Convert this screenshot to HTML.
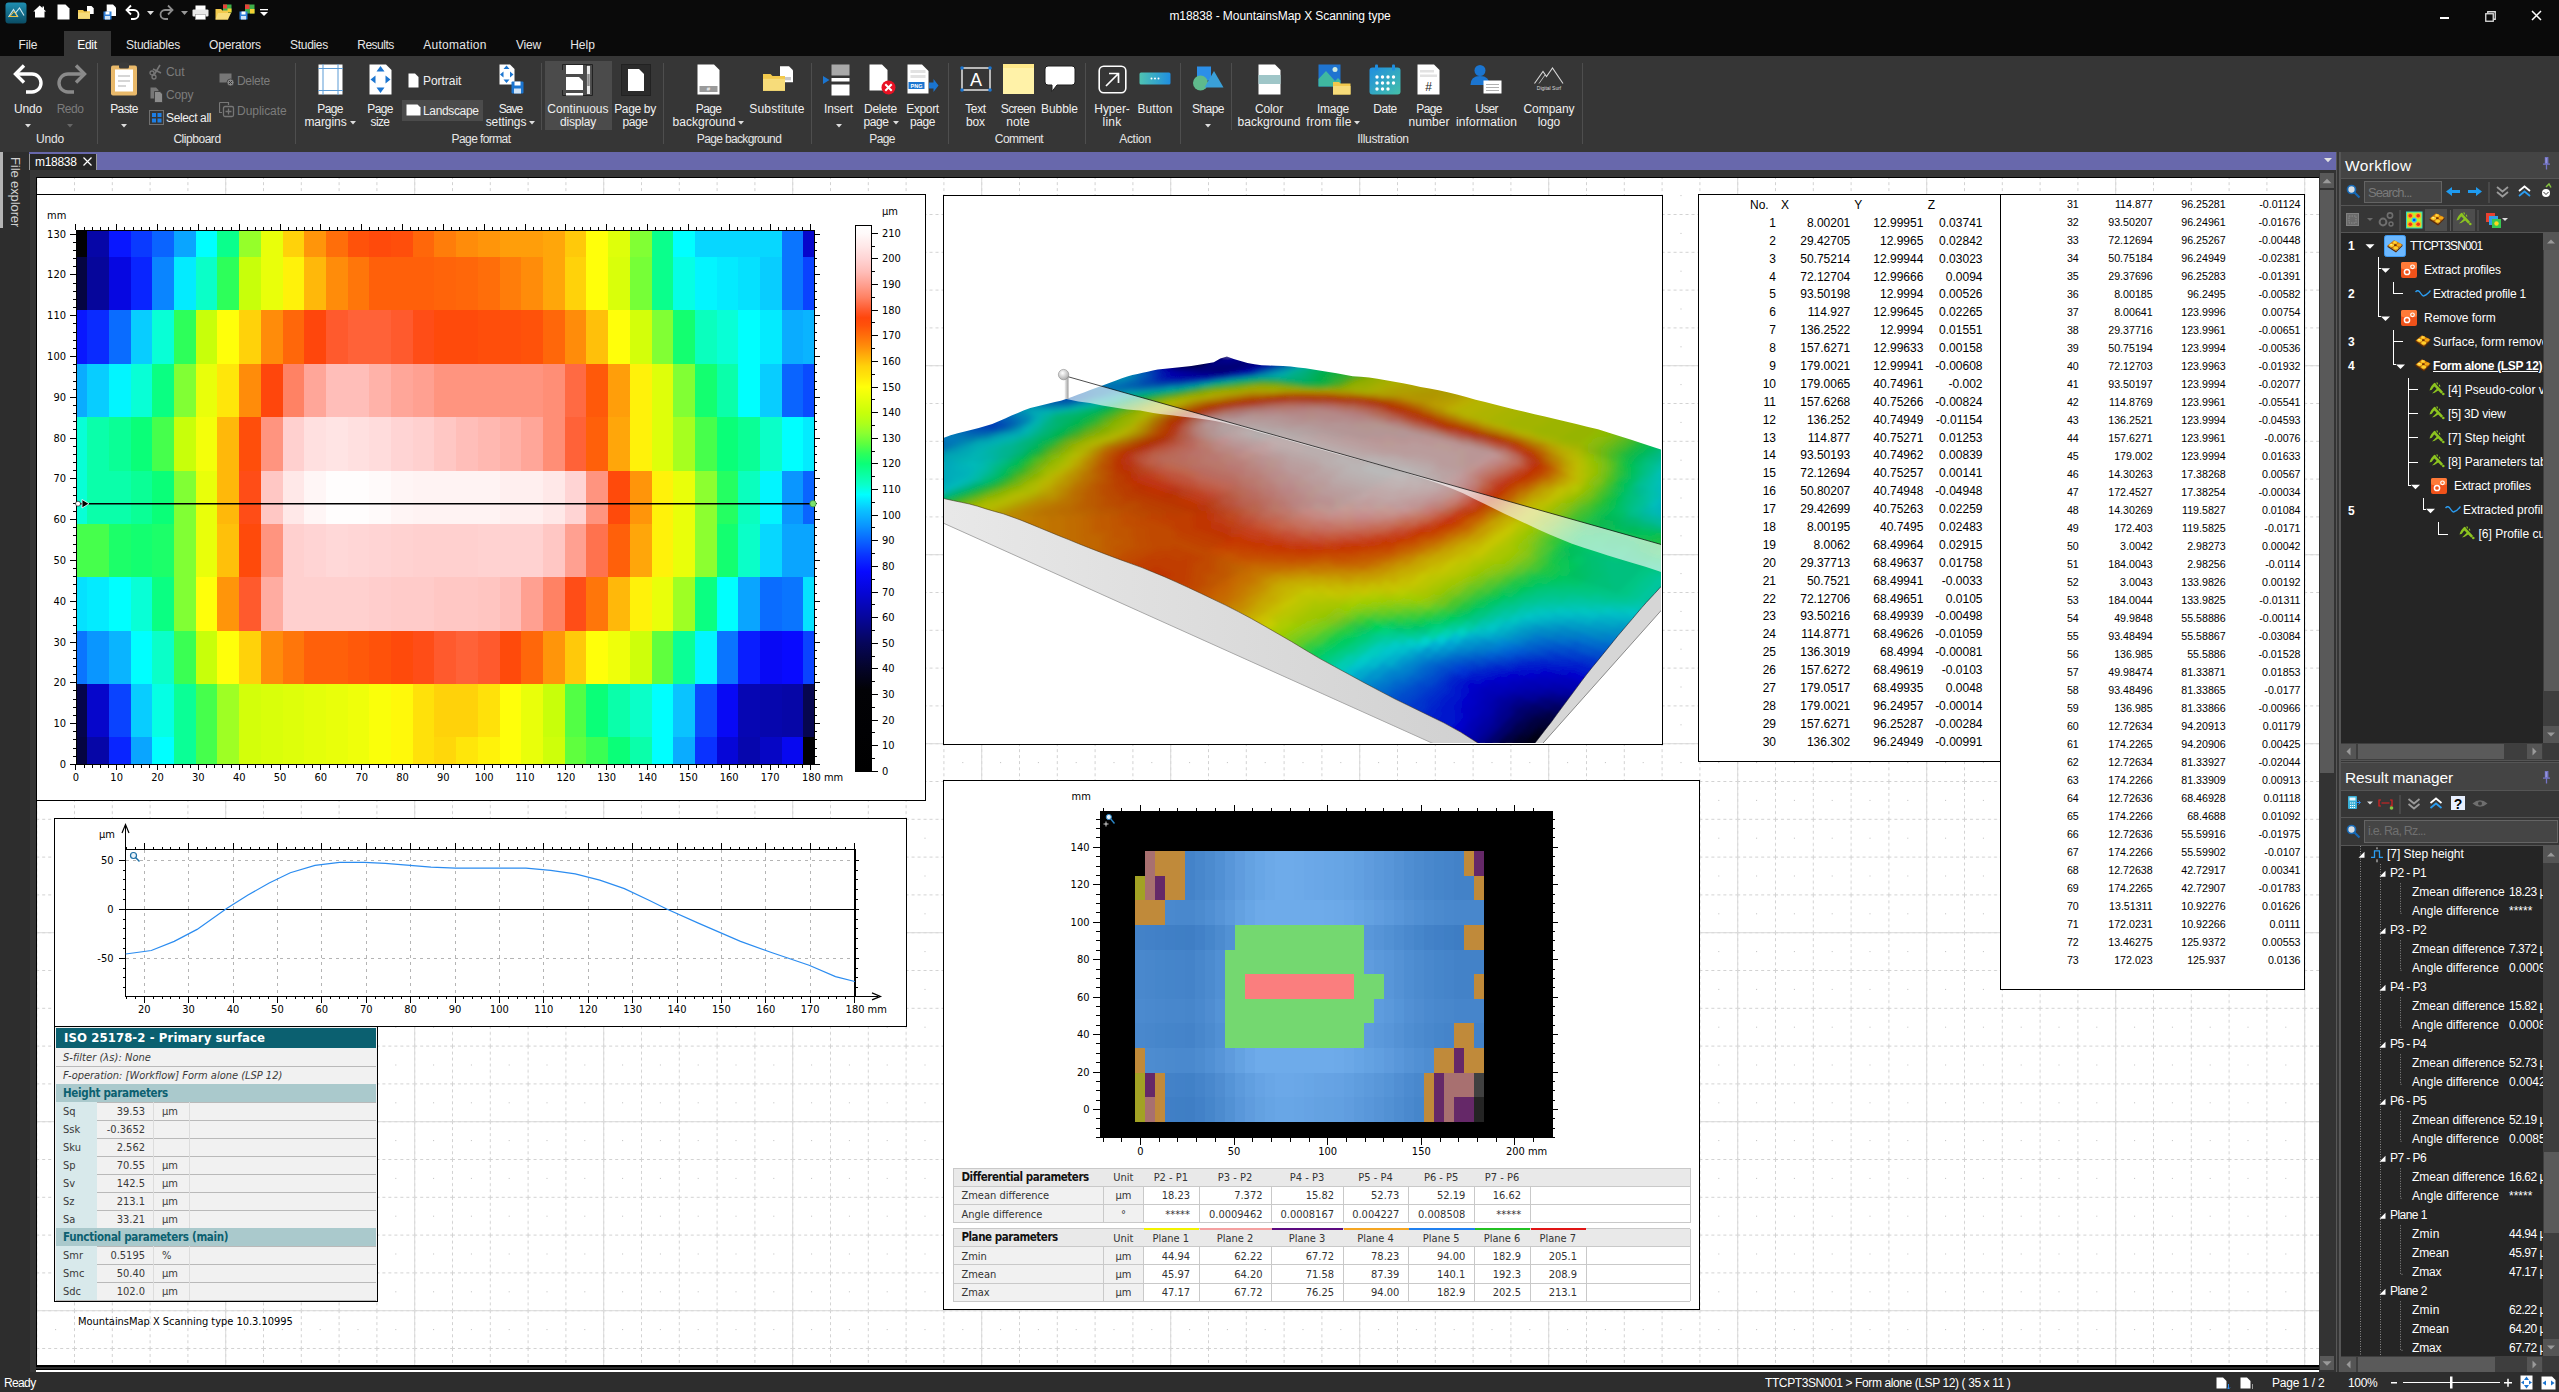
<!DOCTYPE html>
<html lang="en"><head><meta charset="utf-8"><title>m18838 - MountainsMap X Scanning type</title>
<style>
html,body{margin:0;padding:0;}
body{width:2559px;height:1392px;overflow:hidden;background:#363636;position:relative;font-family:"Liberation Sans",sans-serif;}
body div{position:absolute;}
.t{white-space:nowrap;}
.t div{position:static;}
</style></head>
<body>
<div style="left:0px;top:0px;width:2559px;height:56px;background:#0a0a0a;"></div><svg style="position:absolute;left:5px;top:2px" width="22" height="22" viewBox="0 0 22 22"><defs><linearGradient id="ag" x1="0" y1="0" x2="0" y2="1"><stop offset="0" stop-color="#1f8fb2"/><stop offset="1" stop-color="#0a4c64"/></linearGradient></defs><rect x="0.5" y="0.5" width="21" height="21" rx="3" fill="url(#ag)"/><path d="M3.5 15 L8.5 7.5 L13 15 M10.5 11 L14.5 6 L19 13.5" fill="none" stroke="#cfe8f0" stroke-width="1.1"/><path d="M5 14.5 L9 9.5 L12.5 14.5 H4" fill="none" stroke="#f0c040" stroke-width="1"/></svg><svg style="position:absolute;left:33px;top:5px" width="14" height="13" viewBox="0 0 14 13"><path d="M0.3 6.5 L6.7 0.5 L9.5 3 V1.5 H11 V4.5 L13.2 6.5 H11.5 V12.5 H2 V6.5 Z" fill="#fff"/></svg><svg style="position:absolute;left:57px;top:4px" width="13" height="16" viewBox="0 0 13 16"><path d="M0.5 0.5 H8.5 L12.5 4.5 V15.5 H0.5 Z" fill="#fff"/></svg><svg style="position:absolute;left:77px;top:5px" width="18" height="15" viewBox="0 0 18 15"><path d="M10 1 H14.5 L16.7 3.2 V9 H10 Z" fill="#fff"/><path d="M1 5 H6 L7.2 6.3 H13 V13.8 H1 Z" fill="#f2c94c"/><rect x="1" y="7.6" width="12" height="6.2" fill="#f7dc7a"/></svg><svg style="position:absolute;left:103px;top:4px" width="15" height="16" viewBox="0 0 15 16"><path d="M3.7 0.5 H10 L13 3.5 V12 H3.7 Z" fill="#fff"/><rect x="0.5" y="7.5" width="8" height="8" fill="#2f7fd8"/><rect x="2.5" y="7.5" width="4" height="3" fill="#fff"/><rect x="2" y="12" width="5" height="3.5" fill="#cfe3f7"/></svg><svg style="position:absolute;left:125px;top:4px" width="16" height="16" viewBox="0 0 16 16"><path d="M2 6 H9 A4.5 4.5 0 0 1 9 15 H6" fill="none" stroke="#fff" stroke-width="1.8"/><path d="M6 1.5 L1.5 6 L6 10.5" fill="none" stroke="#fff" stroke-width="1.8"/></svg><svg style="position:absolute;left:147px;top:11px" width="7" height="4" viewBox="0 0 7 4"><path d="M0 0 H7 L3.5 4 Z" fill="#ddd"/></svg><svg style="position:absolute;left:158px;top:4px" width="16" height="16" viewBox="0 0 16 16"><path d="M14 6 H7 A4.5 4.5 0 0 0 7 15 H10" fill="none" stroke="#8c8c8c" stroke-width="1.8"/><path d="M10 1.5 L14.5 6 L10 10.5" fill="none" stroke="#8c8c8c" stroke-width="1.8"/></svg><svg style="position:absolute;left:181px;top:11px" width="7" height="4" viewBox="0 0 7 4"><path d="M0 0 H7 L3.5 4 Z" fill="#999"/></svg><svg style="position:absolute;left:192px;top:5px" width="17" height="15" viewBox="0 0 17 15"><rect x="3.5" y="0.5" width="10" height="5" fill="#fff"/><rect x="0.5" y="4.5" width="16" height="7" rx="1" fill="#e8e8e8"/><rect x="3.5" y="9.5" width="10" height="5" fill="#fff" stroke="#999" stroke-width="0.6"/></svg><svg style="position:absolute;left:215px;top:4px" width="17" height="16" viewBox="0 0 17 16"><rect x="8" y="0.5" width="8.5" height="8" fill="#3fae49"/><rect x="8" y="0.5" width="4" height="4" fill="#e8433a"/><rect x="12.5" y="4.5" width="4" height="4" fill="#f5d033"/><path d="M0.5 5 H6 L7.5 6.5 H13 V15.5 H0.5 Z" fill="#f2c94c"/><path d="M0.5 15.5 L3 9 H16 L13 15.5 Z" fill="#f7dc7a"/></svg><svg style="position:absolute;left:239px;top:4px" width="16" height="16" viewBox="0 0 16 16"><rect x="6" y="0.5" width="9.5" height="9" fill="#3fae49"/><rect x="6" y="0.5" width="4.5" height="4.5" fill="#e8433a"/><rect x="11" y="5" width="4.5" height="4.5" fill="#f5d033"/><rect x="0.5" y="7.5" width="8" height="8" fill="#2f7fd8"/><rect x="2.5" y="7.5" width="4" height="3" fill="#fff"/><rect x="2" y="12" width="5" height="3.5" fill="#cfe3f7"/></svg><svg style="position:absolute;left:260px;top:9px" width="8" height="7" viewBox="0 0 8 7"><rect x="0" y="0" width="8" height="1.3" fill="#fff"/><path d="M0 3 H8 L4 7 Z" fill="#fff"/></svg><div class="t" style="top:8.0px;font-size:12px;line-height:16px;color:#fff;left:980px;width:600px;text-align:center;"><span style="letter-spacing:-0.06px">m18838 - MountainsMap X Scanning type</span></div><div style="left:2440px;top:17px;width:9px;height:1.5px;background:#fff;"></div><svg style="position:absolute;left:2485px;top:11px" width="11" height="11" viewBox="0 0 11 11"><rect x="0.75" y="2.75" width="7.5" height="7.5" fill="none" stroke="#ddd" stroke-width="1.3"/><path d="M2.75 2.5 V0.75 H10.25 V8.25 H8.5" fill="none" stroke="#ddd" stroke-width="1.3"/></svg><svg style="position:absolute;left:2531px;top:10px" width="11" height="11" viewBox="0 0 11 11"><path d="M1 1 L10 10 M10 1 L1 10" stroke="#fff" stroke-width="1.5"/></svg><div style="left:64px;top:31px;width:47px;height:25px;background:#363636;"></div><div class="t" style="top:37.0px;font-size:12px;line-height:16px;color:#e6e6e6;left:-272px;width:600px;text-align:center;"><span style="letter-spacing:-0.14px">File</span></div><div class="t" style="top:37.0px;font-size:12px;line-height:16px;color:#fff;left:-213px;width:600px;text-align:center;"><span style="letter-spacing:-0.25px">Edit</span></div><div class="t" style="top:37.0px;font-size:12px;line-height:16px;color:#e6e6e6;left:-147px;width:600px;text-align:center;"><span style="letter-spacing:-0.19px">Studiables</span></div><div class="t" style="top:37.0px;font-size:12px;line-height:16px;color:#e6e6e6;left:-65px;width:600px;text-align:center;"><span style="letter-spacing:-0.16px">Operators</span></div><div class="t" style="top:37.0px;font-size:12px;line-height:16px;color:#e6e6e6;left:9px;width:600px;text-align:center;"><span style="letter-spacing:-0.32px">Studies</span></div><div class="t" style="top:37.0px;font-size:12px;line-height:16px;color:#e6e6e6;left:75.5px;width:600px;text-align:center;"><span style="letter-spacing:-0.49px">Results</span></div><div class="t" style="top:37.0px;font-size:12px;line-height:16px;color:#e6e6e6;left:155px;width:600px;text-align:center;"><span style="letter-spacing:0.28px">Automation</span></div><div class="t" style="top:37.0px;font-size:12px;line-height:16px;color:#e6e6e6;left:228.5px;width:600px;text-align:center;"><span style="letter-spacing:-0.20px">View</span></div><div class="t" style="top:37.0px;font-size:12px;line-height:16px;color:#e6e6e6;left:282.5px;width:600px;text-align:center;"><span style="letter-spacing:0.00px">Help</span></div>
<div style="left:0px;top:56px;width:2559px;height:96px;background:#363636;"></div><div style="left:97px;top:63px;width:1px;height:81px;background:#4e4e4e;"></div><div style="left:295px;top:63px;width:1px;height:81px;background:#4e4e4e;"></div><div style="left:541px;top:63px;width:1px;height:67px;background:#4e4e4e;"></div><div style="left:663px;top:63px;width:1px;height:81px;background:#4e4e4e;"></div><div style="left:811px;top:63px;width:1px;height:81px;background:#4e4e4e;"></div><div style="left:948px;top:63px;width:1px;height:81px;background:#4e4e4e;"></div><div style="left:1085px;top:63px;width:1px;height:81px;background:#4e4e4e;"></div><div style="left:1180px;top:63px;width:1px;height:81px;background:#4e4e4e;"></div><div style="left:1231px;top:63px;width:1px;height:67px;background:#4e4e4e;"></div><div style="left:1582px;top:63px;width:1px;height:81px;background:#4e4e4e;"></div><div class="t" style="top:131.0px;font-size:12px;line-height:16px;color:#e6e6e6;left:-250px;width:600px;text-align:center;"><span style="letter-spacing:-0.17px">Undo</span></div><div class="t" style="top:131.0px;font-size:12px;line-height:16px;color:#e6e6e6;left:-103px;width:600px;text-align:center;"><span style="letter-spacing:-0.46px">Clipboard</span></div><div class="t" style="top:131.0px;font-size:12px;line-height:16px;color:#e6e6e6;left:181px;width:600px;text-align:center;"><span style="letter-spacing:-0.60px">Page format</span></div><div class="t" style="top:131.0px;font-size:12px;line-height:16px;color:#e6e6e6;left:439px;width:600px;text-align:center;"><span style="letter-spacing:-0.65px">Page background</span></div><div class="t" style="top:131.0px;font-size:12px;line-height:16px;color:#e6e6e6;left:582px;width:600px;text-align:center;"><span style="letter-spacing:-0.68px">Page</span></div><div class="t" style="top:131.0px;font-size:12px;line-height:16px;color:#e6e6e6;left:719px;width:600px;text-align:center;"><span style="letter-spacing:-0.52px">Comment</span></div><div class="t" style="top:131.0px;font-size:12px;line-height:16px;color:#e6e6e6;left:835px;width:600px;text-align:center;"><span style="letter-spacing:-0.29px">Action</span></div><div class="t" style="top:131.0px;font-size:12px;line-height:16px;color:#e6e6e6;left:1083px;width:600px;text-align:center;"><span style="letter-spacing:-0.26px">Illustration</span></div><div style="left:402px;top:100px;width:81px;height:21px;background:#4b4b4b;"></div><div style="left:545px;top:61px;width:67px;height:69px;background:#4b4b4b;"></div><div class="t" style="top:100.5px;font-size:12px;line-height:16px;color:#f0f0f0;left:-272px;width:600px;text-align:center;"><span style="letter-spacing:-0.17px">Undo</span></div><svg style="position:absolute;left:25.0px;top:124px" width="6" height="4" viewBox="0 0 6 4"><path d="M0 0 H6 L3 3.5 Z" fill="#ddd"/></svg><div class="t" style="top:100.5px;font-size:12px;line-height:16px;color:#7c7c7c;left:-230px;width:600px;text-align:center;"><span style="letter-spacing:-0.52px">Redo</span></div><svg style="position:absolute;left:67.0px;top:124px" width="6" height="4" viewBox="0 0 6 4"><path d="M0 0 H6 L3 3.5 Z" fill="#666"/></svg><div class="t" style="top:100.5px;font-size:12px;line-height:16px;color:#f0f0f0;left:-176px;width:600px;text-align:center;"><span style="letter-spacing:-0.64px">Paste</span></div><svg style="position:absolute;left:120.5px;top:124px" width="6" height="4" viewBox="0 0 6 4"><path d="M0 0 H6 L3 3.5 Z" fill="#ddd"/></svg><div class="t" style="top:64.0px;font-size:12px;line-height:16px;color:#7c7c7c;left:166px;"><span style="letter-spacing:-0.10px">Cut</span></div><div class="t" style="top:87.0px;font-size:12px;line-height:16px;color:#7c7c7c;left:166px;"><span style="letter-spacing:-0.20px">Copy</span></div><div class="t" style="top:109.5px;font-size:12px;line-height:16px;color:#f0f0f0;left:166px;"><span style="letter-spacing:-0.37px">Select all</span></div><div class="t" style="top:72.5px;font-size:12px;line-height:16px;color:#7c7c7c;left:237px;"><span style="letter-spacing:-0.31px">Delete</span></div><div class="t" style="top:102.5px;font-size:12px;line-height:16px;color:#7c7c7c;left:237px;"><span style="letter-spacing:-0.04px">Duplicate</span></div><div class="t" style="top:100.5px;font-size:12px;line-height:16px;color:#f0f0f0;left:30px;width:600px;text-align:center;"><span style="letter-spacing:-0.68px">Page</span></div><div class="t" style="top:113.5px;font-size:12px;line-height:16px;color:#f0f0f0;left:25.5px;width:600px;text-align:center;"><span style="letter-spacing:-0.07px">margins</span></div><svg style="position:absolute;left:349.5px;top:121px" width="6" height="4" viewBox="0 0 6 4"><path d="M0 0 H6 L3 3.5 Z" fill="#ddd"/></svg><div class="t" style="top:100.5px;font-size:12px;line-height:16px;color:#f0f0f0;left:80px;width:600px;text-align:center;"><span style="letter-spacing:-0.68px">Page</span></div><div class="t" style="top:113.5px;font-size:12px;line-height:16px;color:#f0f0f0;left:80px;width:600px;text-align:center;"><span style="letter-spacing:-0.64px">size</span></div><div class="t" style="top:72.5px;font-size:12px;line-height:16px;color:#f0f0f0;left:423px;"><span style="letter-spacing:-0.04px">Portrait</span></div><div class="t" style="top:102.5px;font-size:12px;line-height:16px;color:#f0f0f0;left:423px;"><span style="letter-spacing:-0.35px">Landscape</span></div><div class="t" style="top:100.5px;font-size:12px;line-height:16px;color:#f0f0f0;left:210.5px;width:600px;text-align:center;"><span style="letter-spacing:-0.99px">Save</span></div><div class="t" style="top:113.5px;font-size:12px;line-height:16px;color:#f0f0f0;left:206px;width:600px;text-align:center;"><span style="letter-spacing:-0.09px">settings</span></div><svg style="position:absolute;left:529.0px;top:121px" width="6" height="4" viewBox="0 0 6 4"><path d="M0 0 H6 L3 3.5 Z" fill="#ddd"/></svg><div class="t" style="top:100.5px;font-size:12px;line-height:16px;color:#f0f0f0;left:278px;width:600px;text-align:center;"><span style="letter-spacing:0.06px">Continuous</span></div><div class="t" style="top:113.5px;font-size:12px;line-height:16px;color:#f0f0f0;left:278px;width:600px;text-align:center;"><span style="letter-spacing:-0.19px">display</span></div><div class="t" style="top:100.5px;font-size:12px;line-height:16px;color:#f0f0f0;left:335px;width:600px;text-align:center;"><span style="letter-spacing:-0.35px">Page by</span></div><div class="t" style="top:113.5px;font-size:12px;line-height:16px;color:#f0f0f0;left:335px;width:600px;text-align:center;"><span style="letter-spacing:-0.48px">page</span></div><div class="t" style="top:100.5px;font-size:12px;line-height:16px;color:#f0f0f0;left:408.5px;width:600px;text-align:center;"><span style="letter-spacing:-0.68px">Page</span></div><div class="t" style="top:113.5px;font-size:12px;line-height:16px;color:#f0f0f0;left:404px;width:600px;text-align:center;"><span style="letter-spacing:0.01px">background</span></div><svg style="position:absolute;left:738.0px;top:121px" width="6" height="4" viewBox="0 0 6 4"><path d="M0 0 H6 L3 3.5 Z" fill="#ddd"/></svg><div class="t" style="top:100.5px;font-size:12px;line-height:16px;color:#f0f0f0;left:477px;width:600px;text-align:center;"><span style="letter-spacing:0.21px">Substitute</span></div><div class="t" style="top:100.5px;font-size:12px;line-height:16px;color:#f0f0f0;left:538.5px;width:600px;text-align:center;"><span style="letter-spacing:-0.17px">Insert</span></div><svg style="position:absolute;left:835.5px;top:124px" width="6" height="4" viewBox="0 0 6 4"><path d="M0 0 H6 L3 3.5 Z" fill="#ddd"/></svg><div class="t" style="top:100.5px;font-size:12px;line-height:16px;color:#f0f0f0;left:580.5px;width:600px;text-align:center;"><span style="letter-spacing:-0.31px">Delete</span></div><div class="t" style="top:113.5px;font-size:12px;line-height:16px;color:#f0f0f0;left:576px;width:600px;text-align:center;"><span style="letter-spacing:-0.48px">page</span></div><svg style="position:absolute;left:892.5px;top:121px" width="6" height="4" viewBox="0 0 6 4"><path d="M0 0 H6 L3 3.5 Z" fill="#ddd"/></svg><div class="t" style="top:100.5px;font-size:12px;line-height:16px;color:#f0f0f0;left:622.5px;width:600px;text-align:center;"><span style="letter-spacing:-0.36px">Export</span></div><div class="t" style="top:113.5px;font-size:12px;line-height:16px;color:#f0f0f0;left:622.5px;width:600px;text-align:center;"><span style="letter-spacing:-0.48px">page</span></div><div class="t" style="top:100.5px;font-size:12px;line-height:16px;color:#f0f0f0;left:675.5px;width:600px;text-align:center;"><span style="letter-spacing:-0.35px">Text</span></div><div class="t" style="top:113.5px;font-size:12px;line-height:16px;color:#f0f0f0;left:675.5px;width:600px;text-align:center;"><span style="letter-spacing:-0.19px">box</span></div><div class="t" style="top:100.5px;font-size:12px;line-height:16px;color:#f0f0f0;left:718px;width:600px;text-align:center;"><span style="letter-spacing:-0.61px">Screen</span></div><div class="t" style="top:113.5px;font-size:12px;line-height:16px;color:#f0f0f0;left:718px;width:600px;text-align:center;"><span style="letter-spacing:0.01px">note</span></div><div class="t" style="top:100.5px;font-size:12px;line-height:16px;color:#f0f0f0;left:759.5px;width:600px;text-align:center;"><span style="letter-spacing:-0.08px">Bubble</span></div><div class="t" style="top:100.5px;font-size:12px;line-height:16px;color:#f0f0f0;left:812px;width:600px;text-align:center;"><span style="letter-spacing:-0.12px">Hyper-</span></div><div class="t" style="top:113.5px;font-size:12px;line-height:16px;color:#f0f0f0;left:812px;width:600px;text-align:center;"><span style="letter-spacing:0.20px">link</span></div><div class="t" style="top:100.5px;font-size:12px;line-height:16px;color:#f0f0f0;left:855px;width:600px;text-align:center;"><span style="letter-spacing:0.05px">Button</span></div><div class="t" style="top:100.5px;font-size:12px;line-height:16px;color:#f0f0f0;left:908px;width:600px;text-align:center;"><span style="letter-spacing:-0.56px">Shape</span></div><svg style="position:absolute;left:1204.5px;top:124px" width="6" height="4" viewBox="0 0 6 4"><path d="M0 0 H6 L3 3.5 Z" fill="#ddd"/></svg><div class="t" style="top:100.5px;font-size:12px;line-height:16px;color:#f0f0f0;left:969px;width:600px;text-align:center;"><span style="letter-spacing:-0.12px">Color</span></div><div class="t" style="top:113.5px;font-size:12px;line-height:16px;color:#f0f0f0;left:969px;width:600px;text-align:center;"><span style="letter-spacing:0.01px">background</span></div><div class="t" style="top:100.5px;font-size:12px;line-height:16px;color:#f0f0f0;left:1033px;width:600px;text-align:center;"><span style="letter-spacing:-0.29px">Image</span></div><div class="t" style="top:113.5px;font-size:12px;line-height:16px;color:#f0f0f0;left:1029px;width:600px;text-align:center;"><span style="letter-spacing:0.29px">from file</span></div><svg style="position:absolute;left:1354.0px;top:121px" width="6" height="4" viewBox="0 0 6 4"><path d="M0 0 H6 L3 3.5 Z" fill="#ddd"/></svg><div class="t" style="top:100.5px;font-size:12px;line-height:16px;color:#f0f0f0;left:1085px;width:600px;text-align:center;"><span style="letter-spacing:-0.49px">Date</span></div><div class="t" style="top:100.5px;font-size:12px;line-height:16px;color:#f0f0f0;left:1129px;width:600px;text-align:center;"><span style="letter-spacing:-0.68px">Page</span></div><div class="t" style="top:113.5px;font-size:12px;line-height:16px;color:#f0f0f0;left:1129px;width:600px;text-align:center;"><span style="letter-spacing:0.05px">number</span></div><div class="t" style="top:100.5px;font-size:12px;line-height:16px;color:#f0f0f0;left:1186.5px;width:600px;text-align:center;"><span style="letter-spacing:-0.71px">User</span></div><div class="t" style="top:113.5px;font-size:12px;line-height:16px;color:#f0f0f0;left:1186.5px;width:600px;text-align:center;"><span style="letter-spacing:0.17px">information</span></div><div class="t" style="top:100.5px;font-size:12px;line-height:16px;color:#f0f0f0;left:1249px;width:600px;text-align:center;"><span style="letter-spacing:-0.05px">Company</span></div><div class="t" style="top:113.5px;font-size:12px;line-height:16px;color:#f0f0f0;left:1249px;width:600px;text-align:center;"><span style="letter-spacing:-0.05px">logo</span></div><svg style="position:absolute;left:13px;top:63px" width="32" height="32" viewBox="0 0 32 32"><path d="M4 11 H19 A9 9 0 0 1 19 29 H13" fill="none" stroke="#fff" stroke-width="3.4"/><path d="M11 2.5 L2.5 11 L11 19.5" fill="none" stroke="#fff" stroke-width="3.4"/></svg><svg style="position:absolute;left:55px;top:63px" width="32" height="32" viewBox="0 0 32 32"><path d="M28 11 H13 A9 9 0 0 0 13 29 H19" fill="none" stroke="#8a8a8a" stroke-width="3.4"/><path d="M21 2.5 L29.5 11 L21 19.5" fill="none" stroke="#8a8a8a" stroke-width="3.4"/></svg><svg style="position:absolute;left:110px;top:62px" width="28" height="34" viewBox="0 0 28 34"><rect x="1" y="3.5" width="26" height="30" rx="2" fill="#e9b96a"/><rect x="9" y="0.5" width="10" height="6" rx="1.5" fill="#3a3a3a"/><rect x="5" y="7.5" width="18" height="22" fill="#fff"/><rect x="8" y="13" width="12" height="2" fill="#d6d6d6"/><rect x="8" y="18" width="12" height="2" fill="#d6d6d6"/><rect x="8" y="23" width="8" height="2" fill="#d6d6d6"/></svg><svg style="position:absolute;left:149px;top:64px" width="14" height="16" viewBox="0 0 14 16"><path d="M11 1 L5 11 M4 5 L12 9" stroke="#777" stroke-width="1.6" fill="none"/><circle cx="3" cy="9" r="2" fill="none" stroke="#777" stroke-width="1.3"/><circle cx="5" cy="13" r="2" fill="none" stroke="#777" stroke-width="1.3"/></svg><svg style="position:absolute;left:150px;top:87px" width="13" height="16" viewBox="0 0 13 16"><path d="M0.5 0.5 H6 L8.5 3 V11.5 H0.5 Z" fill="#777"/><path d="M4.5 4.5 H10 L12.5 7 V15.5 H4.5 Z" fill="#8c8c8c" stroke="#363636" stroke-width="0.8"/></svg><svg style="position:absolute;left:149px;top:110px" width="15" height="15" viewBox="0 0 15 15"><rect x="0.5" y="0.5" width="14" height="14" fill="none" stroke="#aaa" stroke-width="1" stroke-dasharray="1 1"/><rect x="3" y="3" width="4" height="4" fill="#1d7fe6"/><rect x="8.5" y="3" width="4" height="4" fill="#1d7fe6"/><rect x="3" y="8.5" width="4" height="4" fill="#1d7fe6"/><rect x="8.5" y="8.5" width="4" height="4" fill="#1d7fe6"/></svg><svg style="position:absolute;left:219px;top:73px" width="16" height="14" viewBox="0 0 16 14"><rect x="0.5" y="0.5" width="12" height="9" fill="#777"/><circle cx="11.5" cy="9.5" r="3.5" fill="#8a8a8a" stroke="#363636" stroke-width="0.8"/><path d="M10 8 L13 11 M13 8 L10 11" stroke="#363636" stroke-width="1"/></svg><svg style="position:absolute;left:219px;top:102px" width="16" height="16" viewBox="0 0 16 16"><path d="M0.5 0.5 H9.5 V3 M0.5 0.5 V10.5 H3" fill="none" stroke="#777" stroke-width="1.2"/><rect x="4.5" y="4.5" width="10" height="10" rx="1.5" fill="none" stroke="#777" stroke-width="1.3"/><path d="M9.5 6.5 V12.5 M6.5 9.5 H12.5" stroke="#777" stroke-width="1.3"/></svg><svg style="position:absolute;left:318px;top:64px" width="25" height="31" viewBox="0 0 25 31"><rect x="0.5" y="0.5" width="24" height="30" fill="#fff"/><path d="M5 0 V31 M20 0 V31 M0 4.5 H25 M0 26.5 H25" stroke="#5b9bd5" stroke-width="1"/></svg><svg style="position:absolute;left:369px;top:64px" width="23" height="31" viewBox="0 0 23 31"><path d="M0.5 0.5 H17 L22.5 6 V30.5 H0.5 Z" fill="#fff"/><path d="M11.5 2 L15.5 7.5 H7.5 Z M11.5 29 L15.5 23.5 H7.5 Z M1.5 15.5 L6.5 11.5 V19.5 Z M21.5 15.5 L16.5 11.5 V19.5 Z" fill="#1b75d0"/></svg><svg style="position:absolute;left:408px;top:73px" width="11" height="15" viewBox="0 0 11 15"><path d="M0.5 0.5 H7 L10.5 4 V14.5 H0.5 Z" fill="#fff"/></svg><svg style="position:absolute;left:406px;top:104px" width="15" height="12" viewBox="0 0 15 12"><path d="M0.5 0.5 H11.5 L14.5 3.5 V11.5 H0.5 Z" fill="#fff"/></svg><svg style="position:absolute;left:497px;top:64px" width="28" height="31" viewBox="0 0 28 31"><path d="M2.5 0.5 H13 L17.5 5 V20.5 H2.5 Z" fill="#fff"/><path d="M9.5 1.5 L12.5 5 H6.5 Z M9.5 19 L12.5 15.5 H6.5 Z M3 10.5 L6.5 7.5 V13.5 Z M16.5 10.5 L13 7.5 V13.5 Z" fill="#1b75d0"/><rect x="14.5" y="17.5" width="12" height="12" rx="1" fill="#1b75d0"/><rect x="17.5" y="17.5" width="6" height="4" fill="#fff"/><rect x="17" y="24.5" width="7" height="5" fill="#cfe3f7"/></svg><svg style="position:absolute;left:562px;top:64px" width="31" height="32" viewBox="0 0 31 32"><path d="M0.5 6 V0.5 H30.5 V31.5 H0.5 V26" fill="none" stroke="#222" stroke-width="1"/><rect x="4" y="1" width="17" height="9" fill="#fff"/><path d="M4 13 H17 L21 17 V26 H4 Z" fill="#fff"/><rect x="4" y="29" width="17" height="2.5" fill="#fff"/><rect x="24.5" y="1.5" width="4" height="29" fill="#e8e8e8" stroke="#222" stroke-width="0.6"/><rect x="25.3" y="10" width="2.4" height="12" fill="#8c8c8c"/></svg><svg style="position:absolute;left:621px;top:64px" width="30" height="32" viewBox="0 0 30 32"><rect x="0.5" y="0.5" width="29" height="31" fill="#2b2b2b" stroke="#222"/><path d="M7 5 H18 L23 10 V27 H7 Z" fill="#fff"/></svg><svg style="position:absolute;left:697px;top:64px" width="23" height="31" viewBox="0 0 23 31"><path d="M0.5 0.5 H17 L22.5 6 V30.5 H0.5 Z" fill="#fff"/><rect x="2.5" y="22" width="18" height="6" fill="#9a9a9a"/><text x="11.5" y="27.3" font-size="6" font-family="Liberation Sans, sans-serif" fill="#fff" text-anchor="middle">#</text></svg><svg style="position:absolute;left:761px;top:64px" width="33" height="30" viewBox="0 0 33 30"><path d="M19 2.3 H28 L32 6.3 V18.3 H19 Z" fill="#fff"/><rect x="21" y="13" width="9" height="3.3" fill="#c8c8c8"/><path d="M2 10 H9.5 L11.5 12 H24 V26.8 H2 Z" fill="#f2c94c"/><path d="M2 26.8 V14.8 H24 V26.8 Z" fill="#f7dc7a"/></svg><svg style="position:absolute;left:822px;top:64px" width="30" height="32" viewBox="0 0 30 32"><rect x="9.5" y="0.5" width="18" height="11" fill="#a9a9a9"/><rect x="9.5" y="20.5" width="18" height="11" fill="#fff"/><path d="M9.5 14 H27.5 V17.5 H9.5 Z" fill="#fff"/><path d="M1 12 L7.5 16 L1 20 Z" fill="#1b75d0"/></svg><svg style="position:absolute;left:869px;top:64px" width="28" height="32" viewBox="0 0 28 32"><path d="M0.5 0.5 H13 L18.5 6 V26.5 H0.5 Z" fill="#fff"/><circle cx="19.5" cy="23.5" r="7" fill="#e81123"/><path d="M16.3 20.3 L22.7 26.7 M22.7 20.3 L16.3 26.7" stroke="#fff" stroke-width="2"/></svg><svg style="position:absolute;left:907px;top:64px" width="32" height="31" viewBox="0 0 32 31"><path d="M0.5 0.5 H15 L21.5 7 V29.5 H0.5 Z" fill="#fff"/><rect x="3.5" y="6" width="15" height="3" fill="#e2e2e2"/><rect x="3.5" y="11" width="15" height="3" fill="#e2e2e2"/><rect x="1.5" y="18" width="16" height="7" fill="#1b75d0"/><text x="9.5" y="23.6" font-size="5.5" font-weight="bold" font-family="Liberation Sans, sans-serif" fill="#fff" text-anchor="middle">PNG</text><path d="M22 18.5 H26.5 V15 L31.5 21.5 L26.5 28 V24.5 H22 Z" fill="#1b75d0"/></svg><svg style="position:absolute;left:960px;top:66px" width="32" height="26" viewBox="0 0 32 26"><rect x="2" y="2" width="28" height="22" fill="none" stroke="#fff" stroke-width="1.3"/><text x="16" y="19.5" font-size="18" font-family="Liberation Sans, sans-serif" fill="#fff" text-anchor="middle">A</text><circle cx="2" cy="2" r="1.8" fill="#1b75d0"/><circle cx="30" cy="2" r="1.8" fill="#1b75d0"/><circle cx="2" cy="24" r="1.8" fill="#1b75d0"/><circle cx="30" cy="24" r="1.8" fill="#1b75d0"/></svg><div style="left:1002.5px;top:64px;width:31px;height:30px;background:#fff2a8;border-top:4px solid #ffe98a;box-sizing:border-box;"></div><svg style="position:absolute;left:1044px;top:65px" width="32" height="28" viewBox="0 0 32 28"><path d="M4 1 H28 Q31 1 31 4 V17 Q31 20 28 20 H13 L8 26.5 V20 H4 Q1 20 1 17 V4 Q1 1 4 1 Z" fill="#fff" stroke="#1e1e1e" stroke-width="1"/></svg><svg style="position:absolute;left:1098px;top:65px" width="29" height="29" viewBox="0 0 29 29"><rect x="1.2" y="1.2" width="26.6" height="26.6" rx="4.5" fill="none" stroke="#fff" stroke-width="1.6"/><path d="M8 21 L20 9 M11 8.5 H20.5 V18" fill="none" stroke="#fff" stroke-width="1.7"/></svg><svg style="position:absolute;left:1139px;top:72px" width="32" height="14" viewBox="0 0 32 14"><defs><linearGradient id="bg1" x1="0" y1="0" x2="1" y2="0"><stop offset="0" stop-color="#4fc3b2"/><stop offset="1" stop-color="#1f8ee0"/></linearGradient></defs><rect x="0.5" y="0.5" width="31" height="12" rx="1.5" fill="url(#bg1)"/><circle cx="12.5" cy="6.5" r="1" fill="#fff"/><circle cx="16" cy="6.5" r="1" fill="#fff"/><circle cx="19.5" cy="6.5" r="1" fill="#fff"/></svg><svg style="position:absolute;left:1192px;top:66px" width="32" height="26" viewBox="0 0 32 26"><rect x="5" y="0.5" width="14" height="14" fill="#2c8fe8"/><circle cx="8.5" cy="17" r="7.5" fill="#5fba8c"/><path d="M22 5 L31.5 21.5 H12.5 Z" fill="#3aa0d8"/></svg><svg style="position:absolute;left:1258px;top:64px" width="23" height="31" viewBox="0 0 23 31"><path d="M0.5 0.5 H17 L22.5 6 V30.5 H0.5 Z" fill="#fff"/><rect x="0.5" y="11" width="22" height="9" fill="#9fc6c8"/></svg><svg style="position:absolute;left:1318px;top:64px" width="33" height="31" viewBox="0 0 33 31"><rect x="0.5" y="0.5" width="22" height="22" fill="#1f74d0"/><circle cx="17" cy="5.5" r="2.5" fill="#cfeadf"/><path d="M0.5 22.5 V15 L8 7 L17 17 L20 14 L22.5 16.5 V22.5 Z" fill="#3fb8a0"/><path d="M15 18 H21 L22.5 19.5 H32.5 V30.5 H15 Z" fill="#f2c94c"/><path d="M15 30.5 V22 H32.5 V30.5 Z" fill="#f7dc7a"/></svg><svg style="position:absolute;left:1369px;top:64px" width="32" height="31" viewBox="0 0 32 31"><defs><linearGradient id="dg" x1="0" y1="0" x2="1" y2="1"><stop offset="0" stop-color="#1f8ee0"/><stop offset="1" stop-color="#45c0a8"/></linearGradient></defs><rect x="0.5" y="3.5" width="31" height="27" rx="3" fill="url(#dg)"/><rect x="6" y="0.5" width="3" height="6" rx="1" fill="#1f8ee0"/><rect x="23" y="0.5" width="3" height="6" rx="1" fill="#1f8ee0"/><g fill="#fff"><circle cx="8" cy="13" r="1.7"/><circle cx="13.5" cy="13" r="1.7"/><circle cx="19" cy="13" r="1.7"/><circle cx="24.5" cy="13" r="1.7"/><circle cx="8" cy="19" r="1.7"/><circle cx="13.5" cy="19" r="1.7"/><circle cx="19" cy="19" r="1.7"/><circle cx="24.5" cy="19" r="1.7"/><circle cx="8" cy="25" r="1.7"/><circle cx="13.5" cy="25" r="1.7"/><circle cx="19" cy="25" r="1.7"/></g></svg><svg style="position:absolute;left:1417px;top:64px" width="23" height="31" viewBox="0 0 23 31"><path d="M0.5 0.5 H17 L22.5 6 V30.5 H0.5 Z" fill="#fff"/><rect x="3" y="6" width="14" height="2.5" fill="#e2e2e2"/><rect x="3" y="10.5" width="17" height="2.5" fill="#e2e2e2"/><text x="11.5" y="26.5" font-size="12" font-family="Liberation Sans, sans-serif" fill="#222" text-anchor="middle">#</text></svg><svg style="position:absolute;left:1470px;top:64px" width="33" height="31" viewBox="0 0 33 31"><circle cx="10" cy="6.5" r="5.5" fill="#1b75d0"/><path d="M0.5 21 Q0.5 12 10 12 Q19.5 12 19.5 21 Z" fill="#1b75d0"/><rect x="13.5" y="16.5" width="18" height="13" fill="#fff"/><path d="M16 20.5 H29 M16 23.5 H29 M16 26.5 H29" stroke="#b0b0b0" stroke-width="1"/></svg><svg style="position:absolute;left:1532px;top:66px" width="34" height="26" viewBox="0 0 34 26"><path d="M2.5 17.5 L11 5.5 L14.5 10.5 L20.5 2 L31 17.5" fill="none" stroke="#d8d8d8" stroke-width="1.1"/><path d="M7 17.5 L13 9" fill="none" stroke="#d8d8d8" stroke-width="0.8"/><text x="17" y="24" font-size="5" font-family="Liberation Sans, sans-serif" fill="#d8d8d8" text-anchor="middle">Digital Surf</text></svg>
<div style="left:0px;top:152px;width:30px;height:1220px;background:#2d2d2d;"></div><div style="left:0px;top:152px;width:3px;height:76px;background:#b4b4b4;"></div><div class="t" style="left:7px;top:157px;font-size:13px;color:#d0d0d0;writing-mode:vertical-rl;line-height:16px;letter-spacing:-0.1px">File explorer</div><div style="left:29px;top:152px;width:2307px;height:18px;background:#6868ac;"></div><div style="left:29px;top:154px;width:68px;height:16px;background:#262626;border-left:1px solid #9a9a9a;border-right:1px solid #9a9a9a;box-sizing:border-box;"></div><div class="t" style="top:153.5px;font-size:12px;line-height:16px;color:#fff;left:35px;"><span style="letter-spacing:-0.31px">m18838</span></div><svg style="position:absolute;left:83px;top:156.5px" width="9" height="9"><path d="M0.5 0.5 L8.5 8.5 M8.5 0.5 L0.5 8.5" stroke="#fff" stroke-width="1.2"/></svg><svg style="position:absolute;left:2324px;top:157.8px" width="8" height="5"><path d="M0 0 H8 L4 4.3 Z" fill="#e2e2e2"/></svg>
<svg style="position:absolute;left:36px;top:177px" width="2283" height="1188"><defs><pattern id="gd" x="0.2" y="-0.8" width="37.8" height="37.8" patternUnits="userSpaceOnUse"><path d="M0.5 0 V37.8" stroke="#d2d2d2" stroke-width="1" stroke-dasharray="3 3" fill="none"/><path d="M0 0.5 H37.8" stroke="#d2d2d2" stroke-width="1" stroke-dasharray="3 3" fill="none"/><rect x="18.9" y="18.9" width="1" height="1" fill="#bdbdbd"/></pattern><pattern id="gs" x="0.2" y="-0.8" width="189" height="189" patternUnits="userSpaceOnUse"><rect x="0" y="0" width="1" height="189" fill="#dadada"/><rect x="0" y="0" width="189" height="1" fill="#dadada"/></pattern></defs><rect width="2283" height="1188" fill="#fff"/><rect width="2283" height="1188" fill="url(#gd)"/><rect width="2283" height="1188" fill="url(#gs)"/><rect x="0" y="0" width="1" height="1188" fill="#000"/><rect x="0" y="0" width="2283" height="1" fill="#000"/></svg><div style="left:36px;top:1365px;width:2283px;height:5px;background:#000;"></div><div style="left:36px;top:1366.6px;width:2283px;height:2.2px;background:#2a2a2a;"></div><div style="left:36px;top:1369.8px;width:2283px;height:2.2px;background:#fff;"></div>
<div style="left:36px;top:194px;width:890px;height:607px;background:#fff;border:1px solid #000;box-sizing:border-box;"></div><svg style="position:absolute;left:36px;top:194px" width="890" height="607" viewBox="36 194 890 607" shape-rendering="crispEdges"><rect x="77.0" y="231.0" width="10.6" height="26.4" fill="#010104"/><rect x="87.2" y="231.0" width="22.1" height="26.4" fill="#0606a7"/><rect x="108.9" y="231.0" width="22.1" height="26.4" fill="#0917ff"/><rect x="130.6" y="231.0" width="22.1" height="26.4" fill="#0a3aff"/><rect x="152.3" y="231.0" width="22.1" height="26.4" fill="#0a64ff"/><rect x="174.0" y="231.0" width="22.1" height="26.4" fill="#0aa5ff"/><rect x="195.7" y="231.0" width="22.1" height="26.4" fill="#00ffff"/><rect x="217.4" y="231.0" width="22.1" height="26.4" fill="#0aff8c"/><rect x="239.1" y="231.0" width="22.1" height="26.4" fill="#95ff2a"/><rect x="260.8" y="231.0" width="22.1" height="26.4" fill="#e9ff0a"/><rect x="282.5" y="231.0" width="22.1" height="26.4" fill="#ffd20a"/><rect x="304.2" y="231.0" width="22.1" height="26.4" fill="#ff950a"/><rect x="325.9" y="231.0" width="22.1" height="26.4" fill="#ff6e0a"/><rect x="347.6" y="231.0" width="22.1" height="26.4" fill="#ff520a"/><rect x="369.3" y="231.0" width="22.1" height="26.4" fill="#ff4a0b"/><rect x="391.0" y="231.0" width="22.1" height="26.4" fill="#ff4e0b"/><rect x="412.7" y="231.0" width="22.1" height="26.4" fill="#ff670a"/><rect x="434.4" y="231.0" width="22.1" height="26.4" fill="#ff7d0a"/><rect x="456.2" y="231.0" width="22.1" height="26.4" fill="#ff8c0a"/><rect x="477.9" y="231.0" width="22.1" height="26.4" fill="#ff950a"/><rect x="499.6" y="231.0" width="22.1" height="26.4" fill="#ff9e0a"/><rect x="521.3" y="231.0" width="22.1" height="26.4" fill="#ff9e0a"/><rect x="543.0" y="231.0" width="22.1" height="26.4" fill="#ffa60a"/><rect x="564.7" y="231.0" width="22.1" height="26.4" fill="#ffc90a"/><rect x="586.4" y="231.0" width="22.1" height="26.4" fill="#ffff0a"/><rect x="608.1" y="231.0" width="22.1" height="26.4" fill="#deff0a"/><rect x="629.8" y="231.0" width="22.1" height="26.4" fill="#81ff34"/><rect x="651.5" y="231.0" width="22.1" height="26.4" fill="#0aff8c"/><rect x="673.2" y="231.0" width="22.1" height="26.4" fill="#00ffff"/><rect x="694.9" y="231.0" width="22.1" height="26.4" fill="#07d7ff"/><rect x="716.6" y="231.0" width="22.1" height="26.4" fill="#07d7ff"/><rect x="738.3" y="231.0" width="22.1" height="26.4" fill="#07d7ff"/><rect x="760.0" y="231.0" width="22.1" height="26.4" fill="#07d7ff"/><rect x="781.7" y="231.0" width="22.1" height="26.4" fill="#0a75ff"/><rect x="803.4" y="231.0" width="11.3" height="26.4" fill="#0606cb"/><rect x="77.0" y="257.0" width="10.6" height="53.8" fill="#050541"/><rect x="87.2" y="257.0" width="22.1" height="53.8" fill="#06069b"/><rect x="108.9" y="257.0" width="22.1" height="53.8" fill="#0607e1"/><rect x="130.6" y="257.0" width="22.1" height="53.8" fill="#0925ff"/><rect x="152.3" y="257.0" width="22.1" height="53.8" fill="#0a85ff"/><rect x="174.0" y="257.0" width="22.1" height="53.8" fill="#03ebff"/><rect x="195.7" y="257.0" width="22.1" height="53.8" fill="#0affc8"/><rect x="217.4" y="257.0" width="22.1" height="53.8" fill="#2dff5a"/><rect x="239.1" y="257.0" width="22.1" height="53.8" fill="#c8ff0a"/><rect x="260.8" y="257.0" width="22.1" height="53.8" fill="#e9ff0a"/><rect x="282.5" y="257.0" width="22.1" height="53.8" fill="#fff20a"/><rect x="304.2" y="257.0" width="22.1" height="53.8" fill="#ffb80a"/><rect x="325.9" y="257.0" width="22.1" height="53.8" fill="#ff8c0a"/><rect x="347.6" y="257.0" width="22.1" height="53.8" fill="#ff760a"/><rect x="369.3" y="257.0" width="22.1" height="53.8" fill="#ff600a"/><rect x="391.0" y="257.0" width="22.1" height="53.8" fill="#ff600a"/><rect x="412.7" y="257.0" width="22.1" height="53.8" fill="#ff600a"/><rect x="434.4" y="257.0" width="22.1" height="53.8" fill="#ff640a"/><rect x="456.2" y="257.0" width="22.1" height="53.8" fill="#ff670a"/><rect x="477.9" y="257.0" width="22.1" height="53.8" fill="#ff6e0a"/><rect x="499.6" y="257.0" width="22.1" height="53.8" fill="#ff7d0a"/><rect x="521.3" y="257.0" width="22.1" height="53.8" fill="#ff8c0a"/><rect x="543.0" y="257.0" width="22.1" height="53.8" fill="#ffa60a"/><rect x="564.7" y="257.0" width="22.1" height="53.8" fill="#ffd20a"/><rect x="586.4" y="257.0" width="22.1" height="53.8" fill="#ffff0a"/><rect x="608.1" y="257.0" width="22.1" height="53.8" fill="#d9ff0a"/><rect x="629.8" y="257.0" width="22.1" height="53.8" fill="#76ff37"/><rect x="651.5" y="257.0" width="22.1" height="53.8" fill="#0aff8c"/><rect x="673.2" y="257.0" width="22.1" height="53.8" fill="#05ffe4"/><rect x="694.9" y="257.0" width="22.1" height="53.8" fill="#02f5ff"/><rect x="716.6" y="257.0" width="22.1" height="53.8" fill="#03ebff"/><rect x="738.3" y="257.0" width="22.1" height="53.8" fill="#05e1ff"/><rect x="760.0" y="257.0" width="22.1" height="53.8" fill="#08cdff"/><rect x="781.7" y="257.0" width="22.1" height="53.8" fill="#0a75ff"/><rect x="803.4" y="257.0" width="11.3" height="53.8" fill="#0a43ff"/><rect x="77.0" y="310.4" width="10.6" height="53.8" fill="#0917ff"/><rect x="87.2" y="310.4" width="22.1" height="53.8" fill="#0a2bff"/><rect x="108.9" y="310.4" width="22.1" height="53.8" fill="#0a6cff"/><rect x="130.6" y="310.4" width="22.1" height="53.8" fill="#08cdff"/><rect x="152.3" y="310.4" width="22.1" height="53.8" fill="#08ffd6"/><rect x="174.0" y="310.4" width="22.1" height="53.8" fill="#2dff5a"/><rect x="195.7" y="310.4" width="22.1" height="53.8" fill="#c8ff0a"/><rect x="217.4" y="310.4" width="22.1" height="53.8" fill="#ffff0a"/><rect x="239.1" y="310.4" width="22.1" height="53.8" fill="#ffd20a"/><rect x="260.8" y="310.4" width="22.1" height="53.8" fill="#ff8c0a"/><rect x="282.5" y="310.4" width="22.1" height="53.8" fill="#ff670a"/><rect x="304.2" y="310.4" width="22.1" height="53.8" fill="#ff460c"/><rect x="325.9" y="310.4" width="22.1" height="53.8" fill="#ff5a2d"/><rect x="347.6" y="310.4" width="22.1" height="53.8" fill="#ff6238"/><rect x="369.3" y="310.4" width="22.1" height="53.8" fill="#ff6238"/><rect x="391.0" y="310.4" width="22.1" height="53.8" fill="#ff5a2d"/><rect x="412.7" y="310.4" width="22.1" height="53.8" fill="#ff4d17"/><rect x="434.4" y="310.4" width="22.1" height="53.8" fill="#ff4a0b"/><rect x="456.2" y="310.4" width="22.1" height="53.8" fill="#ff4a0b"/><rect x="477.9" y="310.4" width="22.1" height="53.8" fill="#ff4e0b"/><rect x="499.6" y="310.4" width="22.1" height="53.8" fill="#ff4e0b"/><rect x="521.3" y="310.4" width="22.1" height="53.8" fill="#ff520a"/><rect x="543.0" y="310.4" width="22.1" height="53.8" fill="#ff670a"/><rect x="564.7" y="310.4" width="22.1" height="53.8" fill="#ff8c0a"/><rect x="586.4" y="310.4" width="22.1" height="53.8" fill="#ffc00a"/><rect x="608.1" y="310.4" width="22.1" height="53.8" fill="#ffff0a"/><rect x="629.8" y="310.4" width="22.1" height="53.8" fill="#d3ff0a"/><rect x="651.5" y="310.4" width="22.1" height="53.8" fill="#81ff34"/><rect x="673.2" y="310.4" width="22.1" height="53.8" fill="#13ff70"/><rect x="694.9" y="310.4" width="22.1" height="53.8" fill="#0affbe"/><rect x="716.6" y="310.4" width="22.1" height="53.8" fill="#08ffd6"/><rect x="738.3" y="310.4" width="22.1" height="53.8" fill="#00ffff"/><rect x="760.0" y="310.4" width="22.1" height="53.8" fill="#03ebff"/><rect x="781.7" y="310.4" width="22.1" height="53.8" fill="#0aacff"/><rect x="803.4" y="310.4" width="11.3" height="53.8" fill="#0ab4ff"/><rect x="77.0" y="363.8" width="10.6" height="53.8" fill="#0aacff"/><rect x="87.2" y="363.8" width="22.1" height="53.8" fill="#08cdff"/><rect x="108.9" y="363.8" width="22.1" height="53.8" fill="#02f5ff"/><rect x="130.6" y="363.8" width="22.1" height="53.8" fill="#08ffd6"/><rect x="152.3" y="363.8" width="22.1" height="53.8" fill="#0aff82"/><rect x="174.0" y="363.8" width="22.1" height="53.8" fill="#81ff34"/><rect x="195.7" y="363.8" width="22.1" height="53.8" fill="#e9ff0a"/><rect x="217.4" y="363.8" width="22.1" height="53.8" fill="#ffe60a"/><rect x="239.1" y="363.8" width="22.1" height="53.8" fill="#ff8c0a"/><rect x="260.8" y="363.8" width="22.1" height="53.8" fill="#ff460c"/><rect x="282.5" y="363.8" width="22.1" height="53.8" fill="#ff8264"/><rect x="304.2" y="363.8" width="22.1" height="53.8" fill="#ffa699"/><rect x="325.9" y="363.8" width="22.1" height="53.8" fill="#ffbeb9"/><rect x="347.6" y="363.8" width="22.1" height="53.8" fill="#ffbeb9"/><rect x="369.3" y="363.8" width="22.1" height="53.8" fill="#ffb2a9"/><rect x="391.0" y="363.8" width="22.1" height="53.8" fill="#ffa699"/><rect x="412.7" y="363.8" width="22.1" height="53.8" fill="#ffa091"/><rect x="434.4" y="363.8" width="22.1" height="53.8" fill="#ff947f"/><rect x="456.2" y="363.8" width="22.1" height="53.8" fill="#ff947f"/><rect x="477.9" y="363.8" width="22.1" height="53.8" fill="#ff947f"/><rect x="499.6" y="363.8" width="22.1" height="53.8" fill="#ff947f"/><rect x="521.3" y="363.8" width="22.1" height="53.8" fill="#ff947f"/><rect x="543.0" y="363.8" width="22.1" height="53.8" fill="#ff8e76"/><rect x="564.7" y="363.8" width="22.1" height="53.8" fill="#ff6a43"/><rect x="586.4" y="363.8" width="22.1" height="53.8" fill="#ff590a"/><rect x="608.1" y="363.8" width="22.1" height="53.8" fill="#ff9e0a"/><rect x="629.8" y="363.8" width="22.1" height="53.8" fill="#fff20a"/><rect x="651.5" y="363.8" width="22.1" height="53.8" fill="#deff0a"/><rect x="673.2" y="363.8" width="22.1" height="53.8" fill="#81ff34"/><rect x="694.9" y="363.8" width="22.1" height="53.8" fill="#13ff70"/><rect x="716.6" y="363.8" width="22.1" height="53.8" fill="#0affaa"/><rect x="738.3" y="363.8" width="22.1" height="53.8" fill="#00ffff"/><rect x="760.0" y="363.8" width="22.1" height="53.8" fill="#08cdff"/><rect x="781.7" y="363.8" width="22.1" height="53.8" fill="#0a64ff"/><rect x="803.4" y="363.8" width="11.3" height="53.8" fill="#0a4bff"/><rect x="77.0" y="417.1" width="10.6" height="53.8" fill="#08ffd6"/><rect x="87.2" y="417.1" width="22.1" height="53.8" fill="#0affaa"/><rect x="108.9" y="417.1" width="22.1" height="53.8" fill="#0aff96"/><rect x="130.6" y="417.1" width="22.1" height="53.8" fill="#0aff78"/><rect x="152.3" y="417.1" width="22.1" height="53.8" fill="#46ff4c"/><rect x="174.0" y="417.1" width="22.1" height="53.8" fill="#c8ff0a"/><rect x="195.7" y="417.1" width="22.1" height="53.8" fill="#f4ff0a"/><rect x="217.4" y="417.1" width="22.1" height="53.8" fill="#ffb80a"/><rect x="239.1" y="417.1" width="22.1" height="53.8" fill="#ff4e0b"/><rect x="260.8" y="417.1" width="22.1" height="53.8" fill="#ff947f"/><rect x="282.5" y="417.1" width="22.1" height="53.8" fill="#ffd0cf"/><rect x="304.2" y="417.1" width="22.1" height="53.8" fill="#ffe0e0"/><rect x="325.9" y="417.1" width="22.1" height="53.8" fill="#ffe4e4"/><rect x="347.6" y="417.1" width="22.1" height="53.8" fill="#ffe0e0"/><rect x="369.3" y="417.1" width="22.1" height="53.8" fill="#ffdcdc"/><rect x="391.0" y="417.1" width="22.1" height="53.8" fill="#ffd4d4"/><rect x="412.7" y="417.1" width="22.1" height="53.8" fill="#ffd0cf"/><rect x="434.4" y="417.1" width="22.1" height="53.8" fill="#ffc7c4"/><rect x="456.2" y="417.1" width="22.1" height="53.8" fill="#ffbeb9"/><rect x="477.9" y="417.1" width="22.1" height="53.8" fill="#ffb8b1"/><rect x="499.6" y="417.1" width="22.1" height="53.8" fill="#ffb2a9"/><rect x="521.3" y="417.1" width="22.1" height="53.8" fill="#ffa699"/><rect x="543.0" y="417.1" width="22.1" height="53.8" fill="#ff8e76"/><rect x="564.7" y="417.1" width="22.1" height="53.8" fill="#ff6238"/><rect x="586.4" y="417.1" width="22.1" height="53.8" fill="#ff600a"/><rect x="608.1" y="417.1" width="22.1" height="53.8" fill="#ffa60a"/><rect x="629.8" y="417.1" width="22.1" height="53.8" fill="#fff20a"/><rect x="651.5" y="417.1" width="22.1" height="53.8" fill="#deff0a"/><rect x="673.2" y="417.1" width="22.1" height="53.8" fill="#a6ff1f"/><rect x="694.9" y="417.1" width="22.1" height="53.8" fill="#46ff4c"/><rect x="716.6" y="417.1" width="22.1" height="53.8" fill="#0aff78"/><rect x="738.3" y="417.1" width="22.1" height="53.8" fill="#0aff96"/><rect x="760.0" y="417.1" width="22.1" height="53.8" fill="#0affc8"/><rect x="781.7" y="417.1" width="22.1" height="53.8" fill="#00ffff"/><rect x="803.4" y="417.1" width="11.3" height="53.8" fill="#03ebff"/><rect x="77.0" y="470.5" width="10.6" height="53.8" fill="#08ffd6"/><rect x="87.2" y="470.5" width="22.1" height="53.8" fill="#0affaa"/><rect x="108.9" y="470.5" width="22.1" height="53.8" fill="#0affaa"/><rect x="130.6" y="470.5" width="22.1" height="53.8" fill="#0aff96"/><rect x="152.3" y="470.5" width="22.1" height="53.8" fill="#0aff78"/><rect x="174.0" y="470.5" width="22.1" height="53.8" fill="#81ff34"/><rect x="195.7" y="470.5" width="22.1" height="53.8" fill="#e9ff0a"/><rect x="217.4" y="470.5" width="22.1" height="53.8" fill="#ffb80a"/><rect x="239.1" y="470.5" width="22.1" height="53.8" fill="#ff4d17"/><rect x="260.8" y="470.5" width="22.1" height="53.8" fill="#ffc7c4"/><rect x="282.5" y="470.5" width="22.1" height="53.8" fill="#ffe8e8"/><rect x="304.2" y="470.5" width="22.1" height="53.8" fill="#fff6f6"/><rect x="325.9" y="470.5" width="22.1" height="53.8" fill="#fffdfd"/><rect x="347.6" y="470.5" width="22.1" height="53.8" fill="#fffdfd"/><rect x="369.3" y="470.5" width="22.1" height="53.8" fill="#fffafa"/><rect x="391.0" y="470.5" width="22.1" height="53.8" fill="#fff5f5"/><rect x="412.7" y="470.5" width="22.1" height="53.8" fill="#fff3f3"/><rect x="434.4" y="470.5" width="22.1" height="53.8" fill="#fff3f3"/><rect x="456.2" y="470.5" width="22.1" height="53.8" fill="#fff3f3"/><rect x="477.9" y="470.5" width="22.1" height="53.8" fill="#fff3f3"/><rect x="499.6" y="470.5" width="22.1" height="53.8" fill="#ffefef"/><rect x="521.3" y="470.5" width="22.1" height="53.8" fill="#ffefef"/><rect x="543.0" y="470.5" width="22.1" height="53.8" fill="#ffe8e8"/><rect x="564.7" y="470.5" width="22.1" height="53.8" fill="#ffd4d4"/><rect x="586.4" y="470.5" width="22.1" height="53.8" fill="#ff947f"/><rect x="608.1" y="470.5" width="22.1" height="53.8" fill="#ff4a0b"/><rect x="629.8" y="470.5" width="22.1" height="53.8" fill="#ff950a"/><rect x="651.5" y="470.5" width="22.1" height="53.8" fill="#fff20a"/><rect x="673.2" y="470.5" width="22.1" height="53.8" fill="#e9ff0a"/><rect x="694.9" y="470.5" width="22.1" height="53.8" fill="#8cff30"/><rect x="716.6" y="470.5" width="22.1" height="53.8" fill="#24ff62"/><rect x="738.3" y="470.5" width="22.1" height="53.8" fill="#0affbe"/><rect x="760.0" y="470.5" width="22.1" height="53.8" fill="#02f5ff"/><rect x="781.7" y="470.5" width="22.1" height="53.8" fill="#0a96ff"/><rect x="803.4" y="470.5" width="11.3" height="53.8" fill="#0a64ff"/><rect x="77.0" y="523.9" width="10.6" height="53.8" fill="#46ff4c"/><rect x="87.2" y="523.9" width="22.1" height="53.8" fill="#46ff4c"/><rect x="108.9" y="523.9" width="22.1" height="53.8" fill="#1cff69"/><rect x="130.6" y="523.9" width="22.1" height="53.8" fill="#13ff70"/><rect x="152.3" y="523.9" width="22.1" height="53.8" fill="#1cff69"/><rect x="174.0" y="523.9" width="22.1" height="53.8" fill="#81ff34"/><rect x="195.7" y="523.9" width="22.1" height="53.8" fill="#e9ff0a"/><rect x="217.4" y="523.9" width="22.1" height="53.8" fill="#ffc00a"/><rect x="239.1" y="523.9" width="22.1" height="53.8" fill="#ff4a0b"/><rect x="260.8" y="523.9" width="22.1" height="53.8" fill="#ff947f"/><rect x="282.5" y="523.9" width="22.1" height="53.8" fill="#ffd0cf"/><rect x="304.2" y="523.9" width="22.1" height="53.8" fill="#ffd4d4"/><rect x="325.9" y="523.9" width="22.1" height="53.8" fill="#ffd8d8"/><rect x="347.6" y="523.9" width="22.1" height="53.8" fill="#ffd6d6"/><rect x="369.3" y="523.9" width="22.1" height="53.8" fill="#ffd4d4"/><rect x="391.0" y="523.9" width="22.1" height="53.8" fill="#ffd2d1"/><rect x="412.7" y="523.9" width="22.1" height="53.8" fill="#ffd0cf"/><rect x="434.4" y="523.9" width="22.1" height="53.8" fill="#ffd0cf"/><rect x="456.2" y="523.9" width="22.1" height="53.8" fill="#ffd0cf"/><rect x="477.9" y="523.9" width="22.1" height="53.8" fill="#ffd2d1"/><rect x="499.6" y="523.9" width="22.1" height="53.8" fill="#ffd2d1"/><rect x="521.3" y="523.9" width="22.1" height="53.8" fill="#ffd2d1"/><rect x="543.0" y="523.9" width="22.1" height="53.8" fill="#ffc7c4"/><rect x="564.7" y="523.9" width="22.1" height="53.8" fill="#ffa091"/><rect x="586.4" y="523.9" width="22.1" height="53.8" fill="#ff724e"/><rect x="608.1" y="523.9" width="22.1" height="53.8" fill="#ff600a"/><rect x="629.8" y="523.9" width="22.1" height="53.8" fill="#ffa60a"/><rect x="651.5" y="523.9" width="22.1" height="53.8" fill="#fff20a"/><rect x="673.2" y="523.9" width="22.1" height="53.8" fill="#e9ff0a"/><rect x="694.9" y="523.9" width="22.1" height="53.8" fill="#8cff30"/><rect x="716.6" y="523.9" width="22.1" height="53.8" fill="#13ff70"/><rect x="738.3" y="523.9" width="22.1" height="53.8" fill="#0affc8"/><rect x="760.0" y="523.9" width="22.1" height="53.8" fill="#07d7ff"/><rect x="781.7" y="523.9" width="22.1" height="53.8" fill="#0aa5ff"/><rect x="803.4" y="523.9" width="11.3" height="53.8" fill="#0aa5ff"/><rect x="77.0" y="577.3" width="10.6" height="53.8" fill="#05e1ff"/><rect x="87.2" y="577.3" width="22.1" height="53.8" fill="#03ebff"/><rect x="108.9" y="577.3" width="22.1" height="53.8" fill="#00ffff"/><rect x="130.6" y="577.3" width="22.1" height="53.8" fill="#08ffd6"/><rect x="152.3" y="577.3" width="22.1" height="53.8" fill="#0aff82"/><rect x="174.0" y="577.3" width="22.1" height="53.8" fill="#81ff34"/><rect x="195.7" y="577.3" width="22.1" height="53.8" fill="#ffff0a"/><rect x="217.4" y="577.3" width="22.1" height="53.8" fill="#ff950a"/><rect x="239.1" y="577.3" width="22.1" height="53.8" fill="#ff5a2d"/><rect x="260.8" y="577.3" width="22.1" height="53.8" fill="#ffaca1"/><rect x="282.5" y="577.3" width="22.1" height="53.8" fill="#ffd0cf"/><rect x="304.2" y="577.3" width="22.1" height="53.8" fill="#ffd0cf"/><rect x="325.9" y="577.3" width="22.1" height="53.8" fill="#ffd0cf"/><rect x="347.6" y="577.3" width="22.1" height="53.8" fill="#ffd0cf"/><rect x="369.3" y="577.3" width="22.1" height="53.8" fill="#ffcdcc"/><rect x="391.0" y="577.3" width="22.1" height="53.8" fill="#ffcbc9"/><rect x="412.7" y="577.3" width="22.1" height="53.8" fill="#ffcbc9"/><rect x="434.4" y="577.3" width="22.1" height="53.8" fill="#ffc7c4"/><rect x="456.2" y="577.3" width="22.1" height="53.8" fill="#ffc7c4"/><rect x="477.9" y="577.3" width="22.1" height="53.8" fill="#ffc5c1"/><rect x="499.6" y="577.3" width="22.1" height="53.8" fill="#ffbeb9"/><rect x="521.3" y="577.3" width="22.1" height="53.8" fill="#ffa091"/><rect x="543.0" y="577.3" width="22.1" height="53.8" fill="#ff8264"/><rect x="564.7" y="577.3" width="22.1" height="53.8" fill="#ff4d17"/><rect x="586.4" y="577.3" width="22.1" height="53.8" fill="#ff760a"/><rect x="608.1" y="577.3" width="22.1" height="53.8" fill="#ffb80a"/><rect x="629.8" y="577.3" width="22.1" height="53.8" fill="#fff20a"/><rect x="651.5" y="577.3" width="22.1" height="53.8" fill="#e9ff0a"/><rect x="673.2" y="577.3" width="22.1" height="53.8" fill="#9eff24"/><rect x="694.9" y="577.3" width="22.1" height="53.8" fill="#0aff82"/><rect x="716.6" y="577.3" width="22.1" height="53.8" fill="#00ffff"/><rect x="738.3" y="577.3" width="22.1" height="53.8" fill="#0aa5ff"/><rect x="760.0" y="577.3" width="22.1" height="53.8" fill="#0a6cff"/><rect x="781.7" y="577.3" width="22.1" height="53.8" fill="#0a75ff"/><rect x="803.4" y="577.3" width="11.3" height="53.8" fill="#05e1ff"/><rect x="77.0" y="630.6" width="10.6" height="53.8" fill="#0a75ff"/><rect x="87.2" y="630.6" width="22.1" height="53.8" fill="#0a96ff"/><rect x="108.9" y="630.6" width="22.1" height="53.8" fill="#0ab4ff"/><rect x="130.6" y="630.6" width="22.1" height="53.8" fill="#00ffff"/><rect x="152.3" y="630.6" width="22.1" height="53.8" fill="#0affc8"/><rect x="174.0" y="630.6" width="22.1" height="53.8" fill="#3aff53"/><rect x="195.7" y="630.6" width="22.1" height="53.8" fill="#c8ff0a"/><rect x="217.4" y="630.6" width="22.1" height="53.8" fill="#ffff0a"/><rect x="239.1" y="630.6" width="22.1" height="53.8" fill="#ffd20a"/><rect x="260.8" y="630.6" width="22.1" height="53.8" fill="#ff8c0a"/><rect x="282.5" y="630.6" width="22.1" height="53.8" fill="#ff760a"/><rect x="304.2" y="630.6" width="22.1" height="53.8" fill="#ff600a"/><rect x="325.9" y="630.6" width="22.1" height="53.8" fill="#ff600a"/><rect x="347.6" y="630.6" width="22.1" height="53.8" fill="#ff590a"/><rect x="369.3" y="630.6" width="22.1" height="53.8" fill="#ff520a"/><rect x="391.0" y="630.6" width="22.1" height="53.8" fill="#ff4a0b"/><rect x="412.7" y="630.6" width="22.1" height="53.8" fill="#ff4d17"/><rect x="434.4" y="630.6" width="22.1" height="53.8" fill="#ff5a2d"/><rect x="456.2" y="630.6" width="22.1" height="53.8" fill="#ff6238"/><rect x="477.9" y="630.6" width="22.1" height="53.8" fill="#ff5a2d"/><rect x="499.6" y="630.6" width="22.1" height="53.8" fill="#ff4a0b"/><rect x="521.3" y="630.6" width="22.1" height="53.8" fill="#ff670a"/><rect x="543.0" y="630.6" width="22.1" height="53.8" fill="#ff950a"/><rect x="564.7" y="630.6" width="22.1" height="53.8" fill="#ffc90a"/><rect x="586.4" y="630.6" width="22.1" height="53.8" fill="#ffff0a"/><rect x="608.1" y="630.6" width="22.1" height="53.8" fill="#efff0a"/><rect x="629.8" y="630.6" width="22.1" height="53.8" fill="#ceff0a"/><rect x="651.5" y="630.6" width="22.1" height="53.8" fill="#5fff3e"/><rect x="673.2" y="630.6" width="22.1" height="53.8" fill="#0aff96"/><rect x="694.9" y="630.6" width="22.1" height="53.8" fill="#02f5ff"/><rect x="716.6" y="630.6" width="22.1" height="53.8" fill="#0a75ff"/><rect x="738.3" y="630.6" width="22.1" height="53.8" fill="#091eff"/><rect x="760.0" y="630.6" width="22.1" height="53.8" fill="#0809f5"/><rect x="781.7" y="630.6" width="22.1" height="53.8" fill="#080aff"/><rect x="803.4" y="630.6" width="11.3" height="53.8" fill="#0a43ff"/><rect x="77.0" y="684.0" width="10.6" height="53.8" fill="#05054b"/><rect x="87.2" y="684.0" width="22.1" height="53.8" fill="#0606cb"/><rect x="108.9" y="684.0" width="22.1" height="53.8" fill="#0a43ff"/><rect x="130.6" y="684.0" width="22.1" height="53.8" fill="#08cdff"/><rect x="152.3" y="684.0" width="22.1" height="53.8" fill="#05ffe4"/><rect x="174.0" y="684.0" width="22.1" height="53.8" fill="#0aff96"/><rect x="195.7" y="684.0" width="22.1" height="53.8" fill="#46ff4c"/><rect x="217.4" y="684.0" width="22.1" height="53.8" fill="#9eff24"/><rect x="239.1" y="684.0" width="22.1" height="53.8" fill="#d3ff0a"/><rect x="260.8" y="684.0" width="22.1" height="53.8" fill="#d9ff0a"/><rect x="282.5" y="684.0" width="22.1" height="53.8" fill="#deff0a"/><rect x="304.2" y="684.0" width="22.1" height="53.8" fill="#e4ff0a"/><rect x="325.9" y="684.0" width="22.1" height="53.8" fill="#e9ff0a"/><rect x="347.6" y="684.0" width="22.1" height="53.8" fill="#efff0a"/><rect x="369.3" y="684.0" width="22.1" height="53.8" fill="#faff0a"/><rect x="391.0" y="684.0" width="22.1" height="53.8" fill="#fff90a"/><rect x="412.7" y="684.0" width="22.1" height="53.8" fill="#ffe10a"/><rect x="434.4" y="684.0" width="22.1" height="53.8" fill="#ffd20a"/><rect x="456.2" y="684.0" width="22.1" height="53.8" fill="#ffd20a"/><rect x="477.9" y="684.0" width="22.1" height="53.8" fill="#ffe10a"/><rect x="499.6" y="684.0" width="22.1" height="53.8" fill="#ffff0a"/><rect x="521.3" y="684.0" width="22.1" height="53.8" fill="#e9ff0a"/><rect x="543.0" y="684.0" width="22.1" height="53.8" fill="#c8ff0a"/><rect x="564.7" y="684.0" width="22.1" height="53.8" fill="#52ff45"/><rect x="586.4" y="684.0" width="22.1" height="53.8" fill="#0aff78"/><rect x="608.1" y="684.0" width="22.1" height="53.8" fill="#0affaa"/><rect x="629.8" y="684.0" width="22.1" height="53.8" fill="#0affc8"/><rect x="651.5" y="684.0" width="22.1" height="53.8" fill="#00ffff"/><rect x="673.2" y="684.0" width="22.1" height="53.8" fill="#0ac3ff"/><rect x="694.9" y="684.0" width="22.1" height="53.8" fill="#0a4bff"/><rect x="716.6" y="684.0" width="22.1" height="53.8" fill="#0809f5"/><rect x="738.3" y="684.0" width="22.1" height="53.8" fill="#0606b3"/><rect x="760.0" y="684.0" width="22.1" height="53.8" fill="#0606ad"/><rect x="781.7" y="684.0" width="22.1" height="53.8" fill="#0606a7"/><rect x="803.4" y="684.0" width="11.3" height="53.8" fill="#060650"/><rect x="77.0" y="737.4" width="10.6" height="27.1" fill="#050541"/><rect x="87.2" y="737.4" width="22.1" height="27.1" fill="#0606a7"/><rect x="108.9" y="737.4" width="22.1" height="27.1" fill="#0925ff"/><rect x="130.6" y="737.4" width="22.1" height="27.1" fill="#0aa5ff"/><rect x="152.3" y="737.4" width="22.1" height="27.1" fill="#00ffff"/><rect x="174.0" y="737.4" width="22.1" height="27.1" fill="#0aff96"/><rect x="195.7" y="737.4" width="22.1" height="27.1" fill="#46ff4c"/><rect x="217.4" y="737.4" width="22.1" height="27.1" fill="#9eff24"/><rect x="239.1" y="737.4" width="22.1" height="27.1" fill="#d3ff0a"/><rect x="260.8" y="737.4" width="22.1" height="27.1" fill="#d9ff0a"/><rect x="282.5" y="737.4" width="22.1" height="27.1" fill="#deff0a"/><rect x="304.2" y="737.4" width="22.1" height="27.1" fill="#e4ff0a"/><rect x="325.9" y="737.4" width="22.1" height="27.1" fill="#e9ff0a"/><rect x="347.6" y="737.4" width="22.1" height="27.1" fill="#efff0a"/><rect x="369.3" y="737.4" width="22.1" height="27.1" fill="#faff0a"/><rect x="391.0" y="737.4" width="22.1" height="27.1" fill="#fff90a"/><rect x="412.7" y="737.4" width="22.1" height="27.1" fill="#ffe10a"/><rect x="434.4" y="737.4" width="22.1" height="27.1" fill="#ffd70a"/><rect x="456.2" y="737.4" width="22.1" height="27.1" fill="#ffe60a"/><rect x="477.9" y="737.4" width="22.1" height="27.1" fill="#fff20a"/><rect x="499.6" y="737.4" width="22.1" height="27.1" fill="#ffff0a"/><rect x="521.3" y="737.4" width="22.1" height="27.1" fill="#e9ff0a"/><rect x="543.0" y="737.4" width="22.1" height="27.1" fill="#ceff0a"/><rect x="564.7" y="737.4" width="22.1" height="27.1" fill="#5fff3e"/><rect x="586.4" y="737.4" width="22.1" height="27.1" fill="#3aff53"/><rect x="608.1" y="737.4" width="22.1" height="27.1" fill="#0aff78"/><rect x="629.8" y="737.4" width="22.1" height="27.1" fill="#0affaa"/><rect x="651.5" y="737.4" width="22.1" height="27.1" fill="#00ffff"/><rect x="673.2" y="737.4" width="22.1" height="27.1" fill="#0aacff"/><rect x="694.9" y="737.4" width="22.1" height="27.1" fill="#0a32ff"/><rect x="716.6" y="737.4" width="22.1" height="27.1" fill="#0606d7"/><rect x="738.3" y="737.4" width="22.1" height="27.1" fill="#0606ad"/><rect x="760.0" y="737.4" width="22.1" height="27.1" fill="#0606c5"/><rect x="781.7" y="737.4" width="22.1" height="27.1" fill="#0708f0"/><rect x="803.4" y="737.4" width="11.3" height="27.1" fill="#010104"/><path d="M75.8 224.3 V230.3 M75.8 764.1 V770.1 M84.0 226.8 V230.3 M84.0 764.1 V767.6 M92.1 226.8 V230.3 M92.1 764.1 V767.6 M100.3 226.8 V230.3 M100.3 764.1 V767.6 M108.5 226.8 V230.3 M108.5 764.1 V767.6 M116.6 224.3 V230.3 M116.6 764.1 V770.1 M124.8 226.8 V230.3 M124.8 764.1 V767.6 M133.0 226.8 V230.3 M133.0 764.1 V767.6 M141.1 226.8 V230.3 M141.1 764.1 V767.6 M149.3 226.8 V230.3 M149.3 764.1 V767.6 M157.5 224.3 V230.3 M157.5 764.1 V770.1 M165.6 226.8 V230.3 M165.6 764.1 V767.6 M173.8 226.8 V230.3 M173.8 764.1 V767.6 M182.0 226.8 V230.3 M182.0 764.1 V767.6 M190.2 226.8 V230.3 M190.2 764.1 V767.6 M198.3 224.3 V230.3 M198.3 764.1 V770.1 M206.5 226.8 V230.3 M206.5 764.1 V767.6 M214.7 226.8 V230.3 M214.7 764.1 V767.6 M222.8 226.8 V230.3 M222.8 764.1 V767.6 M231.0 226.8 V230.3 M231.0 764.1 V767.6 M239.2 224.3 V230.3 M239.2 764.1 V770.1 M247.3 226.8 V230.3 M247.3 764.1 V767.6 M255.5 226.8 V230.3 M255.5 764.1 V767.6 M263.7 226.8 V230.3 M263.7 764.1 V767.6 M271.8 226.8 V230.3 M271.8 764.1 V767.6 M280.0 224.3 V230.3 M280.0 764.1 V770.1 M288.2 226.8 V230.3 M288.2 764.1 V767.6 M296.3 226.8 V230.3 M296.3 764.1 V767.6 M304.5 226.8 V230.3 M304.5 764.1 V767.6 M312.7 226.8 V230.3 M312.7 764.1 V767.6 M320.8 224.3 V230.3 M320.8 764.1 V770.1 M329.0 226.8 V230.3 M329.0 764.1 V767.6 M337.2 226.8 V230.3 M337.2 764.1 V767.6 M345.3 226.8 V230.3 M345.3 764.1 V767.6 M353.5 226.8 V230.3 M353.5 764.1 V767.6 M361.7 224.3 V230.3 M361.7 764.1 V770.1 M369.8 226.8 V230.3 M369.8 764.1 V767.6 M378.0 226.8 V230.3 M378.0 764.1 V767.6 M386.2 226.8 V230.3 M386.2 764.1 V767.6 M394.4 226.8 V230.3 M394.4 764.1 V767.6 M402.5 224.3 V230.3 M402.5 764.1 V770.1 M410.7 226.8 V230.3 M410.7 764.1 V767.6 M418.9 226.8 V230.3 M418.9 764.1 V767.6 M427.0 226.8 V230.3 M427.0 764.1 V767.6 M435.2 226.8 V230.3 M435.2 764.1 V767.6 M443.4 224.3 V230.3 M443.4 764.1 V770.1 M451.5 226.8 V230.3 M451.5 764.1 V767.6 M459.7 226.8 V230.3 M459.7 764.1 V767.6 M467.9 226.8 V230.3 M467.9 764.1 V767.6 M476.0 226.8 V230.3 M476.0 764.1 V767.6 M484.2 224.3 V230.3 M484.2 764.1 V770.1 M492.4 226.8 V230.3 M492.4 764.1 V767.6 M500.5 226.8 V230.3 M500.5 764.1 V767.6 M508.7 226.8 V230.3 M508.7 764.1 V767.6 M516.9 226.8 V230.3 M516.9 764.1 V767.6 M525.0 224.3 V230.3 M525.0 764.1 V770.1 M533.2 226.8 V230.3 M533.2 764.1 V767.6 M541.4 226.8 V230.3 M541.4 764.1 V767.6 M549.5 226.8 V230.3 M549.5 764.1 V767.6 M557.7 226.8 V230.3 M557.7 764.1 V767.6 M565.9 224.3 V230.3 M565.9 764.1 V770.1 M574.0 226.8 V230.3 M574.0 764.1 V767.6 M582.2 226.8 V230.3 M582.2 764.1 V767.6 M590.4 226.8 V230.3 M590.4 764.1 V767.6 M598.6 226.8 V230.3 M598.6 764.1 V767.6 M606.7 224.3 V230.3 M606.7 764.1 V770.1 M614.9 226.8 V230.3 M614.9 764.1 V767.6 M623.1 226.8 V230.3 M623.1 764.1 V767.6 M631.2 226.8 V230.3 M631.2 764.1 V767.6 M639.4 226.8 V230.3 M639.4 764.1 V767.6 M647.6 224.3 V230.3 M647.6 764.1 V770.1 M655.7 226.8 V230.3 M655.7 764.1 V767.6 M663.9 226.8 V230.3 M663.9 764.1 V767.6 M672.1 226.8 V230.3 M672.1 764.1 V767.6 M680.2 226.8 V230.3 M680.2 764.1 V767.6 M688.4 224.3 V230.3 M688.4 764.1 V770.1 M696.6 226.8 V230.3 M696.6 764.1 V767.6 M704.7 226.8 V230.3 M704.7 764.1 V767.6 M712.9 226.8 V230.3 M712.9 764.1 V767.6 M721.1 226.8 V230.3 M721.1 764.1 V767.6 M729.2 224.3 V230.3 M729.2 764.1 V770.1 M737.4 226.8 V230.3 M737.4 764.1 V767.6 M745.6 226.8 V230.3 M745.6 764.1 V767.6 M753.7 226.8 V230.3 M753.7 764.1 V767.6 M761.9 226.8 V230.3 M761.9 764.1 V767.6 M770.1 224.3 V230.3 M770.1 764.1 V770.1 M778.2 226.8 V230.3 M778.2 764.1 V767.6 M786.4 226.8 V230.3 M786.4 764.1 V767.6 M794.6 226.8 V230.3 M794.6 764.1 V767.6 M802.8 226.8 V230.3 M802.8 764.1 V767.6 M810.9 224.3 V230.3 M810.9 764.1 V770.1 M69.8 764.3 H76.3 M814.3 764.3 H820.3 M72.8 756.1 H76.3 M814.3 756.1 H817.3 M72.8 748.0 H76.3 M814.3 748.0 H817.3 M72.8 739.8 H76.3 M814.3 739.8 H817.3 M72.8 731.7 H76.3 M814.3 731.7 H817.3 M69.8 723.5 H76.3 M814.3 723.5 H820.3 M72.8 715.4 H76.3 M814.3 715.4 H817.3 M72.8 707.2 H76.3 M814.3 707.2 H817.3 M72.8 699.1 H76.3 M814.3 699.1 H817.3 M72.8 690.9 H76.3 M814.3 690.9 H817.3 M69.8 682.7 H76.3 M814.3 682.7 H820.3 M72.8 674.6 H76.3 M814.3 674.6 H817.3 M72.8 666.4 H76.3 M814.3 666.4 H817.3 M72.8 658.3 H76.3 M814.3 658.3 H817.3 M72.8 650.1 H76.3 M814.3 650.1 H817.3 M69.8 642.0 H76.3 M814.3 642.0 H820.3 M72.8 633.8 H76.3 M814.3 633.8 H817.3 M72.8 625.6 H76.3 M814.3 625.6 H817.3 M72.8 617.5 H76.3 M814.3 617.5 H817.3 M72.8 609.3 H76.3 M814.3 609.3 H817.3 M69.8 601.2 H76.3 M814.3 601.2 H820.3 M72.8 593.0 H76.3 M814.3 593.0 H817.3 M72.8 584.9 H76.3 M814.3 584.9 H817.3 M72.8 576.7 H76.3 M814.3 576.7 H817.3 M72.8 568.6 H76.3 M814.3 568.6 H817.3 M69.8 560.4 H76.3 M814.3 560.4 H820.3 M72.8 552.2 H76.3 M814.3 552.2 H817.3 M72.8 544.1 H76.3 M814.3 544.1 H817.3 M72.8 535.9 H76.3 M814.3 535.9 H817.3 M72.8 527.8 H76.3 M814.3 527.8 H817.3 M69.8 519.6 H76.3 M814.3 519.6 H820.3 M72.8 511.5 H76.3 M814.3 511.5 H817.3 M72.8 503.3 H76.3 M814.3 503.3 H817.3 M72.8 495.2 H76.3 M814.3 495.2 H817.3 M72.8 487.0 H76.3 M814.3 487.0 H817.3 M69.8 478.8 H76.3 M814.3 478.8 H820.3 M72.8 470.7 H76.3 M814.3 470.7 H817.3 M72.8 462.5 H76.3 M814.3 462.5 H817.3 M72.8 454.4 H76.3 M814.3 454.4 H817.3 M72.8 446.2 H76.3 M814.3 446.2 H817.3 M69.8 438.1 H76.3 M814.3 438.1 H820.3 M72.8 429.9 H76.3 M814.3 429.9 H817.3 M72.8 421.7 H76.3 M814.3 421.7 H817.3 M72.8 413.6 H76.3 M814.3 413.6 H817.3 M72.8 405.4 H76.3 M814.3 405.4 H817.3 M69.8 397.3 H76.3 M814.3 397.3 H820.3 M72.8 389.1 H76.3 M814.3 389.1 H817.3 M72.8 381.0 H76.3 M814.3 381.0 H817.3 M72.8 372.8 H76.3 M814.3 372.8 H817.3 M72.8 364.7 H76.3 M814.3 364.7 H817.3 M69.8 356.5 H76.3 M814.3 356.5 H820.3 M72.8 348.3 H76.3 M814.3 348.3 H817.3 M72.8 340.2 H76.3 M814.3 340.2 H817.3 M72.8 332.0 H76.3 M814.3 332.0 H817.3 M72.8 323.9 H76.3 M814.3 323.9 H817.3 M69.8 315.7 H76.3 M814.3 315.7 H820.3 M72.8 307.6 H76.3 M814.3 307.6 H817.3 M72.8 299.4 H76.3 M814.3 299.4 H817.3 M72.8 291.3 H76.3 M814.3 291.3 H817.3 M72.8 283.1 H76.3 M814.3 283.1 H817.3 M69.8 274.9 H76.3 M814.3 274.9 H820.3 M72.8 266.8 H76.3 M814.3 266.8 H817.3 M72.8 258.6 H76.3 M814.3 258.6 H817.3 M72.8 250.5 H76.3 M814.3 250.5 H817.3 M72.8 242.3 H76.3 M814.3 242.3 H817.3 M69.8 234.2 H76.3 M814.3 234.2 H820.3 " stroke="#000" stroke-width="1" fill="none"/><rect x="76.5" y="230.5" width="738.0" height="533.8" fill="none" stroke="#000" stroke-width="1"/><path d="M76.3 503.7 H814.3" stroke="#000" stroke-width="1.4" shape-rendering="auto"/><path d="M82 499.5 L89 503.7 L82 508 Z" fill="#000" stroke="#fff" stroke-width="0.8" shape-rendering="auto"/><circle cx="78" cy="503.7" r="2.5" fill="#fff" stroke="#000" stroke-width="0.6" shape-rendering="auto"/><circle cx="813" cy="503.7" r="3.2" fill="#7be36b" stroke="#3a8a3a" stroke-width="0.7" shape-rendering="auto"/><defs><linearGradient id="cb" x1="0" y1="1" x2="0" y2="0"><stop offset="0.0000" stop-color="#000000"/><stop offset="0.1502" stop-color="#020206"/><stop offset="0.1878" stop-color="#040428"/><stop offset="0.2347" stop-color="#06065a"/><stop offset="0.2817" stop-color="#06069b"/><stop offset="0.3286" stop-color="#0606d7"/><stop offset="0.3662" stop-color="#080aff"/><stop offset="0.3944" stop-color="#0a32ff"/><stop offset="0.4225" stop-color="#0a64ff"/><stop offset="0.4507" stop-color="#0a96ff"/><stop offset="0.4789" stop-color="#0ac3ff"/><stop offset="0.5070" stop-color="#00ffff"/><stop offset="0.5258" stop-color="#0affc8"/><stop offset="0.5446" stop-color="#0affa0"/><stop offset="0.5634" stop-color="#0aff78"/><stop offset="0.5822" stop-color="#2dff5a"/><stop offset="0.6009" stop-color="#5fff3e"/><stop offset="0.6197" stop-color="#8cff30"/><stop offset="0.6385" stop-color="#afff19"/><stop offset="0.6573" stop-color="#c8ff0a"/><stop offset="0.6808" stop-color="#e4ff0a"/><stop offset="0.7042" stop-color="#ffff0a"/><stop offset="0.7230" stop-color="#ffe60a"/><stop offset="0.7418" stop-color="#ffd20a"/><stop offset="0.7606" stop-color="#ffaf0a"/><stop offset="0.7793" stop-color="#ff8c0a"/><stop offset="0.7981" stop-color="#ff6e0a"/><stop offset="0.8169" stop-color="#ff520a"/><stop offset="0.8310" stop-color="#ff460c"/><stop offset="0.8451" stop-color="#ff5a2d"/><stop offset="0.8685" stop-color="#ff8264"/><stop offset="0.8920" stop-color="#ffa091"/><stop offset="0.9155" stop-color="#ffbeb9"/><stop offset="0.9390" stop-color="#ffd4d4"/><stop offset="0.9624" stop-color="#ffe8e8"/><stop offset="0.9859" stop-color="#fffafa"/><stop offset="1.0000" stop-color="#ffffff"/></linearGradient></defs><rect x="855.5" y="225.5" width="16.0" height="545.8" fill="url(#cb)" stroke="#000" stroke-width="1"/><path d="M871.5 771.3 H878.0 M871.5 758.5 H874.5 M871.5 745.7 H878.0 M871.5 732.9 H874.5 M871.5 720.1 H878.0 M871.5 707.2 H874.5 M871.5 694.4 H878.0 M871.5 681.6 H874.5 M871.5 668.8 H878.0 M871.5 656.0 H874.5 M871.5 643.2 H878.0 M871.5 630.4 H874.5 M871.5 617.6 H878.0 M871.5 604.8 H874.5 M871.5 592.0 H878.0 M871.5 579.1 H874.5 M871.5 566.3 H878.0 M871.5 553.5 H874.5 M871.5 540.7 H878.0 M871.5 527.9 H874.5 M871.5 515.1 H878.0 M871.5 502.3 H874.5 M871.5 489.5 H878.0 M871.5 476.7 H874.5 M871.5 463.9 H878.0 M871.5 451.0 H874.5 M871.5 438.2 H878.0 M871.5 425.4 H874.5 M871.5 412.6 H878.0 M871.5 399.8 H874.5 M871.5 387.0 H878.0 M871.5 374.2 H874.5 M871.5 361.4 H878.0 M871.5 348.6 H874.5 M871.5 335.8 H878.0 M871.5 322.9 H874.5 M871.5 310.1 H878.0 M871.5 297.3 H874.5 M871.5 284.5 H878.0 M871.5 271.7 H874.5 M871.5 258.9 H878.0 M871.5 246.1 H874.5 M871.5 233.3 H878.0 " stroke="#000" stroke-width="1" fill="none"/></svg><div class="t" style="top:770.0px;font-size:11px;line-height:15px;color:#000;left:-224.2px;width:600px;text-align:center;font-family:'DejaVu Sans Condensed','Liberation Sans',sans-serif;">0</div><div class="t" style="top:770.0px;font-size:11px;line-height:15px;color:#000;left:-183.36px;width:600px;text-align:center;font-family:'DejaVu Sans Condensed','Liberation Sans',sans-serif;">10</div><div class="t" style="top:770.0px;font-size:11px;line-height:15px;color:#000;left:-142.52px;width:600px;text-align:center;font-family:'DejaVu Sans Condensed','Liberation Sans',sans-serif;">20</div><div class="t" style="top:770.0px;font-size:11px;line-height:15px;color:#000;left:-101.68px;width:600px;text-align:center;font-family:'DejaVu Sans Condensed','Liberation Sans',sans-serif;">30</div><div class="t" style="top:770.0px;font-size:11px;line-height:15px;color:#000;left:-60.84000000000003px;width:600px;text-align:center;font-family:'DejaVu Sans Condensed','Liberation Sans',sans-serif;">40</div><div class="t" style="top:770.0px;font-size:11px;line-height:15px;color:#000;left:-20.0px;width:600px;text-align:center;font-family:'DejaVu Sans Condensed','Liberation Sans',sans-serif;">50</div><div class="t" style="top:770.0px;font-size:11px;line-height:15px;color:#000;left:20.839999999999975px;width:600px;text-align:center;font-family:'DejaVu Sans Condensed','Liberation Sans',sans-serif;">60</div><div class="t" style="top:770.0px;font-size:11px;line-height:15px;color:#000;left:61.68000000000001px;width:600px;text-align:center;font-family:'DejaVu Sans Condensed','Liberation Sans',sans-serif;">70</div><div class="t" style="top:770.0px;font-size:11px;line-height:15px;color:#000;left:102.51999999999998px;width:600px;text-align:center;font-family:'DejaVu Sans Condensed','Liberation Sans',sans-serif;">80</div><div class="t" style="top:770.0px;font-size:11px;line-height:15px;color:#000;left:143.35999999999996px;width:600px;text-align:center;font-family:'DejaVu Sans Condensed','Liberation Sans',sans-serif;">90</div><div class="t" style="top:770.0px;font-size:11px;line-height:15px;color:#000;left:184.2px;width:600px;text-align:center;font-family:'DejaVu Sans Condensed','Liberation Sans',sans-serif;">100</div><div class="t" style="top:770.0px;font-size:11px;line-height:15px;color:#000;left:225.03999999999996px;width:600px;text-align:center;font-family:'DejaVu Sans Condensed','Liberation Sans',sans-serif;">110</div><div class="t" style="top:770.0px;font-size:11px;line-height:15px;color:#000;left:265.8799999999999px;width:600px;text-align:center;font-family:'DejaVu Sans Condensed','Liberation Sans',sans-serif;">120</div><div class="t" style="top:770.0px;font-size:11px;line-height:15px;color:#000;left:306.7199999999999px;width:600px;text-align:center;font-family:'DejaVu Sans Condensed','Liberation Sans',sans-serif;">130</div><div class="t" style="top:770.0px;font-size:11px;line-height:15px;color:#000;left:347.55999999999995px;width:600px;text-align:center;font-family:'DejaVu Sans Condensed','Liberation Sans',sans-serif;">140</div><div class="t" style="top:770.0px;font-size:11px;line-height:15px;color:#000;left:388.39999999999986px;width:600px;text-align:center;font-family:'DejaVu Sans Condensed','Liberation Sans',sans-serif;">150</div><div class="t" style="top:770.0px;font-size:11px;line-height:15px;color:#000;left:429.2399999999999px;width:600px;text-align:center;font-family:'DejaVu Sans Condensed','Liberation Sans',sans-serif;">160</div><div class="t" style="top:770.0px;font-size:11px;line-height:15px;color:#000;left:470.0799999999999px;width:600px;text-align:center;font-family:'DejaVu Sans Condensed','Liberation Sans',sans-serif;">170</div><div class="t" style="top:770.0px;font-size:11px;line-height:15px;color:#000;left:801.9199999999998px;font-family:'DejaVu Sans Condensed','Liberation Sans',sans-serif;">180 mm</div><div class="t" style="top:756.8px;font-size:11px;line-height:15px;color:#000;left:-534px;width:600px;text-align:right;font-family:'DejaVu Sans Condensed','Liberation Sans',sans-serif;">0</div><div class="t" style="top:716.0px;font-size:11px;line-height:15px;color:#000;left:-534px;width:600px;text-align:right;font-family:'DejaVu Sans Condensed','Liberation Sans',sans-serif;">10</div><div class="t" style="top:675.2px;font-size:11px;line-height:15px;color:#000;left:-534px;width:600px;text-align:right;font-family:'DejaVu Sans Condensed','Liberation Sans',sans-serif;">20</div><div class="t" style="top:634.5px;font-size:11px;line-height:15px;color:#000;left:-534px;width:600px;text-align:right;font-family:'DejaVu Sans Condensed','Liberation Sans',sans-serif;">30</div><div class="t" style="top:593.7px;font-size:11px;line-height:15px;color:#000;left:-534px;width:600px;text-align:right;font-family:'DejaVu Sans Condensed','Liberation Sans',sans-serif;">40</div><div class="t" style="top:552.9px;font-size:11px;line-height:15px;color:#000;left:-534px;width:600px;text-align:right;font-family:'DejaVu Sans Condensed','Liberation Sans',sans-serif;">50</div><div class="t" style="top:512.1px;font-size:11px;line-height:15px;color:#000;left:-534px;width:600px;text-align:right;font-family:'DejaVu Sans Condensed','Liberation Sans',sans-serif;">60</div><div class="t" style="top:471.3px;font-size:11px;line-height:15px;color:#000;left:-534px;width:600px;text-align:right;font-family:'DejaVu Sans Condensed','Liberation Sans',sans-serif;">70</div><div class="t" style="top:430.6px;font-size:11px;line-height:15px;color:#000;left:-534px;width:600px;text-align:right;font-family:'DejaVu Sans Condensed','Liberation Sans',sans-serif;">80</div><div class="t" style="top:389.8px;font-size:11px;line-height:15px;color:#000;left:-534px;width:600px;text-align:right;font-family:'DejaVu Sans Condensed','Liberation Sans',sans-serif;">90</div><div class="t" style="top:349.0px;font-size:11px;line-height:15px;color:#000;left:-534px;width:600px;text-align:right;font-family:'DejaVu Sans Condensed','Liberation Sans',sans-serif;">100</div><div class="t" style="top:308.2px;font-size:11px;line-height:15px;color:#000;left:-534px;width:600px;text-align:right;font-family:'DejaVu Sans Condensed','Liberation Sans',sans-serif;">110</div><div class="t" style="top:267.4px;font-size:11px;line-height:15px;color:#000;left:-534px;width:600px;text-align:right;font-family:'DejaVu Sans Condensed','Liberation Sans',sans-serif;">120</div><div class="t" style="top:226.7px;font-size:11px;line-height:15px;color:#000;left:-534px;width:600px;text-align:right;font-family:'DejaVu Sans Condensed','Liberation Sans',sans-serif;">130</div><div class="t" style="top:763.8px;font-size:11px;line-height:15px;color:#000;left:882px;font-family:'DejaVu Sans Condensed','Liberation Sans',sans-serif;">0</div><div class="t" style="top:738.2px;font-size:11px;line-height:15px;color:#000;left:882px;font-family:'DejaVu Sans Condensed','Liberation Sans',sans-serif;">10</div><div class="t" style="top:712.6px;font-size:11px;line-height:15px;color:#000;left:882px;font-family:'DejaVu Sans Condensed','Liberation Sans',sans-serif;">20</div><div class="t" style="top:686.9px;font-size:11px;line-height:15px;color:#000;left:882px;font-family:'DejaVu Sans Condensed','Liberation Sans',sans-serif;">30</div><div class="t" style="top:661.3px;font-size:11px;line-height:15px;color:#000;left:882px;font-family:'DejaVu Sans Condensed','Liberation Sans',sans-serif;">40</div><div class="t" style="top:635.7px;font-size:11px;line-height:15px;color:#000;left:882px;font-family:'DejaVu Sans Condensed','Liberation Sans',sans-serif;">50</div><div class="t" style="top:610.1px;font-size:11px;line-height:15px;color:#000;left:882px;font-family:'DejaVu Sans Condensed','Liberation Sans',sans-serif;">60</div><div class="t" style="top:584.5px;font-size:11px;line-height:15px;color:#000;left:882px;font-family:'DejaVu Sans Condensed','Liberation Sans',sans-serif;">70</div><div class="t" style="top:558.8px;font-size:11px;line-height:15px;color:#000;left:882px;font-family:'DejaVu Sans Condensed','Liberation Sans',sans-serif;">80</div><div class="t" style="top:533.2px;font-size:11px;line-height:15px;color:#000;left:882px;font-family:'DejaVu Sans Condensed','Liberation Sans',sans-serif;">90</div><div class="t" style="top:507.6px;font-size:11px;line-height:15px;color:#000;left:882px;font-family:'DejaVu Sans Condensed','Liberation Sans',sans-serif;">100</div><div class="t" style="top:482.0px;font-size:11px;line-height:15px;color:#000;left:882px;font-family:'DejaVu Sans Condensed','Liberation Sans',sans-serif;">110</div><div class="t" style="top:456.4px;font-size:11px;line-height:15px;color:#000;left:882px;font-family:'DejaVu Sans Condensed','Liberation Sans',sans-serif;">120</div><div class="t" style="top:430.7px;font-size:11px;line-height:15px;color:#000;left:882px;font-family:'DejaVu Sans Condensed','Liberation Sans',sans-serif;">130</div><div class="t" style="top:405.1px;font-size:11px;line-height:15px;color:#000;left:882px;font-family:'DejaVu Sans Condensed','Liberation Sans',sans-serif;">140</div><div class="t" style="top:379.5px;font-size:11px;line-height:15px;color:#000;left:882px;font-family:'DejaVu Sans Condensed','Liberation Sans',sans-serif;">150</div><div class="t" style="top:353.9px;font-size:11px;line-height:15px;color:#000;left:882px;font-family:'DejaVu Sans Condensed','Liberation Sans',sans-serif;">160</div><div class="t" style="top:328.3px;font-size:11px;line-height:15px;color:#000;left:882px;font-family:'DejaVu Sans Condensed','Liberation Sans',sans-serif;">170</div><div class="t" style="top:302.6px;font-size:11px;line-height:15px;color:#000;left:882px;font-family:'DejaVu Sans Condensed','Liberation Sans',sans-serif;">180</div><div class="t" style="top:277.0px;font-size:11px;line-height:15px;color:#000;left:882px;font-family:'DejaVu Sans Condensed','Liberation Sans',sans-serif;">190</div><div class="t" style="top:251.4px;font-size:11px;line-height:15px;color:#000;left:882px;font-family:'DejaVu Sans Condensed','Liberation Sans',sans-serif;">200</div><div class="t" style="top:225.8px;font-size:11px;line-height:15px;color:#000;left:882px;font-family:'DejaVu Sans Condensed','Liberation Sans',sans-serif;">210</div><div class="t" style="top:207.5px;font-size:11px;line-height:15px;color:#000;left:47px;font-family:'DejaVu Sans Condensed','Liberation Sans',sans-serif;">mm</div><div class="t" style="top:203.5px;font-size:11px;line-height:15px;color:#000;left:882px;font-family:'DejaVu Sans Condensed','Liberation Sans',sans-serif;">µm</div>
<div style="left:54px;top:818px;width:853px;height:209px;background:#fff;border:1px solid #000;box-sizing:border-box;"></div><svg style="position:absolute;left:54px;top:818px" width="853" height="209" viewBox="54 818 853 209"><path d="M144.2 849.6 V996.4 M188.6 849.6 V996.4 M233.0 849.6 V996.4 M277.4 849.6 V996.4 M321.8 849.6 V996.4 M366.2 849.6 V996.4 M410.6 849.6 V996.4 M455.0 849.6 V996.4 M499.4 849.6 V996.4 M543.8 849.6 V996.4 M588.2 849.6 V996.4 M632.6 849.6 V996.4 M677.0 849.6 V996.4 M721.4 849.6 V996.4 M765.8 849.6 V996.4 M810.2 849.6 V996.4 M125.5 860.3 H855 M125.5 958.3 H855 " stroke="#b4b4b4" stroke-width="1" stroke-dasharray="3.5 3.5" fill="none" shape-rendering="crispEdges"/><path d="M126.4 846.6 V849.6 M126.4 996.4 V999.4 M135.3 846.6 V849.6 M135.3 996.4 V999.4 M144.2 843.1 V849.6 M144.2 996.4 V1002.9 M153.1 846.6 V849.6 M153.1 996.4 V999.4 M162.0 846.6 V849.6 M162.0 996.4 V999.4 M170.8 846.6 V849.6 M170.8 996.4 V999.4 M179.7 846.6 V849.6 M179.7 996.4 V999.4 M188.6 843.1 V849.6 M188.6 996.4 V1002.9 M197.5 846.6 V849.6 M197.5 996.4 V999.4 M206.4 846.6 V849.6 M206.4 996.4 V999.4 M215.2 846.6 V849.6 M215.2 996.4 V999.4 M224.1 846.6 V849.6 M224.1 996.4 V999.4 M233.0 843.1 V849.6 M233.0 996.4 V1002.9 M241.9 846.6 V849.6 M241.9 996.4 V999.4 M250.8 846.6 V849.6 M250.8 996.4 V999.4 M259.6 846.6 V849.6 M259.6 996.4 V999.4 M268.5 846.6 V849.6 M268.5 996.4 V999.4 M277.4 843.1 V849.6 M277.4 996.4 V1002.9 M286.3 846.6 V849.6 M286.3 996.4 V999.4 M295.2 846.6 V849.6 M295.2 996.4 V999.4 M304.0 846.6 V849.6 M304.0 996.4 V999.4 M312.9 846.6 V849.6 M312.9 996.4 V999.4 M321.8 843.1 V849.6 M321.8 996.4 V1002.9 M330.7 846.6 V849.6 M330.7 996.4 V999.4 M339.6 846.6 V849.6 M339.6 996.4 V999.4 M348.4 846.6 V849.6 M348.4 996.4 V999.4 M357.3 846.6 V849.6 M357.3 996.4 V999.4 M366.2 843.1 V849.6 M366.2 996.4 V1002.9 M375.1 846.6 V849.6 M375.1 996.4 V999.4 M384.0 846.6 V849.6 M384.0 996.4 V999.4 M392.8 846.6 V849.6 M392.8 996.4 V999.4 M401.7 846.6 V849.6 M401.7 996.4 V999.4 M410.6 843.1 V849.6 M410.6 996.4 V1002.9 M419.5 846.6 V849.6 M419.5 996.4 V999.4 M428.4 846.6 V849.6 M428.4 996.4 V999.4 M437.2 846.6 V849.6 M437.2 996.4 V999.4 M446.1 846.6 V849.6 M446.1 996.4 V999.4 M455.0 843.1 V849.6 M455.0 996.4 V1002.9 M463.9 846.6 V849.6 M463.9 996.4 V999.4 M472.8 846.6 V849.6 M472.8 996.4 V999.4 M481.6 846.6 V849.6 M481.6 996.4 V999.4 M490.5 846.6 V849.6 M490.5 996.4 V999.4 M499.4 843.1 V849.6 M499.4 996.4 V1002.9 M508.3 846.6 V849.6 M508.3 996.4 V999.4 M517.2 846.6 V849.6 M517.2 996.4 V999.4 M526.0 846.6 V849.6 M526.0 996.4 V999.4 M534.9 846.6 V849.6 M534.9 996.4 V999.4 M543.8 843.1 V849.6 M543.8 996.4 V1002.9 M552.7 846.6 V849.6 M552.7 996.4 V999.4 M561.6 846.6 V849.6 M561.6 996.4 V999.4 M570.4 846.6 V849.6 M570.4 996.4 V999.4 M579.3 846.6 V849.6 M579.3 996.4 V999.4 M588.2 843.1 V849.6 M588.2 996.4 V1002.9 M597.1 846.6 V849.6 M597.1 996.4 V999.4 M606.0 846.6 V849.6 M606.0 996.4 V999.4 M614.8 846.6 V849.6 M614.8 996.4 V999.4 M623.7 846.6 V849.6 M623.7 996.4 V999.4 M632.6 843.1 V849.6 M632.6 996.4 V1002.9 M641.5 846.6 V849.6 M641.5 996.4 V999.4 M650.4 846.6 V849.6 M650.4 996.4 V999.4 M659.2 846.6 V849.6 M659.2 996.4 V999.4 M668.1 846.6 V849.6 M668.1 996.4 V999.4 M677.0 843.1 V849.6 M677.0 996.4 V1002.9 M685.9 846.6 V849.6 M685.9 996.4 V999.4 M694.8 846.6 V849.6 M694.8 996.4 V999.4 M703.6 846.6 V849.6 M703.6 996.4 V999.4 M712.5 846.6 V849.6 M712.5 996.4 V999.4 M721.4 843.1 V849.6 M721.4 996.4 V1002.9 M730.3 846.6 V849.6 M730.3 996.4 V999.4 M739.2 846.6 V849.6 M739.2 996.4 V999.4 M748.0 846.6 V849.6 M748.0 996.4 V999.4 M756.9 846.6 V849.6 M756.9 996.4 V999.4 M765.8 843.1 V849.6 M765.8 996.4 V1002.9 M774.7 846.6 V849.6 M774.7 996.4 V999.4 M783.6 846.6 V849.6 M783.6 996.4 V999.4 M792.4 846.6 V849.6 M792.4 996.4 V999.4 M801.3 846.6 V849.6 M801.3 996.4 V999.4 M810.2 843.1 V849.6 M810.2 996.4 V1002.9 M819.1 846.6 V849.6 M819.1 996.4 V999.4 M828.0 846.6 V849.6 M828.0 996.4 V999.4 M836.8 846.6 V849.6 M836.8 996.4 V999.4 M845.7 846.6 V849.6 M845.7 996.4 V999.4 M854.6 843.1 V849.6 M854.6 996.4 V1002.9 M122.5 987.7 H125.5 M855 987.7 H857.5 M122.5 977.9 H125.5 M855 977.9 H857.5 M122.5 968.1 H125.5 M855 968.1 H857.5 M119.0 958.3 H125.5 M855 958.3 H859 M122.5 948.5 H125.5 M855 948.5 H857.5 M122.5 938.7 H125.5 M855 938.7 H857.5 M122.5 928.9 H125.5 M855 928.9 H857.5 M122.5 919.1 H125.5 M855 919.1 H857.5 M119.0 909.3 H125.5 M855 909.3 H859 M122.5 899.5 H125.5 M855 899.5 H857.5 M122.5 889.7 H125.5 M855 889.7 H857.5 M122.5 879.9 H125.5 M855 879.9 H857.5 M122.5 870.1 H125.5 M855 870.1 H857.5 M119.0 860.3 H125.5 M855 860.3 H859 " stroke="#000" stroke-width="1" fill="none" shape-rendering="crispEdges"/><path d="M125.5 849.6 H855 V996.4 M125.5 826 V996.4 H878" stroke="#000" stroke-width="1.4" fill="none" shape-rendering="crispEdges"/><path d="M119.5 909.3 H859" stroke="#000" stroke-width="1.2" shape-rendering="crispEdges"/><path d="M122.0 833 L125.5 824.5 L129.0 833" stroke="#000" stroke-width="1.2" fill="none"/><path d="M872 992.9 L880.5 996.4 L872 999.9" stroke="#000" stroke-width="1.2" fill="none"/><path d="M125.7 954.0 L151.3 950.5 L174.2 941.4 L197.1 929.4 L227.0 908.3 L248.0 895.0 L269.2 883.0 L290.3 872.8 L315.0 865.4 L339.5 862.3 L364.2 862.3 L385.3 863.3 L410.0 865.4 L431.0 867.2 L455.6 868.2 L497.8 868.2 L526.0 868.2 L550.6 870.3 L575.2 873.9 L599.8 880.2 L624.4 888.6 L649.0 900.2 L666.7 909.0 L698.3 923.1 L740.5 941.4 L772.2 952.7 L809.1 965.3 L835.5 976.6 L854.8 981.5" stroke="#2b8cf0" stroke-width="1.2" fill="none"/><circle cx="133.5" cy="855.5" r="3" fill="#e8f2fa" stroke="#1c6ea4" stroke-width="1.2"/><path d="M135.8 857.8 L139.5 861.5" stroke="#1c6ea4" stroke-width="1.5"/></svg><div class="t" style="top:1001.5px;font-size:11px;line-height:15px;color:#000;left:-155.8px;width:600px;text-align:center;font-family:'DejaVu Sans Condensed','Liberation Sans',sans-serif;">20</div><div class="t" style="top:1001.5px;font-size:11px;line-height:15px;color:#000;left:-111.4px;width:600px;text-align:center;font-family:'DejaVu Sans Condensed','Liberation Sans',sans-serif;">30</div><div class="t" style="top:1001.5px;font-size:11px;line-height:15px;color:#000;left:-67.0px;width:600px;text-align:center;font-family:'DejaVu Sans Condensed','Liberation Sans',sans-serif;">40</div><div class="t" style="top:1001.5px;font-size:11px;line-height:15px;color:#000;left:-22.600000000000023px;width:600px;text-align:center;font-family:'DejaVu Sans Condensed','Liberation Sans',sans-serif;">50</div><div class="t" style="top:1001.5px;font-size:11px;line-height:15px;color:#000;left:21.80000000000001px;width:600px;text-align:center;font-family:'DejaVu Sans Condensed','Liberation Sans',sans-serif;">60</div><div class="t" style="top:1001.5px;font-size:11px;line-height:15px;color:#000;left:66.20000000000005px;width:600px;text-align:center;font-family:'DejaVu Sans Condensed','Liberation Sans',sans-serif;">70</div><div class="t" style="top:1001.5px;font-size:11px;line-height:15px;color:#000;left:110.60000000000002px;width:600px;text-align:center;font-family:'DejaVu Sans Condensed','Liberation Sans',sans-serif;">80</div><div class="t" style="top:1001.5px;font-size:11px;line-height:15px;color:#000;left:155.0px;width:600px;text-align:center;font-family:'DejaVu Sans Condensed','Liberation Sans',sans-serif;">90</div><div class="t" style="top:1001.5px;font-size:11px;line-height:15px;color:#000;left:199.40000000000003px;width:600px;text-align:center;font-family:'DejaVu Sans Condensed','Liberation Sans',sans-serif;">100</div><div class="t" style="top:1001.5px;font-size:11px;line-height:15px;color:#000;left:243.79999999999995px;width:600px;text-align:center;font-family:'DejaVu Sans Condensed','Liberation Sans',sans-serif;">110</div><div class="t" style="top:1001.5px;font-size:11px;line-height:15px;color:#000;left:288.20000000000005px;width:600px;text-align:center;font-family:'DejaVu Sans Condensed','Liberation Sans',sans-serif;">120</div><div class="t" style="top:1001.5px;font-size:11px;line-height:15px;color:#000;left:332.6px;width:600px;text-align:center;font-family:'DejaVu Sans Condensed','Liberation Sans',sans-serif;">130</div><div class="t" style="top:1001.5px;font-size:11px;line-height:15px;color:#000;left:377.0px;width:600px;text-align:center;font-family:'DejaVu Sans Condensed','Liberation Sans',sans-serif;">140</div><div class="t" style="top:1001.5px;font-size:11px;line-height:15px;color:#000;left:421.4000000000001px;width:600px;text-align:center;font-family:'DejaVu Sans Condensed','Liberation Sans',sans-serif;">150</div><div class="t" style="top:1001.5px;font-size:11px;line-height:15px;color:#000;left:465.79999999999995px;width:600px;text-align:center;font-family:'DejaVu Sans Condensed','Liberation Sans',sans-serif;">160</div><div class="t" style="top:1001.5px;font-size:11px;line-height:15px;color:#000;left:510.20000000000005px;width:600px;text-align:center;font-family:'DejaVu Sans Condensed','Liberation Sans',sans-serif;">170</div><div class="t" style="top:1001.5px;font-size:11px;line-height:15px;color:#000;left:845.6000000000001px;font-family:'DejaVu Sans Condensed','Liberation Sans',sans-serif;">180 mm</div><div class="t" style="top:852.8px;font-size:11px;line-height:15px;color:#000;left:-486.5px;width:600px;text-align:right;font-family:'DejaVu Sans Condensed','Liberation Sans',sans-serif;">50</div><div class="t" style="top:901.8px;font-size:11px;line-height:15px;color:#000;left:-486.5px;width:600px;text-align:right;font-family:'DejaVu Sans Condensed','Liberation Sans',sans-serif;">0</div><div class="t" style="top:950.8px;font-size:11px;line-height:15px;color:#000;left:-486.5px;width:600px;text-align:right;font-family:'DejaVu Sans Condensed','Liberation Sans',sans-serif;">-50</div><div class="t" style="top:827.0px;font-size:11px;line-height:15px;color:#000;left:99px;font-family:'DejaVu Sans Condensed','Liberation Sans',sans-serif;">µm</div>
<div style="left:54px;top:1026px;width:324px;height:276px;background:#f1f1f1;border:1.5px solid #000;box-sizing:border-box;"></div><div style="left:56px;top:1027.5px;width:320px;height:20.5px;background:#0b6070;"></div><div class="t" style="top:1029.0px;font-size:13px;line-height:17px;color:#fff;left:64px;font-family:'DejaVu Sans Condensed','Liberation Sans',sans-serif;font-weight:bold;"><span style="letter-spacing:0.10px">ISO 25178-2 - Primary surface</span></div><div class="t" style="top:1049.8px;font-size:11px;line-height:15px;color:#3a3a3a;left:63px;font-family:'DejaVu Sans Condensed','Liberation Sans',sans-serif;font-style:italic;"><span style="letter-spacing:0.05px">S-filter (λs): None</span></div><div style="left:56px;top:1065.5px;width:320px;height:1px;background:#b9b9b9;"></div><div class="t" style="top:1067.8px;font-size:11px;line-height:15px;color:#3a3a3a;left:63px;font-family:'DejaVu Sans Condensed','Liberation Sans',sans-serif;font-style:italic;"><span style="letter-spacing:-0.01px">F-operation: [Workflow] Form alone (LSP 12)</span></div><div style="left:56px;top:1083.5px;width:320px;height:1px;background:#b9b9b9;"></div><div style="left:56px;top:1084.0px;width:320px;height:18px;background:#aac9cc;"></div><div class="t" style="top:1085.5px;font-size:11.5px;line-height:15.5px;color:#0b6070;left:63px;font-family:'DejaVu Sans Condensed','Liberation Sans',sans-serif;font-weight:bold;letter-spacing:-0.3px;">Height parameters</div><div style="left:56px;top:1101.5px;width:320px;height:1px;background:#b9b9b9;"></div><div style="left:56px;top:1102.0px;width:40.5px;height:18px;background:#d8e9eb;"></div><div style="left:153px;top:1102.0px;width:1px;height:18px;background:#dcdcdc;"></div><div style="left:189px;top:1102.0px;width:1px;height:18px;background:#dcdcdc;"></div><div class="t" style="top:1103.8px;font-size:11px;line-height:15px;color:#3a3a3a;left:63px;font-family:'DejaVu Sans Condensed','Liberation Sans',sans-serif;">Sq</div><div class="t" style="top:1103.8px;font-size:11px;line-height:15px;color:#3a3a3a;left:-455px;width:600px;text-align:right;font-family:'DejaVu Sans Condensed','Liberation Sans',sans-serif;">39.53</div><div class="t" style="top:1103.8px;font-size:11px;line-height:15px;color:#3a3a3a;left:162px;font-family:'DejaVu Sans Condensed','Liberation Sans',sans-serif;">µm</div><div style="left:56px;top:1119.5px;width:320px;height:1px;background:#b9b9b9;"></div><div style="left:56px;top:1120.0px;width:40.5px;height:18px;background:#d8e9eb;"></div><div style="left:153px;top:1120.0px;width:1px;height:18px;background:#dcdcdc;"></div><div style="left:189px;top:1120.0px;width:1px;height:18px;background:#dcdcdc;"></div><div class="t" style="top:1121.8px;font-size:11px;line-height:15px;color:#3a3a3a;left:63px;font-family:'DejaVu Sans Condensed','Liberation Sans',sans-serif;">Ssk</div><div class="t" style="top:1121.8px;font-size:11px;line-height:15px;color:#3a3a3a;left:-455px;width:600px;text-align:right;font-family:'DejaVu Sans Condensed','Liberation Sans',sans-serif;">-0.3652</div><div style="left:56px;top:1137.5px;width:320px;height:1px;background:#b9b9b9;"></div><div style="left:56px;top:1138.0px;width:40.5px;height:18px;background:#d8e9eb;"></div><div style="left:153px;top:1138.0px;width:1px;height:18px;background:#dcdcdc;"></div><div style="left:189px;top:1138.0px;width:1px;height:18px;background:#dcdcdc;"></div><div class="t" style="top:1139.8px;font-size:11px;line-height:15px;color:#3a3a3a;left:63px;font-family:'DejaVu Sans Condensed','Liberation Sans',sans-serif;">Sku</div><div class="t" style="top:1139.8px;font-size:11px;line-height:15px;color:#3a3a3a;left:-455px;width:600px;text-align:right;font-family:'DejaVu Sans Condensed','Liberation Sans',sans-serif;">2.562</div><div style="left:56px;top:1155.5px;width:320px;height:1px;background:#b9b9b9;"></div><div style="left:56px;top:1156.0px;width:40.5px;height:18px;background:#d8e9eb;"></div><div style="left:153px;top:1156.0px;width:1px;height:18px;background:#dcdcdc;"></div><div style="left:189px;top:1156.0px;width:1px;height:18px;background:#dcdcdc;"></div><div class="t" style="top:1157.8px;font-size:11px;line-height:15px;color:#3a3a3a;left:63px;font-family:'DejaVu Sans Condensed','Liberation Sans',sans-serif;">Sp</div><div class="t" style="top:1157.8px;font-size:11px;line-height:15px;color:#3a3a3a;left:-455px;width:600px;text-align:right;font-family:'DejaVu Sans Condensed','Liberation Sans',sans-serif;">70.55</div><div class="t" style="top:1157.8px;font-size:11px;line-height:15px;color:#3a3a3a;left:162px;font-family:'DejaVu Sans Condensed','Liberation Sans',sans-serif;">µm</div><div style="left:56px;top:1173.5px;width:320px;height:1px;background:#b9b9b9;"></div><div style="left:56px;top:1174.0px;width:40.5px;height:18px;background:#d8e9eb;"></div><div style="left:153px;top:1174.0px;width:1px;height:18px;background:#dcdcdc;"></div><div style="left:189px;top:1174.0px;width:1px;height:18px;background:#dcdcdc;"></div><div class="t" style="top:1175.8px;font-size:11px;line-height:15px;color:#3a3a3a;left:63px;font-family:'DejaVu Sans Condensed','Liberation Sans',sans-serif;">Sv</div><div class="t" style="top:1175.8px;font-size:11px;line-height:15px;color:#3a3a3a;left:-455px;width:600px;text-align:right;font-family:'DejaVu Sans Condensed','Liberation Sans',sans-serif;">142.5</div><div class="t" style="top:1175.8px;font-size:11px;line-height:15px;color:#3a3a3a;left:162px;font-family:'DejaVu Sans Condensed','Liberation Sans',sans-serif;">µm</div><div style="left:56px;top:1191.5px;width:320px;height:1px;background:#b9b9b9;"></div><div style="left:56px;top:1192.0px;width:40.5px;height:18px;background:#d8e9eb;"></div><div style="left:153px;top:1192.0px;width:1px;height:18px;background:#dcdcdc;"></div><div style="left:189px;top:1192.0px;width:1px;height:18px;background:#dcdcdc;"></div><div class="t" style="top:1193.8px;font-size:11px;line-height:15px;color:#3a3a3a;left:63px;font-family:'DejaVu Sans Condensed','Liberation Sans',sans-serif;">Sz</div><div class="t" style="top:1193.8px;font-size:11px;line-height:15px;color:#3a3a3a;left:-455px;width:600px;text-align:right;font-family:'DejaVu Sans Condensed','Liberation Sans',sans-serif;">213.1</div><div class="t" style="top:1193.8px;font-size:11px;line-height:15px;color:#3a3a3a;left:162px;font-family:'DejaVu Sans Condensed','Liberation Sans',sans-serif;">µm</div><div style="left:56px;top:1209.5px;width:320px;height:1px;background:#b9b9b9;"></div><div style="left:56px;top:1210.0px;width:40.5px;height:18px;background:#d8e9eb;"></div><div style="left:153px;top:1210.0px;width:1px;height:18px;background:#dcdcdc;"></div><div style="left:189px;top:1210.0px;width:1px;height:18px;background:#dcdcdc;"></div><div class="t" style="top:1211.8px;font-size:11px;line-height:15px;color:#3a3a3a;left:63px;font-family:'DejaVu Sans Condensed','Liberation Sans',sans-serif;">Sa</div><div class="t" style="top:1211.8px;font-size:11px;line-height:15px;color:#3a3a3a;left:-455px;width:600px;text-align:right;font-family:'DejaVu Sans Condensed','Liberation Sans',sans-serif;">33.21</div><div class="t" style="top:1211.8px;font-size:11px;line-height:15px;color:#3a3a3a;left:162px;font-family:'DejaVu Sans Condensed','Liberation Sans',sans-serif;">µm</div><div style="left:56px;top:1227.5px;width:320px;height:1px;background:#b9b9b9;"></div><div style="left:56px;top:1228.0px;width:320px;height:18px;background:#aac9cc;"></div><div class="t" style="top:1229.5px;font-size:11.5px;line-height:15.5px;color:#0b6070;left:63px;font-family:'DejaVu Sans Condensed','Liberation Sans',sans-serif;font-weight:bold;letter-spacing:-0.3px;">Functional parameters (main)</div><div style="left:56px;top:1245.5px;width:320px;height:1px;background:#b9b9b9;"></div><div style="left:56px;top:1246.0px;width:40.5px;height:18px;background:#d8e9eb;"></div><div style="left:153px;top:1246.0px;width:1px;height:18px;background:#dcdcdc;"></div><div style="left:189px;top:1246.0px;width:1px;height:18px;background:#dcdcdc;"></div><div class="t" style="top:1247.8px;font-size:11px;line-height:15px;color:#3a3a3a;left:63px;font-family:'DejaVu Sans Condensed','Liberation Sans',sans-serif;">Smr</div><div class="t" style="top:1247.8px;font-size:11px;line-height:15px;color:#3a3a3a;left:-455px;width:600px;text-align:right;font-family:'DejaVu Sans Condensed','Liberation Sans',sans-serif;">0.5195</div><div class="t" style="top:1247.8px;font-size:11px;line-height:15px;color:#3a3a3a;left:162px;font-family:'DejaVu Sans Condensed','Liberation Sans',sans-serif;">%</div><div style="left:56px;top:1263.5px;width:320px;height:1px;background:#b9b9b9;"></div><div style="left:56px;top:1264.0px;width:40.5px;height:18px;background:#d8e9eb;"></div><div style="left:153px;top:1264.0px;width:1px;height:18px;background:#dcdcdc;"></div><div style="left:189px;top:1264.0px;width:1px;height:18px;background:#dcdcdc;"></div><div class="t" style="top:1265.8px;font-size:11px;line-height:15px;color:#3a3a3a;left:63px;font-family:'DejaVu Sans Condensed','Liberation Sans',sans-serif;">Smc</div><div class="t" style="top:1265.8px;font-size:11px;line-height:15px;color:#3a3a3a;left:-455px;width:600px;text-align:right;font-family:'DejaVu Sans Condensed','Liberation Sans',sans-serif;">50.40</div><div class="t" style="top:1265.8px;font-size:11px;line-height:15px;color:#3a3a3a;left:162px;font-family:'DejaVu Sans Condensed','Liberation Sans',sans-serif;">µm</div><div style="left:56px;top:1281.5px;width:320px;height:1px;background:#b9b9b9;"></div><div style="left:56px;top:1282.0px;width:40.5px;height:18px;background:#d8e9eb;"></div><div style="left:153px;top:1282.0px;width:1px;height:18px;background:#dcdcdc;"></div><div style="left:189px;top:1282.0px;width:1px;height:18px;background:#dcdcdc;"></div><div class="t" style="top:1283.8px;font-size:11px;line-height:15px;color:#3a3a3a;left:63px;font-family:'DejaVu Sans Condensed','Liberation Sans',sans-serif;">Sdc</div><div class="t" style="top:1283.8px;font-size:11px;line-height:15px;color:#3a3a3a;left:-455px;width:600px;text-align:right;font-family:'DejaVu Sans Condensed','Liberation Sans',sans-serif;">102.0</div><div class="t" style="top:1283.8px;font-size:11px;line-height:15px;color:#3a3a3a;left:162px;font-family:'DejaVu Sans Condensed','Liberation Sans',sans-serif;">µm</div><div style="left:56px;top:1299.5px;width:320px;height:1px;background:#b9b9b9;"></div><div class="t" style="top:1313.5px;font-size:11px;line-height:15px;color:#000;left:78px;font-family:'DejaVu Sans Condensed','Liberation Sans',sans-serif;"><span style="letter-spacing:-0.03px">MountainsMap X Scanning type 10.3.10995</span></div>
<div style="left:943px;top:195px;width:720px;height:550px;background:#fff;border:1px solid #000;box-sizing:border-box;"></div><svg style="position:absolute;left:944px;top:196px" width="717" height="547" viewBox="944 196 717 547"><defs><filter id="bl" x="-5%" y="-5%" width="110%" height="110%"><feGaussianBlur stdDeviation="2.8"/></filter><clipPath id="sc"><path d="M1762.3,489.2L1749.7,484.0L1737.3,478.7L1725.2,473.2L1713.1,468.0L1701.1,463.1L1689.1,458.9L1677.2,454.8L1665.5,451.0L1653.9,447.2L1642.5,443.4L1631.2,439.7L1620.0,436.2L1608.9,432.7L1598.0,429.3L1587.1,426.7L1576.3,424.1L1565.7,421.6L1555.2,419.1L1544.8,416.6L1534.6,414.2L1524.5,411.8L1514.5,409.4L1504.6,407.0L1494.8,404.5L1485.2,402.1L1475.6,399.7L1466.2,397.1L1456.9,394.6L1447.7,392.3L1438.6,390.3L1429.5,388.6L1420.6,386.9L1411.8,385.1L1403.0,383.3L1394.4,381.7L1385.9,380.2L1377.4,378.8L1369.1,377.4L1360.8,376.8L1352.7,376.2L1344.6,374.7L1336.6,373.2L1328.7,371.9L1320.9,370.7L1313.2,369.4L1305.6,368.3L1298.1,367.4L1290.6,366.5L1283.2,366.0L1275.9,365.8L1268.7,365.5L1261.6,365.2L1254.5,364.3L1247.5,363.1L1240.6,361.1L1233.7,358.9L1226.9,356.5L1220.3,358.6L1213.8,362.3L1213.8,362.3L1209.4,363.0L1205.0,363.7L1200.5,364.4L1195.9,365.2L1191.3,365.9L1186.7,366.6L1182.0,367.1L1177.2,367.6L1172.4,368.0L1167.6,368.5L1162.7,369.0L1157.7,369.6L1152.8,370.6L1147.7,371.7L1142.7,372.8L1137.5,373.9L1132.4,375.0L1127.2,376.4L1121.9,378.3L1116.7,380.2L1111.3,382.2L1105.9,384.2L1100.5,386.2L1095.0,388.2L1089.5,390.3L1083.9,392.4L1078.2,394.5L1072.5,396.7L1066.7,398.8L1060.9,400.7L1054.9,402.1L1048.8,403.5L1042.7,405.0L1036.6,406.5L1030.3,408.0L1024.1,410.2L1017.8,412.9L1011.5,415.6L1005.1,418.4L998.7,421.2L992.2,424.0L985.5,426.1L978.7,427.9L971.8,429.7L964.8,431.5L957.7,433.3L950.6,435.2L943.5,437.9L936.3,440.7L929.1,443.6L921.7,446.6L914.3,449.5L906.8,452.5L899.3,455.7L891.6,458.9L883.9,462.2L876.0,465.5L868.1,468.8L860.1,472.2L860.1,472.2L866.3,472.1L872.6,472.5L879.3,473.9L886.2,476.2L893.4,479.3L900.6,482.4L908.0,485.6L915.4,488.8L922.9,491.8L930.5,494.6L938.1,496.9L945.8,499.0L953.6,500.7L961.4,502.3L969.4,504.0L977.6,506.2L986.0,508.9L994.5,511.4L1003.2,513.8L1012.0,516.9L1021.0,520.2L1030.2,523.9L1039.6,527.8L1049.1,531.7L1058.8,535.7L1068.6,539.6L1078.6,543.7L1088.7,547.7L1099.0,551.7L1109.5,555.7L1120.2,559.7L1131.0,563.6L1142.0,567.6L1153.3,572.2L1164.8,576.9L1176.4,582.1L1188.3,587.5L1200.5,593.2L1212.8,599.1L1225.4,605.1L1238.2,611.6L1251.2,618.5L1264.5,626.0L1278.0,633.8L1291.7,641.7L1305.7,650.2L1319.9,658.6L1334.4,666.5L1349.1,674.5L1364.1,682.7L1379.4,690.8L1395.0,699.0L1411.0,706.8L1427.2,714.7L1443.8,722.8L1460.6,732.1L1477.7,742.9L1494.8,757.0L1512.0,772.5L1512.0,772.5L1518.8,763.7L1525.5,755.1L1532.1,746.7L1538.6,738.4L1544.9,730.2L1551.2,722.2L1557.3,713.8L1563.4,705.6L1569.4,697.5L1575.3,689.6L1581.0,681.8L1586.7,674.3L1592.1,667.5L1597.5,660.9L1602.8,654.4L1608.0,648.0L1613.1,641.7L1618.1,635.5L1623.0,629.8L1627.8,624.1L1632.6,618.5L1637.2,613.0L1641.8,607.6L1646.3,602.5L1650.6,597.9L1654.9,593.3L1659.1,588.7L1663.3,584.3L1667.3,579.9L1671.4,575.2L1675.5,570.3L1679.5,565.5L1683.4,560.7L1687.3,556.0L1691.1,551.4L1694.7,547.8L1698.1,544.8L1701.5,541.9L1704.9,539.1L1708.2,536.2L1711.4,533.5L1714.6,530.5L1717.8,527.5L1721.0,524.5L1724.1,521.6L1727.1,518.7L1730.1,515.8L1732.9,514.0L1735.6,512.5L1738.3,511.1L1740.9,509.6L1743.4,508.2L1746.0,506.8L1748.7,503.9L1751.5,500.9L1754.3,497.9L1757.0,495.0L1759.6,492.1L1762.3,489.2Z"/></clipPath><linearGradient id="bs" x1="0" y1="0" x2="1" y2="0"><stop offset="0" stop-color="#ececec"/><stop offset="0.55" stop-color="#dcdcdc"/><stop offset="1" stop-color="#cfcfcf"/></linearGradient></defs><path d="M860.1,472.2L866.3,472.1L872.6,472.5L879.3,473.9L886.2,476.2L893.4,479.3L900.6,482.4L908.0,485.6L915.4,488.8L922.9,491.8L930.5,494.6L938.1,496.9L945.8,499.0L953.6,500.7L961.4,502.3L969.4,504.0L977.6,506.2L986.0,508.9L994.5,511.4L1003.2,513.8L1012.0,516.9L1021.0,520.2L1030.2,523.9L1039.6,527.8L1049.1,531.7L1058.8,535.7L1068.6,539.6L1078.6,543.7L1088.7,547.7L1099.0,551.7L1109.5,555.7L1120.2,559.7L1131.0,563.6L1142.0,567.6L1153.3,572.2L1164.8,576.9L1176.4,582.1L1188.3,587.5L1200.5,593.2L1212.8,599.1L1225.4,605.1L1238.2,611.6L1251.2,618.5L1264.5,626.0L1278.0,633.8L1291.7,641.7L1305.7,650.2L1319.9,658.6L1334.4,666.5L1349.1,674.5L1364.1,682.7L1379.4,690.8L1395.0,699.0L1411.0,706.8L1427.2,714.7L1443.8,722.8L1460.6,732.1L1477.7,742.9L1494.8,757.0L1512.0,772.5L1511.3,778.7L1493.5,770.7L1476.0,762.8L1458.9,755.1L1442.1,747.6L1425.7,740.2L1409.6,733.0L1393.9,725.9L1378.4,718.9L1363.3,712.1L1348.5,705.4L1333.9,698.9L1319.7,692.5L1305.7,686.2L1292.0,680.0L1278.5,674.0L1265.3,668.0L1252.3,662.2L1239.6,656.4L1227.1,650.8L1214.8,645.3L1202.7,639.9L1190.9,634.5L1179.2,629.3L1167.8,624.1L1156.5,619.1L1145.5,614.1L1134.6,609.2L1123.9,604.4L1113.4,599.7L1103.1,595.0L1092.9,590.4L1082.9,585.9L1073.0,581.5L1063.4,577.1L1053.8,572.8L1044.4,568.6L1035.2,564.5L1026.1,560.4L1017.1,556.3L1008.3,552.4L999.6,548.5L991.1,544.6L982.6,540.8L974.3,537.1L966.1,533.4L958.1,529.8L950.1,526.2L942.3,522.7L934.6,519.2L926.9,515.7L919.4,512.4L912.0,509.0L904.7,505.7L897.5,502.5L890.4,499.3L883.4,496.2L876.5,493.0L869.7,490.0L862.9,486.9Z" fill="url(#bs)"/><path d="M1512.0,772.5L1518.8,763.7L1525.5,755.1L1532.1,746.7L1538.6,738.4L1544.9,730.2L1551.2,722.2L1557.3,713.8L1563.4,705.6L1569.4,697.5L1575.3,689.6L1581.0,681.8L1586.7,674.3L1592.1,667.5L1597.5,660.9L1602.8,654.4L1608.0,648.0L1613.1,641.7L1618.1,635.5L1623.0,629.8L1627.8,624.1L1632.6,618.5L1637.2,613.0L1641.8,607.6L1646.3,602.5L1650.6,597.9L1654.9,593.3L1659.1,588.7L1663.3,584.3L1667.3,579.9L1671.4,575.2L1675.5,570.3L1679.5,565.5L1683.4,560.7L1687.3,556.0L1691.1,551.4L1694.7,547.8L1698.1,544.8L1701.5,541.9L1704.9,539.1L1708.2,536.2L1711.4,533.5L1714.6,530.5L1717.8,527.5L1721.0,524.5L1724.1,521.6L1727.1,518.7L1730.1,515.8L1732.9,514.0L1735.6,512.5L1738.3,511.1L1740.9,509.6L1743.4,508.2L1746.0,506.8L1748.7,503.9L1751.5,500.9L1754.3,497.9L1757.0,495.0L1759.6,492.1L1762.3,489.2L1760.3,499.2L1757.6,502.2L1754.9,505.2L1752.2,508.3L1749.5,511.4L1746.7,514.5L1743.8,517.7L1741.0,520.9L1738.1,524.2L1735.1,527.5L1732.1,530.8L1729.1,534.2L1726.0,537.7L1722.9,541.2L1719.8,544.7L1716.6,548.3L1713.3,551.9L1710.0,555.6L1706.7,559.4L1703.3,563.2L1699.9,567.0L1696.4,571.0L1692.9,574.9L1689.3,579.0L1685.6,583.0L1681.9,587.2L1678.2,591.4L1674.3,595.7L1670.5,600.0L1666.5,604.5L1662.5,609.0L1658.5,613.5L1654.4,618.1L1650.2,622.8L1645.9,627.6L1641.6,632.5L1637.2,637.4L1632.7,642.4L1628.2,647.5L1623.6,652.7L1618.9,658.0L1614.1,663.4L1609.2,668.8L1604.3,674.4L1599.2,680.1L1594.1,685.8L1588.9,691.7L1583.6,697.6L1578.1,703.7L1572.6,709.9L1567.0,716.2L1561.3,722.6L1555.5,729.2L1549.5,735.9L1543.5,742.7L1537.3,749.6L1531.0,756.7L1524.6,763.9L1518.0,771.2L1511.3,778.7Z" fill="#d6d6d6"/><path d="M1511.3,778.7 L862.9,486.9" stroke="#a8a8a8" stroke-width="1" fill="none"/><path d="M1760.3,499.2 L1511.3,778.7" stroke="#8a8a8a" stroke-width="1" fill="none"/><g clip-path="url(#sc)"><g filter="url(#bl)" shape-rendering="crispEdges"><path d="M1762.3,489.2L1749.7,484.0L1737.3,478.7L1725.2,473.2L1713.1,468.0L1701.1,463.1L1689.1,458.9L1677.2,454.8L1665.5,451.0L1653.9,447.2L1642.5,443.4L1631.2,439.7L1620.0,436.2L1608.9,432.7L1598.0,429.3L1587.1,426.7L1576.3,424.1L1565.7,421.6L1555.2,419.1L1544.8,416.6L1534.6,414.2L1524.5,411.8L1514.5,409.4L1504.6,407.0L1494.8,404.5L1485.2,402.1L1475.6,399.7L1466.2,397.1L1456.9,394.6L1447.7,392.3L1438.6,390.3L1429.5,388.6L1420.6,386.9L1411.8,385.1L1403.0,383.3L1394.4,381.7L1385.9,380.2L1377.4,378.8L1369.1,377.4L1360.8,376.8L1352.7,376.2L1344.6,374.7L1336.6,373.2L1328.7,371.9L1320.9,370.7L1313.2,369.4L1305.6,368.3L1298.1,367.4L1290.6,366.5L1283.2,366.0L1275.9,365.8L1268.7,365.5L1261.6,365.2L1254.5,364.3L1247.5,363.1L1240.6,361.1L1233.7,358.9L1226.9,356.5L1220.3,358.6L1213.8,362.3L1213.8,362.3L1209.4,363.0L1205.0,363.7L1200.5,364.4L1195.9,365.2L1191.3,365.9L1186.7,366.6L1182.0,367.1L1177.2,367.6L1172.4,368.0L1167.6,368.5L1162.7,369.0L1157.7,369.6L1152.8,370.6L1147.7,371.7L1142.7,372.8L1137.5,373.9L1132.4,375.0L1127.2,376.4L1121.9,378.3L1116.7,380.2L1111.3,382.2L1105.9,384.2L1100.5,386.2L1095.0,388.2L1089.5,390.3L1083.9,392.4L1078.2,394.5L1072.5,396.7L1066.7,398.8L1060.9,400.7L1054.9,402.1L1048.8,403.5L1042.7,405.0L1036.6,406.5L1030.3,408.0L1024.1,410.2L1017.8,412.9L1011.5,415.6L1005.1,418.4L998.7,421.2L992.2,424.0L985.5,426.1L978.7,427.9L971.8,429.7L964.8,431.5L957.7,433.3L950.6,435.2L943.5,437.9L936.3,440.7L929.1,443.6L921.7,446.6L914.3,449.5L906.8,452.5L899.3,455.7L891.6,458.9L883.9,462.2L876.0,465.5L868.1,468.8L860.1,472.2L860.1,472.2L866.3,472.1L872.6,472.5L879.3,473.9L886.2,476.2L893.4,479.3L900.6,482.4L908.0,485.6L915.4,488.8L922.9,491.8L930.5,494.6L938.1,496.9L945.8,499.0L953.6,500.7L961.4,502.3L969.4,504.0L977.6,506.2L986.0,508.9L994.5,511.4L1003.2,513.8L1012.0,516.9L1021.0,520.2L1030.2,523.9L1039.6,527.8L1049.1,531.7L1058.8,535.7L1068.6,539.6L1078.6,543.7L1088.7,547.7L1099.0,551.7L1109.5,555.7L1120.2,559.7L1131.0,563.6L1142.0,567.6L1153.3,572.2L1164.8,576.9L1176.4,582.1L1188.3,587.5L1200.5,593.2L1212.8,599.1L1225.4,605.1L1238.2,611.6L1251.2,618.5L1264.5,626.0L1278.0,633.8L1291.7,641.7L1305.7,650.2L1319.9,658.6L1334.4,666.5L1349.1,674.5L1364.1,682.7L1379.4,690.8L1395.0,699.0L1411.0,706.8L1427.2,714.7L1443.8,722.8L1460.6,732.1L1477.7,742.9L1494.8,757.0L1512.0,772.5L1512.0,772.5L1518.8,763.7L1525.5,755.1L1532.1,746.7L1538.6,738.4L1544.9,730.2L1551.2,722.2L1557.3,713.8L1563.4,705.6L1569.4,697.5L1575.3,689.6L1581.0,681.8L1586.7,674.3L1592.1,667.5L1597.5,660.9L1602.8,654.4L1608.0,648.0L1613.1,641.7L1618.1,635.5L1623.0,629.8L1627.8,624.1L1632.6,618.5L1637.2,613.0L1641.8,607.6L1646.3,602.5L1650.6,597.9L1654.9,593.3L1659.1,588.7L1663.3,584.3L1667.3,579.9L1671.4,575.2L1675.5,570.3L1679.5,565.5L1683.4,560.7L1687.3,556.0L1691.1,551.4L1694.7,547.8L1698.1,544.8L1701.5,541.9L1704.9,539.1L1708.2,536.2L1711.4,533.5L1714.6,530.5L1717.8,527.5L1721.0,524.5L1724.1,521.6L1727.1,518.7L1730.1,515.8L1732.9,514.0L1735.6,512.5L1738.3,511.1L1740.9,509.6L1743.4,508.2L1746.0,506.8L1748.7,503.9L1751.5,500.9L1754.3,497.9L1757.0,495.0L1759.6,492.1L1762.3,489.2Z" fill="#b4a020" stroke="#b4a020" stroke-width="8"/><path fill="#000000" d="M1215 358l-8-2 9-3 9 1zm8 2l-9-2 10-4 8 2zm-17 1l-8-2 10-4 8 2zm22-5l-6 4 10-4 6-3zm-14 7l-9-2 10-4 9 2zm-17-1l-8-2 10-2 8 2zm22-3l-6 4 10-4 6-3zm-14 5l-8-2 9-2 9 2zm-16-1l-9-2 10-1 9 2zm7 2l-8-2 10-1 8 2z"/><path fill="#000054" d="M1234 353l-7 3 10-3 6-3zm-9 3l-6 3 9-3 7-4zm-9 4l-6 2 10-3 6-4zm-33 9l-6-1 10-2 7 1zm382 350l-9-4 6-9 9 4zm-22 1l-8-5 7-9 8 5zm30 2l-9-4 6-9 10 4zm8 3l-9-3 7-10 9 4zm-56 2l-8-5 6-6 8 5zm64 2l-9-4 7-9 9 3zm9 3l-10-4 7-9 9 4z"/><path fill="#00009c" d="M1240 355l-7-2 10-3 6 2zm-9 3l-7-2 10-3 7 2zm28 11l-7-1 9-3 7 0zm-33 7l-7 0 10-3 7 1zm-16 2l-7-1 11-2 7 0zm359 321l-9-4 7-8 8 4zm-21 1l-8-4 6-9 9 4zm-34 3l-8-4 7-8 8 4zm-19 19l-8-5 7-7 8 5z"/><path fill="#000090" d="M1246 357l-7-2 10-3 6 2zm-9 3l-7-2 10-3 7 2zm7 11l-7-1 10-3 7 1zm-58 2l-7-1 11-3 6 2zm49 1l-7-1 10-3 7 1zm-43 1l-7-2 11-2 6 1zm6 1l-7-1 11-3 6 2zm298 357l-9-5 8-7 8 4zm-7 7l-8-6 7-7 9 5zm-7 6l-8-5 8-7 8 5zm-5 6l-9-5 7-7 8 6z"/><path fill="#000006" d="M1211 362l-7 2 10-2 6-3zm326 393l-9-4 6-8 10 4zm-13 4l-9-7 6-8 9 7z"/><path fill="#00007e" d="M1252 359l-7-2 10-3 6 2zm-9 3l-7-2 10-3 7 2zm-9 3l-7-2 10-3 7 2zm-15 2l-6-2 10-4 6 2zm-58 0l-9-3 11-1 8 3zm7 2l-8-3 10-1 9 3zm6 1l-7-2 11-1 7 1zm55 3l-7 0 10-4 7 1zm-16 2l-6-1 10-3 7 2zm350 332l-9-4 7-8 8 3zm-21 1l-8-5 6-8 9 4zm-27 5l-8-4 7-7 8 4z"/><path fill="#000078" d="M1258 361l-7-2 9-4 7 2zm6 0l-7 0 9-4 7 1zm-15 3l-7-2 10-4 7 2zm6 1l-7-1 10-4 7 1zm-15 2l-7-2 10-4 7 2zm6 0l-6 0 9-4 7 1zm-21 1l-6-1 9-4 7 2zm-21 1l-6-2 10-4 6 2zm6 1l-6-1 10-4 6 1zm28 0l-7 0 10-4 6 1zm-43 1l-6-2 10-2 7 1zm6 2l-6-2 10-3 7 2zm6 1l-6-2 10-2 7 1zm321 337l-8-4 7-9 8 5z"/><path fill="#000024" d="M1179 365l-8-2 10-2 9 2zm8 2l-8-2 10-2 8 2zm353 370l-8-5 6-7 8 5zm-24 16l-8-7 6-7 8 6z"/><path fill="#000018" d="M1202 364l-7 1 10-1 7-3zm333 380l-9-6 6-7 9 6z"/><path fill="#000096" d="M1222 362l-6-2 9-4 7 2zm54 0l-7 0 10-3 6 0zm-9 4l-7-1 10-3 7 0zm-63 11l-7-1 11-3 7 2zm373 326l-9-4 6-9 9 4zm-42 1l-9-5 7-8 8 4zm50 2l-9-4 6-9 9 4zm8 3l-9-4 6-9 9 4zm-85 0l-8-4 7-7 8 4zm93 3l-9-4 6-9 9 4zm8 3l-9-3 6-9 10 3zm-108 1l-8-5 7-7 8 5z"/><path fill="#000084" d="M1270 362l-7-1 10-3 6 1zm-9 3l-7 0 10-4 7 1z"/><path fill="#00005a" d="M1207 363l-6 1 10-2 6-3zm-8 4l-7 0 10-3 7-1zm332 354l-9-5 6-6 8 5z"/><path fill="#00008a" d="M1228 364l-7-3 10-3 7 2zm-15 1l-6-2 10-4 6 2zm39 3l-6-1 9-3 7 1zm-72 4l-7-2 11-2 6 1zm40 4l-7-1 10-2 7 0zm335 328l-8-5 7-8 8 4zm-34 3l-8-4 7-8 8 4zm-12 13l-9-5 8-7 8 5zm-7 6l-8-5 7-7 8 5z"/><path fill="#000048" d="M1170 366l-8-2 10-1 9 2zm8 2l-9-2 11-1 8 2zm336 372l-8-6 6-7 8 6z"/><path fill="#000030" d="M1193 367l-7 0 10-2 7-1z"/><path fill="#000ca2" d="M1282 363l-7-1 10-3 7 0zm-9 3l-7 0 10-4 7 0z"/><path fill="#0030a2" d="M1288 363l-7 0 10-4 7 0zm-8 3l-7 0 9-4 7 0zm-57 13l-7-1 10-2 7 0z"/><path fill="#000072" d="M1231 370l-6-2 9-3 7 1zm-15 2l-6-2 10-4 6 2zm7 1l-7-2 10-3 7 1zm348 338l-9-4 6-9 9 4zm-22 1l-8-5 7-9 8 5zm30 2l-9-4 6-9 9 4zm8 3l-9-4 6-9 9 4zm8 3l-9-3 6-10 10 4zm9 4l-10-4 7-9 9 3z"/><path fill="#005aa2" d="M1295 363l-7 0 9-4 7 0z"/><path fill="#00006c" d="M1189 369l-6-1 10-1 7 0zm334 348l-8-5 6-6 8 4zm-5 6l-8-6 6-6 8 5zm-6 6l-8-6 6-6 8 5zm-5 6l-8-7 6-6 8 6zm-6 6l-8-7 6-6 9 6zm-5 6l-9-7 7-7 8 7zm-6 6l-9-7 7-7 8 7z"/><path fill="#0078a2" d="M1301 364l-7-1 9-4 8 1zm-50 14l-7-1 10-2 7 0zm-16 2l-7-1 11-2 7 0z"/><path fill="#0006a2" d="M1151 368l-9-3 11-1 9 3z"/><path fill="#000ca8" d="M1265 369l-7-1 9-3 7 1zm-49 10l-7-1 11-3 7 1zm-15 1l-7 0 10-3 7 1z"/><path fill="#009ca8" d="M1308 364l-8 0 10-4 7 1zm-9 4l-7-1 9-4 8 1zm-8 3l-8-1 10-3 7 0zm-33 8l-8-1 10-3 8 1zm-16 1l-7 0 10-3 7 1zm-16 2l-7-1 10-2 8 1zm-107 15l-7-1 9-3 7 1z"/><path fill="#005aa8" d="M1286 366l-7 0 10-4 7 1zm-93 19l-7-1 8-2 7 1z"/><path fill="#0006a8" d="M1159 370l-9-3 11-1 8 2zm22 10l-6-1 8-2 6 1z"/><path fill="#0000a2" d="M1250 371l-7 0 10-3 7 0zm-74 5l-6-2 10-3 7 2zm6 2l-6-2 10-3 7 2zm6 1l-6-2 10-2 7 1zm339 321l-8-5 7-8 8 5zm-27 5l-8-4 7-7 8 5zm-12 23l-8-5 8-7 8 5zm-6 7l-9-5 8-7 8 5z"/><path fill="#0036a8" d="M1144 369l-9-2 8-2 9 2zm127 0l-7 0 10-3 7 0z"/><path fill="#00a89c" d="M1314 365l-7-1 9-3 8 1zm-130 24l-7-1 8-2 7 1zm-36 5l-7-1 9-2 7 1zm-23 4l-7-1 9-3 7 1z"/><path fill="#0078a8" d="M1293 367l-8-1 10-3 7 0z"/><path fill="#0000a8" d="M1164 372l-6-3 11-1 6 2zm6 2l-6-2 10-2 7 2zm71 0l-7 0 10-3 7 0zm-46 6l-7-2 10-2 7 1zm366 316l-8-4 7-8 8 3zm-20 0l-8-4 6-8 8 4zm-47 15l-8-4 7-7 8 5zm-19 31l-9-5 8-8 8 5zm-6 6l-8-6 6-6 9 5zm-6 6l-8-6 6-6 9 5z"/><path fill="#0012a8" d="M1256 372l-7-1 10-3 7 1zm-24 5l-7-1 10-3 7 1zm-45 5l-6-2 8-2 7 2z"/><path fill="#00a878" d="M1321 366l-8-1 10-3 7 1z"/><path fill="#0060a8" d="M1278 369l-8 0 10-3 7 0z"/><path fill="#0036ae" d="M1151 371l-8-2 8-2 9 2z"/><path fill="#004eae" d="M1136 371l-8-3 8-1 9 2zm8 2l-9-3 9-1 8 2zm-5 12l-7-1 9-3 7 2z"/><path fill="#00ae6c" d="M1327 367l-7-1 9-4 8 2zm-8 4l-8-2 10-3 7 1zm-8 3l-8-1 9-4 8 1z"/><path fill="#003ca8" d="M1263 372l-8 0 10-4 7 1zm-9 3l-7 0 10-3 7 0z"/><path fill="#00ae9c" d="M1306 369l-8-1 10-4 7 1zm-9 3l-7-1 9-4 8 1zm-8 3l-8-1 10-4 7 2z"/><path fill="#007ea8" d="M1284 370l-7-1 9-3 8 1z"/><path fill="#002aae" d="M1157 374l-6-3 8-2 6 3zm-3 7l-6-2 8-2 7 2zm6 2l-6-2 8-2 7 2z"/><path fill="#00ae54" d="M1334 368l-7-1 9-4 7 2zm-8 4l-8-2 10-3 7 1zm-10 8l-8-1 10-4 7 1z"/><path fill="#0018a8" d="M1247 375l-7-1 10-3 7 1zm-73 7l-7-1 8-2 7 1z"/><path fill="#00ae78" d="M1312 370l-7-1 9-4 8 1zm-10 8l-8-2 10-4 8 2z"/><path fill="#0066a8" d="M1269 372l-7 0 10-3 7 0zm-9 3l-7 0 10-3 7 0z"/><path fill="#006cae" d="M1129 372l-9-2 9-2 8 3zm7 2l-8-2 8-2 9 3z"/><path fill="#0012ae" d="M1163 376l-6-3 8-2 6 3zm5 5l-7-2 8-2 7 2z"/><path fill="#0042ae" d="M1150 375l-7-3 8-1 7 2zm-3 8l-7-2 8-2 7 2zm6 2l-7-2 8-2 7 2z"/><path fill="#06ae48" d="M1341 369l-8-1 10-4 7 2zm-9 4l-7-1 9-4 8 1zm-9 8l-8-1 9-4 8 1z"/><path fill="#0006ae" d="M1169 378l-7-2 9-2 6 2z"/><path fill="#007eae" d="M1275 373l-7-1 10-3 7 1zm-178 10l-8-3 9-3 8 2zm8 2l-8-3 8-3 9 2z"/><path fill="#0084ae" d="M1121 374l-9-2 9-2 9 2zm8 2l-9-2 9-2 8 2zm138 1l-8-2 10-3 7 1zm-162 3l-8-3 9-3 8 2zm8 2l-8-3 8-3 9 3z"/><path fill="#002ab4" d="M1156 378l-7-3 8-2 7 3z"/><path fill="#18ae3c" d="M1348 371l-8-2 9-3 8 1zm-9 3l-7-1 9-4 8 1zm-9 9l-8-2 9-4 8 1zm-272 58l-7-2 9-3 7 1z"/><path fill="#0000ae" d="M1175 379l-7-2 9-2 6 2zm379 313l-8-4 6-8 8 4zm28 3l-9-4 7-8 9 3zm-62 1l-8-4 7-8 8 4zm70 2l-9-4 7-8 9 3zm-83 1l-8-4 7-8 8 4zm91 2l-9-4 7-8 9 3zm9 3l-10-4 7-8 9 3zm8 3l-9-3 6-9 9 3zm-127 11l-9-5 8-7 8 5zm-7 6l-8-5 7-7 8 5z"/><path fill="#0030a8" d="M1238 377l-7 0 10-3 7 1zm-72 7l-6-1 8-2 7 1z"/><path fill="#00ae7e" d="M1304 373l-8-1 10-4 7 1zm-11 8l-7-1 9-4 8 1z"/><path fill="#009cae" d="M1282 374l-7-1 9-3 8 1zm-203 33l-7-1 10-3 7 1zm-24 4l-7-1 10-3 7 1z"/><path fill="#0060b4" d="M1142 377l-6-3 8-2 7 3z"/><path fill="#0018ae" d="M1162 379l-7-1 8-3 7 2z"/><path fill="#2aae36" d="M1355 372l-8-2 9-3 8 1zm-9 3l-7-1 9-4 8 1zm-18 12l-8-1 10-4 8 1z"/><path fill="#004ea2" d="M1245 377l-7 0 10-2 7 0zm-16 2l-7 0 10-3 7 1zm-16 2l-7 0 11-3 7 1z"/><path fill="#0090ae" d="M1113 377l-8-3 8-3 9 3zm8 2l-9-2 9-4 9 3zm-148 64l-7-1 10-3 6 1z"/><path fill="#0042b4" d="M1148 380l-6-3 8-2 7 3z"/><path fill="#3cae2a" d="M1362 373l-8-1 9-4 8 1zm-9 4l-8-2 10-4 8 2z"/><path fill="#0078b4" d="M1135 379l-7-3 8-2 7 3z"/><path fill="#00ae5a" d="M1317 375l-7-1 9-4 8 1z"/><path fill="#00ae84" d="M1295 377l-7-2 9-4 8 2z"/><path fill="#00a2ae" d="M1273 378l-7-2 10-3 7 1zm-162 22l-7-1 9-3 7 1z"/><path fill="#002aa8" d="M1207 381l-7-1 11-2 7 0zm-13 1l-7-1 8-2 7 1zm-14 1l-7-1 8-2 7 1z"/><path fill="#0054b4" d="M1141 382l-7-4 8-2 7 3z"/><path fill="#54a81e" d="M1369 373l-8 0 9-4 8 1zm-9 4l-8 0 10-4 8 0zm-8 4l-8-1 9-4 8 1z"/><path fill="#00ae48" d="M1324 377l-8-2 10-4 7 1z"/><path fill="#00aea2" d="M1280 379l-8-2 10-3 8 1z"/><path fill="#0084b4" d="M1127 381l-7-2 9-4 7 4zm-8 3l-7-2 9-4 7 3z"/><path fill="#78a806" d="M1376 374l-8-1 9-3 8 0zm-8 3l-8 0 9-4 8 0zm-9 4l-8-1 10-3 8 0zm-8 4l-8-1 9-4 8 1zm-85 1l-8-1 11-2 7 1zm77 2l-9 0 10-4 8 0zm-105 1l-7-1 8-2 7 0zm65 1l-8-2 10-1 8 1zm-123 7l-7 0 8-3 8 1z"/><path fill="#0042a8" d="M1200 383l-7-1 8-2 7 1zm-14 1l-7-1 9-2 7 1zm-13 1l-7-1 8-2 7 1zm-14 1l-7-1 9-2 6 1z"/><path fill="#12ae42" d="M1331 378l-8-2 10-4 7 2z"/><path fill="#00ae66" d="M1309 379l-8-1 10-4 7 1z"/><path fill="#00ae8a" d="M1287 380l-8-1 10-4 7 1z"/><path fill="#00a896" d="M1264 380l-7-1 10-3 7 1zm-102 13l-7-1 9-3 7 1z"/><path fill="#0072a2" d="M1220 381l-8 0 11-2 7 0z"/><path fill="#0066b4" d="M1133 384l-7-3 9-3 7 3zm-8 2l-7-2 9-3 7 3z"/><path fill="#90ae00" d="M1383 375l-8-1 9-4 8 1z"/><path fill="#0066a2" d="M1206 383l-7 0 8-2 7 0z"/><path fill="#24ae36" d="M1338 379l-8-1 10-5 7 2zm-219 31l-7-1 9-4 7 1zm-53 28l-7-2 9-3 7 1z"/><path fill="#00a87e" d="M1271 381l-8-1 10-3 8 2z"/><path fill="#00a884" d="M1248 381l-7-1 10-3 8 2z"/><path fill="#0078ae" d="M1089 386l-8-3 9-3 8 2z"/><path fill="#96ae00" d="M1390 376l-8-1 9-4 8 1z"/><path fill="#36ae2a" d="M1345 380l-8-1 9-4 8 1zm-263 52l-8-2 9-3 7 1z"/><path fill="#06ae72" d="M1300 383l-8-2 10-4 8 2zm-185 22l-7-1 9-3 7 1z"/><path fill="#0654a8" d="M1179 386l-7-1 8-2 7 1zm-14 1l-7-1 9-2 7 1zm-104 17l-7-2 10-2 7 1z"/><path fill="#0090a2" d="M1213 383l-8 0 8-2 8 0z"/><path fill="#06a86c" d="M1278 382l-8-1 10-3 8 2zm-110 11l-7 0 9-3 7 1z"/><path fill="#064eae" d="M1145 387l-7-2 9-2 7 2zm-89 11l-9-3 10-3 9 2zm8 2l-9-2 10-4 8 3zm-17 0l-8-3 9-2 9 3zm23 1l-7-1 10-4 6 2zm-15 1l-9-2 10-3 9 3z"/><path fill="#06a866" d="M1255 382l-7-1 10-3 7 1zm-30 3l-7-1 8-2 7 1z"/><path fill="#06a884" d="M1232 383l-7-1 11-3 7 1zm-56 8l-7 0 9-3 7 1zm-36 5l-7-1 9-2 7 1z"/><path fill="#0678b4" d="M1111 387l-7-3 9-3 7 3zm-162 49l-9-3 10-3 9 3zm6 2l-7-2 10-3 6 3zm6 2l-7-2 10-3 6 3zm-11 8l-7-1 10-4 7 2z"/><path fill="#067ea2" d="M1199 385l-7 0 8-3 7 1z"/><path fill="#065aae" d="M1131 388l-7-2 9-3 7 2zm-53 10l-6-1 9-4 7 2zm-2 5l-7-2 9-3 7 1zm-76 29l-7-1 9-3 7 1z"/><path fill="#0678ae" d="M1097 388l-8-3 9-3 8 2zm10 7l-7-1 9-3 7 1zm-78 9l-8-3 10-2 8 3zm8 3l-9-3 10-3 9 3zm-31 26l-7-1 9-3 7 1zm-31 6l-6-1 9-3 7 2z"/><path fill="#a2ae06" d="M1398 377l-9-1 10-4 8 1zm-9 4l-8-1 9-4 9 1zm-8 4l-8-2 9-4 8 2zm-8 3l-8-1 9-4 8 1zm-8 4l-9-1 10-5 8 2zm-187 9l-7-1 9-3 7 1z"/><path fill="#06ae60" d="M1307 384l-8-1 10-5 8 2z"/><path fill="#90ae06" d="M1375 379l-8-2 9-4 8 2zm-8 3l-8-1 9-4 8 1zm-9 4l-8-2 10-4 8 2zm-8 3l-8-1 9-4 8 1zm-186 14l-8-1 9-3 8 0zm-9 3l-7-1 9-3 8 0zm-8 3l-7-1 9-3 7 0zm-9 3l-7-1 10-3 7 0zm-29 20l-7-1 8-3 8 1zm-15 6l-7-1 8-3 8 1zm-8 3l-7-1 8-4 8 2zm-7 3l-8-1 9-4 7 1z"/><path fill="#066cae" d="M1081 389l-8-3 9-3 8 2zm8 2l-9-3 9-3 9 2zm20 0l-7-2 9-3 7 2zm-14 1l-7-1 9-4 7 2zm6 2l-7-2 9-3 7 2zm-117 43l-7-2 9-2 7 1z"/><path fill="#0672a8" d="M1185 387l-7-1 8-2 7 0zm-95 14l-7-1 10-4 7 1zm-8 2l-7 0 9-4 7 1z"/><path fill="#06a88a" d="M1219 384l-7-1 8-2 7 1zm-21 4l-7-1 8-2 7 0z"/><path fill="#06a85a" d="M1284 383l-7-1 10-2 7 1zm-80 5l-7 0 8-3 8 1zm-21 4l-8-1 9-2 7 1z"/><path fill="#065aa8" d="M1151 388l-7-1 9-2 7 1z"/><path fill="#06a848" d="M1262 383l-8-1 10-3 8 1zm36 3l-8-2 10-2 8 2zm-80 1l-7-1 8-2 7 1zm-43 7l-7-1 8-2 7 1z"/><path fill="#06a860" d="M1239 384l-7-1 10-3 8 1zm-93 13l-7-1 9-2 7 1z"/><path fill="#066cb4" d="M1117 389l-7-3 9-3 7 3zm-119 27l-9-3 9-3 8 2zm13 4l-6-2 8-3 7 2zm5 6l-7-1 9-4 6 2zm-66 5l-9-3 9-3 9 3zm8 3l-9-3 9-3 9 3zm5 2l-6-3 9-2 7 2zm6 2l-6-2 9-3 7 2zm-31 7l-7-3 10-3 7 2z"/><path fill="#00a8a2" d="M1205 386l-7-1 8-2 7 0z"/><path fill="#066ca8" d="M1171 388l-7-1 9-2 7 1zm-14 1l-7-1 9-2 7 1zm-14 1l-7-1 9-2 7 1z"/><path fill="#0660ae" d="M1137 389l-7-2 9-2 7 2zm-64 3l-9-3 10-3 8 2zm8 2l-9-3 9-3 9 2zm6 1l-7-1 9-4 7 2zm-3 5l-7-2 10-3 7 1zm-76 29l-7 0 9-4 7 1z"/><path fill="#a8ae06" d="M1405 379l-8-2 9-4 8 2zm-8 3l-8-1 9-4 8 1zm-8 4l-8-1 9-4 8 1zm-8 4l-9-2 9-4 9 2zm-108 1l-8-2 8-2 8 2zm99 2l-8-1 9-4 9 1zm-179 7l-7-2 9-2 7 1z"/><path fill="#0672b4" d="M1103 389l-7-2 9-3 7 2zm-86 33l-6-2 8-4 7 2zm-76 11l-8-3 9-3 9 4zm3 14l-7-3 10-3 7 2zm-3 4l-6-1 9-4 7 2z"/><path fill="#30ae30" d="M1337 384l-8-2 9-4 8 2z"/><path fill="#06ae4e" d="M1314 385l-8-1 10-4 8 1zm-201 24l-8-1 10-4 7 1zm-9 3l-7-1 9-4 8 1z"/><path fill="#96ae06" d="M1382 380l-8-2 9-4 8 2zm-8 3l-8-1 9-4 8 1zm-8 4l-9-1 10-4 8 1zm-179 11l-8-1 9-2 7 1z"/><path fill="#06a84e" d="M1291 384l-7-1 10-2 7 2z"/><path fill="#0090a8" d="M1191 387l-7-1 9-2 7 1zm-95 14l-7-1 10-3 7 1zm-8 3l-7-1 9-3 7 1z"/><path fill="#1ea836" d="M1268 383l-7 0 10-3 8 1zm-57 6l-8-1 9-2 7 0zm-44 7l-7 0 9-3 7 1z"/><path fill="#0666ae" d="M1123 390l-7-2 9-2 7 1zm-30 7l-7-2 9-3 7 2zm-55 5l-8-3 10-2 8 3zm8 2l-9-2 10-3 9 3zm-54 30l-7-1 9-3 7 2z"/><path fill="#0ca842" d="M1246 384l-8-1 11-2 7 1zm-94 14l-7-1 9-2 7 0z"/><path fill="#068aa8" d="M1177 389l-7-1 9-2 7 0zm-72 10l-7-1 9-4 7 2z"/><path fill="#06a872" d="M1212 386l-8 0 9-3 7 1zm-22 4l-7-1 9-2 7 0zm-67 12l-7-1 9-3 7 1z"/><path fill="#aeae06" d="M1413 380l-9-1 9-4 8 1zm-9 4l-8-2 9-4 9 2zm-8 3l-8-1 9-4 8 2zm95 11l-9-2 9-5 9 3zm-283 0l-8-1 9-3 8 1zm292 2l-10-2 9-5 9 3zm-315 2l-7-1 9-3 7 1z"/><path fill="#0cae42" d="M1321 386l-8-1 10-4 8 1z"/><path fill="#4ea81e" d="M1344 384l-8 0 9-4 8 0zm-9 4l-8-1 10-4 8 1zm-16 1l-8-1 10-2 8 1zm-102 0l-7-1 8-2 8 1z"/><path fill="#0ca848" d="M1232 385l-7 0 8-2 7 0z"/><path fill="#0684a8" d="M1164 390l-7-1 8-2 7 1z"/><path fill="#3ca82a" d="M1275 385l-7-2 10-2 7 2zm-116 14l-7-1 9-3 7 1z"/><path fill="#0672ae" d="M1129 391l-7-1 9-3 7 2zm-14 1l-7-1 9-3 7 2zm-16 6l-7-1 9-4 7 2zm-41 9l-7-1 10-3 7 2z"/><path fill="#36a224" d="M1252 385l-7-1 10-2 8 0zm-71 10l-7-1 9-2 7 0z"/><path fill="#067ea8" d="M1149 391l-6-1 8-2 7 1zm-14 1l-7-1 9-2 7 1zm-14 1l-7-1 9-3 7 2z"/><path fill="#aea806" d="M1420 382l-8-2 9-4 8 2zm-8 3l-8-1 9-4 8 1zm-24 6l-8-1 9-5 8 2zm-8 4l-9-2 10-4 8 2zm-158 2l-7-2 8-2 8 1zm-22 3l-8-1 9-2 8 1zm-59 23l-7-1 10-4 7 1z"/><path fill="#0654ae" d="M1065 395l-9-3 9-3 9 2zm7 2l-8-3 9-3 9 3z"/><path fill="#18a83c" d="M1305 387l-8-2 10-1 8 1zm-161 14l-7-1 9-3 7 1z"/><path fill="#36a82a" d="M1239 386l-8-1 8-2 8 1z"/><path fill="#00a2a8" d="M1170 391l-7-1 8-3 7 1z"/><path fill="#48a81e" d="M1282 386l-8-2 11-1 7 1z"/><path fill="#60a218" d="M1259 385l-7 0 10-3 8 1z"/><path fill="#2aa830" d="M1225 387l-8 0 9-3 7 1z"/><path fill="#0096a8" d="M1156 392l-7-1 8-2 7 1zm-14 1l-7-1 9-2 6 1zm-15 1l-7-1 9-2 7 1z"/><path fill="#aea206" d="M1428 383l-9-1 9-5 9 2zm-8 4l-9-2 9-4 9 2zm-16 2l-8-2 8-4 9 2zm8 1l-9-1 9-4 9 2zm8 2l-9-2 9-4 8 2zm-24 0l-9-1 9-4 9 2zm8 2l-9-2 9-4 9 2zm-16 2l-9-1 9-5 9 2z"/><path fill="#30a82a" d="M1312 388l-8-1 10-2 8 1z"/><path fill="#60a818" d="M1245 387l-7-1 8-2 7 0z"/><path fill="#5aa818" d="M1289 387l-8-1 10-2 8 1zm-58 1l-7-1 8-2 8 1z"/><path fill="#ae9c06" d="M1435 385l-8-2 9-4 8 2zm-8 4l-8-2 9-4 8 1zm32 1l-9-3 9-4 9 2zm-24 0l-9-2 9-4 9 2zm32 2l-9-3 9-4 9 2zm-16 2l-9-3 9-4 9 2zm-24 0l-8-2 8-4 9 2zm32 2l-9-3 9-4 9 2zm-48 0l-8-2 9-4 8 2zm32 1l-9-2 9-4 9 2zm-48 1l-8-2 9-4 9 2zm56 1l-9-2 9-4 9 2zm-236 0l-8-1 9-3 7 1zm-23 4l-8-1 9-3 8 1zm-8 3l-8-1 9-3 8 1zm-34 13l-7-1 9-4 8 1zm-20 17l-8-1 9-3 7 1zm-7 3l-8-1 8-3 8 1zm-8 3l-8-1 9-4 8 2zm-8 3l-8-1 9-4 8 2zm-8 3l-7-1 8-4 8 1z"/><path fill="#06a248" d="M1197 390l-8 0 9-3 7 1z"/><path fill="#66a812" d="M1296 389l-8-2 10-2 8 2zm-131 10l-7 0 9-3 7 1z"/><path fill="#84a806" d="M1252 387l-7 0 8-3 7 1zm21 0l-8-1 11-2 7 2zm-57 5l-7-1 8-2 8 1z"/><path fill="#068aae" d="M1113 396l-7-1 9-3 7 1zm-64 14l-7-2 10-3 7 2zm-68 31l-6-2 9-3 7 2zm-34 12l-7-2 10-3 7 1z"/><path fill="#ae9606" d="M1443 386l-9-1 9-5 9 2zm8 2l-9-2 9-4 9 1zm-8 4l-9-2 9-4 9 1zm-8 3l-9-2 9-4 9 2zm-16 2l-8-2 9-4 8 2zm-48 0l-8-2 9-2 9 1zm-142 1l-7-2 8-2 8 1zm198 1l-9-2 9-4 9 2zm-251 10l-8-1 9-3 8 1zm-9 3l-7-1 9-3 8 1zm-8 3l-8 0 10-4 7 1zm-22 18l-7-1 10-4 8 1z"/><path fill="#3ca224" d="M1203 390l-7 0 8-2 8 0z"/><path fill="#00a8a8" d="M1133 395l-7-1 10-2 6 1z"/><path fill="#6ca20c" d="M1327 390l-9-1 10-2 8 0zm-139 5l-8 0 9-3 7 0z"/><path fill="#96a806" d="M1259 388l-8-1 8-2 8 1zm28 2l-8-1 10-2 8 1zm-78 4l-8-1 9-2 7 0z"/><path fill="#06a878" d="M1154 395l-7-1 9-2 7 1zm-23 4l-7-1 10-3 7 1z"/><path fill="#1ea236" d="M1189 392l-7 0 8-2 8 0z"/><path fill="#72a80c" d="M1224 390l-7-1 8-2 7 1z"/><path fill="#90a806" d="M1280 389l-8-2 10-2 8 2zm-35 1l-8-1 8-3 8 1z"/><path fill="#6ca80c" d="M1210 391l-8-1 9-2 7 1z"/><path fill="#9cae06" d="M1357 391l-8-2 9-4 9 2z"/><path fill="#8aa206" d="M1334 390l-8-1 9-2 9 1z"/><path fill="#8aa806" d="M1310 390l-8-1 10-1 8 1zm-79 1l-8-1 8-2 8 1zm-37 5l-7-1 9-3 7 1z"/><path fill="#9ca806" d="M1266 390l-8-2 8-2 8 1zm75 2l-8-2 10-2 8 1zm-103 0l-8-1 8-3 8 1zm-15 1l-7-1 8-3 8 2zm-22 4l-7-1 8-3 8 1z"/><path fill="#06a854" d="M1160 396l-7-1 9-3 7 1zm-22 4l-7-1 9-3 7 1zm-8 3l-8-1 10-3 7 1z"/><path fill="#54a21e" d="M1196 393l-8-1 9-2 7 0zm-23 4l-7-1 9-2 7 0z"/><path fill="#a2a806" d="M1252 391l-8-2 8-2 8 1zm42 0l-8-1 10-2 8 1zm55 2l-9-2 10-2 8 1z"/><path fill="#96a206" d="M1318 391l-8-1 10-1 8 0z"/><path fill="#7ea806" d="M1202 394l-7-1 8-3 8 1z"/><path fill="#a8a806" d="M1259 392l-8-1 8-3 8 1zm-15 1l-7-1 8-3 8 1zm-14 1l-8-1 9-3 7 2zm126 0l-8-1 9-3 9 2zm-140 1l-8-1 9-3 7 2z"/><path fill="#00ae96" d="M1117 401l-7-1 9-3 7 1zm-8 3l-7-1 9-4 7 2z"/><path fill="#a8a206" d="M1280 392l-8-1 8-2 8 1zm45 0l-8-1 10-2 8 1zm-59 1l-8-1 8-3 8 2zm-29 2l-8-1 9-2 7 1zm127 1l-9-2 10-2 8 1z"/><path fill="#0660a8" d="M1067 405l-7-2 10-2 7 1z"/><path fill="#00a8ae" d="M1102 403l-7-2 10-3 7 2zm-32 7l-7-2 10-2 7 1z"/><path fill="#a2a206" d="M1301 392l-8-1 10-2 8 1z"/><path fill="#b4a206" d="M1475 394l-9-3 9-4 9 2zm-8 4l-9-3 9-4 9 2zm-7 4l-10-3 9-4 9 2zm1 17l-10-2 9-3 10 2zm77 25l-7-2 8-3 8 1zm7 2l-8-2 9-4 7 2zm-453 5l-8-1 9-4 7 1z"/><path fill="#0666a8" d="M1052 406l-7-2 10-2 7 1z"/><path fill="#a89c06" d="M1332 394l-8-2 10-2 8 1zm-81 0l-7-1 8-3 8 1z"/><path fill="#0678a8" d="M1073 406l-7-1 10-3 7 1z"/><path fill="#a89606" d="M1308 393l-8-1 11-2 8 1zm-23 1l-8-1 10-3 8 1zm-12 0l-8-1 8-2 8 1z"/><path fill="#b4a806" d="M1483 396l-9-2 9-5 9 3zm-13 25l-10-2 9-3 10 3zm9 3l-10-3 9-3 9 3zm72 24l-7-2 8-4 7 2z"/><path fill="#0096ae" d="M1020 406l-9-2 11-3 8 3zm8 3l-9-3 10-2 9 2z"/><path fill="#00aea8" d="M1094 406l-7-2 9-3 7 1zm-9 2l-7-1 10-3 7 1z"/><path fill="#a89006" d="M1340 395l-9-1 10-3 9 1z"/><path fill="#ae9006" d="M1258 395l-7-1 8-3 8 2zm-14 1l-8-1 8-3 8 2zm135 2l-9-1 10-3 9 2zm-172 3l-8-1 9-2 8 1zm-59 23l-7-1 9-4 8 1z"/><path fill="#ae8406" d="M1316 395l-8-2 10-2 8 1zm31 1l-8-1 10-3 8 2zm40 4l-9-2 10-2 8 1zm-188 4l-8-1 9-3 8 1zm-53 25l-7-1 10-5 7 2zm-9 8l-8-1 9-3 8 1zm-7 3l-8-1 8-3 8 1zm-8 3l-8-1 9-4 8 2zm-8 3l-8-1 9-4 8 2z"/><path fill="#48ae24" d="M1151 402l-8-1 10-3 7 0zm-9 3l-7-1 9-4 8 1zm-77 37l-7-1 8-4 8 2zm-17 11l-8-1 9-4 8 1z"/><path fill="#067eae" d="M1043 408l-7-2 10-2 7 2zm-29 22l-7-1 9-3 7 1zm-16 5l-7-1 9-3 7 1zm-31 7l-7-2 10-2 6 1z"/><path fill="#ae7e06" d="M1292 395l-8-1 10-3 8 1zm-26 1l-8-1 8-2 8 1zm-30 2l-7-1 8-2 8 1zm-45 9l-8-1 9-3 8 1zm-34 13l-8-1 10-4 8 1zm-12 14l-8-1 10-4 8 1z"/><path fill="#06ae90" d="M1100 407l-7-2 10-3 7 2z"/><path fill="#0684ae" d="M1064 409l-7-2 10-2 7 1zm-74 29l-7-1 9-3 7 1zm-52 18l-6-2 10-3 6 1z"/><path fill="#1eae3c" d="M1136 404l-7-1 9-3 7 0z"/><path fill="#84ae06" d="M1172 400l-8-1 9-2 8 0zm-51 19l-7-1 9-4 8 1z"/><path fill="#009cb4" d="M1013 410l-9-3 8-4 9 3zm7 2l-8-3 8-3 9 3zm6 2l-6-2 8-4 7 2zm3 10l-6-1 8-4 7 2zm-9 8l-7-2 9-3 7 1zm-16 5l-7-2 9-3 7 2zm-51 18l-7-3 10-3 7 2zm-17 6l-7-2 10-4 7 3z"/><path fill="#ae7206" d="M1323 396l-8-1 10-3 8 1zm-48 1l-8-2 11-2 8 1zm80 1l-9-2 10-2 9 1zm-200 27l-7-1 9-5 8 2z"/><path fill="#06ae54" d="M1121 406l-7-1 9-4 8 1z"/><path fill="#72ae0c" d="M1157 402l-7 0 9-4 7 1zm-8 3l-7 0 9-4 7 1zm-9 3l-7 0 10-4 7 1zm-8 3l-7 0 9-4 7 1zm-52 29l-8-1 9-4 7 2z"/><path fill="#b4ae06" d="M1475 400l-9-2 9-5 9 2zm-298 5l-7-1 9-4 7 2zm-8 3l-8-1 10-4 7 2zm-8 3l-8-1 9-3 8 1zm-9 4l-8-2 10-3 8 1zm335 11l-10-3 9-2 10 2zm9 2l-10-2 9-3 10 2zm9 2l-10-2 9-3 10 2zm-375 2l-7-1 10-5 8 2zm428 18l-8-2 9-4 7 2zm-474 5l-8-1 9-4 8 1zm-47 41l-9-2 9-4 8 3zm-8 3l-9-2 9-4 8 3zm-8 3l-9-2 9-3 9 2zm-8 4l-9-3 9-3 9 2zm-8 3l-9-2 9-4 9 2zm-9 3l-8-2 9-4 9 3zm-8 4l-9-3 10-3 8 2zm-9 3l-8-2 9-4 9 2zm-9 4l-8-2 10-4 8 2z"/><path fill="#ae6606" d="M1299 396l-8-1 10-3 9 1zm64 3l-9-1 10-3 8 2zm-120 0l-7-1 8-2 8 1zm-37 6l-8-1 9-3 8 1zm-8 3l-8-1 9-4 8 2zm-44 22l-8-1 10-5 8 2zm-10 9l-8-2 9-3 8 1zm-7 2l-8-1 8-3 8 1z"/><path fill="#06ae6c" d="M1106 408l-7-1 10-4 7 1zm-9 3l-7-2 10-3 7 1z"/><path fill="#b49606" d="M1403 399l-9-2 10-4 8 2zm32 2l-9-2 9-4 9 2zm-24 0l-9-2 10-4 8 2zm8 2l-9-2 9-4 9 2zm8 2l-9-2 9-5 9 3zm17 10l-9-3 9-3 9 3zm72 23l-10-3 8-3 11 3zm-425 18l-8-1 9-4 8 1z"/><path fill="#ae7806" d="M1251 397l-8-1 8-3 8 2zm144 5l-9-2 9-3 9 2zm-181 0l-8-1 9-2 8 1zm-31 8l-8-1 9-3 8 0zm-9 3l-7-1 9-3 8 0zm-8 3l-8-1 10-3 7 1z"/><path fill="#0096b4" d="M1034 411l-7-2 10-3 7 2zm-3 9l-7-1 8-4 7 2zm-19 14l-7-1 9-3 7 1z"/><path fill="#067eb4" d="M1005 413l-8-3 8-4 9 3zm18 10l-6-1 8-4 7 2zm-64 22l-7-2 9-3 7 2z"/><path fill="#aeb406" d="M1508 402l-9-2 8-5 9 3zm8 2l-9-2 8-5 10 3zm-16 2l-9-2 9-5 9 3zm9 2l-10-2 9-5 9 3zm-16 2l-9-2 8-5 9 3zm9 3l-10-3 8-4 10 2zm-17 2l-9-3 8-5 10 3zm9 2l-10-3 9-4 10 2zm-16 2l-10-3 9-4 9 2zm-335-1l-7-1 9-4 8 1zm343 3l-9-2 8-5 10 2zm-354 6l-7-1 10-5 7 2zm383 6l-11-3 9-3 10 3zm9 2l-11-3 9-3 10 3zm9 3l-10-3 8-3 10 2zm-448 12l-8-1 9-4 7 1zm-8 4l-8-2 9-4 7 2z"/><path fill="#ae6006" d="M1331 397l-9-1 11-3 8 2zm-73 1l-8-1 8-2 8 1zm113 3l-9-2 10-3 8 2zm-150 2l-8-1 9-2 8 1zm-31 8l-8-1 9-4 8 1zm-26 10l-8-1 10-4 8 1zm-35 23l-8-1 9-3 8 1z"/><path fill="#06b48a" d="M1091 410l-7-2 10-3 7 1zm-40 10l-7-2 8-3 7 2zm-11 12l-7-2 9-3 7 2zm-17 10l-7-2 9-3 7 2zm-10 9l-7-3 9-3 7 2zm-2 5l-7-2 9-4 8 2z"/><path fill="#b4b406" d="M1484 402l-10-2 9-5 9 3zm8 2l-9-2 8-5 10 3zm-16 2l-9-2 8-5 10 3zm9 2l-10-2 9-5 9 3zm-17 2l-9-2 9-5 9 3zm9 2l-10-2 9-5 9 3zm-17 2l-9-2 9-5 9 3zm9 3l-10-3 9-5 10 3zm-346 18l-8-1 9-4 7 2zm-7 3l-8-2 8-3 8 2zm-8 3l-8-2 9-3 8 2zm-8 3l-8-2 9-3 8 1zm-8 3l-7-2 8-3 8 1zm472 5l-7-2 8-5 7 3zm7 2l-8-2 9-5 7 3z"/><path fill="#1eae36" d="M1127 407l-7-1 10-4 7 1z"/><path fill="#ae5a06" d="M1307 397l-9-1 11-3 8 1zm-25 0l-8-1 11-3 8 2zm-46 5l-8-1 8-3 8 1zm-55 12l-8-1 10-4 8 1zm-8 3l-8-1 9-4 8 2zm317 19l-11-2 9-4 11 3zm9 2l-10-2 9-3 10 2z"/><path fill="#00b49c" d="M1076 411l-7-1 10-4 7 2zm-24 4l-7-1 10-3 7 1zm-9 8l-7-2 9-3 7 1zm-45 29l-7-3 9-3 8 2zm-2 5l-7-2 9-4 8 3zm-2 6l-7-3 9-3 8 2zm-54 35l-7-2 9-4 7 2z"/><path fill="#ae8a06" d="M1222 400l-8-1 9-3 7 1z"/><path fill="#00a2b4" d="M1040 412l-7-2 10-2 7 2zm-44 28l-7-2 9-3 7 2zm-8 3l-7-2 9-3 7 2zm-26 9l-7-3 10-3 7 2zm-17 6l-7-2 10-4 6 3zm-3 6l-7-3 10-4 7 3z"/><path fill="#ae5406" d="M1338 399l-8-2 10-2 8 1zm-73 0l-8-1 11-3 8 1zm113 3l-8-2 9-2 9 2zm-165 4l-8-1 9-3 8 1zm-51 20l-7-1 9-5 8 1z"/><path fill="#067eba" d="M1013 415l-9-3 9-3 8 3z"/><path fill="#00aeae" d="M1061 413l-7-2 10-3 7 1z"/><path fill="#4eae24" d="M1134 408l-7-1 9-4 7 1zm-9 3l-7-1 10-4 7 1zm-52 28l-7-1 8-4 8 2z"/><path fill="#ae4806" d="M1314 399l-8-2 10-3 8 2zm-24 0l-9-2 11-3 8 2zm56 1l-9-2 11-2 8 1zm-118 4l-8-1 9-2 8 1zm-23 5l-8-1 9-4 8 2zm-53 31l-8-2 8-3 8 2zm-8 3l-8-2 8-3 9 1zm-7 3l-9-2 9-3 8 1z"/><path fill="#baae06" d="M1468 404l-9-3 8-4 9 3zm-8 4l-9-3 9-4 9 3zm-8 4l-9-2 9-5 9 3zm-378 52l-8-2 10-4 8 2zm-9 9l-8-1 9-5 8 2z"/><path fill="#a8b406" d="M1170 404l-7-1 9-4 7 2zm355 2l-10-2 9-5 9 3zm9 2l-10-2 8-5 10 3zm-372-1l-7-1 9-4 7 2zm356 3l-10-2 8-5 10 3zm-364 0l-8-1 10-4 7 2zm372 3l-9-3 8-5 10 3zm-381 0l-7-1 9-4 8 2zm365 2l-9-3 8-4 9 2zm9 2l-10-3 8-4 10 2zm-16 2l-10-2 8-5 10 2zm9 2l-10-2 8-5 10 2zm-377 1l-8-1 10-5 7 2zm360 1l-10-2 9-5 10 2zm9 3l-10-3 9-5 10 3zm-381 5l-7-2 10-4 8 1zm416 8l-7-2 9-3 6 2zm7 2l-7-2 8-3 7 1zm6 2l-7-2 8-4 7 2z"/><path fill="#b49c06" d="M1444 403l-10-2 9-4 9 2zm9 14l-10-3 9-2 9 2zm-314 11l-7-1 10-5 7 2zm387 13l-11-3 9-3 10 2zm6 1l-7-2 8-3 7 2zm-488 56l-8-2 8-4 9 3zm-8 3l-8-2 9-4 8 3zm-8 3l-8-2 9-3 8 2zm-8 4l-8-3 9-3 8 2zm-8 3l-8-2 9-4 8 2zm-8 3l-9-2 10-4 8 3zm-9 4l-8-2 10-4 8 2zm-9 4l-8-3 10-4 8 3z"/><path fill="#06b47e" d="M1082 413l-7-2 10-3 7 1zm-34 16l-7-2 9-3 7 2zm-9 7l-7-1 9-4 7 2zm-18 11l-7-2 9-3 7 2zm-1 6l-8-3 10-3 7 2zm-11 8l-7-2 10-4 7 2z"/><path fill="#00aeb4" d="M1046 414l-7-2 10-3 7 2zm-8 3l-6-2 8-3 7 1zm-1 4l-7-1 9-4 6 2zm-9 8l-7-2 9-3 6 1zm-18 10l-7-2 9-3 7 2zm-8 3l-7-2 9-3 7 2zm-8 3l-7-2 9-4 7 3zm-8 3l-8-3 10-3 7 2zm-9 3l-7-3 9-3 8 2zm-11 8l-7-2 10-4 7 3zm-9 4l-7-3 10-4 7 3z"/><path fill="#ae6c06" d="M1229 401l-8-1 8-3 8 1z"/><path fill="#00a8b4" d="M1032 416l-6-2 8-4 7 2zm-14 20l-7-2 9-3 7 2zm-39 10l-7-3 10-3 7 2zm-8 3l-7-3 9-3 7 2zm-3 5l-7-2 10-4 7 2zm-8 3l-7-2 9-4 7 3zm-9 3l-7-2 10-4 7 3z"/><path fill="#06b490" d="M1067 414l-7-2 10-3 7 2zm-25 13l-7-1 8-4 7 2zm-27 18l-7-2 9-3 7 2zm-10 9l-8-3 10-3 7 2zm-2 5l-8-2 10-4 7 3zm-31 27l-7-2 8-4 8 2z"/><path fill="#065aba" d="M990 419l-9-3 9-3 9 3zm8 3l-9-3 9-4 8 3z"/><path fill="#ae3c06" d="M1322 400l-9-2 10-3 9 2zm-50 0l-8-1 11-3 8 1zm82 1l-9-1 10-3 9 2zm-96 1l-8-2 8-2 8 1zm-15 1l-8-1 9-3 8 1zm-55 12l-8-1 10-4 8 1zm-8 3l-8-1 9-4 8 1z"/><path fill="#ae4e06" d="M1251 400l-8-1 8-2 8 1zm135 4l-9-2 10-3 9 2z"/><path fill="#0684b4" d="M1019 417l-7-2 9-4 6 2z"/><path fill="#066cba" d="M1006 419l-9-3 8-4 9 3z"/><path fill="#baa206" d="M1452 406l-9-3 8-4 9 2zm-8 4l-10-3 10-4 9 2zm113 46l-8-3 9-4 7 2zm-474 4l-8-1 9-5 8 2zm-20 19l-8-2 10-4 8 1zm-10 10l-8-2 10-5 8 2zm-76 36l-8-2 10-4 8 2zm-9 4l-8-3 10-4 8 3z"/><path fill="#ae3606" d="M1297 400l-8-1 10-3 9 1zm-77 7l-8-1 9-3 8 1zm-61 34l-8-1 8-4 8 2zm-7 3l-9-1 9-4 8 2z"/><path fill="#06b466" d="M1089 414l-7-2 10-3 7 1zm-9 3l-7-2 10-3 7 1zm-10 3l-7-2 11-3 7 2zm-8 8l-7-2 8-4 7 2zm-26 18l-7-2 9-4 7 2zm-10 8l-7-1 9-4 7 1z"/><path fill="#b47806" d="M1403 404l-9-3 9-2 9 2zm8 2l-9-3 9-2 9 2zm42 16l-10-3 9-3 10 3zm84 27l-7-2 8-4 8 2z"/><path fill="#06b478" d="M1073 415l-7-1 10-3 7 1zm-26 18l-7-1 8-4 7 2zm-18 11l-7-2 9-3 7 2z"/><path fill="#1eb436" d="M1110 413l-7-1 10-4 7 1zm-100 66l-8-2 10-4 8 1z"/><path fill="#ae3006" d="M1329 401l-8-1 10-3 8 1zm-24 0l-9-1 11-3 8 1zm57 2l-9-2 10-2 9 1zm-25 0l-9-2 11-3 8 2zm-87 1l-8-1 9-3 8 1zm120 1l-9-2 10-3 8 2zm-135 0l-8-1 9-3 8 2zm-23 5l-8-1 9-4 8 1zm-8 3l-8-1 9-4 8 1zm-9 3l-8-1 10-4 8 1zm-17 7l-8-1 10-5 8 1zm304 16l-11-3 9-3 11 3zm9 2l-11-2 10-3 10 2z"/><path fill="#068ab4" d="M1025 419l-7-2 8-4 7 2zm-3 8l-7-1 9-3 6 1z"/><path fill="#063cba" d="M982 423l-8-3 8-4 9 3zm8 2l-9-3 9-3 9 2z"/><path fill="#ba9c06" d="M1435 407l-9-2 9-4 9 2zm127 58l-7-3 8-5 8 3zm-480 1l-9-2 10-4 8 1zm-10 9l-8-2 9-4 9 2zm-10 10l-8-2 10-5 8 2zm-10 10l-9-2 10-5 9 2z"/><path fill="#ae2a06" d="M1280 401l-8-1 11-3 8 1zm-15 2l-8-2 8-2 9 1zm113 4l-9-2 9-3 9 2z"/><path fill="#06b454" d="M1095 415l-7-1 10-4 7 2zm-9 4l-7-2 10-4 7 2zm-17 10l-8-2 9-3 7 2zm-17 11l-7-2 8-4 8 2zm-28 19l-7-2 9-3 8 1z"/><path fill="#a2b406" d="M1542 410l-9-2 8-5 9 3zm9 2l-10-2 8-5 10 3zm9 2l-10-2 8-5 10 3zm-25 1l-10-3 9-5 9 3zm9 2l-10-3 8-4 10 2zm-407 0l-8-2 10-4 7 2zm416 2l-10-2 8-5 10 2zm-25 0l-10-2 8-5 10 2zm9 2l-10-2 8-5 10 2zm9 2l-10-2 8-5 10 2zm-25 0l-10-2 8-5 10 2zm9 3l-11-3 9-5 10 3zm9 2l-11-3 9-5 10 3zm-26 0l-10-3 8-5 10 3zm9 2l-10-2 8-5 10 2zm9 2l-10-2 8-5 11 2zm-415 2l-8-2 9-3 7 2zm-7 3l-8-2 8-3 8 1zm-8 2l-8-1 9-3 8 1zm-8 3l-7-1 8-4 8 2zm465 2l-7-2 8-3 8 2zm-473 1l-7-1 9-4 7 2zm480 1l-7-2 8-4 7 2zm6 2l-7-2 8-4 7 2zm-493 1l-8-2 9-4 7 2zm500 1l-7-2 8-5 7 3z"/><path fill="#06b484" d="M1058 417l-7-2 10-3 7 2zm-9 7l-7-1 9-4 7 2zm-18 15l-7-1 9-4 7 2z"/><path fill="#00b4a2" d="M1044 418l-6-1 8-4 7 2zm-10 12l-7-1 9-4 7 2zm-9 8l-7-2 9-3 7 2zm-8 3l-7-2 9-3 7 1zm-27 14l-7-2 9-4 7 2z"/><path fill="#48b424" d="M1117 414l-8-1 10-4 7 1zm-21 12l-7-1 10-4 8 1z"/><path fill="#ae3612" d="M1312 403l-8-2 10-3 9 2zm-145 40l-9-2 9-3 8 1z"/><path fill="#ae3c18" d="M1287 403l-8-2 11-3 8 2zm58 1l-9-1 10-4 9 2z"/><path fill="#0636b4" d="M974 424l-8-3 9-2 8 3zm8 3l-9-3 9-2 9 3z"/><path fill="#065ab4" d="M1004 424l-7-2 9-4 6 2zm-46 5l-9-3 10-3 8 3zm8 2l-9-3 9-2 9 3zm6 3l-7-3 9-2 7 2z"/><path fill="#b47e06" d="M1419 408l-9-3 9-3 9 3zm43 16l-10-2 9-3 10 2zm9 2l-10-2 9-3 9 2zm-364 23l-8-1 8-4 8 2z"/><path fill="#18b43c" d="M1101 416l-7-1 10-4 7 2zm-18 12l-8-2 9-3 7 1zm-42 24l-7-1 9-4 7 1z"/><path fill="#06b472" d="M1064 418l-7-1 10-4 7 2zm-7 3l-7-1 8-4 7 2zm-1 5l-7-2 8-3 7 2zm-2 4l-7-1 9-4 7 2zm-16 11l-8-2 9-3 7 2zm-10 8l-7-2 9-3 7 2zm-10 9l-8-2 10-4 7 2zm-39 29l-8-2 9-3 8 2zm-8 3l-7-2 8-3 8 2zm-8 3l-7-2 9-3 7 2zm-8 3l-7-2 9-3 7 2zm-8 4l-8-2 10-4 7 2zm-9 3l-7-2 9-4 8 2z"/><path fill="#b44e06" d="M1394 406l-9-2 10-3 9 2zm9 2l-10-2 10-3 9 2zm50 19l-9-3 9-3 10 3zm9 2l-10-2 10-3 10 2z"/><path fill="#6cae12" d="M1123 415l-7-1 10-4 7 1z"/><path fill="#ae4224" d="M1273 404l-9-2 9-2 8 1z"/><path fill="#ae482a" d="M1320 404l-9-1 11-4 8 2zm33 2l-9-2 10-3 9 2zm-142 7l-8 0 9-4 8 1z"/><path fill="#ae4e30" d="M1295 404l-9-2 11-3 9 2zm-60 5l-9-2 9-2 8 1zm-32 8l-8-1 9-4 8 1zm-17 7l-8-1 9-5 8 1z"/><path fill="#b48406" d="M1427 410l-9-2 9-3 9 2zm52 19l-9-3 8-3 10 3z"/><path fill="#0660b4" d="M1010 425l-7-2 9-3 6 2zm-32 11l-7-3 9-2 7 2z"/><path fill="#3cb42a" d="M1108 418l-7-2 10-4 7 2zm-19 11l-7-2 8-3 7 2zm-32 16l-7-1 9-4 7 2zm-88 54l-8-1 9-4 8 2zm-26 10l-8-2 10-3 8 1zm-9 4l-7-2 9-4 8 2z"/><path fill="#0642b4" d="M996 427l-7-2 9-4 7 2zm-2 4l-7-2 9-3 7 2z"/><path fill="#0648b4" d="M966 427l-8-3 9-3 8 3zm8 2l-9-3 9-2 9 3z"/><path fill="#ae3c1e" d="M1258 405l-9-1 9-3 8 1z"/><path fill="#12b442" d="M1092 420l-7-2 10-3 7 1zm-17 11l-7-2 8-3 7 1zm-24 13l-8-1 9-4 7 1zm-50 39l-8-2 11-4 7 1z"/><path fill="#8aae06" d="M1130 416l-8-1 10-4 8 0zm-28 19l-8-1 9-3 7 1zm-31 12l-8-1 9-4 7 1z"/><path fill="#ae5442" d="M1280 405l-8-1 8-3 8 1z"/><path fill="#ae543c" d="M1328 406l-9-2 10-3 9 1zm-63 0l-8-1 8-3 8 2zm-71 14l-8-1 10-4 8 1z"/><path fill="#ae3618" d="M1242 406l-8-1 9-3 8 2z"/><path fill="#b49006" d="M1436 412l-10-2 9-3 10 2zm71 24l-10-3 8-3 11 2z"/><path fill="#ae5a48" d="M1302 406l-8-2 11-3 8 1zm-76 6l-8-2 9-3 8 2zm247 30l-10-3 9-3 11 3z"/><path fill="#9cb406" d="M1569 417l-10-3 8-5 10 3zm9 2l-10-3 8-5 10 3zm10 2l-11-3 8-4 10 2zm-26 0l-10-2 8-5 10 2zm9 2l-10-2 8-5 10 2zm10 3l-11-3 8-5 10 2zm-26 0l-10-3 8-5 10 3zm-429 0l-8-2 10-4 8 2zm438 2l-10-3 8-5 10 3zm10 2l-11-2 8-6 10 3zm-26 0l-10-2 8-5 10 2zm9 2l-10-2 8-5 10 2zm10 3l-11-3 8-5 11 2zm-26 0l-11-3 8-5 11 3zm9 2l-11-3 9-5 10 3zm9 2l-10-2 8-5 11 2zm-519 40l-8-1 10-5 8 2z"/><path fill="#06b45a" d="M1077 422l-7-2 10-4 7 2zm-16 10l-7-2 8-3 7 2zm-17 11l-7-2 9-4 7 2zm-10 8l-7-2 9-4 8 2z"/><path fill="#064eb4" d="M1002 429l-7-2 9-4 7 2zm-22 2l-7-2 9-2 7 2z"/><path fill="#b45406" d="M1411 410l-9-2 9-3 9 2zm60 22l-10-3 9-3 10 2zm9 2l-10-3 9-3 10 3z"/><path fill="#66ae18" d="M1114 419l-7-1 10-4 7 0zm-50 27l-8-1 9-4 8 1z"/><path fill="#063cb4" d="M988 429l-7-2 9-2 7 2z"/><path fill="#ae360c" d="M1227 408l-8-1 9-3 8 1z"/><path fill="#b42a06" d="M1386 409l-9-3 9-2 9 2zm77 25l-10-2 9-3 10 2zm9 3l-10-3 9-3 10 3z"/><path fill="#06b46c" d="M1063 423l-7-2 8-3 7 2zm-18 15l-7-2 9-3 7 2z"/><path fill="#b44e30" d="M1361 408l-9-2 10-4 9 3zm24 6l-9-2 10-4 9 3zm8 2l-9-2 10-4 9 3zm-219 28l-8-2 8-3 8 2z"/><path fill="#30b430" d="M1099 421l-7-1 10-4 7 1z"/><path fill="#b46654" d="M1288 407l-9-2 8-3 9 2zm55 2l-9-2 11-3 9 2zm58 15l-9-3 10-3 9 2zm9 2l-10-3 10-3 10 3z"/><path fill="#b46048" d="M1335 407l-8-2 10-3 9 2zm101 26l-10-3 10-3 10 2zm9 2l-10-3 10-3 10 3z"/><path fill="#ae4e36" d="M1250 408l-8-2 8-2 8 1z"/><path fill="#00b4ae" d="M1036 426l-7-2 8-3 7 1zm-53 27l-7-2 10-4 7 2zm-2 5l-7-2 10-4 7 3z"/><path fill="#ae6654" d="M1310 407l-8-2 10-3 9 2zm-38 1l-8-2 9-3 8 2z"/><path fill="#b45a06" d="M1419 413l-9-3 9-3 9 3zm-267 23l-8-2 10-4 8 1zm356 5l-10-3 9-3 10 3z"/><path fill="#0cb448" d="M1083 423l-7-1 10-4 8 1zm-16 11l-7-2 9-3 7 1zm-34 22l-8-2 10-4 7 2zm-39 30l-8-2 8-3 8 2zm-8 3l-8-2 9-3 7 1zm-8 3l-8-2 9-3 8 1zm-8 3l-8-2 9-3 8 1zm-8 3l-8-2 9-3 8 1zm-8 3l-8-2 9-3 8 1zm-9 3l-8-1 10-4 8 2zm-9 4l-7-2 9-4 8 2z"/><path fill="#b43006" d="M1394 411l-9-2 9-3 10 2zm8 2l-9-2 10-3 9 2zm43 17l-10-3 10-3 9 3zm-277 3l-8-2 10-5 8 2zm286-1l-10-2 9-4 10 3zm-288 6l-8-1 10-5 8 1zm331 5l-7-2 9-3 7 2zm6 2l-7-2 9-3 7 2zm-359 2l-8-1 8-4 9 2zm-8 3l-8-1 9-4 8 2zm-7 3l-9-1 9-4 8 2z"/><path fill="#ae4206" d="M1197 412l-8-1 9-4 8 1zm-26 10l-8-1 10-5 8 1z"/><path fill="#06b460" d="M1070 425l-8-2 9-3 7 2zm-17 10l-7-2 9-3 7 2z"/><path fill="#b44e36" d="M1369 410l-9-2 10-4 9 2z"/><path fill="#5aae1e" d="M1105 422l-7-1 10-4 8 1zm-17 11l-7-1 8-4 8 2zm-32 17l-8-1 9-4 8 1z"/><path fill="#b47266" d="M1295 408l-8-2 8-2 9 1zm-15 1l-8-2 8-2 8 1zm-88 21l-9-1 10-5 8 1zm-2 7l-8-2 10-5 8 2z"/><path fill="#ae6054" d="M1257 409l-8-2 9-2 8 1z"/><path fill="#ae7266" d="M1318 408l-9-1 11-3 9 1zm-53 2l-9-1 9-3 8 1zm-16 1l-8-1 9-3 8 2z"/><path fill="#ae421e" d="M1219 411l-8-1 9-4 8 1z"/><path fill="#b46606" d="M1427 415l-9-3 9-3 10 3zm91 29l-11-3 9-4 11 3z"/><path fill="#24b436" d="M1090 425l-7-2 10-4 7 2z"/><path fill="#96b406" d="M1128 421l-8-2 10-4 8 2zm469 2l-11-2 8-5 10 2zm9 2l-10-2 7-5 11 2zm-16 3l-11-3 8-5 11 3zm9 2l-10-3 8-5 10 3zm-482 0l-8-2 10-4 8 1zm466 2l-10-2 7-5 11 2zm10 3l-11-3 8-5 10 2zm-17 2l-10-3 7-5 11 3zm10 2l-11-2 8-6 11 3zm-17 3l-11-3 8-5 11 2zm10 2l-11-2 8-6 11 3zm6 8l-8-2 8-4 7 2zm-515 0l-8-1 9-4 8 1zm-39 31l-8-2 10-4 8 2z"/><path fill="#ae604e" d="M1242 410l-8-1 8-3 9 1zm-24 5l-8-2 9-3 8 1z"/><path fill="#06b44e" d="M1076 426l-7-1 8-4 7 2zm-16 11l-8-2 9-4 7 2z"/><path fill="#b45436" d="M1377 412l-9-2 10-4 9 2z"/><path fill="#0654b4" d="M986 433l-7-2 9-2 7 2z"/><path fill="#78ae06" d="M1112 423l-7-1 10-4 7 1z"/><path fill="#b46c5a" d="M1351 411l-9-2 11-4 9 3zm8 2l-9-2 11-4 9 2zm17 4l-9-2 10-4 9 3zm8 2l-9-2 10-4 9 3z"/><path fill="#b47272" d="M1303 410l-9-2 9-3 8 2zm23 0l-9-2 11-3 9 2z"/><path fill="#b46c06" d="M1436 417l-10-2 10-3 9 2zm88 29l-7-2 9-4 7 2z"/><path fill="#b43606" d="M1410 415l-9-2 10-3 9 2zm9 3l-10-3 10-3 9 3zm-249 9l-8-1 9-5 8 1zm340 20l-7-2 9-4 7 2z"/><path fill="#b47872" d="M1288 411l-9-2 9-3 8 2z"/><path fill="#90b406" d="M1119 425l-8-2 10-4 8 1zm-58 31l-7-2 9-4 8 2zm-9 9l-8-2 9-4 8 2zm-30 22l-8-2 10-4 8 2zm-39 15l-8-1 9-4 8 2zm-9 3l-7-1 9-4 8 2zm-8 4l-8-2 10-4 7 2zm-9 3l-8-1 10-4 8 1zm-9 4l-8-2 10-4 8 2zm-9 3l-8-2 10-3 8 1z"/><path fill="#b47e78" d="M1311 411l-9-1 8-4 9 2zm-16 2l-8-2 8-3 9 1zm47 1l-9-2 10-3 9 2zm-144 24l-8-1 9-6 9 2z"/><path fill="#b47878" d="M1334 412l-9-2 11-3 8 2zm-62 0l-8-2 8-3 9 2z"/><path fill="#b47206" d="M1444 420l-9-3 9-3 9 3zm87 27l-8-2 9-3 7 2z"/><path fill="#ae6c60" d="M1234 413l-8-1 9-4 8 2z"/><path fill="#6cb412" d="M1103 427l-7-1 10-4 7 1z"/><path fill="#00b4b4" d="M1026 433l-7-1 9-4 7 2zm-51 23l-7-2 9-4 7 2zm-3 6l-7-3 10-4 7 3zm7 2l-7-3 9-3 8 2zm-15 1l-8-3 10-3 7 2z"/><path fill="#ae7878" d="M1257 413l-9-2 9-3 9 2zm-16 1l-8-1 9-3 8 1z"/><path fill="#90ba06" d="M1612 427l-7-2 8-5 7 2zm-6 5l-7-2 7-6 7 3zm-7 5l-7-3 7-5 7 2zm-7 4l-7-2 8-5 7 2zm-550 33l-8-2 9-4 8 2z"/><path fill="#b46c60" d="M1368 415l-10-2 11-4 9 3z"/><path fill="#b48484" d="M1319 413l-9-2 8-3 9 2zm-16 2l-8-3 8-3 9 2zm-38 0l-9-2 9-3 8 2zm23 1l-9-3 9-3 8 2zm104 11l-10-3 11-3 9 2z"/><path fill="#b4847e" d="M1280 414l-9-2 9-3 9 2zm87 7l-10-3 11-3 9 2zm8 2l-9-3 10-3 9 2zm8 2l-9-3 10-3 10 2zm-183 1l-8-1 10-5 8 1zm201 3l-10-2 10-4 10 3zm9 2l-10-2 10-4 10 3zm-211 1l-8-2 10-5 8 2zm219 1l-9-2 10-3 10 2zm9 3l-10-3 10-3 10 2zm19 4l-10-2 9-4 11 3zm9 3l-10-3 9-3 11 2zm10 2l-11-3 10-3 10 3zm9 3l-11-3 10-4 11 3zm6 1l-7-2 10-3 7 2zm7 2l-7-2 9-3 7 1zm6 2l-7-2 9-4 8 2z"/><path fill="#b43c06" d="M1427 420l-9-3 9-3 10 3z"/><path fill="#84ba06" d="M1619 429l-7-2 7-5 7 2zm-7 5l-7-2 7-6 7 3z"/><path fill="#84b406" d="M1110 428l-8-1 10-4 8 1zm-77 50l-8-2 10-4 8 1z"/><path fill="#00b496" d="M1033 435l-7-2 8-3 7 2zm-85 60l-7-2 9-4 7 2z"/><path fill="#b4482a" d="M1402 418l-10-2 10-3 9 2z"/><path fill="#0678ba" d="M941 439l-9-3 9-4 9 4zm6 2l-7-2 9-4 7 3zm6 3l-7-3 9-3 7 2z"/><path fill="#ae300c" d="M1187 419l-8-1 9-4 8 1z"/><path fill="#60ae18" d="M1096 430l-8-1 9-4 7 2z"/><path fill="#ae786c" d="M1226 416l-9-2 10-3 8 2z"/><path fill="#b48a84" d="M1327 415l-9-2 8-3 9 2zm-16 2l-9-3 9-3 9 2zm-105 23l-9-2 10-5 9 2z"/><path fill="#7eba0c" d="M1625 431l-7-2 7-5 7 2zm-7 5l-7-2 8-6 7 3zm-6 5l-7-2 7-6 7 3zm-7 5l-7-3 7-5 8 2zm-7 5l-7-3 8-5 7 2z"/><path fill="#b47e7e" d="M1350 416l-9-2 10-4 10 3zm8 2l-9-2 11-4 9 3z"/><path fill="#ae8484" d="M1249 416l-9-2 9-3 9 1zm-40 5l-8-1 9-3 8 1z"/><path fill="#ae665a" d="M1210 417l-8-1 9-3 8 1z"/><path fill="#b44206" d="M1436 422l-10-2 10-3 9 2zm-277 15l-8-1 10-5 8 1z"/><path fill="#b44224" d="M1410 421l-9-3 9-3 10 2zm-236 19l-8-2 10-5 8 1z"/><path fill="#6cba18" d="M1631 433l-7-2 8-5 7 2zm-6 5l-7-2 7-6 7 3zm-7 5l-7-2 7-6 8 3zm-6 5l-8-3 8-5 7 2zm-7 5l-8-3 8-5 7 2z"/><path fill="#b48a8a" d="M1272 416l-8-2 8-3 9 2zm63 1l-9-2 8-3 9 2zm-39 1l-9-3 8-3 9 2zm23 1l-9-3 9-3 9 2zm24 1l-9-3 8-3 9 2zm-39 0l-9-3 8-3 9 2zm23 1l-9-3 9-3 9 2zm24 1l-9-3 8-3 9 2zm-15 1l-10-3 9-3 9 2zm24 1l-10-3 8-3 10 2z"/><path fill="#7eae06" d="M1102 431l-7-1 8-3 8 1z"/><path fill="#ae7e7e" d="M1233 417l-8-2 9-3 8 2z"/><path fill="#2aae30" d="M1074 435l-7-2 8-3 8 1z"/><path fill="#54ba24" d="M1638 435l-7-2 7-5 7 2zm-7 5l-7-2 7-6 8 3zm-6 5l-8-2 8-6 7 3zm-7 5l-7-2 7-6 8 2zm-7 5l-7-2 8-6 7 2z"/><path fill="#b4908a" d="M1257 418l-9-3 9-3 8 2zm55 4l-9-3 8-3 9 2zm-105 12l-9-2 10-5 9 2zm7 8l-9-2 10-5 9 2z"/><path fill="#b44806" d="M1445 425l-10-3 9-3 10 3zm-284 6l-8-1 10-5 8 2zm-32 18l-8-2 8-3 9 1zm-8 3l-8-2 9-3 8 1z"/><path fill="#ae7e78" d="M1217 418l-8-1 9-3 9 1z"/><path fill="#b43c18" d="M1419 423l-10-3 10-3 9 3zm-283 32l-8-2 8-3 9 1z"/><path fill="#b49090" d="M1280 419l-9-3 9-3 9 2zm-16 0l-8-2 9-3 8 2zm24 2l-9-3 9-3 9 2zm-55 1l-9-2 9-3 9 1zm63 1l-9-3 9-3 9 2zm-80 0l-8-2 10-3 8 2zm104 1l-9-2 8-4 9 2zm24 1l-9-2 8-4 9 2zm-40 0l-9-2 9-4 9 2zm64 1l-9-2 8-4 9 2zm-40 0l-9-2 8-4 9 2zm24 1l-9-2 8-4 9 2z"/><path fill="#b4665a" d="M1393 422l-10-3 10-3 10 2zm-204 21l-8-2 10-5 8 2z"/><path fill="#3cba2a" d="M1644 437l-7-2 7-5 7 2zm-6 5l-7-2 7-6 7 3zm-7 5l-7-2 7-6 8 3zm-6 5l-8-2 8-6 7 3zm-7 5l-7-2 7-6 8 3z"/><path fill="#ae8a8a" d="M1241 419l-9-2 9-3 9 1zm-16 1l-8-2 9-3 8 2z"/><path fill="#ae6c66" d="M1202 420l-9-1 10-3 8 1z"/><path fill="#7eae0c" d="M1095 434l-8-1 9-3 7 1zm-32 17l-8-1 9-4 8 1z"/><path fill="#54ae1e" d="M1081 436l-8-1 9-4 7 2z"/><path fill="#1eba3c" d="M1651 439l-7-2 7-5 7 2zm-7 5l-7-2 7-6 8 3zm-6 5l-7-2 7-6 7 3zm-6 5l-8-2 7-6 8 3zm-7 6l-8-3 8-6 7 3z"/><path fill="#b43612" d="M1427 425l-9-2 9-4 10 3zm-250 3l-8-1 10-5 8 1zm-18 18l-8-2 8-3 9 1zm-7 3l-9-2 9-3 8 1zm-8 3l-8-2 8-3 9 1z"/><path fill="#b49696" d="M1248 421l-8-3 9-3 9 2zm24 1l-9-3 9-3 9 2zm-16 0l-8-2 9-3 8 2zm24 2l-9-3 9-3 9 2zm8 2l-9-2 9-4 9 3zm-80 2l-8-2 9-5 9 2zm104-1l-9-2 9-4 9 3zm24 1l-9-2 8-4 10 3zm-40 0l-9-2 9-4 9 3zm-80 1l-9-2 10-5 8 2zm104 1l-9-3 9-4 9 3zm25 1l-10-3 9-4 9 3zm-16 1l-10-3 9-3 9 2zm24 1l-9-3 8-3 10 2zm25 1l-10-3 8-4 10 3zm-41 0l-9-2 8-4 10 2zm66 1l-10-3 8-4 10 3zm-41 0l-10-2 9-4 9 2zm-147 1l-9-2 10-6 8 3zm172 0l-10-2 8-4 10 2zm-41 1l-10-3 9-4 9 3zm66 0l-10-2 7-4 10 2zm-41 0l-10-2 8-4 10 2zm25 1l-10-2 8-4 10 2zm-42 1l-9-3 8-4 10 3zm67 0l-10-2 7-4 10 2zm-42 1l-9-3 8-4 10 3zm26 1l-10-3 8-4 10 3zm-42 0l-10-2 9-4 10 2z"/><path fill="#b48a06" d="M1489 431l-11-3 9-3 10 3zm9 2l-11-2 9-3 10 2zm-399 20l-8-2 9-4 8 2z"/><path fill="#0cba4e" d="M1657 442l-7-3 7-5 7 2zm-6 5l-7-3 7-5 7 2zm-6 5l-8-3 7-5 8 2zm-7 5l-7-3 7-5 7 2zm-6 5l-8-3 8-5 7 2zm-30 64l-9-3 7-5 9 2z"/><path fill="#00b4a8" d="M1008 444l-7-2 10-4 7 2zm-8 3l-7-2 9-4 7 2zm-8 3l-7-3 9-3 7 2zm-4 11l-8-3 10-4 7 3z"/><path fill="#78ae0c" d="M1087 437l-7-1 8-4 8 2z"/><path fill="#ae6c5a" d="M1193 425l-8-1 9-5 9 1z"/><path fill="#b4360c" d="M1436 428l-10-3 10-3 10 2z"/><path fill="#06ba60" d="M1664 444l-7-3 7-5 7 2zm-6 5l-8-3 7-5 8 2zm-7 5l-7-3 7-5 7 2zm-6 5l-8-3 8-5 7 2zm-629 4l-7-2 9-4 7 2zm622 1l-7-2 7-6 8 2zm-633 8l-7-2 10-4 7 2zm621 61l-9-3 9-7 8 3z"/><path fill="#8aba06" d="M1605 439l-7-3 8-5 7 2z"/><path fill="#0090b4" d="M965 447l-7-2 9-4 7 2z"/><path fill="#0666b4" d="M935 450l-6-2 9-4 7 2z"/><path fill="#b49c9c" d="M1240 424l-8-3 9-3 8 2zm24 1l-9-3 9-3 9 2zm-40 0l-8-2 9-4 9 2zm24 1l-9-3 10-3 8 2zm24 1l-9-3 9-3 9 2zm8 2l-9-2 9-4 9 3zm24 1l-9-2 9-4 9 3zm-16 1l-9-2 9-4 9 3zm25 2l-10-3 9-3 9 2zm8 2l-9-3 8-3 10 3zm-98 3l-9-2 9-6 9 3zm107-1l-10-2 9-4 9 3zm8 3l-9-3 8-3 10 2z"/><path fill="#b4604e" d="M1419 428l-10-2 10-4 9 3zm8 2l-9-2 9-3 10 2z"/><path fill="#b45a42" d="M1184 429l-8-1 10-5 8 1zm-3 12l-8-1 10-6 9 2z"/><path fill="#0690b4" d="M956 450l-7-2 10-3 7 1z"/><path fill="#06b496" d="M1007 449l-8-3 10-3 7 2zm-43 40l-7-2 9-4 7 2zm-8 3l-7-2 9-4 7 2z"/><path fill="#8aba0c" d="M1599 444l-8-3 8-5 7 2zm-7 5l-8-3 8-5 7 2z"/><path fill="#72ae12" d="M1072 443l-8-1 9-4 8 2zm-17 12l-8-2 9-4 8 2z"/><path fill="#b49690" d="M1377 428l-10-2 8-4 9 2zm-16 1l-10-2 8-4 10 3zm24 1l-10-2 8-4 10 2zm-16 2l-9-3 8-4 9 3zm25 1l-10-3 8-4 10 3z"/><path fill="#b4a2a2" d="M1232 427l-9-3 10-3 8 2zm24 1l-9-3 9-3 9 2zm-16 1l-9-3 9-3 9 2zm24 1l-9-3 9-3 9 2zm-41 1l-8-2 9-5 9 2zm49 1l-9-2 9-4 9 3zm-41 1l-9-2 10-5 9 2zm66 1l-10-3 9-4 9 3zm8 2l-9-3 8-3 10 2zm8 2l-9-2 9-4 9 3z"/><path fill="#0cb44e" d="M1043 447l-8-1 9-4 8 2z"/><path fill="#06ba78" d="M1664 451l-7-2 7-6 7 2zm-6 5l-7-2 7-6 7 2zm-6 5l-8-2 7-6 8 2zm-23 60l-8-3 6-5 9 3zm12 8l-8-3 8-7 9 3zm9 2l-10-3 9-6 9 2zm8 2l-9-2 8-7 9 2zm8 2l-9-2 8-7 9 3z"/><path fill="#b43c1e" d="M1175 434l-8-2 10-4 8 1z"/><path fill="#2ab430" d="M1049 449l-7-2 9-4 7 2z"/><path fill="#96ba06" d="M1585 446l-7-2 8-5 7 2zm-525 15l-8-2 10-4 7 2z"/><path fill="#b45a48" d="M1183 435l-8-1 9-5 9 1zm272 2l-11-2 10-4 10 3zm9 3l-11-3 10-3 10 2zm19 4l-11-2 9-4 11 3z"/><path fill="#b4a8a8" d="M1248 431l-9-3 9-3 9 2zm8 2l-9-2 9-4 9 3zm24 1l-9-2 9-4 9 3zm8 3l-9-3 9-3 9 2zm9 2l-10-3 9-3 10 3z"/><path fill="#06ba90" d="M1665 458l-8-2 7-6 8 3zm-675 16l-8-2 10-4 8 2zm-10 9l-8-2 9-4 8 2zm660 12l-9-2 8-6 8 2zm1 25l-9-2 8-7 9 3z"/><path fill="#baa8a8" d="M1239 435l-9-2 10-5 9 2zm66 6l-9-2 9-4 9 3zm9 3l-10-3 9-3 10 2zm8 2l-9-2 9-4 9 3zm9 3l-10-3 9-4 10 3zm9 2l-10-2 9-4 10 2zm-60 3l-9-3 9-5 10 3zm69 0l-10-3 9-4 10 3zm-60 3l-10-3 10-5 9 2zm69-1l-10-3 9-3 10 2zm-60 3l-10-3 9-5 10 3zm69 0l-10-3 9-4 10 3zm27 1l-11-3 9-4 10 3zm-87 2l-10-3 9-5 10 2zm93 0l-7-2 8-4 7 2zm-84 2l-11-3 10-5 10 3zm90-1l-7-2 8-4 8 2zm7 2l-8-2 9-4 7 2zm6 2l-7-2 8-4 7 2zm7 2l-8-2 9-4 7 2zm6 2l-7-2 8-4 7 2zm-107 3l-10-3 10-5 10 3zm10 3l-11-3 10-6 10 3zm96 0l-7-2 8-5 8 3zm7 2l-7-2 8-5 7 3zm-102 5l-11-3 10-5 10 3zm101 2l-7-3 8-5 8 3zm-92 1l-10-3 9-6 11 3zm7 2l-8-2 10-6 7 2zm6 2l-7-2 9-6 8 2zm7 2l-8-2 10-6 7 2z"/><path fill="#ae847e" d="M1437 438l-11-3 10-3 10 3z"/><path fill="#b4aeae" d="M1264 435l-9-2 9-4 9 3zm8 3l-9-3 9-3 9 2zm-17 2l-9-3 10-5 9 3z"/><path fill="#8ab40c" d="M1591 455l-7-3 8-4 7 2z"/><path fill="#baaeae" d="M1247 438l-9-3 10-5 9 3zm33 2l-9-3 9-3 9 2zm-16 2l-10-2 10-5 9 2zm25 0l-10-2 9-4 10 3zm8 3l-9-3 9-4 9 3zm9 2l-10-2 9-4 10 3zm8 3l-9-3 9-4 9 3zm9 2l-10-3 9-3 10 2zm-17 2l-10-2 10-5 9 2zm26 1l-10-3 9-4 10 3zm-17 2l-10-3 9-5 10 3zm26 0l-10-3 9-3 10 2zm-17 2l-10-2 9-6 10 3zm26 1l-10-3 9-4 10 3zm27 1l-11-3 9-4 10 3zm-44 1l-10-3 9-5 10 3zm26 0l-10-3 9-4 10 3zm27 1l-10-2 8-4 11 2zm-61 4l-11-3 10-5 10 2zm67-2l-7-2 9-4 7 2zm7 2l-8-2 9-4 7 2zm-65 2l-10-3 9-5 10 3zm71 0l-7-2 8-4 8 2zm-62 3l-10-3 9-5 10 2zm69-1l-8-2 9-5 7 3zm6 2l-7-2 8-5 8 3zm7 2l-8-2 9-5 7 3zm-81 4l-10-3 9-5 11 3zm10 3l-11-3 9-6 11 3zm70-1l-8-2 9-5 7 3zm7 2l-8-2 9-5 7 3zm-71 1l-7-2 9-6 7 2zm7 2l-8-2 10-6 7 2zm6 2l-7-2 9-6 7 2z"/><path fill="#30ae2a" d="M1040 457l-8-1 9-4 8 1z"/><path fill="#b46006" d="M1122 447l-8-1 8-4 8 2zm-8 3l-8-1 8-4 9 2z"/><path fill="#baa2a2" d="M1231 440l-9-3 9-5 9 3zm91 1l-10-3 9-4 10 3zm-83 1l-9-2 9-5 9 2zm91 1l-9-3 9-3 9 2zm-83 2l-9-3 9-5 9 2zm92 0l-10-2 9-4 10 3zm-84 2l-9-3 9-5 10 3zm93 1l-10-3 9-4 10 3zm9 2l-10-2 9-4 9 2zm9 3l-10-3 8-4 10 3zm9 2l-10-3 8-4 11 3zm9 2l-10-2 8-4 11 3zm30 3l-7-2 8-4 7 2zm6 2l-7-2 8-4 7 2zm-131 2l-10-3 10-5 10 2zm137-1l-7-2 8-4 8 2zm7 2l-7-2 8-4 7 2zm-135 1l-10-3 10-5 10 3zm9 3l-10-3 9-5 11 3zm9 2l-10-2 9-6 11 3zm123 2l-8-2 9-4 7 2zm7 2l-8-2 8-5 8 3zm6 2l-7-2 8-5 7 3zm-135 2l-11-3 10-5 10 2zm9 3l-10-3 9-6 11 3zm119-1l-8-2 9-5 7 3zm-113 8l-7-2 7-4 8 2zm6 2l-7-2 8-5 7 3zm7 2l-7-2 7-5 8 2zm6 2l-7-2 8-5 7 2zm7 2l-7-2 7-5 8 2zm-7 5l-7-3 7-5 8 3z"/><path fill="#78b40c" d="M1598 457l-8-3 8-4 8 2z"/><path fill="#06ba8a" d="M1659 463l-8-2 7-6 8 3zm-658 2l-8-2 10-4 7 2z"/><path fill="#60b418" d="M1046 458l-7-1 9-4 8 1z"/><path fill="#66ba18" d="M1605 459l-8-2 8-5 7 3z"/><path fill="#ba9696" d="M1430 442l-10-3 7-4 11 3zm-42 0l-10-2 9-5 10 3zm26 1l-10-3 7-4 11 3zm-42 0l-10-2 9-4 9 2zm67 1l-10-3 7-4 11 3zm-42 0l-10-2 8-4 10 2zm26 1l-10-2 7-4 11 2zm-42 1l-10-3 8-4 10 3zm-151 1l-9-3 10-5 9 3zm219 0l-11-3 8-4 10 2zm-42 0l-11-3 8-4 11 3zm25 1l-10-3 8-4 10 3zm23 0l-7-2 7-4 7 2zm-217 1l-9-2 10-6 9 3zm223 1l-7-2 7-4 7 2zm-215 2l-9-3 10-5 9 2zm221-1l-7-1 8-5 7 2zm7 2l-7-2 7-4 7 2zm-20 1l-7-2 8-5 7 2zm26 1l-7-2 7-4 8 1zm7 2l-7-2 7-5 7 2zm-20 0l-7-2 7-4 8 2zm7 2l-8-2 8-5 7 2zm6 2l-7-2 7-5 8 2zm-13 2l-8-2 8-5 7 2zm6 2l-7-2 8-5 7 2zm-193 4l-9-3 9-6 10 3zm186 0l-7-2 8-5 7 2zm-175 9l-10-3 8-5 10 3zm10 2l-11-3 8-4 10 3zm11 10l-10-3 8-5 10 3zm6 8l-8-2 8-5 8 2zm6 2l-7-2 8-5 7 2zm7 2l-8-2 8-5 8 2z"/><path fill="#ba8406" d="M1544 451l-8-2 9-4 7 2zm-464 26l-9-2 10-5 8 3zm-61 43l-8-3 9-4 9 3z"/><path fill="#00baa8" d="M1666 466l-8-3 7-6 8 3zm-681 0l-7-2 10-4 7 2zm-2 6l-7-2 10-4 7 2zm665 43l-9-3 9-7 8 3z"/><path fill="#1eba36" d="M1031 461l-7-2 9-4 8 2zm-10 9l-8-2 10-4 7 1z"/><path fill="#00a8ba" d="M948 466l-7-3 10-3 7 2zm-7 3l-8-3 9-3 7 3zm6 2l-7-3 8-3 7 3zm-8 3l-7-3 9-3 7 3zm7 3l-8-3 9-3 7 2zm-8 3l-7-3 8-4 8 3zm6 2l-7-3 9-3 7 3zm-7 3l-8-3 9-3 7 3zm-2 6l-7-3 9-3 7 2z"/><path fill="#ba7266" d="M1197 445l-9-2 10-5 9 2zm1 5l-9-2 8-4 9 3zm-7 9l-9-2 8-4 9 3zm8 3l-9-3 8-4 9 3zm1 6l-10-3 9-4 9 3zm8 3l-9-3 8-4 9 3zm8 3l-9-4 8-4 10 3zm9 2l-10-3 9-4 9 3zm9 3l-10-3 8-4 10 3zm10 10l-10-3 8-5 10 3zm20 13l-11-4 9-5 10 4zm6 1l-7-2 8-5 7 2zm-2 7l-7-2 9-5 7 2z"/><path fill="#aeba06" d="M1577 456l-7-2 8-5 7 3zm-510 7l-8-2 10-4 7 1zm-10 9l-8-2 10-4 8 2zm-19 13l-8-2 10-4 8 2zm-9 9l-8-2 8-4 9 3z"/><path fill="#ba3606" d="M1516 449l-7-3 9-3 7 2zm-395 8l-9-2 9-4 9 2zm414 4l-8-3 9-4 7 3zm-416 14l-8-2 9-5 9 3zm8 9l-9-2 9-5 9 3zm8 10l-9-3 9-5 9 4zm8 3l-9-3 9-5 10 3zm9 3l-10-3 10-5 9 3zm25 2l-9-3 9-5 10 3zm-17 1l-9-3 9-5 10 3zm9 3l-10-3 10-5 9 3zm9 3l-10-3 9-5 10 3zm9 3l-10-3 9-5 10 4zm9 3l-10-3 9-5 10 4z"/><path fill="#ba9c9c" d="M1347 442l-10-3 9-3 9 2zm9 2l-10-2 8-4 10 3zm9 3l-10-3 8-4 10 3zm51 2l-11-2 8-5 11 3zm-42 0l-11-2 9-4 10 2zm25 2l-10-3 8-4 10 2zm26 1l-10-3 8-4 10 2zm-42 0l-11-3 9-4 10 3zm26 1l-11-3 8-4 11 3zm26 1l-11-3 8-4 10 3zm-43 0l-10-3 8-3 10 2zm26 2l-11-3 9-5 10 3zm23 0l-7-2 8-4 7 1zm-40 0l-10-2 8-4 10 3zm46 2l-7-2 8-5 7 2zm-20 0l-10-3 8-4 10 3zm-155 1l-10-3 10-5 9 3zm135-1l-7-2 9-4 7 2zm47 1l-8-2 8-4 7 2zm-20 1l-7-2 8-5 7 2zm-154 1l-9-2 9-6 10 3zm160 1l-7-2 8-5 7 2zm7 2l-8-3 8-4 8 2zm6 1l-7-2 8-4 7 2zm-13 2l-8-2 8-4 8 2zm6 2l-7-2 8-4 7 2zm-157 2l-10-3 10-5 10 3zm164 0l-8-2 8-4 8 2zm-155 3l-10-3 10-6 10 3zm161-1l-7-2 8-4 7 2zm-152 3l-10-3 10-5 10 3zm3 7l-11-3 8-4 11 2zm9 3l-10-3 8-5 10 3zm6 1l-7-2 8-4 7 2zm0 7l-7-3 8-4 7 2zm6 1l-7-2 8-4 7 2zm7 2l-8-2 8-4 8 2zm6 2l-7-2 8-5 7 3zm0 7l-7-2 7-5 8 2z"/><path fill="#4eba24" d="M1611 461l-7-2 7-5 8 3zm-573 1l-8-2 10-4 7 2z"/><path fill="#ba5a42" d="M1489 446l-7-2 9-3 7 2zm6 2l-7-2 9-3 7 1zm-267 49l-10-3 9-5 10 3z"/><path fill="#ba5a48" d="M1182 446l-9-2 9-3 8 2zm-7 3l-9-2 8-3 9 2zm-8 3l-9-2 9-3 8 2zm72 56l-11-4 9-5 10 4z"/><path fill="#ba9606" d="M1550 454l-7-3 8-4 8 2z"/><path fill="#c09090" d="M1222 445l-9-3 10-5 9 2zm244 38l-8-3 8-5 8 3zm-38 24l-8-3 9-6 8 3z"/><path fill="#a2ba06" d="M1068 457l-7-1 9-4 7 1zm516 2l-7-3 8-4 7 2zm-525 7l-8-2 9-4 8 2zm-37 26l-8-2 8-4 8 3zm-8 3l-8-2 9-4 8 3zm-8 3l-8-2 9-4 8 3zm-8 3l-8-2 9-4 8 3z"/><path fill="#ba4e30" d="M1167 447l-9-2 9-3 8 2zm-8 3l-8-2 8-3 9 2zm-7 4l-9-3 9-3 8 2zm-8 15l-9-2 9-5 8 3zm87 43l-11-3 9-5 11 3z"/><path fill="#00baba" d="M970 467l-7-2 10-4 7 3zm-12 20l-8-3 9-3 7 2zm-8 3l-8-3 9-3 8 2z"/><path fill="#06c078" d="M1645 466l-7-2 7-6 8 3zm-13 27l-8-3 8-6 8 3zm-5 21l-8-3 6-5 9 3zm-1 50l-9-3 7-7 9 3zm-23 1l-10-3 8-7 9 3zm32 2l-10-3 7-7 10 2zm8 2l-9-3 7-7 9 3zm-38 5l-10-4 8-6 9 3zm2 9l-10-3 7-7 10 3zm-7 6l-10-3 8-7 9 3zm9 3l-10-3 7-7 10 3z"/><path fill="#ba4206" d="M1523 450l-8-2 9-3 7 2zm-410 11l-9-2 9-4 9 2zm-1 6l-8-2 9-5 8 2zm0 6l-9-2 9-5 9 2zm-1 6l-9-2 10-5 8 3zm7 16l-9-3 10-4 9 3zm8 10l-10-3 10-5 10 4zm17 7l-10-4 10-5 10 4zm9 3l-10-4 10-5 9 4zm8 3l-9-4 9-5 10 4z"/><path fill="#84ba0c" d="M1053 460l-8-2 10-4 7 2z"/><path fill="#00aeba" d="M955 468l-8-2 10-4 8 3zm-2 6l-7-3 9-3 7 3zm7 2l-7-3 8-3 8 3zm-8 3l-7-3 9-3 7 3zm-1 5l-7-2 8-3 8 2zm-8 4l-7-3 9-3 7 2z"/><path fill="#36c030" d="M1618 464l-7-3 7-5 8 3zm0 7l-8-3 8-5 8 3z"/><path fill="#0cba42" d="M1023 464l-8-1 10-4 7 1z"/><path fill="#ba7e72" d="M1205 447l-9-2 10-5 9 2zm9 8l-9-3 8-3 9 2zm9 8l-9-2 8-4 9 2zm37 24l-10-3 9-4 10 3z"/><path fill="#06ba72" d="M1007 467l-7-3 10-3 7 1zm-10 9l-8-2 10-4 7 1zm-10 8l-8-2 9-3 7 2zm646 42l-8-2 8-7 9 3z"/><path fill="#06c08a" d="M1652 469l-7-3 7-6 8 3zm-13 19l-8-4 8-6 8 3zm-4 29l-9-3 7-5 8 3z"/><path fill="#96c006" d="M1591 461l-8-3 8-4 8 2zm-8 36l-8-4 7-5 8 4zm-6 5l-8-4 7-6 8 4z"/><path fill="#ba4806" d="M1529 452l-7-2 9-3 7 2zm12 11l-7-2 9-4 7 2zm-431 23l-8-3 9-4 9 2zm0 7l-9-3 10-5 8 3zm-1 7l-9-4 10-4 9 3zm8 2l-9-3 10-4 9 3zm17 6l-9-3 10-5 9 4zm-17 2l-9-4 10-4 9 3zm17 6l-10-4 10-4 10 3zm9 3l-10-3 10-5 10 3z"/><path fill="#ba6606" d="M1106 454l-8-2 9-4 8 2zm-10 15l-8-2 9-4 9 2zm-11 23l-9-3 10-5 9 3zm-9 17l-9-3 8-4 9 3zm0 6l-9-3 8-4 10 3zm8 3l-9-3 9-4 9 3z"/><path fill="#06ba96" d="M992 468l-7-2 9-4 8 2zm657 55l-9-3 8-6 9 2z"/><path fill="#ba665a" d="M1190 448l-9-2 8-4 9 3z"/><path fill="#c0aeae" d="M1272 445l-9-3 9-5 9 3zm8 2l-9-3 9-5 10 3zm9 2l-10-2 10-5 9 2zm8 3l-9-3 9-5 10 3zm126 36l-8-2 9-6 8 3zm-43 2l-8-3 10-5 7 2zm50 1l-8-3 9-5 7 2zm-22 0l-7-2 8-6 8 3zm-22 1l-7-2 9-6 8 2zm29 2l-8-3 9-6 8 3zm-22 0l-7-2 9-6 7 2z"/><path fill="#18c042" d="M1625 466l-8-2 8-5 7 2zm-7 21l-8-3 8-6 8 3z"/><path fill="#00bab4" d="M977 470l-8-3 10-4 7 3zm-3 6l-7-3 10-4 7 3zm-8 8l-8-3 9-3 7 3zm690 33l-9-3 8-7 9 3z"/><path fill="#baa806" d="M1563 458l-7-2 8-5 8 3zm6 9l-7-3 8-4 8 2zm-496 3l-8-2 9-5 9 2zm-18 13l-9-2 10-5 8 2zm-11 10l-8-2 10-5 8 2z"/><path fill="#b4ba06" d="M1075 459l-7-2 9-4 8 2zm-9 9l-8-2 9-4 8 2zm-19 13l-8-2 10-4 8 2zm-10 10l-9-2 11-5 8 2zm-16 6l-8-2 9-4 8 3zm-8 3l-8-2 9-4 8 3zm-8 4l-8-3 9-3 8 2zm-8 3l-8-3 9-3 8 2zm-8 3l-8-2 9-4 8 3zm-9 4l-8-3 10-4 8 3zm-9 3l-8-3 10-3 8 2zm-8 4l-9-3 10-4 9 3zm-10 4l-8-3 10-4 9 2z"/><path fill="#b4543c" d="M1502 450l-8-2 10-4 7 2z"/><path fill="#00b4ba" d="M961 471l-7-3 10-4 7 3zm7 2l-8-2 10-4 8 2zm-1 6l-8-3 9-3 7 2zm-8 3l-7-3 8-3 8 2zm-17 11l-8-3 9-3 8 3zm722 26l-9-2 8-7 8 3z"/><path fill="#84c00c" d="M1598 463l-8-2 8-5 7 3z"/><path fill="#00c0a2" d="M1659 471l-7-3 7-5 8 2zm-11 35l-9-3 8-6 8 2z"/><path fill="#72b40c" d="M1045 463l-8-1 9-4 8 1z"/><path fill="#ba5406" d="M1536 455l-8-3 9-3 7 2zm-431 10l-9-2 9-4 9 2zm-2 12l-8-2 9-5 9 3zm0 6l-9-2 9-4 9 2zm-3 21l-9-3 10-5 9 3zm0 7l-10-3 10-5 10 3zm8 3l-9-3 10-5 9 3zm8 3l-9-3 10-5 9 3z"/><path fill="#ba847e" d="M1213 449l-9-2 10-5 9 2zm26 13l-10-2 8-4 10 2zm8 3l-9-3 8-4 9 3zm2 6l-10-3 8-4 10 3zm8 3l-10-3 9-4 9 2zm11 9l-10-3 8-4 10 2zm11 10l-11-3 9-5 10 3zm11 10l-10-3 8-5 11 3zm5 8l-7-2 9-5 7 2z"/><path fill="#36ba2a" d="M1029 466l-7-2 9-4 8 2z"/><path fill="#06c054" d="M1632 469l-8-3 8-5 7 3zm-14 35l-8-3 8-6 8 3z"/><path fill="#bab406" d="M1570 460l-7-2 8-5 7 3zm-514 17l-8-2 10-4 8 2zm-10 10l-9-2 10-5 9 2zm-85 40l-8-3 10-4 8 3z"/><path fill="#06ba54" d="M1014 468l-7-2 9-4 8 2zm-11 10l-7-2 10-5 7 2zm605 43l-8-3 6-5 9 2z"/><path fill="#ba4e36" d="M1508 452l-7-3 9-3 7 2zm-364 5l-9-2 9-4 8 2zm76 45l-10-3 9-5 10 3z"/><path fill="#06ba7e" d="M999 470l-8-2 10-4 7 2z"/><path fill="#ba4e06" d="M1113 456l-8-2 9-4 8 1zm-9 15l-9-2 10-5 8 2zm-2 19l-9-3 10-4 8 2zm-1 7l-9-3 10-5 9 3zm8 10l-10-3 10-5 10 3zm16 6l-9-4 10-4 9 3z"/><path fill="#ba9c96" d="M1390 448l-10-2 8-5 10 3zm52 2l-11-2 8-5 10 3zm6 2l-7-2 7-4 7 2zm13 3l-8-2 8-4 7 2zm-1 6l-7-2 8-4 7 2zm0 6l-8-2 8-4 8 2zm-142 25l-7-2 8-5 7 2zm19 12l-7-2 8-5 7 2zm0 7l-8-3 8-5 8 2z"/><path fill="#78c012" d="M1604 466l-7-3 8-5 7 3z"/><path fill="#00c0ba" d="M1666 473l-7-2 7-6 7 2zm-5 13l-8-2 7-6 8 2zm-6 22l-8-2 8-7 8 3z"/><path fill="#ba7806" d="M1098 458l-8-2 9-4 8 2zm451 2l-7-3 8-4 8 2zm-461 13l-8-2 9-5 8 3zm-21 27l-9-3 11-4 8 2zm-31 20l-9-4 9-4 9 4z"/><path fill="#ba6006" d="M1542 457l-7-2 9-4 7 2zm6 9l-8-3 9-4 8 3zm-452 9l-9-2 9-5 9 2zm-1 6l-9-2 10-5 8 3zm-11 17l-9-3 10-4 9 3zm-1 7l-9-3 10-4 9 3zm1 7l-9-4 8-3 9 3zm8 3l-9-4 8-4 10 4z"/><path fill="#ba6654" d="M1182 451l-8-2 8-4 9 3zm-7 4l-9-3 8-3 9 2zm-8 3l-9-3 9-3 9 2zm-8 3l-8-3 8-3 9 3zm77 32l-10-3 9-5 10 3zm11 10l-11-3 9-5 10 3zm9 3l-11-3 9-5 11 3zm4 9l-7-3 9-5 7 2z"/><path fill="#06c06c" d="M1639 471l-8-2 7-6 8 3zm-23 82l-10-3 7-7 10 3zm16 5l-9-3 7-7 9 2zm-46 1l-9-3 7-6 10 3zm2 9l-10-3 8-7 9 3zm1 9l-9-3 8-7 9 3z"/><path fill="#baba06" d="M1577 463l-8-3 8-4 8 2z"/><path fill="#ba4224" d="M1515 454l-8-3 9-3 8 2zm-379 13l-9-2 9-5 9 2z"/><path fill="#c0a2a2" d="M1263 449l-9-2 10-6 9 3zm189 35l-8-3 8-5 8 3zm-23 15l-8-3 9-6 8 3zm-15 2l-8-2 9-6 8 2zm-43 1l-7-3 8-5 7 3zm28 2l-8-3 9-6 8 3zm-41 0l-8-3 8-5 8 3zm20 0l-7-3 7-5 8 3zm7 2l-8-2 8-6 8 3z"/><path fill="#ba8a84" d="M1221 452l-9-3 10-5 9 2zm8 2l-9-3 10-5 9 3zm27 13l-10-2 8-4 10 2zm10 9l-10-2 8-5 10 3zm11 10l-10-3 8-5 10 3zm21 12l-11-3 8-5 11 4zm5 9l-7-3 8-4 7 2z"/><path fill="#5ac01e" d="M1611 469l-7-4 7-4 8 2zm-8 21l-8-4 9-6 8 4z"/><path fill="#66b418" d="M1036 467l-7-1 9-5 8 2zm-10 9l-8-1 10-5 8 2zm-19 13l-7-2 8-3 8 1zm-7 3l-8-2 9-3 7 1z"/><path fill="#06c084" d="M1646 474l-8-3 7-5 8 2zm-13 36l-9-3 9-7 8 3z"/><path fill="#ba786c" d="M1206 453l-9-3 8-4 9 3zm300 4l-7-3 9-3 8 2zm-300 1l-9-2 9-4 9 2zm1 6l-9-2 8-4 9 2zm8 3l-9-3 9-4 9 3zm9 3l-10-3 9-4 9 3zm18 12l-9-3 8-5 10 3zm9 2l-10-3 9-4 10 3zm11 10l-10-3 8-5 10 3zm14 11l-7-2 8-5 8 2z"/><path fill="#aec006" d="M1584 465l-8-2 8-5 8 3zm-2 24l-8-4 8-6 8 4zm-12 9l-8-3 6-6 8 4zm-7 5l-8-4 7-5 8 4zm-33 26l-8-4 8-6 8 4z"/><path fill="#ba3c18" d="M1521 456l-7-3 9-3 7 2zm-386 18l-8-3 9-5 9 3zm78 40l-10-3 9-5 10 3z"/><path fill="#ba5a06" d="M1105 459l-8-1 9-5 8 2zm-11 28l-9-2 10-5 9 3zm-1 7l-9-3 10-4 9 3zm-1 7l-9-3 10-5 9 3zm-1 7l-9-3 10-5 9 3zm9 10l-9-4 9-4 9 4z"/><path fill="#ba6c60" d="M1190 454l-9-3 9-3 9 2zm-7 3l-9-3 8-3 9 2zm330 2l-7-2 9-4 7 2zm-330 4l-9-3 9-4 9 3zm9 9l-9-3 8-4 9 3zm8 3l-9-4 8-4 10 3zm9 2l-10-3 9-4 9 3zm8 3l-9-3 8-4 10 3zm9 3l-10-3 9-5 10 4zm9 3l-10-3 9-5 9 3zm19 13l-10-4 9-5 10 4zm8 9l-7-2 9-5 7 2z"/><path fill="#ba8a06" d="M1090 462l-8-2 9-4 8 1zm466 0l-8-3 9-4 7 3zm-486 25l-9-2 10-5 8 2zm-11 10l-8-2 10-5 8 3zm-15 7l-9-3 9-4 9 3zm-8 3l-9-3 9-3 9 2zm-8 3l-9-3 9-3 9 3zm-8 4l-9-3 9-4 9 3zm-8 3l-9-3 9-4 9 3z"/><path fill="#06c096" d="M1653 476l-8-2 7-6 8 2zm-13 36l-8-3 8-6 8 2z"/><path fill="#c0a8a8" d="M1272 452l-10-3 10-5 9 3zm172 36l-7-3 8-4 8 3zm-7 5l-8-3 8-5 8 3zm-66 2l-7-2 9-6 8 2zm51 1l-8-3 9-5 8 2zm-22 0l-8-2 10-6 7 3zm-22 1l-7-2 9-6 7 2zm29 2l-8-3 9-6 8 3zm-22 0l-8-2 10-6 7 2zm-20 0l-8-2 8-5 7 2zm27 3l-8-3 9-6 8 3z"/><path fill="#9cc006" d="M1590 468l-7-3 8-5 7 3zm-1 15l-8-3 9-6 8 4z"/><path fill="#ba6048" d="M1159 456l-8-3 8-3 9 2zm-7 3l-9-2 9-4 8 2zm368 3l-8-3 9-4 8 3zm-283 38l-10-3 9-5 10 3z"/><path fill="#ba300c" d="M1528 458l-7-2 8-4 8 2zm-400 13l-9-2 9-5 9 2zm7 9l-9-3 10-4 8 2z"/><path fill="#84b40c" d="M1043 468l-8-1 10-4 8 1z"/><path fill="#12c042" d="M1625 474l-8-3 8-5 8 2z"/><path fill="#4eb41e" d="M1028 471l-8-1 10-5 7 2z"/><path fill="#12ba48" d="M1012 474l-7-2 9-5 8 2z"/><path fill="#c09c9c" d="M1255 454l-10-3 10-5 9 3zm8 2l-9-2 9-6 10 3zm196 24l-8-3 8-5 8 3zm-8 11l-8-3 9-5 7 3zm-7 5l-8-3 8-6 8 3zm-23 8l-8-3 9-6 8 3zm-15 3l-8-3 9-6 8 3zm-41-1l-8-2 8-5 7 2zm6 2l-7-2 7-5 8 2zm21 1l-8-3 8-5 8 3zm-34 2l-8-3 8-5 7 3zm41 0l-8-2 8-6 8 3z"/><path fill="#ba3012" d="M1128 459l-8-2 9-4 8 1z"/><path fill="#ba7e78" d="M1500 455l-7-3 9-3 7 2zm-278 2l-9-2 8-4 9 2zm9 9l-9-3 8-4 10 3zm9 3l-10-3 9-4 9 2zm10 9l-10-3 8-5 10 3zm9 2l-10-3 8-4 10 3zm10 10l-10-3 9-5 10 3zm12 10l-11-3 9-5 10 3zm8 9l-7-2 8-5 7 2z"/><path fill="#00c0b4" d="M1660 479l-8-3 7-6 8 3z"/><path fill="#ba726c" d="M1198 456l-9-3 9-3 9 2zm55 35l-10-3 8-4 10 3z"/><path fill="#90c006" d="M1597 470l-7-3 8-4 7 2zm0 8l-8-3 8-6 8 4zm-8 14l-8-4 8-6 8 4zm-18 15l-9-4 7-6 9 4z"/><path fill="#ba6c06" d="M1097 463l-8-1 9-5 8 2zm-11 22l-8-2 9-5 9 3zm-10 11l-9-3 10-5 9 3zm-1 7l-9-3 10-5 9 3zm-7 9l-9-3 8-4 9 3zm-8 4l-9-4 9-4 9 4zm8 3l-9-4 9-4 9 4z"/><path fill="#00baa2" d="M981 478l-8-3 10-4 8 3zm684 49l-9-2 8-7 9 3z"/><path fill="#06c05a" d="M1632 477l-8-3 8-6 8 3zm-7 13l-8-3 8-6 8 3zm-11 26l-9-3 7-5 8 3zm28 21l-9-3 8-6 9 2zm8 2l-9-2 8-7 10 2zm-52 0l-9-3 7-6 9 3zm41 12l-10-2 7-7 9 2zm-69 3l-9-3 7-6 9 3zm1 8l-9-3 8-6 9 3z"/><path fill="#ba8a8a" d="M1237 456l-9-2 10-6 9 3zm28 14l-10-3 8-4 10 3zm10 9l-10-3 8-4 10 2zm11 10l-10-4 8-4 10 3zm9 2l-10-3 8-4 11 3zm9 9l-7-2 8-5 7 2zm5 9l-7-3 8-5 8 3z"/><path fill="#00bac0" d="M1667 481l-8-3 7-6 8 3zm-6 13l-8-2 8-7 8 3zm1 8l-8-2 7-7 9 3z"/><path fill="#7ec012" d="M1604 473l-8-3 8-5 8 3z"/><path fill="#9cba06" d="M1050 470l-8-2 10-4 8 2z"/><path fill="#78b412" d="M1035 472l-8-1 10-4 7 1z"/><path fill="#06c072" d="M1639 479l-8-3 8-5 8 2zm-14 28l-8-3 8-6 8 2zm-31 55l-9-3 8-6 9 3zm2 9l-9-3 7-7 10 3zm2 9l-10-3 8-7 9 3zm-7 6l-10-3 8-7 10 3z"/><path fill="#36b42a" d="M1019 475l-8-2 10-4 8 2zm-19 12l-7-1 8-4 8 2zm-7 3l-8-1 9-4 7 2zm-8 3l-8-1 9-4 8 2zm-8 3l-8-1 9-4 8 2z"/><path fill="#ba482a" d="M1136 461l-9-2 9-5 9 2zm390 4l-7-3 9-4 7 2zm-305 44l-10-3 9-5 10 3z"/><path fill="#c0ba06" d="M1576 470l-8-3 9-5 7 3zm-1 7l-7-3 8-5 8 3zm0 8l-8-3 8-6 8 4zm-6 5l-8-3 7-6 7 4z"/><path fill="#ba3006" d="M1120 463l-8-2 9-4 8 1zm0 6l-9-2 9-5 9 2zm7 9l-9-3 10-5 8 3zm16 12l-9-3 9-5 10 3zm26 9l-10-3 9-5 10 3z"/><path fill="#5ac024" d="M1611 476l-8-3 8-5 8 3z"/><path fill="#06ba84" d="M988 480l-8-2 10-5 8 2z"/><path fill="#00baae" d="M973 481l-7-3 8-3 8 3z"/><path fill="#c0908a" d="M1246 459l-10-3 10-5 10 2zm254 2l-7-2 7-5 7 3zm-57 44l-8-4 9-6 7 3zm-23 8l-8-4 9-6 8 3z"/><path fill="#ba7e06" d="M1089 467l-8-2 9-4 8 2zm-11 16l-8-2 10-5 8 2zm-10 10l-8-2 10-5 8 3zm-8 10l-9-3 8-3 9 2zm-8 3l-9-2 9-4 8 3zm-8 4l-9-3 9-4 9 3zm-8 3l-9-3 9-4 9 3zm-8 3l-9-3 9-3 9 3z"/><path fill="#06c090" d="M1646 482l-8-3 8-6 8 3zm-6 22l-8-3 8-7 8 3z"/><path fill="#ba6c5a" d="M1175 460l-9-2 9-4 9 2zm-8 4l-9-3 9-4 9 3zm8 2l-9-3 9-3 9 2zm9 3l-10-3 9-4 9 3zm61 27l-10-3 9-5 10 3z"/><path fill="#b4c006" d="M1583 472l-8-3 9-5 7 3zm-1 8l-7-3 8-5 8 3z"/><path fill="#ba8478" d="M1230 460l-9-3 8-4 9 3z"/><path fill="#30c036" d="M1618 479l-8-3 8-6 8 3zm-7 14l-8-3 8-7 8 4zm-18 23l-9-4 7-5 9 3z"/><path fill="#c09696" d="M1493 459l-7-3 7-4 8 2zm-6 4l-8-3 8-4 7 2zm-7 4l-7-2 7-5 8 3zm-14 9l-7-3 8-5 7 3zm-7 11l-8-3 8-5 8 3zm-23 15l-8-4 9-5 7 3zm-23 8l-8-4 9-6 8 4z"/><path fill="#c07806" d="M1555 469l-8-3 9-5 7 3zm-27 27l-8-4 8-6 8 4zm-13 9l-8-4 7-5 8 4zm-7 5l-8-4 8-5 8 3zm-7 5l-8-4 8-6 8 4zm-457 8l-9-4 9-4 9 4zm-9 3l-9-3 10-4 9 3zm9 4l-10-4 10-4 9 4zm-17 0l-9-3 9-5 9 4zm8 4l-9-4 9-4 10 3zm-17 0l-9-4 10-4 9 4zm25 3l-9-4 10-4 9 4zm-17 1l-9-4 10-5 9 4zm-17 0l-9-4 10-4 9 4zm25 3l-9-4 10-4 9 4zm-17 1l-9-4 10-5 9 4zm-17 0l-9-4 10-4 9 3zm25 3l-9-4 10-4 9 4zm-17 1l-9-5 10-4 9 4zm8 3l-9-4 10-4 10 4z"/><path fill="#ba543c" d="M1144 463l-9-2 9-5 8 2zm85 42l-10-3 9-6 10 4z"/><path fill="#ba7872" d="M1215 461l-10-3 9-4 9 3zm17 11l-9-3 8-4 10 3zm9 3l-10-3 9-4 9 3zm30 22l-10-3 8-5 11 3zm11 10l-7-2 9-5 7 2z"/><path fill="#00c0a8" d="M1653 484l-8-2 8-7 8 3z"/><path fill="#ba3612" d="M1128 465l-9-2 9-5 9 2zm405 2l-7-3 9-4 7 3z"/><path fill="#a2c006" d="M1590 475l-8-3 8-5 8 3z"/><path fill="#06ba66" d="M994 482l-7-2 10-5 7 2zm630 44l-9-3 6-5 9 2z"/><path fill="#12c04e" d="M1625 482l-8-3 8-6 8 3zm-7 14l-8-4 8-6 8 3zm27 49l-10-2 7-7 9 2z"/><path fill="#ba908a" d="M1254 461l-9-2 10-6 9 3zm19 11l-10-2 8-5 10 3zm11 10l-10-3 8-5 10 3zm26 20l-7-2 8-5 7 2z"/><path fill="#c09006" d="M1562 472l-8-3 9-5 7 3zm-568 52l-9-3 10-4 9 3zm-9 4l-9-3 11-4 8 3zm-9 4l-9-3 11-4 8 3z"/><path fill="#ba9006" d="M1081 471l-9-2 10-4 8 2zm-10 10l-8-2 9-5 9 2zm-10 10l-9-2 10-5 9 2zm-9 10l-9-3 9-4 8 3zm-49 20l-9-3 10-4 9 3z"/><path fill="#a8ba06" d="M1049 475l-8-1 9-5 8 2zm-20 14l-8-2 10-5 8 3zm-39 16l-8-3 9-4 8 3zm-8 3l-8-3 9-3 8 2zm-9 3l-8-2 10-4 8 2zm-9 4l-8-3 10-4 8 3zm-9 3l-8-2 10-4 8 2zm-9 4l-8-3 10-4 8 3z"/><path fill="#06c066" d="M1632 485l-8-3 8-6 8 3zm-7 14l-8-4 8-6 8 3zm-5 12l-9-2 7-6 8 3zm2 8l-9-3 7-5 8 2zm-15 31l-9-3 7-6 9 2zm34 10l-10-3 7-7 10 3zm-60 14l-9-3 7-7 10 3zm1 9l-9-3 8-7 9 3z"/><path fill="#c06048" d="M1152 465l-9-2 9-5 8 3zm368 4l-7-3 7-5 7 3zm-41 27l-7-4 8-4 7 3zm-220 26l-7-3 9-5 7 2zm6 2l-7-3 9-5 7 2z"/><path fill="#c08478" d="M1507 464l-8-3 8-5 7 3z"/><path fill="#c0a806" d="M1568 474l-7-3 8-5 8 3zm0 8l-8-3 9-5 7 3zm-13 10l-8-4 7-5 8 3z"/><path fill="#54b41e" d="M1017 480l-8-1 10-5 8 2z"/><path fill="#00b4c0" d="M1668 488l-8-2 7-6 8 2zm-5 23l-9-3 8-7 9 3z"/><path fill="#72c012" d="M1604 481l-8-3 8-6 8 4z"/><path fill="#ba9090" d="M1263 464l-10-3 10-5 10 2zm19 11l-10-3 8-4 10 3zm11 9l-10-3 8-4 10 3zm12 10l-11-3 8-5 11 3zm12 10l-7-2 8-5 7 2zm6 2l-7-2 8-5 8 2zm7 2l-7-2 8-5 7 2z"/><path fill="#ba7260" d="M1191 465l-9-2 9-4 9 2z"/><path fill="#c03606" d="M1540 470l-8-3 9-4 8 3zm-19 14l-8-3 7-6 8 4zm-21 14l-7-3 7-6 8 4zm-7 5l-7-4 7-5 8 4zm-307 2l-10-4 10-5 9 4zm9 3l-10-3 9-5 10 3zm10 11l-10-4 9-5 10 4zm-9 4l-10-3 10-5 10 3zm6 2l-7-2 10-5 7 2zm7 2l-7-2 9-5 7 2zm-15 3l-7-3 9-5 7 3zm6 2l-7-2 10-6 7 3zm6 2l-7-2 10-5 7 2zm7 3l-7-3 9-5 7 2zm6 2l-7-3 10-5 7 3zm7 2l-8-2 10-6 7 3zm-71 32l-8-3 9-4 8 3zm-16 2l-7-3 10-5 7 3zm22 1l-7-3 9-5 7 3zm-15 2l-7-3 9-5 8 3zm22 1l-8-4 10-4 7 3zm-37 1l-8-3 10-5 8 2zm22 0l-8-3 10-5 7 3zm-16 2l-7-3 10-5 7 3zm24 0l-7-3 7-4 8 3zm-39 2l-7-3 9-5 8 3zm22 1l-8-3 10-5 8 3zm10 1l-7-3 8-4 7 3zm-26 1l-7-3 10-5 7 3zm-15 2l-8-3 11-5 7 3zm22 1l-7-3 10-6 7 4zm12 0l-7-3 8-5 7 4zm-28 2l-7-3 10-6 7 3zm21 2l-7-4 8-4 7 4zm-14 1l-7-4 10-5 7 3zm7 3l-8-4 8-4 8 3z"/><path fill="#c07266" d="M1513 466l-7-3 7-5 8 3z"/><path fill="#48c024" d="M1611 484l-8-3 8-6 8 3z"/><path fill="#ba604e" d="M1160 468l-9-3 8-4 9 2zm88 43l-10-4 8-5 11 4z"/><path fill="#c08a8a" d="M1493 466l-7-3 7-5 8 3zm-28 23l-7-3 8-4 8 3z"/><path fill="#c04e06" d="M1547 473l-8-3 9-5 8 3zm-19 14l-8-3 7-5 8 3zm-403 33l-10-3 10-5 10 3zm9 4l-10-4 10-5 10 4zm-8 3l-10-3 9-5 10 4zm9 4l-10-4 9-4 10 3zm9 3l-10-4 9-4 10 4zm-8 4l-10-4 9-4 10 4zm10 3l-11-3 9-5 10 4zm-8 4l-11-3 9-5 10 4zm9 4l-10-4 8-4 11 3zm-8 4l-10-4 9-5 10 4zm-8 4l-10-4 9-5 10 4zm-8 4l-11-4 10-4 10 3zm91 0l-7-3 8-4 7 3zm-100 4l-10-4 9-4 11 4zm99 3l-7-3 8-5 8 4zm-108 2l-10-4 10-5 10 4zm-9 4l-10-4 10-5 10 4zm116 1l-7-3 8-5 8 4zm-125 4l-10-4 10-5 10 4zm118 0l-8-3 9-5 7 4zm-1 8l-8-4 9-4 7 3z"/><path fill="#00c09c" d="M1647 490l-9-3 8-6 8 2zm0 8l-8-3 8-6 8 2z"/><path fill="#7eb40c" d="M1024 482l-8-2 10-4 8 1z"/><path fill="#ba9690" d="M1272 466l-10-3 10-5 9 3zm31 21l-11-3 8-4 11 2zm8 9l-7-2 8-5 7 2zm5 15l-7-3 8-5 7 3z"/><path fill="#42b424" d="M1008 484l-8-1 10-5 8 2z"/><path fill="#c07e78" d="M1500 468l-7-3 7-4 8 2z"/><path fill="#c06c06" d="M1554 476l-8-3 9-5 7 3zm-13 10l-8-4 8-5 7 3zm-465 36l-9-4 9-4 9 4zm-8 4l-9-4 9-4 9 4zm9 3l-10-4 9-4 10 4zm-8 4l-10-4 9-4 10 4zm8 3l-9-4 9-4 9 4zm-8 4l-10-4 10-4 9 4zm9 4l-10-4 9-5 10 4zm-9 4l-10-4 10-5 10 4zm9 3l-10-4 10-4 9 4zm-18 1l-10-4 10-5 10 4zm9 3l-10-4 10-4 10 4zm-18 1l-10-4 10-5 10 4zm9 4l-10-4 10-5 10 4zm-18 0l-10-4 10-5 10 4zm9 4l-10-4 10-5 10 4z"/><path fill="#bab4b4" d="M1342 464l-10-2 9-6 10 3zm27 1l-11-3 9-4 11 3zm-18 2l-10-3 9-5 10 3zm27 0l-10-3 8-4 11 3zm-17 2l-11-2 9-6 11 3zm23 0l-7-2 9-4 7 2zm7 2l-7-2 8-4 8 2zm-38 3l-11-3 9-5 11 3zm44-2l-7-2 9-4 7 2zm-35 5l-11-3 10-5 10 2zm49 0l-8-3 9-4 7 2zm-43 2l-7-2 9-6 7 2zm49 0l-7-3 8-4 8 2zm-42 2l-7-2 9-6 7 2zm6 2l-7-3 9-5 7 2z"/><path fill="#00c0ae" d="M1654 492l-8-3 7-6 8 3zm1 8l-9-3 8-6 8 2z"/><path fill="#c0482a" d="M1527 472l-8-3 7-5 8 3zm-359 12l-9-3 9-5 9 4zm9 3l-10-3 9-5 10 3zm8 3l-9-3 8-5 10 3zm9 3l-10-3 9-5 10 3zm8 3l-9-3 9-5 9 3zm36 26l-7-2 9-5 7 2z"/><path fill="#c0664e" d="M1168 470l-9-3 8-4 9 3zm8 3l-9-3 8-4 10 3zm8 3l-9-3 9-5 9 3zm8 3l-9-3 9-5 9 3zm265 32l-8-3 9-7 7 4z"/><path fill="#ba5436" d="M1152 472l-9-3 9-4 8 2zm88 43l-11-3 9-5 11 3z"/><path fill="#c07260" d="M1507 471l-8-3 8-5 7 3zm-27 17l-8-3 8-5 7 4zm-193 35l-8-2 9-6 7 3z"/><path fill="#c08a06" d="M1561 479l-8-3 9-5 7 3zm-13 10l-8-4 7-5 8 3z"/><path fill="#c03006" d="M1534 475l-8-4 7-5 8 4zm-7 4l-7-3 7-5 8 3zm-392 8l-9-3 9-5 9 3zm17 6l-10-3 10-5 9 3zm8 3l-9-3 9-5 9 3z"/><path fill="#84c012" d="M1596 487l-8-4 9-6 8 4z"/><path fill="#6cb418" d="M1015 486l-8-2 10-4 8 1zm-23 9l-8-2 9-3 8 1zm-8 3l-8-2 9-3 8 1zm-8 3l-8-2 9-3 8 1zm-9 3l-7-2 9-3 8 1zm-8 3l-8-1 10-4 7 2zm-9 4l-8-2 10-4 8 2zm-9 3l-8-2 10-3 8 1z"/><path fill="#c08a84" d="M1487 470l-8-3 8-5 7 3zm-14 8l-8-3 8-4 8 3zm-171 35l-7-2 8-5 7 2z"/><path fill="#c05a42" d="M1514 474l-8-3 7-5 8 3zm-312 15l-10-4 9-4 10 3zm8 3l-9-4 8-4 10 3zm9 3l-10-4 9-5 10 4zm34 25l-8-3 9-5 7 2z"/><path fill="#ba7206" d="M1087 479l-8-2 9-5 9 3zm-10 10l-8-2 10-5 8 3zm-10 17l-8-3 8-4 9 3zm-7 3l-9-3 9-4 8 3zm-8 4l-9-4 9-3 9 3zm-8 3l-9-3 9-4 9 3zm8 3l-9-3 9-4 9 3z"/><path fill="#c04206" d="M1541 478l-8-4 7-5 8 4zm-389 44l-10-3 10-5 10 3zm9 4l-10-4 9-5 10 4zm9 3l-10-4 9-5 11 4zm6 11l-7-3 10-5 7 2zm6 2l-7-3 10-5 7 2zm7 2l-7-2 10-6 7 3zm6 3l-7-3 10-6 7 3zm7 2l-8-2 10-6 8 3zm6 3l-7-3 10-6 7 3zm-34 0l-8-3 9-4 7 3zm-15 1l-7-2 9-5 7 3zm21 1l-7-2 8-5 8 3zm-14 2l-7-3 8-4 7 2zm20 1l-7-3 9-4 7 3zm-35 0l-7-2 9-5 7 3zm21 1l-7-2 9-5 7 3zm21 2l-7-3 8-5 8 3zm-35 0l-7-3 9-4 7 2zm21 1l-8-3 9-4 7 2zm-36 0l-7-2 9-5 7 3zm57 1l-8-3 9-4 7 3zm-65 4l-7-3 9-5 7 3zm57 0l-7-3 8-4 8 3zm-65 4l-8-3 10-4 7 2zm64 3l-8-3 9-4 8 3zm-73 1l-7-2 9-5 8 2zm-9 5l-7-3 10-5 7 3zm81 2l-8-4 9-4 8 3zm-90 3l-7-3 10-5 7 3zm89 4l-8-4 9-4 8 3z"/><path fill="#00aec0" d="M1669 497l-8-3 7-6 8 3z"/><path fill="#c07e72" d="M1493 473l-7-3 7-5 8 3zm-199 45l-7-2 9-5 7 2z"/><path fill="#c0543c" d="M1160 475l-9-3 8-5 10 3zm8 2l-9-3 9-4 9 3zm339 1l-8-3 8-5 7 3zm-331 2l-9-3 9-5 9 3zm9 3l-10-3 9-5 9 3zm8 3l-9-3 8-5 10 3z"/><path fill="#ba421e" d="M1143 476l-8-3 9-4 9 2zm69 30l-10-3 9-5 10 3zm10 11l-10-3 9-6 11 4z"/><path fill="#c0421e" d="M1521 476l-8-3 7-5 8 3zm-57 39l-8-4 9-6 8 4zm-228 14l-7-2 9-6 7 3zm7 2l-8-2 10-5 7 2z"/><path fill="#c09690" d="M1473 472l-7-3 7-5 8 3zm-15 22l-8-3 9-5 7 3zm-8 5l-7-3 8-6 8 3zm-127 14l-8-2 9-6 7 3zm6 2l-7-2 8-5 8 2z"/><path fill="#c06006" d="M1548 481l-8-4 7-5 7 4zm-455 40l-10-3 9-4 9 3zm0 7l-9-3 8-4 10 3zm1 8l-10-4 9-4 10 3zm9 3l-10-4 9-4 10 4zm0 8l-9-4 9-5 10 4zm1 7l-10-4 9-4 10 4zm-8 4l-10-4 9-4 10 4zm-9 5l-10-4 10-5 10 4zm-9 4l-10-4 10-5 10 4zm157 3l-8-3 8-5 8 4zm-166 1l-10-4 10-5 10 5zm165 6l-8-3 9-5 7 4z"/><path fill="#c06c5a" d="M1500 475l-7-3 7-5 8 3zm-233 42l-7-2 8-6 8 3zm6 2l-7-2 9-6 7 3zm7 2l-7-2 8-6 8 3z"/><path fill="#c08484" d="M1480 475l-8-3 8-5 8 3z"/><path fill="#c08406" d="M1555 484l-8-3 7-6 7 4zm-544 40l-9-4 10-4 8 4zm-9 3l-9-3 10-4 9 3zm-9 4l-9-3 10-4 9 3zm-9 4l-9-3 10-5 9 4z"/><path fill="#c04224" d="M1152 479l-9-3 9-5 9 3z"/><path fill="#c04806" d="M1534 483l-7-4 7-5 7 3zm-391 44l-10-4 10-5 10 4zm9 3l-10-3 10-6 10 4zm9 4l-10-4 10-5 10 3zm9 3l-10-4 10-5 10 4zm-17 1l-10-4 9-5 10 4zm9 3l-10-4 9-4 10 4zm7 2l-7-2 8-5 7 3zm-14 2l-11-4 9-4 10 4zm20 1l-7-3 8-4 7 2zm-14 1l-7-2 8-5 7 3zm20 1l-7-3 9-4 7 3zm-14 2l-7-3 9-4 7 2zm21 1l-8-3 9-4 7 2zm-35 0l-7-2 9-5 7 3zm41 2l-7-3 8-4 8 3zm-49 2l-7-2 9-5 7 3zm56 1l-8-3 9-4 7 2zm6 2l-7-3 8-4 8 3zm-70 1l-7-2 9-5 7 3zm-8 4l-7-2 9-5 7 3zm77 2l-7-3 8-4 8 3zm-86 3l-7-3 10-5 7 3zm79 1l-8-3 9-4 7 3zm7 3l-8-3 9-5 7 4zm-95 0l-7-3 10-4 7 2zm87 4l-8-3 9-5 7 4zm-95 1l-8-3 10-5 7 3zm-10 4l-7-2 11-6 7 3zm104 3l-8-4 9-5 8 4zm-1 7l-8-3 9-5 8 3z"/><path fill="#c0786c" d="M1487 477l-8-3 8-5 7 3zm-7 4l-8-3 8-4 7 3zm-38 33l-8-4 9-7 8 4zm-161 0l-7-2 9-5 7 2zm7 2l-8-2 9-5 7 2z"/><path fill="#c0a206" d="M1562 487l-8-3 7-6 7 4zm-61 37l-9-4 9-6 8 4z"/><path fill="#8ab406" d="M1014 490l-7-2 8-3 8 2zm-7 3l-8-2 8-3 8 1zm-8 3l-8-2 9-3 8 2zm-8 3l-8-2 9-3 8 2z"/><path fill="#ba3c06" d="M1119 482l-9-3 9-5 9 3zm-1 6l-9-2 10-5 9 3zm9 3l-10-3 10-4 9 3zm-1 7l-9-3 10-5 9 4zm9 3l-10-3 10-5 9 4zm8 3l-9-3 9-5 10 4zm9 3l-10-3 10-5 9 4zm8 3l-9-3 9-5 10 4zm9 4l-10-4 10-5 10 4zm9 3l-10-4 10-5 10 4z"/><path fill="#bababa" d="M1370 472l-10-3 9-5 10 3zm6 2l-7-2 9-6 7 2zm28 1l-7-3 8-4 8 2zm-21 1l-7-2 9-6 7 2zm6 1l-7-2 9-5 7 2z"/><path fill="#c03c18" d="M1514 481l-8-3 8-5 7 3zm-21 14l-7-4 7-5 8 4zm-270 30l-7-3 10-5 7 3z"/><path fill="#6cc018" d="M1596 496l-8-4 8-6 8 3z"/><path fill="#c06654" d="M1493 480l-7-3 7-5 8 3zm-292 2l-10-4 9-4 10 3zm286 2l-8-3 8-5 7 4zm-277 0l-10-3 9-4 9 3zm8 3l-9-3 8-5 10 4zm9 3l-10-3 9-5 10 3zm245 11l-8-4 8-5 8 4z"/><path fill="#c04824" d="M1160 481l-9-3 9-4 9 3zm72 39l-11-3 9-6 11 4z"/><path fill="#06c07e" d="M1633 501l-9-3 8-6 9 3zm-22 67l-9-4 7-6 9 3zm9 2l-10-3 7-6 10 2zm8 3l-9-3 7-7 9 3zm9 3l-10-3 7-7 10 3zm-24 0l-9-3 7-6 10 2zm9 3l-10-3 8-7 9 3zm9 3l-10-3 7-7 10 3zm-16 4l-9-4 7-7 10 3zm9 3l-10-4 8-7 9 3zm-6 6l-10-3 7-8 10 4z"/><path fill="#c03612" d="M1143 483l-9-3 9-5 10 3zm364 3l-8-3 8-6 8 4zm-7 4l-7-3 7-5 8 3z"/><path fill="#42c02a" d="M1603 498l-8-3 8-6 9 3z"/><path fill="#00a8c0" d="M1670 505l-9-3 8-6 8 3zm1 8l-9-2 8-7 8 3z"/><path fill="#b4c606" d="M1576 493l-8-3 7-6 7 4zm-67 52l-9-4 8-6 9 4zm-8 5l-9-3 9-7 8 4zm-6 5l-9-4 7-5 9 3zm-6 5l-9-4 7-5 9 3zm-7 5l-9-4 8-5 8 3zm-35 18l-9-4 8-6 9 4zm-29 13l-9-4 8-6 9 4zm-29 4l-9-4 7-7 9 5zm-44 5l-9-4 8-6 9 4z"/><path fill="#c04e30" d="M1500 483l-7-3 7-5 8 3zm-7 4l-7-3 7-5 8 3zm-249 37l-7-2 9-5 7 2zm7 3l-7-3 9-5 7 2z"/><path fill="#1ec03c" d="M1610 501l-8-3 9-6 8 3z"/><path fill="#c03618" d="M1152 486l-10-3 10-5 9 3zm8 3l-9-4 9-4 9 3zm8 3l-9-4 9-5 9 4z"/><path fill="#c07206" d="M1535 491l-8-4 7-5 8 3zm-475 31l-9-3 9-4 9 3zm-8 4l-9-4 9-4 9 4zm8 4l-9-4 9-4 9 3zm-8 3l-9-4 9-4 9 4zm8 4l-9-4 9-4 10 3zm-8 4l-10-4 10-5 9 4zm8 3l-9-4 9-4 10 4zm-17 1l-10-4 10-5 10 4zm8 3l-9-4 10-4 9 4zm-17 1l-10-4 10-5 10 4zm8 3l-9-4 10-4 9 4zm-17 1l-10-4 11-5 9 4zm8 3l-9-4 10-4 10 4z"/><path fill="#c0c006" d="M1562 495l-8-4 7-5 8 3zm-6 5l-8-4 7-5 8 3zm-6 5l-8-4 7-5 8 3z"/><path fill="#78c018" d="M1590 500l-8-4 7-5 8 4z"/><path fill="#c03c06" d="M1514 489l-8-4 8-5 8 4zm-7 5l-7-4 7-5 8 3zm-21 14l-8-4 8-5 8 3zm-7 5l-8-4 8-6 8 4zm-8 5l-8-3 9-6 8 3zm-284 2l-10-4 10-5 10 4zm-18 1l-10-3 10-5 10 3zm9 3l-10-3 10-5 10 3zm10 4l-11-4 10-5 10 4zm-9 4l-10-3 9-6 11 4zm6 3l-7-3 10-5 7 2zm6 2l-7-3 10-5 7 3zm7 2l-8-2 10-6 7 3zm6 3l-7-3 10-5 7 2zm6 2l-7-3 10-5 7 3zm7 3l-7-3 9-6 8 3zm-53 15l-7-3 9-4 7 3zm21 1l-7-2 9-5 7 3zm-35 1l-7-3 9-4 7 2zm21 1l-7-3 8-4 8 2zm-15 1l-7-2 9-5 7 3zm21 2l-7-3 9-5 7 3zm-35 0l-8-3 10-4 7 2zm21 1l-8-3 9-4 8 2zm21 1l-7-3 8-4 8 3zm-36 1l-7-3 9-5 7 3zm21 1l-7-3 9-5 7 3zm-36 0l-7-2 9-5 8 2zm43 3l-7-4 9-4 7 3zm-52 2l-7-3 10-5 7 3zm59 1l-8-4 9-4 8 3zm-68 3l-7-2 10-5 7 2zm60 1l-8-4 9-4 8 3zm7 3l-8-4 9-4 8 3zm-14 0l-8-3 8-4 8 3zm-62 1l-7-3 10-5 7 3zm69 3l-8-4 8-4 7 3zm-14 0l-8-3 8-4 8 3zm7 3l-8-3 8-4 8 3zm-14 1l-8-3 8-5 8 4zm7 3l-8-3 8-5 8 4zm-14 1l-8-3 8-5 8 4zm7 3l-8-3 8-5 8 4zm-14 1l-8-4 8-4 8 4zm7 3l-8-3 8-5 8 4z"/><path fill="#c09606" d="M1542 494l-8-4 7-5 8 3z"/><path fill="#4ec024" d="M1597 503l-8-3 7-5 8 3zm-6 5l-8-3 7-6 8 3z"/><path fill="#c0baba" d="M1396 480l-7-3 9-5 7 2zm7 2l-8-3 9-5 7 2z"/><path fill="#c05a06" d="M1521 492l-8-3 8-6 8 4zm-7 5l-7-4 7-5 8 4zm-6 5l-8-4 7-5 8 3zm-22 15l-8-4 8-6 8 4zm-377 4l-10-4 9-4 9 4zm-8 4l-9-4 8-4 10 3zm9 3l-10-4 9-4 9 4zm-8 4l-10-4 9-4 10 3zm9 3l-10-4 9-4 9 4zm1 8l-10-4 9-5 9 4zm9 3l-11-4 9-4 10 3zm-8 4l-11-4 9-4 11 3zm0 8l-10-4 9-5 11 4zm-8 4l-10-4 9-5 10 4zm-9 4l-10-4 10-5 10 4zm132 1l-8-3 8-5 8 4zm-141 4l-10-4 10-5 10 4zm140 3l-8-3 9-5 7 4zm-149 1l-10-4 10-5 10 4zm148 6l-8-3 9-5 8 4zm-7 5l-8-4 8-5 8 4z"/><path fill="#3cb424" d="M960 502l-7-1 9-4 8 2zm-8 4l-8-2 10-4 7 2z"/><path fill="#c0ae06" d="M1549 497l-8-4 7-5 8 3zm-7 5l-8-4 8-5 8 3zm-20 15l-8-4 8-6 8 4zm-7 5l-8-4 8-6 8 4z"/><path fill="#c0847e" d="M1473 485l-8-3 8-4 8 3zm-8 12l-8-4 8-5 8 4zm-30 13l-8-3 9-6 8 3z"/><path fill="#24c036" d="M1605 506l-8-3 6-6 8 4z"/><path fill="#72c018" d="M1584 505l-8-4 7-5 8 4z"/><path fill="#0cc04e" d="M1612 509l-8-3 6-6 9 4zm47 32l-10-2 9-7 9 2z"/><path fill="#c09c06" d="M1535 499l-8-4 8-5 8 3zm-6 4l-8-3 7-5 8 3zm-7 5l-8-3 7-6 8 4zm-7 5l-8-3 8-6 8 4zm-7 5l-8-3 8-6 8 4z"/><path fill="#c0b4b4" d="M1409 484l-7-3 9-5 7 2zm-21 1l-7-3 9-5 7 2zm28 1l-7-2 8-6 8 3zm-21 1l-8-3 9-5 8 2zm6 2l-7-3 9-5 7 2z"/><path fill="#c05a3c" d="M1486 492l-7-4 8-5 7 4zm-240 25l-7-2 9-5 7 2z"/><path fill="#ba3618" d="M1177 494l-10-3 9-5 10 4z"/><path fill="#2ac036" d="M1599 511l-8-4 6-5 8 3z"/><path fill="#c07e06" d="M1522 500l-8-3 7-6 8 4zm-29 20l-8-4 8-6 8 4zm-466 3l-9-3 10-4 9 3zm-8 4l-9-4 9-4 9 4zm-9 4l-9-4 10-4 9 3zm-9 4l-9-4 10-4 9 3zm-9 3l-9-3 10-5 9 4z"/><path fill="#c07872" d="M1472 493l-7-4 8-5 7 4z"/><path fill="#72c01e" d="M1578 510l-8-4 7-5 8 3zm-6 5l-9-4 7-5 9 3zm-7 5l-8-4 7-5 8 3zm-6 5l-9-4 8-5 8 3z"/><path fill="#12c048" d="M1606 514l-8-4 7-5 8 3z"/><path fill="#a8c006" d="M1557 508l-8-3 7-6 8 4zm-7 5l-8-4 8-5 8 4zm-6 5l-8-3 7-6 8 4zm-7 5l-8-3 7-6 9 4z"/><path fill="#ba3c1e" d="M1186 497l-10-3 9-5 10 3z"/><path fill="#4ec02a" d="M1585 513l-8-4 7-5 8 3zm-6 5l-8-4 7-5 8 3zm-6 5l-9-3 8-6 8 3z"/><path fill="#c0b406" d="M1536 507l-8-4 7-5 8 3zm-7 5l-8-4 8-6 8 4z"/><path fill="#90c00c" d="M1564 512l-8-4 7-6 8 4zm-6 5l-8-4 7-6 8 4zm-7 5l-8-4 7-6 9 4zm-6 5l-9-4 8-6 8 4z"/><path fill="#c03c24" d="M1486 500l-8-4 8-5 8 3z"/><path fill="#c04830" d="M1211 499l-10-3 9-5 10 3z"/><path fill="#ba8484" d="M1288 496l-10-4 8-4 10 3zm8 9l-7-2 9-5 7 2z"/><path fill="#bac006" d="M1543 510l-8-4 7-5 8 3zm-7 5l-8-4 8-5 8 3zm-6 5l-9-4 8-5 8 3zm-7 5l-9-4 8-5 8 3z"/><path fill="#c03c1e" d="M1194 500l-9-3 9-5 9 3zm9 4l-10-4 9-5 10 3z"/><path fill="#18c048" d="M1600 518l-8-3 7-5 8 3zm-18 16l-9-3 7-6 9 3zm71 13l-9-2 6-7 9 2z"/><path fill="#c05406" d="M1501 506l-8-3 7-6 8 4zm-8 5l-8-4 8-5 8 4zm-376 13l-9-4 8-4 10 4zm1 7l-9-4 8-4 10 4zm9 4l-10-4 9-5 10 4zm-7 4l-10-4 8-5 10 4zm9 3l-11-4 9-4 10 4zm1 7l-11-3 9-5 11 4zm-8 4l-11-3 9-5 11 4zm99 11l-8-3 9-4 7 3zm-1 7l-8-3 9-5 8 4zm-1 7l-7-3 8-5 8 4zm-7 5l-8-4 8-5 8 4zm-1 7l-8-3 9-5 7 3zm-8 5l-8-4 9-5 8 4z"/><path fill="#c0422a" d="M1479 504l-8-4 8-5 8 4z"/><path fill="#00ba9c" d="M1657 525l-9-3 8-6 9 3z"/><path fill="#36c036" d="M1587 521l-9-4 7-5 9 3zm-7 5l-8-4 7-5 8 3zm-6 5l-9-3 8-6 8 3z"/><path fill="#06ba5a" d="M1616 523l-9-2 7-6 8 3zm2 7l-9-2 7-6 8 3zm16 5l-9-3 8-7 9 3z"/><path fill="#c6847e" d="M1457 503l-7-4 8-6 8 4zm-86 21l-8-4 8-5 8 3z"/><path fill="#1ec048" d="M1594 523l-8-3 7-5 8 3zm-6 6l-8-4 7-5 8 3z"/><path fill="#c66654" d="M1465 506l-8-4 8-6 8 4zm-144 30l-8-3 8-6 8 3zm21 0l-8-3 9-6 8 3z"/><path fill="#c6482a" d="M1472 510l-8-4 8-6 8 4zm-174 34l-8-3 9-6 8 3zm44 0l-8-3 8-6 8 3z"/><path fill="#ba360c" d="M1204 511l-10-3 9-5 10 3z"/><path fill="#c67e72" d="M1450 508l-8-4 9-6 7 4zm-149 13l-7-3 8-5 7 2zm7 2l-8-3 9-5 7 2zm84 1l-8-3 8-6 8 4zm-78 1l-7-2 8-6 8 3zm64 1l-8-3 8-5 8 3zm-35 2l-8-3 8-6 8 3z"/><path fill="#0cba54" d="M1610 528l-9-3 7-5 9 3zm-6 6l-9-3 7-6 9 2z"/><path fill="#54c02a" d="M1566 528l-8-3 7-6 9 3z"/><path fill="#12ba4e" d="M1596 531l-9-2 7-6 9 2zm71 12l-9-2 8-7 9 2z"/><path fill="#c09c96" d="M1351 508l-8-2 8-5 8 2z"/><path fill="#ba664e" d="M1254 513l-7-3 9-5 7 2z"/><path fill="#ba7866" d="M1275 512l-7-2 8-5 7 2z"/><path fill="#78c01e" d="M1552 530l-8-3 7-6 9 3z"/><path fill="#c0a29c" d="M1378 511l-7-3 7-5 8 3z"/><path fill="#c06042" d="M1449 517l-8-4 9-6 8 4z"/><path fill="#54c62a" d="M1560 534l-9-4 8-6 8 4zm-7 5l-9-4 8-6 9 4zm-39 41l-9-4 7-6 9 4z"/><path fill="#0cc054" d="M1612 536l-9-3 7-6 9 3zm-22 1l-9-3 7-6 9 2zm30 1l-9-2 7-7 9 3zm8 3l-9-3 7-6 9 2zm8 2l-9-3 7-6 9 2zm11 11l-9-3 6-7 10 2z"/><path fill="#c65a06" d="M1479 522l-9-4 9-6 8 4zm-64 29l-8-4 7-6 9 4zm-22 7l-8-4 8-6 8 4zm-151 8l-8-3 8-5 8 3zm92 1l-8-4 7-5 8 3zm-35 0l-8-4 7-5 8 3zm-36 0l-8-3 8-6 8 4zm-53 31l-8-4 9-5 8 4zm-7 4l-8-4 8-4 8 4zm-7 4l-8-4 8-4 8 4zm-7 4l-8-4 8-4 8 4zm-7 4l-8-4 8-4 8 4z"/><path fill="#c6b406" d="M1508 527l-8-4 8-6 8 4zm-7 5l-9-3 9-6 8 3zm-8 6l-8-4 8-6 9 4zm-7 5l-9-4 9-6 8 4zm-7 5l-8-4 7-5 8 4zm-34 17l-8-4 7-6 9 4zm-29 13l-8-4 8-7 9 5zm-65 12l-9-4 8-6 8 4zm-37 1l-8-4 8-6 8 4zm-29 3l-8-4 8-5 8 4zm-8 12l-8-4 8-5 9 4zm-7 5l-9-4 9-5 8 4z"/><path fill="#c67e78" d="M1427 516l-8-4 9-6 8 3zm-70 10l-8-3 8-6 8 3z"/><path fill="#c69c96" d="M1344 513l-8-3 8-5 8 3zm20 0l-7-2 8-6 7 3zm21 1l-8-3 8-6 8 3z"/><path fill="#96c60c" d="M1538 532l-9-4 8-6 8 4zm-222 95l-9-5 9-6 8 4z"/><path fill="#c69696" d="M1406 514l-8-3 8-5 7 3zm-35 2l-7-3 7-5 8 2z"/><path fill="#c63c18" d="M1456 520l-8-3 9-7 8 4zm-172 26l-7-3 7-5 8 2zm65 1l-8-3 8-6 8 3zm-37 2l-8-3 9-6 8 3z"/><path fill="#36c63c" d="M1567 537l-8-4 7-6 9 4zm-19 25l-9-4 8-6 9 4zm-19 17l-9-5 6-6 10 4zm-28 13l-9-5 8-6 9 4zm-146 38l-9-5 8-6 9 5z"/><path fill="#c67e06" d="M1486 525l-8-3 8-6 8 4zm-8 6l-8-4 9-6 8 4zm-7 5l-9-4 9-6 8 4zm-27 12l-9-4 8-6 8 4zm-29 12l-8-4 8-6 8 4zm-22 7l-8-4 8-6 9 4zm-58 8l-8-4 7-5 8 3zm-36 0l-8-3 8-6 8 4zm-14 2l-8-4 8-5 8 3zm-15 2l-8-4 8-6 8 4zm-15 8l-8-4 9-4 8 3zm-7 4l-8-3 8-5 8 4zm-8 13l-9-4 9-5 8 4zm-8 5l-9-4 9-6 9 5z"/><path fill="#c68a84" d="M1309 516l-8-3 9-5 7 2zm6 2l-7-3 8-5 8 2zm84 1l-8-3 8-6 8 4zm-77 1l-8-2 9-6 7 3zm63 1l-8-3 8-5 8 3zm-56 2l-8-3 9-6 7 3z"/><path fill="#c0c606" d="M1516 531l-9-4 8-6 9 4zm-42 30l-8-3 7-6 9 4zm-6 6l-9-4 7-6 9 4zm-29 12l-8-4 7-6 9 4zm-29 13l-9-4 8-6 9 4zm-29 4l-9-4 7-6 9 4zm-29 3l-9-4 8-6 8 4zm-37 1l-9-4 8-6 9 4zm22 1l-9-4 8-6 9 4zm-37 0l-9-4 9-5 8 4z"/><path fill="#c0360c" d="M1211 521l-7-3 9-5 7 2zm4 9l-7-3 9-5 7 2zm6 2l-7-3 10-5 7 2zm7 2l-7-2 9-6 7 3z"/><path fill="#c66c5a" d="M1434 519l-8-3 9-7 8 4zm-63 12l-8-3 8-5 8 3zm-57 2l-8-3 9-6 7 3zm43 1l-8-3 8-6 8 3z"/><path fill="#c69690" d="M1350 516l-7-3 8-5 7 2zm42 0l-8-3 8-5 8 3z"/><path fill="#78c61e" d="M1545 536l-8-4 7-6 9 4zm-39 40l-9-4 7-6 9 4z"/><path fill="#c68a7e" d="M1413 518l-8-4 8-5 8 3zm-63 5l-8-3 8-5 8 2z"/><path fill="#c64206" d="M1464 524l-9-4 9-6 8 4zm-8 5l-8-3 8-7 9 4zm-227 24l-8-3 9-5 7 3zm21 1l-8-3 8-5 8 3zm6 3l-7-3 8-6 7 3zm21 1l-7-4 7-5 8 3zm56 1l-8-4 9-6 8 3zm-35 0l-7-4 7-5 8 3zm-116 33l-8-4 8-4 7 4zm-7 4l-8-4 8-4 8 3zm-7 4l-8-4 8-4 8 3zm-7 4l-8-4 8-5 8 4zm-7 4l-8-4 8-5 8 4z"/><path fill="#c06606" d="M1085 525l-10-3 9-4 10 3zm0 7l-9-3 9-5 9 4zm1 8l-10-4 9-5 10 4zm9 3l-10-4 9-4 10 4zm-9 4l-9-4 9-4 10 4zm9 4l-10-4 9-5 10 4zm-8 4l-10-4 9-5 10 4zm-9 4l-10-4 10-5 10 4zm-9 4l-10-4 10-4 10 4zm-9 5l-10-4 10-5 10 4zm182 5l-8-3 8-5 8 3z"/><path fill="#18c64e" d="M1575 540l-8-4 7-6 9 4zm-13 11l-9-4 8-6 8 4zm-5 23l-9-3 8-7 9 3zm-20 8l-9-4 7-6 9 4zm-49 22l-9-5 7-7 10 5zm-29 14l-10-5 8-7 10 5z"/><path fill="#c6a206" d="M1493 529l-8-4 8-6 9 4zm-21 16l-9-4 8-6 8 4zm-27 11l-9-4 8-5 8 4zm-29 13l-9-4 8-6 9 4zm-44 14l-9-4 7-6 9 4zm-36 0l-9-3 8-6 8 3zm-37 1l-8-4 8-6 8 4zm-14 2l-8-4 8-6 8 4zm-15 8l-8-4 8-5 8 5zm-16 18l-8-5 9-5 8 5z"/><path fill="#aec606" d="M1523 534l-8-4 8-6 8 4zm-7 5l-9-4 9-6 8 4zm-40 31l-9-4 7-6 9 5zm-7 6l-9-5 8-6 8 5zm-29 12l-9-4 8-6 9 4zm-110 19l-9-4 8-6 9 4zm-15 1l-8-4 8-5 8 4zm-7 5l-9-4 8-5 9 4zm-8 5l-8-4 8-6 9 5zm-7 5l-9-4 9-6 8 5z"/><path fill="#c65436" d="M1441 523l-8-4 9-7 8 4zm-20 6l-8-4 7-5 8 3zm-164 0l-7-3 9-5 7 2zm7 2l-7-2 9-6 7 3zm7 3l-8-3 9-6 8 3zm6 2l-7-3 9-5 7 2zm108 2l-8-4 8-6 8 4zm-14 2l-8-4 8-6 8 4z"/><path fill="#c69090" d="M1336 518l-7-3 8-5 7 2zm21 0l-7-3 8-5 7 3z"/><path fill="#c03c12" d="M1217 523l-7-3 9-5 7 2zm17 13l-7-2 9-6 8 3z"/><path fill="#06c65a" d="M1606 542l-9-3 7-6 9 2zm-23 0l-9-2 8-7 8 3zm-6 6l-9-3 7-6 9 3zm-4 23l-10-3 8-7 9 3zm-13 12l-10-4 7-6 9 4zm-35 10l-10-4 7-6 10 4zm-22 9l-9-5 7-6 10 4z"/><path fill="#c6908a" d="M1378 519l-8-3 8-6 8 3zm-35 1l-8-3 9-5 7 3z"/><path fill="#c66006" d="M1471 527l-8-4 8-6 8 4zm-8 6l-8-4 9-6 8 4zm-27 11l-8-4 7-5 9 4zm-65 22l-9-4 9-6 8 3zm-16 2l-8-4 9-6 8 3zm-70 0l-8-3 7-5 8 3zm-36 1l-8-3 8-6 8 4zm-23 20l-8-4 8-4 8 3zm-8 5l-8-4 9-5 8 4zm-8 12l-8-4 8-5 8 4zm-7 4l-8-4 8-5 8 4zm-7 4l-8-4 8-5 8 4z"/><path fill="#c67866" d="M1420 521l-8-4 8-5 8 3zm-70 10l-8-3 8-6 8 3z"/><path fill="#96c606" d="M1531 537l-9-3 8-6 9 4zm-27 30l-8-4 7-6 8 4zm-27 13l-9-5 8-6 8 5zm-36 19l-9-5 8-7 9 5zm-117 22l-9-4 8-6 9 4z"/><path fill="#c6360c" d="M1448 526l-8-4 9-6 8 4zm-184 19l-8-3 8-5 7 3zm107 3l-8-3 8-6 8 3zm-100-1l-8-2 8-5 7 2zm27 4l-8-3 8-5 8 3zm21 1l-8-3 9-6 8 3z"/><path fill="#30c63c" d="M1561 542l-9-3 8-6 8 3zm-88 63l-9-4 7-7 10 5z"/><path fill="#c68a8a" d="M1364 521l-8-3 8-6 8 3z"/><path fill="#06c060" d="M1614 544l-9-3 7-6 9 3zm8 3l-9-3 7-7 9 3zm8 2l-9-3 7-6 9 2zm-52 8l-9-4 7-6 9 3zm71 5l-9-2 7-8 9 3zm-75 18l-10-3 8-7 10 3z"/><path fill="#c66648" d="M1427 524l-8-4 8-5 8 4z"/><path fill="#c6786c" d="M1406 522l-8-3 8-5 8 3zm-85 6l-7-3 8-6 8 3zm43 1l-8-4 8-5 8 3z"/><path fill="#c6c606" d="M1508 536l-8-4 8-6 8 4zm-7 5l-9-4 9-6 8 4zm-8 6l-8-4 8-6 9 4zm-6 5l-8-4 7-6 8 4zm-6 5l-9-4 7-6 9 4zm-28 11l-9-3 8-6 9 4zm-7 6l-8-4 7-6 9 4zm-22 7l-9-4 9-6 8 4zm-7 6l-9-4 8-7 9 4zm-22 7l-9-4 8-6 8 4zm-88 2l-8-3 8-7 8 4zm59 2l-8-5 7-6 9 5zm-37 0l-8-4 8-6 8 4zm-37 8l-8-5 8-5 9 4zm-7 4l-8-4 8-5 8 4z"/><path fill="#06c660" d="M1591 545l-9-3 7-6 9 3zm-117 71l-9-5 8-7 9 5z"/><path fill="#7ec618" d="M1538 541l-8-4 8-6 8 4zm-6 14l-9-4 8-6 9 4zm-47 29l-9-5 7-6 9 5z"/><path fill="#12c64e" d="M1569 546l-9-4 7-6 9 3zm-18 34l-9-4 7-6 9 3z"/><path fill="#c69c06" d="M1486 534l-9-4 9-6 8 4zm-8 6l-8-4 8-6 9 4zm-55 23l-9-4 8-6 9 4zm-30 13l-8-4 8-6 9 4zm-79 6l-9-4 8-5 8 3zm-52 17l-8-4 9-5 8 4zm-15 17l-9-4 9-5 8 4z"/><path fill="#c64824" d="M1435 527l-8-3 7-6 8 4zm-21 7l-8-4 8-5 8 3zm-87 13l-8-4 9-6 7 4z"/><path fill="#c04218" d="M1230 527l-7-2 9-6 7 3z"/><path fill="#c66c54" d="M1414 526l-8-4 7-5 8 3z"/><path fill="#c66048" d="M1272 526l-7-2 9-6 7 3zm121 6l-8-3 7-6 8 4zm-101 1l-7-2 8-6 8 2zm7 3l-8-3 9-6 8 3zm65 1l-8-4 8-5 8 3zm-36 1l-8-3 8-5 8 3z"/><path fill="#06c666" d="M1599 548l-9-3 7-7 9 3zm-14 3l-9-3 7-7 9 3zm73 14l-10-3 7-7 10 3zm-79 0l-9-3 8-7 9 4zm-11 21l-9-3 6-7 10 4zm-14 3l-10-4 7-6 9 3zm-15 2l-9-4 7-6 9 4zm-21 8l-9-4 7-6 9 4zm-21 9l-10-5 8-7 9 5zm-80 25l-10-5 8-7 9 5z"/><path fill="#5ac62a" d="M1546 544l-9-4 8-5 9 3zm-6 14l-9-4 8-6 9 4zm-47 30l-9-5 7-6 10 4zm-28 13l-10-5 8-6 9 5z"/><path fill="#c67260" d="M1293 526l-7-3 8-5 8 2zm7 2l-8-3 9-5 8 2zm85 1l-8-3 8-6 8 4zm-78 1l-8-2 9-6 7 3zm28 3l-8-3 9-6 8 3z"/><path fill="#c68478" d="M1336 525l-8-3 8-5 8 3z"/><path fill="#c63606" d="M1442 531l-8-4 7-5 8 3zm-21 6l-8-4 8-5 8 4zm-184 4l-8-2 8-5 8 3zm163 3l-8-4 8-5 8 3zm-157 0l-7-3 8-5 7 3zm143 2l-9-4 8-5 9 3zm-157 0l-7-3 8-5 7 3zm21 1l-8-3 8-5 8 3zm7 2l-8-3 8-5 8 3zm99 1l-8-3 8-6 8 3zm-79 0l-7-3 7-5 8 3zm64 3l-8-4 9-6 8 4zm-57 0l-7-3 7-5 8 3zm21 1l-8-3 8-5 8 3z"/><path fill="#c6725a" d="M1400 527l-8-3 7-6 8 4z"/><path fill="#9cc606" d="M1524 543l-9-4 8-6 9 4zm-7 13l-9-3 8-6 9 3zm-6 6l-9-4 7-6 9 4zm-27 12l-9-4 7-6 9 4zm-36 19l-9-5 8-6 9 4zm-117 23l-9-4 8-6 9 4z"/><path fill="#c6664e" d="M1279 528l-8-2 9-6 7 3zm6 3l-7-3 9-6 7 3zm93 3l-8-3 8-6 8 4z"/><path fill="#36c636" d="M1554 548l-9-4 8-6 9 4z"/><path fill="#c64806" d="M1449 534l-8-4 7-5 9 4zm-20 7l-9-4 8-6 8 4zm-22 6l-8-3 8-6 8 4zm-21 8l-9-4 9-6 8 4zm-171 0l-8-4 9-4 7 3zm21 1l-8-3 8-5 8 3zm135 1l-8-4 8-6 8 4zm-129 1l-7-3 8-5 7 3zm114 1l-8-3 8-7 8 4zm-93 0l-7-3 8-5 7 3zm57 1l-9-3 8-6 8 4zm-36 1l-7-4 7-5 8 3zm22 1l-8-4 7-5 8 4zm-117 33l-8-4 8-4 7 4zm-7 4l-8-4 8-4 8 4zm-7 4l-8-4 8-4 8 4zm-7 4l-8-4 8-4 8 4zm-7 4l-8-4 8-4 8 4z"/><path fill="#1ec042" d="M1661 549l-9-2 6-7 10 2z"/><path fill="#c63c12" d="M1428 532l-8-4 7-5 8 4zm-184 5l-8-3 8-4 7 3zm163 2l-8-4 8-6 8 4zm-157 1l-7-3 8-5 7 3zm7 2l-8-3 8-4 8 2zm34 6l-8-3 8-5 8 3zm43 2l-8-4 9-6 8 4z"/><path fill="#c66042" d="M1407 530l-8-3 7-6 8 4zm-101 8l-8-3 9-5 8 2z"/><path fill="#8ac612" d="M1531 546l-8-4 8-6 8 4zm-6 14l-9-4 8-6 9 4zm-6 5l-9-4 7-6 8 5zm-27 13l-9-4 7-6 9 4zm-29 13l-9-5 8-6 9 5z"/><path fill="#c67266" d="M1328 531l-8-3 9-6 8 3z"/><path fill="#c66606" d="M1457 538l-9-4 8-6 8 4zm-49 18l-9-4 8-6 9 4zm-22 7l-9-3 9-6 8 3zm-66 5l-8-3 7-6 9 4zm22 2l-9-4 8-5 8 3zm-36 0l-8-3 8-6 8 4zm-36 0l-8-3 8-6 8 4zm-37 15l-8-4 9-5 8 4zm-8 12l-8-4 9-5 8 4zm-8 5l-8-4 9-5 8 3z"/><path fill="#c63c06" d="M1435 536l-8-4 8-6 8 4zm-21 6l-8-4 8-5 8 4zm-21 7l-8-4 8-5 8 3zm-157-1l-7-3 8-4 7 3zm-14 2l-7-3 8-5 7 3zm156 1l-8-3 8-6 8 3zm-135 0l-8-3 8-5 8 3zm21 1l-8-3 8-5 7 3zm99 1l-8-3 9-6 8 3zm-93 2l-7-3 8-5 7 3zm56 0l-8-3 9-6 8 3zm22 1l-8-3 9-7 8 4zm-57 0l-7-3 7-6 8 4zm21 1l-8-3 8-6 8 4z"/><path fill="#06c66c" d="M1593 554l-9-3 7-7 9 3zm31 1l-9-3 7-6 9 2zm43 13l-10-3 7-8 9 3zm-90 21l-10-3 7-7 9 4zm-110 33l-9-5 8-7 9 5z"/><path fill="#24c642" d="M1670 552l-10-3 7-7 9 3zm-115 4l-9-4 8-5 9 3zm-6 15l-9-4 8-6 9 3zm-6 5l-9-3 7-6 9 3zm-48 22l-9-5 7-6 9 4zm-29 14l-9-5 7-7 10 5z"/><path fill="#c64224" d="M1251 533l-8-3 8-4 7 2zm6 2l-7-2 7-5 8 3z"/><path fill="#6cc624" d="M1539 549l-9-4 8-5 9 4zm-6 15l-9-4 8-6 9 4zm-6 5l-9-4 7-6 8 4zm-27 13l-9-4 7-6 9 4z"/><path fill="#a2c606" d="M1516 548l-8-4 8-6 8 4zm-26 21l-9-4 7-6 9 4zm-35 18l-9-5 8-6 9 5zm-139 30l-9-4 8-6 9 4zm-8 5l-8-4 8-6 9 5zm-7 6l-9-5 8-6 9 5z"/><path fill="#c68406" d="M1464 541l-8-4 7-5 8 4zm-27 12l-9-4 8-6 8 4zm-66 22l-9-4 9-7 8 4zm-14 1l-9-4 7-5 9 3zm-36 1l-9-4 8-6 8 4zm-58 6l-8-4 8-5 8 4zm-16 17l-8-5 9-5 8 5z"/><path fill="#c65406" d="M1443 539l-8-4 7-5 8 4zm-21 7l-8-4 7-6 9 4zm-22 7l-8-4 8-6 8 4zm-22 7l-8-4 8-6 9 4zm-150 0l-7-3 8-5 7 3zm135 2l-8-3 8-7 9 4zm-128 1l-8-3 9-5 7 3zm92 0l-8-3 7-6 8 4zm21 2l-8-4 8-6 9 3zm-92-1l-8-3 8-5 8 3zm57 1l-8-3 7-6 8 4zm-36 0l-7-3 7-5 8 3z"/><path fill="#c64e30" d="M1400 536l-8-4 7-6 9 4zm-116 3l-7-3 8-6 8 3zm7 2l-8-3 9-6 8 3zm65 1l-8-3 9-6 8 3zm-36 2l-8-3 9-6 7 3z"/><path fill="#06c672" d="M1601 556l-9-3 7-6 9 2zm8 3l-9-3 7-7 9 3zm-47 33l-9-4 6-6 10 3zm-29 5l-9-4 7-7 9 4zm-21 8l-10-4 8-7 9 4zm-22 9l-10-5 8-7 9 5zm-89 21l-9-4 8-8 9 5z"/><path fill="#4ec630" d="M1547 553l-9-4 8-6 9 4zm-60 41l-10-5 8-6 9 4z"/><path fill="#12c054" d="M1656 556l-10-3 7-7 9 3zm-93 3l-9-3 8-6 9 3z"/><path fill="#90c60c" d="M1524 551l-9-4 9-6 8 4zm-26 22l-9-5 7-5 9 3zm-28 12l-9-4 8-6 9 4zm-36 20l-9-5 8-7 9 5z"/><path fill="#c67206" d="M1450 543l-8-4 7-6 9 4zm-28 11l-8-4 8-5 8 4zm-21 7l-9-3 8-6 9 3zm-23 8l-8-4 8-6 9 4zm-51 3l-8-4 8-6 8 4zm22 1l-8-4 7-5 8 3zm-86 2l-8-3 8-6 8 4zm-15 9l-8-4 9-5 8 4zm-7 4l-8-4 8-4 8 3zm-9 12l-8-3 9-5 8 3z"/><path fill="#c6421e" d="M1264 538l-8-3 8-5 7 3zm129 3l-8-4 8-6 8 4zm-122-1l-8-2 8-5 7 3zm107 3l-8-4 8-6 8 4zm-101 0l-7-3 7-5 8 3zm87 2l-8-3 8-6 8 3zm-59 2l-8-4 9-6 8 3z"/><path fill="#12c654" d="M1664 558l-10-2 7-8 10 3zm-154 38l-10-5 8-6 9 4zm-147 38l-9-5 8-6 9 5z"/><path fill="#c69006" d="M1458 546l-9-4 8-5 8 4zm-28 12l-8-4 7-6 9 4zm-124 21l-8-4 8-6 8 4zm22 1l-8-4 7-5 9 3zm-36 1l-8-4 8-6 8 4zm-15 1l-8-4 8-6 8 4zm-14 9l-8-4 8-5 8 4zm-16 17l-8-4 8-5 9 4z"/><path fill="#c65a42" d="M1349 539l-8-3 9-6 8 3z"/><path fill="#06c678" d="M1618 562l-10-3 7-7 10 2zm-32 30l-10-3 6-7 10 4zm-38 2l-10-3 7-7 10 4z"/><path fill="#a8c606" d="M1509 553l-9-3 9-6 8 3zm-6 5l-9-3 7-6 9 4zm-6 6l-9-4 7-6 9 4zm-35 17l-9-4 8-6 9 4zm-29 13l-9-4 8-6 9 4zm-7 6l-9-4 8-7 9 4zm-88 11l-9-4 8-7 9 4zm-15 1l-9-4 8-6 9 4z"/><path fill="#c6543c" d="M1313 541l-8-3 9-6 7 3z"/><path fill="#c6a806" d="M1465 550l-8-4 7-6 9 4zm-27 12l-9-4 8-6 8 4zm-29 12l-9-4 8-6 9 4zm-23 8l-9-4 9-7 8 4zm-28 3l-9-4 7-6 9 4zm-37 0l-8-3 8-6 8 3zm22 2l-8-4 7-6 9 4zm-66 3l-8-4 8-5 9 4zm-7 13l-8-5 8-5 8 5zm-8 4l-8-4 8-5 9 4z"/><path fill="#c65a3c" d="M1335 541l-8-3 8-6 8 3z"/><path fill="#c6ba06" d="M1473 553l-8-4 7-5 8 4zm-6 5l-9-4 7-5 9 3zm-28 12l-9-4 8-5 8 3zm-30 13l-9-4 9-6 8 4zm-73 9l-8-4 7-6 9 4zm-36 1l-9-4 8-6 9 4zm-8 4l-8-4 8-5 8 4zm-7 5l-8-4 8-5 8 4z"/><path fill="#c69606" d="M1451 551l-8-4 7-5 9 4zm-50 19l-9-4 9-6 8 4zm-23 8l-8-4 8-6 9 4zm-14 2l-8-4 7-6 8 4zm-14 2l-9-4 8-6 8 4zm-80 4l-8-4 8-4 8 4zm-15 17l-8-4 8-5 8 4z"/><path fill="#c66c06" d="M1429 549l-8-4 8-5 8 4zm-66 22l-8-4 8-6 9 4zm-71 1l-8-4 8-5 8 3zm-36 0l-8-3 8-6 8 4zm21 1l-8-3 8-6 8 4zm-28 3l-8-3 8-5 8 4zm-8 4l-8-3 9-5 7 4zm-8 12l-8-3 8-5 8 4zm-9 13l-8-4 9-5 8 4zm-6 4l-9-4 8-4 8 4zm-7 4l-8-4 7-4 8 4zm-7 4l-8-4 7-4 9 4z"/><path fill="#18c648" d="M1556 565l-9-3 8-7 9 4z"/><path fill="#c6ae06" d="M1459 555l-9-4 8-6 8 4zm-7 5l-8-4 7-6 9 4zm-21 7l-9-4 8-6 9 4zm-7 5l-9-4 8-6 9 4zm-23 7l-8-4 8-6 9 4zm-7 6l-9-4 8-6 9 4zm-14 2l-9-4 7-6 9 4zm-73 0l-9-3 8-6 9 3zm58 2l-8-4 7-6 9 4zm-36 0l-9-4 8-6 8 4zm-37 0l-8-4 8-6 8 4zm-15 9l-8-4 8-5 9 4zm-15 18l-8-5 8-5 9 5zm-8 5l-8-5 9-5 8 4z"/><path fill="#0cc654" d="M1564 568l-9-3 8-7 9 4zm-33 20l-9-4 6-7 10 4zm-50 22l-9-5 8-7 9 5z"/><path fill="#42c630" d="M1541 568l-9-4 8-7 9 4zm-33 18l-9-4 7-7 9 5zm-58 28l-9-5 8-7 9 5z"/><path fill="#06c67e" d="M1652 572l-10-3 7-8 10 4zm-81 23l-10-4 7-6 10 3zm23 0l-10-3 7-7 10 3zm-67 8l-10-4 7-7 10 4zm-44 17l-10-5 8-7 10 5z"/><path fill="#06c684" d="M1661 575l-10-3 7-8 9 3zm-15 4l-10-4 7-7 10 4zm-6 6l-10-3 7-8 10 4zm-7 7l-10-4 7-7 10 3zm-77 6l-9-4 6-6 10 3zm70 0l-10-3 8-8 10 4zm-46 0l-10-4 6-6 10 3zm23 0l-10-3 7-7 9 3zm-61 2l-10-4 7-6 9 4zm-37 11l-9-4 7-7 9 4zm-80 26l-9-5 7-6 9 4z"/><path fill="#c6c006" d="M1460 563l-9-4 8-5 8 3zm-29 13l-8-4 8-6 8 4zm-29 13l-9-4 8-7 9 4zm-15 2l-8-5 7-6 9 4zm-14 1l-9-4 8-6 8 4zm-14 2l-9-4 7-6 9 4zm-37 0l-9-4 8-6 9 4zm22 2l-9-4 8-6 9 4zm-67 19l-8-4 8-6 9 5zm-7 5l-9-5 9-5 8 5z"/><path fill="#c64e06" d="M1222 557l-8-3 8-5 8 3zm119 5l-9-4 9-6 8 3zm-92-1l-7-3 8-5 7 3zm21 1l-7-3 7-5 8 3zm22 2l-8-4 7-5 8 3zm-96 35l-8-4 8-5 7 4zm-7 3l-8-3 8-5 8 4zm-7 4l-8-3 8-5 8 4zm-7 5l-8-4 8-5 8 4zm-7 4l-8-4 8-5 8 4z"/><path fill="#06c690" d="M1670 578l-10-3 6-8 10 3zm-15 4l-10-4 7-7 9 4zm-7 6l-10-3 7-8 10 4zm-6 7l-10-4 7-7 10 3zm-6 7l-11-4 8-7 10 3zm-86 2l-9-4 6-7 10 4zm69 0l-8-3 6-7 8 3zm-84 3l-9-5 7-6 9 4zm-37 11l-9-5 7-7 10 5z"/><path fill="#48c630" d="M1535 573l-9-4 6-6 9 4z"/><path fill="#84c618" d="M1512 571l-8-4 7-6 8 4z"/><path fill="#0cc65a" d="M1565 577l-9-3 8-7 9 3zm-20 8l-9-4 7-6 9 4z"/><path fill="#60c62a" d="M1521 575l-9-5 6-6 9 5zm-182 56l-8-6 8-6 9 5z"/><path fill="#c68a06" d="M1408 565l-8-4 8-6 8 4zm-22 7l-9-3 9-7 8 4zm-44 6l-8-4 7-5 9 3zm-87 17l-8-4 8-5 9 4zm-16 18l-8-5 9-5 8 4zm-7 4l-8-5 8-4 8 4z"/><path fill="#bac606" d="M1461 572l-9-4 8-6 9 4zm-7 5l-9-4 8-6 9 4zm-22 8l-9-4 8-6 9 4zm-7 5l-9-4 8-6 9 4zm-103 13l-8-4 8-6 8 4zm-15 2l-8-5 8-5 8 4zm-7 4l-8-4 8-5 8 4zm-7 5l-9-4 8-5 9 4zm-8 5l-8-4 8-6 9 5zm-8 5l-8-4 8-6 9 5z"/><path fill="#06c69c" d="M1664 585l-10-4 6-7 10 4zm-7 6l-10-3 7-7 10 3zm-6 7l-10-3 7-8 10 4zm-6 7l-11-4 8-7 10 3zm-86 2l-10-4 7-6 10 3zm47 1l-10-4 7-7 10 4zm-115 16l-9-4 8-7 9 4z"/><path fill="#2ac642" d="M1523 584l-10-4 7-6 9 4z"/><path fill="#c67806" d="M1313 574l-8-4 8-6 8 4zm-57 5l-8-3 8-5 8 4zm-16 17l-8-4 9-5 8 4zm-15 17l-8-4 7-5 8 4zm-7 4l-8-4 7-5 9 4z"/><path fill="#1ec648" d="M1516 590l-9-5 7-6 9 4z"/><path fill="#06c0a2" d="M1666 594l-10-3 7-7 10 3zm-6 7l-10-3 7-8 10 3zm9 3l-10-3 7-8 10 3zm-15 4l-10-3 7-8 10 3zm9 3l-10-3 7-8 10 3z"/><path fill="#72c61e" d="M1478 590l-9-5 8-6 9 4zm-36 19l-9-5 8-7 9 5z"/><path fill="#06c68a" d="M1565 601l-10-4 7-6 10 3zm24 0l-10-3 6-7 10 3zm23 0l-10-3 6-7 10 3zm-92 8l-9-4 7-7 9 4zm-44 18l-10-5 8-7 10 4z"/><path fill="#66c624" d="M1472 595l-10-4 8-7 9 5zm-125 30l-9-5 8-6 9 5z"/><path fill="#3cc636" d="M1480 599l-9-4 7-7 9 5z"/><path fill="#06c696" d="M1574 604l-10-4 7-6 9 3zm23 0l-10-3 7-7 10 3zm28 2l-7-3 6-6 8 2zm-111 9l-10-4 7-7 10 4z"/><path fill="#84c612" d="M1456 597l-9-5 8-6 9 4zm-125 29l-8-5 8-6 9 5z"/><path fill="#06c6a2" d="M1583 607l-10-3 6-7 10 3zm49 2l-7-3 6-7 7 3zm-88 1l-10-4 7-7 10 4zm-15 3l-10-5 7-6 10 4z"/><path fill="#00c6a8" d="M1568 610l-10-3 7-7 10 3zm45 0l-8-3 7-7 7 3zm-21 1l-10-4 6-7 10 4z"/><path fill="#bacc06" d="M1403 598l-9-4 7-7 9 5z"/><path fill="#78c618" d="M1449 603l-9-5 8-7 9 5z"/><path fill="#00c6ae" d="M1639 611l-7-3 6-7 7 3zm-19 2l-8-3 7-7 7 2zm-67 0l-10-4 7-6 10 3zm94 1l-9-3 6-7 9 3zm7 2l-8-3 6-7 8 3zm8 3l-9-3 6-7 9 2zm7 2l-8-3 6-7 8 3zm-185 9l-9-4 8-7 9 4z"/><path fill="#a8cc06" d="M1411 602l-9-4 7-7 9 5zm-14 2l-9-4 7-7 9 5zm-44 5l-9-5 8-6 8 5z"/><path fill="#4ec62a" d="M1457 607l-9-5 8-6 9 5z"/><path fill="#00c6b4" d="M1577 614l-10-4 6-7 10 4zm24 0l-10-4 6-7 10 4zm-66 1l-7-3 7-7 7 3zm-13 4l-9-4 7-7 10 4z"/><path fill="#b4cc06" d="M1374 602l-9-5 8-6 9 5zm-14 2l-9-5 7-6 9 4zm-96 39l-9-5 8-5 9 5zm-7 4l-8-5 7-5 9 5zm-6 5l-9-5 7-5 9 5zm-7 5l-9-6 8-5 8 5z"/><path fill="#00c6ba" d="M1627 615l-8-3 6-7 8 3zm-127 13l-10-4 8-8 10 5z"/><path fill="#00c6c0" d="M1562 617l-10-4 7-7 10 4zm45 0l-7-3 6-8 8 3zm-21 0l-10-4 6-7 10 4zm-44 1l-8-3 8-7 7 3zm-26 7l-10-4 7-7 10 4zm-40 10l-7-3 7-7 7 4z"/><path fill="#9ccc06" d="M1419 606l-9-4 7-7 9 4zm-126 27l-9-5 9-6 9 5zm-8 6l-8-5 8-6 9 5zm-6 4l-9-5 7-5 9 5zm-7 5l-9-6 8-5 9 6zm-7 4l-8-5 7-5 9 5zm-6 5l-9-6 7-5 9 6z"/><path fill="#a2cc06" d="M1382 606l-9-4 8-7 9 5zm-15 2l-8-5 7-6 9 4zm-115 54l-9-6 7-5 9 5z"/><path fill="#00c6c6" d="M1634 618l-8-3 6-7 8 3zm-105 4l-8-3 8-7 7 3zm-36 12l-10-4 8-7 10 4z"/><path fill="#96cc0c" d="M1405 608l-9-4 7-7 9 4z"/><path fill="#00c0c6" d="M1614 619l-7-3 6-7 8 3zm-43 1l-10-4 6-7 10 4zm24 0l-10-3 6-7 10 3zm46 0l-8-3 6-7 8 3zm-92 1l-8-3 7-8 8 3zm100 2l-9-3 6-7 9 2zm7 2l-8-3 6-7 8 3zm8 3l-9-3 6-8 9 3z"/><path fill="#84cc18" d="M1428 610l-10-4 7-7 10 5zm-141 38l-9-5 7-5 9 5zm-7 4l-9-5 8-5 9 5zm-6 5l-9-5 7-6 9 6zm-7 5l-9-6 7-5 9 5zm-7 5l-9-6 7-5 10 5z"/><path fill="#90cc0c" d="M1390 610l-9-4 8-7 9 4zm-15 2l-8-5 7-6 9 4zm-14 2l-9-5 7-7 9 5zm-52 18l-9-5 8-6 9 5z"/><path fill="#7ecc18" d="M1413 612l-9-4 7-7 9 4zm-89 19l-9-5 8-6 9 5z"/><path fill="#00bac6" d="M1621 622l-8-3 7-7 8 2zm-86 3l-7-4 7-7 8 3zm-26 7l-10-5 8-7 9 5zm-26 6l-8-3 7-7 7 4z"/><path fill="#06c6a8" d="M1507 621l-10-4 8-7 9 4z"/><path fill="#5acc2a" d="M1436 615l-9-5 7-7 9 5zm-30 3l-9-4 8-7 9 4z"/><path fill="#00b4c6" d="M1602 623l-8-3 6-7 8 3zm-22 1l-10-4 6-7 10 3zm-25-1l-7-3 7-7 7 3zm73 1l-8-3 7-7 7 3zm-106 4l-7-3 7-7 8 3z"/><path fill="#78cc1e" d="M1398 614l-9-4 8-7 9 4zm-44 6l-9-5 8-7 8 5zm-37 17l-9-6 8-6 9 6z"/><path fill="#60cc2a" d="M1421 616l-9-4 7-7 9 5zm-126 37l-9-6 7-5 9 6zm-7 4l-9-5 8-5 9 5zm-6 5l-9-6 7-5 9 6zm-7 5l-9-6 7-5 10 6zm-7 5l-9-6 8-5 9 5z"/><path fill="#72cc1e" d="M1384 616l-10-4 8-7 9 4zm-15 2l-9-5 7-6 9 4z"/><path fill="#00aec6" d="M1608 626l-7-3 6-8 8 3zm-46 0l-8-3 7-7 8 2zm27 1l-10-4 6-7 11 4zm47 0l-9-3 7-7 8 2zm-94 0l-7-3 7-7 7 3zm101 2l-8-2 6-8 8 3zm8 3l-9-3 7-7 8 2zm8 2l-9-2 6-8 9 3zm7 3l-8-3 6-7 8 2zm-164 1l-10-4 8-7 10 4z"/><path fill="#2acc42" d="M1444 619l-9-5 7-6 9 5zm-59 8l-9-5 7-7 9 5z"/><path fill="#96cc06" d="M1346 615l-9-5 8-6 9 5z"/><path fill="#36cc36" d="M1429 621l-9-5 7-7 10 5z"/><path fill="#00a8c6" d="M1615 628l-7-3 6-7 8 3zm-100 7l-7-4 8-7 7 3z"/><path fill="#06a2c6" d="M1569 629l-8-3 7-8 8 3zm-20 1l-8-3 7-7 8 3z"/><path fill="#54cc2a" d="M1392 620l-9-4 7-7 9 5zm-60 16l-9-5 8-6 9 5z"/><path fill="#06cc5a" d="M1453 624l-10-5 7-7 9 5zm-142 39l-9-6 7-5 10 5zm-6 5l-9-6 7-5 9 5zm-7 4l-9-5 7-6 10 6zm-6 5l-10-6 8-5 9 6zm-7 5l-10-6 8-5 9 6z"/><path fill="#00a2c6" d="M1596 630l-8-3 7-8 7 3z"/><path fill="#3ccc36" d="M1415 623l-10-5 8-7 9 5z"/><path fill="#069cc6" d="M1623 631l-8-3 6-7 8 3zm-47 1l-8-3 7-8 8 3zm27 0l-8-3 6-7 8 3zm27 2l-8-3 6-8 8 3zm8 2l-9-3 7-7 8 3zm7 3l-8-3 6-8 9 3zm8 2l-9-3 7-7 8 3zm-145 1l-7-4 8-7 7 3z"/><path fill="#4ecc30" d="M1377 623l-9-5 7-7 9 5z"/><path fill="#12cc54" d="M1438 625l-9-5 7-6 9 5zm-30 4l-9-5 7-7 10 5zm-83 23l-9-5 9-7 9 6z"/><path fill="#06a8c6" d="M1529 631l-8-3 8-7 7 3z"/><path fill="#30cc3c" d="M1400 625l-9-5 7-7 9 5zm-97 33l-9-6 7-5 9 6zm-6 4l-10-5 8-5 9 5zm-7 5l-9-6 7-5 9 6zm-7 5l-9-6 8-5 9 6zm-7 5l-9-6 8-5 9 5z"/><path fill="#06cc7e" d="M1461 628l-9-5 6-6 10 4zm-104 22l-9-5 8-7 9 5z"/><path fill="#90c612" d="M1339 620l-9-5 8-6 9 6z"/><path fill="#0696c6" d="M1556 633l-8-3 7-8 8 3zm27 1l-8-3 7-8 7 3zm-48 0l-7-3 7-8 8 4zm75 1l-8-3 6-7 8 3zm-88 3l-7-3 7-8 8 3z"/><path fill="#4ecc2a" d="M1362 625l-9-6 8-6 8 5z"/><path fill="#18cc4e" d="M1423 627l-9-5 7-7 9 5z"/><path fill="#06cc72" d="M1446 629l-9-4 7-7 9 5zm-75 10l-9-5 8-6 9 5z"/><path fill="#068ac6" d="M1562 636l-7-3 7-8 8 3zm-20 1l-7-3 7-8 8 4zm55 3l-8-3 7-8 7 3zm27 0l-8-2 6-8 9 3zm-95 1l-8-3 8-8 7 4z"/><path fill="#06cca2" d="M1470 632l-10-5 7-6 9 5zm-112 28l-9-5 8-6 9 5z"/><path fill="#24cc42" d="M1370 629l-9-5 8-7 9 5zm-30 12l-9-6 8-6 9 6z"/><path fill="#0690c6" d="M1589 637l-7-3 7-8 7 3zm28 1l-8-3 6-8 8 3z"/><path fill="#06cc6c" d="M1432 631l-10-5 7-6 10 4zm-98 26l-10-5 9-7 9 5z"/><path fill="#0ccc5a" d="M1393 631l-9-5 7-7 10 5zm-37 9l-9-5 8-6 9 5z"/><path fill="#0684c6" d="M1569 639l-7-3 7-8 7 3zm-20 1l-8-3 8-8 7 3zm55 3l-8-4 6-8 8 3z"/><path fill="#06cc96" d="M1455 634l-10-5 7-7 10 5zm-83 15l-9-5 8-7 9 5zm-63 38l-10-6 7-5 10 5zm-7 5l-10-6 8-5 9 5z"/><path fill="#06d25a" d="M1378 633l-9-5 8-7 9 5z"/><path fill="#06d28a" d="M1440 635l-10-5 8-6 9 5z"/><path fill="#067ec6" d="M1576 642l-8-4 8-8 7 3z"/><path fill="#00d2c0" d="M1464 638l-10-5 7-6 9 5z"/><path fill="#0678c6" d="M1556 643l-8-3 8-8 7 3z"/><path fill="#06d27e" d="M1386 638l-9-5 8-7 9 4z"/><path fill="#0678cc" d="M1583 644l-8-3 7-8 8 3zm-47 1l-8-4 7-8 8 4zm82 3l-8-3 7-8 8 3zm-96 1l-8-4 8-8 8 4zm104 2l-8-3 6-9 9 3zm8 2l-9-3 7-8 8 3zm8 3l-9-3 7-8 8 3zm8 3l-9-3 6-9 9 3zm-199 1l-7-4 7-7 7 4zm-33 12l-8-4 8-7 7 4zm-7 6l-8-4 8-7 7 4zm-21 9l-8-4 8-7 8 4zm-21 7l-7-3 7-6 7 4zm-6 6l-7-4 7-6 7 4zm-6 5l-8-4 7-6 8 4zm-7 5l-7-4 7-6 8 4zm-6 6l-8-4 7-6 8 4z"/><path fill="#cc9c06" d="M1240 621l-8-5 7-4 8 4zm-7 4l-8-5 7-4 9 4zm-7 4l-8-4 8-5 8 4zm-7 4l-8-4 8-5 8 5zm-7 5l-8-5 8-5 8 5z"/><path fill="#00d2b4" d="M1449 640l-10-5 7-7 10 5z"/><path fill="#068acc" d="M1632 643l-9-3 7-8 8 3zm-117 2l-7-4 7-7 8 3zm125 1l-9-3 6-8 9 3zm8 2l-9-3 6-7 9 3zm7 3l-8-3 6-8 9 3zm-198 3l-7-4 7-7 7 4zm-46 14l-7-4 7-7 8 4zm-21 9l-7-4 8-7 7 4zm-47 30l-7-5 7-5 8 4zm-6 5l-8-4 8-6 7 4z"/><path fill="#00aecc" d="M1489 642l-7-4 7-7 7 4zm-121 33l-10-5 8-7 10 5zm-18 9l-8-4 7-6 8 4zm-7 5l-7-4 7-6 7 4zm-6 5l-8-4 8-6 7 4zm-7 5l-7-4 7-6 8 4zm-7 5l-7-4 8-6 7 4z"/><path fill="#cc6006" d="M1189 618l-8-4 8-5 8 4zm-7 4l-8-4 8-5 8 4z"/><path fill="#00b4cc" d="M1470 641l-7-3 6-7 8 4zm-72 20l-10-5 8-6 10 4z"/><path fill="#06cc84" d="M1410 639l-10-4 8-7 9 4zm-60 16l-10-5 8-6 10 5z"/><path fill="#ccc006" d="M1262 625l-9-5 9-5 9 4zm-13 9l-9-5 7-5 9 5zm-7 4l-9-5 8-5 8 5zm-7 5l-9-6 8-4 9 5zm-7 4l-9-5 8-5 9 5z"/><path fill="#0672cc" d="M1563 646l-8-3 7-8 8 3zm27 1l-8-3 7-8 8 3zm-106 11l-8-4 7-7 8 3zm-80 26l-8-4 8-7 8 4zm-22 9l-7-4 8-7 8 4z"/><path fill="#067ecc" d="M1611 645l-8-3 6-8 8 3zm-134 9l-7-3 6-8 8 4zm-13 3l-7-3 7-8 7 4zm-26 6l-10-5 7-7 10 5zm-14 3l-7-4 8-7 7 4zm-27 14l-8-4 8-7 8 4zm-21 9l-8-3 9-8 7 4z"/><path fill="#cc8a06" d="M1226 621l-9-4 8-5 8 4zm-7 4l-9-4 8-5 8 4zm-7 4l-9-4 8-5 9 5zm-7 5l-9-5 8-5 9 5z"/><path fill="#2acc3c" d="M1348 635l-9-5 8-6 9 5z"/><path fill="#cc5a06" d="M1175 618l-8-4 8-4 8 4z"/><path fill="#aecc06" d="M1285 629l-8-5 8-6 9 5zm-8 5l-8-5 8-6 9 5zm-6 4l-9-5 8-5 8 5z"/><path fill="#069ccc" d="M1661 644l-9-3 6-8 9 3zm-165 1l-8-4 7-7 8 4zm-32 3l-8-4 7-7 8 4zm-60 17l-7-4 8-7 7 4zm-20 8l-10-5 8-6 10 4zm-28 14l-7-4 7-5 7 4zm-6 5l-8-4 8-5 7 4zm-7 6l-7-5 7-5 8 4zm-6 5l-8-4 8-6 7 4zm-7 5l-7-4 7-6 8 4z"/><path fill="#06d2a2" d="M1434 642l-10-5 7-7 10 5z"/><path fill="#cc7806" d="M1211 621l-8-4 8-5 8 4zm-7 4l-8-4 8-5 8 5zm-7 5l-8-5 8-4 8 4z"/><path fill="#066ccc" d="M1542 648l-7-4 7-8 8 3zm55 2l-8-3 7-8 8 3zm-126 11l-8-4 7-7 8 3zm-40 8l-7-4 7-6 8 4zm-55 29l-7-4 7-6 7 4zm-6 5l-8-4 7-6 8 4zm-6 6l-8-4 7-6 8 4zm-7 5l-8-4 8-6 7 4zm-7 6l-7-5 7-6 8 4z"/><path fill="#06cc90" d="M1395 641l-10-4 8-7 9 4zm-16 2l-9-5 8-6 9 5zm-44 24l-10-5 9-7 9 6zm-7 5l-9-5 7-6 9 6zm-6 5l-10-5 8-6 9 5zm-7 5l-9-6 7-5 10 5z"/><path fill="#ccae06" d="M1248 625l-9-5 8-5 8 5zm-7 4l-9-5 8-4 8 4zm-7 5l-9-5 8-5 9 5z"/><path fill="#06a2cc" d="M1477 645l-8-4 7-7 7 4z"/><path fill="#00bad2" d="M1457 644l-9-5 7-6 9 5zm-37 10l-9-5 7-7 10 5z"/><path fill="#0666cc" d="M1570 649l-8-3 7-8 8 3zm-41 3l-8-4 8-8 7 4zm76 1l-8-3 6-9 8 3zm-147 11l-8-4 7-7 8 4zm-14 3l-7-4 7-7 8 4zm-20 8l-7-4 7-7 8 4zm-7 6l-7-4 8-7 7 4zm-21 9l-7-4 8-7 7 4zm-7 6l-7-3 8-8 7 4z"/><path fill="#cc6c06" d="M1197 622l-8-5 7-4 9 4zm-7 4l-9-4 8-5 9 4z"/><path fill="#c6cc06" d="M1270 629l-9-4 9-6 8 5zm-7 5l-9-5 8-5 8 5zm-7 4l-8-5 7-5 9 5zm-6 5l-9-5 7-5 9 5zm-7 4l-9-5 8-5 8 5zm-7 5l-9-5 8-5 8 5z"/><path fill="#06cc9c" d="M1418 643l-9-4 7-7 10 4zm-53 11l-9-5 8-6 9 5z"/><path fill="#0660cc" d="M1549 651l-7-4 7-8 8 3zm63 5l-8-4 7-8 8 3zm8 2l-9-3 7-8 9 3zm8 3l-9-3 7-9 9 3zm8 3l-9-3 7-9 9 3zm8 3l-9-3 7-9 8 3zm-234 20l-7-4 8-7 7 4zm-27 15l-8-4 7-6 8 4zm-6 5l-8-4 7-6 8 4zm-7 5l-7-4 7-6 7 4zm-6 6l-8-4 7-6 8 4zm-7 5l-7-4 7-6 8 4z"/><path fill="#068ad2" d="M1503 648l-8-4 7-7 7 4z"/><path fill="#00ccd2" d="M1442 646l-9-5 7-7 9 5z"/><path fill="#0690cc" d="M1483 648l-7-4 7-7 7 4zm-13 3l-7-4 7-7 7 4zm-26 6l-9-5 7-7 10 5zm-26 5l-7-4 7-6 7 4zm-49 24l-10-5 9-7 9 5z"/><path fill="#065acc" d="M1577 652l-8-3 7-9 8 4zm7 3l-8-3 7-9 8 3zm-48 0l-8-3 8-9 7 4zm-59 9l-7-4 7-7 7 4zm-39 9l-8-4 8-7 7 4zm-7 6l-8-4 8-7 8 4zm-28 15l-7-4 8-7 7 4z"/><path fill="#ccba06" d="M1255 629l-8-5 7-4 9 5z"/><path fill="#06cca8" d="M1403 645l-9-4 7-7 10 4z"/><path fill="#06cc78" d="M1364 644l-9-5 8-6 9 5zm-38 19l-9-5 8-7 10 5zm-6 4l-10-5 8-5 9 5zm-7 5l-9-5 7-5 10 5zm-6 5l-10-5 8-6 9 6zm-7 5l-9-5 7-6 9 5zm-7 5l-9-5 7-6 10 5z"/><path fill="#0654cc" d="M1556 654l-8-4 8-8 8 3zm35 4l-8-4 7-8 8 3zm-127 9l-7-4 7-7 7 4zm-13 3l-7-4 7-7 7 4zm-27 15l-7-4 7-7 8 4zm-28 15l-8-4 8-7 8 4zm-6 5l-8-4 7-6 8 4zm-6 6l-8-5 7-5 8 4zm-7 5l-7-4 7-6 7 4zm-6 6l-8-5 7-6 8 4zm-7 5l-8-4 8-6 8 4z"/><path fill="#0678d2" d="M1509 651l-7-3 6-7 8 3zm-12 3l-8-3 7-7 7 3z"/><path fill="#00d2cc" d="M1427 648l-10-5 8-7 9 5z"/><path fill="#0684cc" d="M1490 651l-8-4 7-7 8 4zm-86 23l-7-4 7-7 8 4zm-21 9l-7-4 8-7 7 4zm-20 8l-8-4 7-6 8 4zm-7 5l-7-4 7-6 8 4zm-6 5l-7-4 7-6 7 4z"/><path fill="#8acc12" d="M1301 638l-9-5 9-6 9 4z"/><path fill="#00cca8" d="M1388 647l-10-4 8-7 10 5z"/><path fill="#06a2d2" d="M1451 651l-10-5 7-7 10 5z"/><path fill="#48cc30" d="M1325 642l-9-6 8-6 9 5z"/><path fill="#00ccc6" d="M1412 649l-10-4 8-7 9 4zm-16 2l-9-4 8-7 9 5zm-29 13l-10-5 8-6 10 5z"/><path fill="#06cc60" d="M1349 645l-10-5 8-6 10 5z"/><path fill="#0666d2" d="M1516 655l-7-4 6-7 8 4zm-13 3l-7-4 7-7 7 4z"/><path fill="#064ecc" d="M1563 657l-8-4 8-8 8 3zm-20 1l-8-3 7-9 8 4zm55 2l-8-3 7-8 8 3zm-101 4l-7-3 6-8 8 4zm-80 27l-7-4 7-7 8 4zm-7 6l-8-4 8-7 8 4z"/><path fill="#00aed2" d="M1436 652l-10-5 7-7 10 5z"/><path fill="#6ccc24" d="M1309 642l-9-5 9-6 9 5z"/><path fill="#18cc48" d="M1333 647l-9-6 8-6 9 5z"/><path fill="#0654d2" d="M1523 658l-8-4 7-7 7 4zm-13 3l-7-4 6-7 8 4z"/><path fill="#0642cc" d="M1570 660l-8-3 8-9 8 3zm-40 1l-8-3 7-7 7 3zm-59 10l-7-4 7-8 7 4zm-47 23l-8-4 8-7 8 4zm-7 6l-8-3 8-7 8 3zm-7 7l-8-4 8-7 8 4z"/><path fill="#84cc12" d="M1293 643l-9-5 9-6 9 5z"/><path fill="#063ccc" d="M1550 661l-8-3 7-9 8 4zm28 2l-8-4 7-8 8 3zm-61 2l-8-4 7-7 8 3zm-13 3l-8-4 7-7 8 3zm-100 44l-8-4 7-6 8 4zm-6 6l-8-4 7-6 7 3zm-7 5l-8-4 7-6 8 4zm-6 6l-8-4 7-7 8 4zm-7 5l-8-4 8-6 8 4z"/><path fill="#00ccba" d="M1381 653l-10-5 8-6 10 4zm-44 24l-10-6 7-5 10 5zm-7 5l-9-6 7-5 10 5zm-6 5l-10-6 8-5 9 5zm-7 5l-10-6 8-5 10 5zm-7 5l-9-6 7-5 10 5z"/><path fill="#42cc36" d="M1317 647l-9-5 9-6 9 5z"/><path fill="#00c0cc" d="M1405 655l-10-4 8-7 10 5zm-23 8l-9-5 8-6 9 4zm-30 14l-10-6 8-6 10 5zm-9 3l-7-4 7-5 7 4zm-6 5l-8-4 8-5 7 4zm-7 5l-7-4 7-5 7 4zm-6 5l-8-4 8-5 7 4zm-7 6l-8-5 8-5 7 4z"/><path fill="#06cc66" d="M1341 651l-9-5 8-6 9 5z"/><path fill="#0660d2" d="M1490 661l-7-4 7-7 7 4z"/><path fill="#0696cc" d="M1429 659l-10-6 8-7 9 6zm-32 12l-7-4 8-7 7 4zm-20 9l-10-6 8-6 10 5z"/><path fill="#0630cc" d="M1557 665l-8-4 7-9 8 4zm35 3l-8-3 7-9 8 4zm8 3l-9-3 7-9 9 3zm8 3l-9-3 7-9 9 3zm-130 0l-8-4 7-7 8 4zm138 3l-9-3 7-9 9 3zm8 3l-9-3 7-9 9 3zm8 3l-9-3 7-10 9 4zm-208 31l-8-4 8-7 8 4zm-6 5l-8-4 7-6 8 4zm-6 6l-8-4 7-7 8 4zm-7 5l-8-4 7-6 8 4zm-6 6l-8-4 7-6 8 4zm-6 6l-8-4 7-7 8 4z"/><path fill="#0648cc" d="M1606 663l-8-3 6-8 9 3zm8 3l-9-3 7-9 9 3zm-130 2l-7-4 7-8 7 4zm138 1l-9-3 7-9 9 3zm8 3l-9-3 7-9 9 3zm8 3l-9-4 7-8 9 3zm-193 1l-8-4 7-6 8 4zm-7 6l-8-4 8-7 7 4zm-7 6l-8-4 8-7 8 4zm-28 15l-8-3 8-8 8 4zm-6 6l-8-4 7-6 8 4zm-6 5l-8-4 7-6 8 4zm-7 6l-8-4 8-7 7 4zm-6 5l-8-4 7-6 8 4zm-7 6l-8-4 8-7 8 4z"/><path fill="#66cc24" d="M1301 648l-9-5 9-7 9 6z"/><path fill="#ccb406" d="M1227 638l-9-5 8-5 9 5zm-7 5l-9-6 8-5 9 5z"/><path fill="#00c6cc" d="M1389 657l-9-5 8-6 9 4zm-30 13l-9-5 8-6 9 5z"/><path fill="#0636cc" d="M1537 665l-8-4 7-7 7 3zm48 0l-8-3 7-8 8 3zm-94 6l-8-4 7-7 8 4zm-40 9l-7-4 7-7 8 4zm-6 6l-8-4 7-7 8 4zm-7 6l-8-4 8-7 7 4zm-7 6l-8-4 8-7 8 4zm-7 6l-8-4 8-7 8 4zm-7 6l-8-4 8-7 8 4zm-6 6l-8-4 7-6 8 3zm-6 5l-8-4 7-6 8 4zm-7 6l-8-4 7-7 8 4zm-6 5l-8-4 7-6 8 4zm-6 6l-8-4 7-6 8 4z"/><path fill="#06a8cc" d="M1411 659l-7-4 8-7 7 4zm-51 22l-9-5 8-7 10 5z"/><path fill="#062acc" d="M1564 668l-8-4 7-8 8 3zm-40 0l-8-4 7-7 8 4zm-13 3l-8-4 7-7 8 4zm-66 24l-8-4 8-7 7 4zm-7 6l-8-4 8-7 8 4zm-7 6l-8-4 8-7 8 4z"/><path fill="#00ccc0" d="M1374 659l-10-5 8-7 10 5z"/><path fill="#0624cc" d="M1544 668l-8-4 6-7 8 4zm27 2l-8-3 7-9 8 4zm-73 5l-8-4 7-8 8 4zm-13 3l-8-4 7-8 8 4zm-27 5l-8-4 8-6 7 4zm-6 6l-8-4 7-6 8 4zm-14 22l-8-4 8-7 8 4zm-7 6l-8-4 8-7 8 4zm-6 6l-8-4 7-6 8 3zm-6 5l-8-4 7-6 8 4zm-6 6l-8-4 7-7 8 5zm-7 6l-8-4 7-7 8 4zm-6 6l-8-5 7-6 8 4z"/><path fill="#36cc3c" d="M1310 653l-10-5 9-7 9 6z"/><path fill="#061ecc" d="M1551 671l-8-3 6-8 8 4zm-20 0l-8-3 7-8 8 4zm47 2l-8-3 7-9 9 3zm8 3l-9-3 8-9 8 3zm-114 5l-8-4 7-7 8 3zm-20 18l-8-4 8-7 7 4zm-7 6l-8-4 8-7 8 4zm-7 16l-8-4 8-7 8 4zm-6 5l-8-4 7-6 8 4zm-6 6l-8-4 7-7 8 4zm-6 6l-8-5 7-6 8 4zm-6 5l-8-4 7-6 8 4zm-7 6l-8-4 7-6 8 4z"/><path fill="#0ccc54" d="M1318 658l-9-5 8-7 9 6z"/><path fill="#06cc8a" d="M1342 661l-9-5 8-6 9 5z"/><path fill="#0612cc" d="M1558 674l-8-3 7-8 8 4zm-20 1l-8-4 7-7 8 3zm-46 6l-8-4 7-7 8 4zm-14 4l-7-4 7-8 8 4zm-19 17l-8-4 7-7 8 4zm-7 16l-8-4 8-7 8 4zm1 10l-8-4 7-7 8 4zm-6 5l-8-4 6-6 8 4zm-6 6l-8-4 6-6 9 4zm-6 6l-9-4 7-7 9 4zm-6 6l-9-4 7-7 9 4z"/><path fill="#0618cc" d="M1518 675l-8-4 7-7 8 3zm-13 3l-8-4 7-7 8 4zm89 1l-9-3 7-9 9 3zm7 3l-8-3 7-9 9 3zm8 3l-9-3 8-9 9 3zm-144 2l-8-4 8-7 7 4zm153 1l-10-3 8-9 9 3zm8 3l-9-3 7-9 9 3zm-167 2l-8-4 7-7 8 4zm-7 15l-8-4 8-7 8 4zm-7 6l-8-4 8-7 8 4zm0 10l-8-4 8-7 8 4zm-5 6l-9-4 7-7 8 4zm-7 5l-8-4 7-6 8 4zm-6 6l-8-4 7-6 8 4zm-6 6l-8-4 7-7 8 5zm-6 6l-9-4 8-7 8 4z"/><path fill="#06aecc" d="M1391 667l-10-5 8-6 10 4z"/><path fill="#0642d2" d="M1458 674l-8-4 8-7 7 3z"/><path fill="#06ccae" d="M1351 666l-10-5 8-7 10 5z"/><path fill="#060ccc" d="M1565 678l-8-4 7-8 8 4zm-40 0l-8-4 7-7 8 4zm-59 18l-8-4 7-6 8 4zm-7 16l-8-4 8-7 8 4zm1 9l-8-4 7-6 8 4z"/><path fill="#0606cc" d="M1545 678l-8-4 7-7 8 4zm28 3l-8-4 6-8 8 3zm-41 1l-8-4 7-8 8 4zm-20 0l-8-4 7-8 8 4zm68 2l-8-4 6-8 8 3zm-81 1l-8-4 7-8 8 4zm-14 3l-7-4 7-7 8 3zm-13 2l-8-4 7-6 8 4zm-6 16l-8-4 7-7 8 4zm-6 26l-8-5 8-7 8 5zm-6 6l-8-5 7-6 8 5zm-6 6l-8-5 7-7 8 5zm-6 6l-8-6 7-6 8 5zm-6 6l-8-6 7-6 8 5z"/><path fill="#00bacc" d="M1375 669l-10-5 9-7 9 5z"/><path fill="#0630d2" d="M1465 678l-8-4 7-8 8 4z"/><path fill="#0606c6" d="M1552 682l-8-4 7-8 8 4zm-33 3l-8-4 7-7 8 3zm69 2l-9-3 6-9 9 3zm-82 2l-8-5 7-7 8 4zm90 1l-9-4 6-8 9 3zm8 3l-9-4 6-8 9 3zm-125 1l-8-4 7-7 8 4zm133 2l-9-3 6-9 9 3zm8 3l-9-3 6-9 9 3zm-147 1l-8-4 7-7 8 4zm0 9l-8-4 8-6 8 4zm-7 6l-8-4 8-7 8 4zm1 11l-8-5 7-7 9 5z"/><path fill="#0606c0" d="M1560 685l-8-4 6-8 8 4zm-21 0l-8-4 7-7 8 3zm-47 7l-7-4 7-8 8 4zm-18 28l-8-5 7-7 8 5z"/><path fill="#00ccb4" d="M1343 672l-9-5 8-7 9 5z"/><path fill="#0606ba" d="M1567 688l-8-4 6-8 8 4zm-20 1l-8-4 6-8 8 4zm-21 0l-8-4 7-8 8 4zm-13 3l-8-4 7-8 8 4zm-13 4l-8-5 7-7 8 4zm-20 17l-8-4 8-7 8 5zm-13 24l-8-5 8-7 8 5zm-5 6l-9-5 7-7 8 5zm-6 6l-9-6 7-6 8 5zm-6 6l-9-6 7-6 8 5z"/><path fill="#0006b4" d="M1574 692l-8-4 7-9 8 4zm-100 38l-8-5 8-7 8 5z"/><path fill="#0000b4" d="M1533 692l-8-4 7-8 8 4zm-40 9l-8-4 7-6 8 4z"/><path fill="#0006ba" d="M1486 697l-8-4 7-6 8 4z"/><path fill="#0006c0" d="M1480 703l-8-4 7-6 8 4z"/><path fill="#0606b4" d="M1487 707l-8-4 7-7 8 5z"/><path fill="#000060" d="M1557 716l-9-5 7-9 8 4z"/><path fill="#000066" d="M1536 715l-8-4 6-9 9 5z"/><path fill="#000042" d="M1551 724l-9-5 7-9 8 5zm-13 2l-8-5 6-7 8 5zm-29 21l-9-7 7-7 8 6z"/><path fill="#00003c" d="M1559 727l-9-4 7-9 9 4zm8 3l-9-3 7-10 9 4zm-34 2l-9-5 6-7 9 5zm42 2l-9-4 7-9 9 3zm9 3l-10-4 7-9 9 4zm8 4l-9-4 6-10 10 4zm-89 12l-8-7 6-7 8 7z"/><path fill="#000036" d="M1545 730l-8-5 6-7 8 5zm-18 9l-8-6 6-7 8 6z"/><path fill="#00002a" d="M1554 734l-10-4 6-8 9 4zm8 3l-9-4 5-7 10 3zm8 4l-9-4 6-8 9 4zm8 3l-9-4 6-8 9 4zm-56 2l-9-7 7-7 8 6zm65 1l-10-3 6-8 10 4z"/><path fill="#00004e" d="M1520 734l-8-6 6-7 8 6z"/><path fill="#00001e" d="M1548 741l-9-4 6-8 9 4zm9 3l-10-4 6-7 9 3zm8 4l-9-4 5-8 10 4zm8 3l-9-4 6-8 9 4zm9 4l-10-4 6-8 10 4z"/><path fill="#000012" d="M1543 748l-9-4 6-8 9 4zm-14 3l-8-6 6-7 8 5zm22 0l-9-4 6-8 9 4zm9 4l-10-4 6-8 10 4z"/></g></g><path d="M860.1,472.2L866.3,472.1L872.6,472.5L879.3,473.9L886.2,476.2L893.4,479.3L900.6,482.4L908.0,485.6L915.4,488.8L922.9,491.8L930.5,494.6L938.1,496.9L945.8,499.0L953.6,500.7L961.4,502.3L969.4,504.0L977.6,506.2L986.0,508.9L994.5,511.4L1003.2,513.8L1012.0,516.9L1021.0,520.2L1030.2,523.9L1039.6,527.8L1049.1,531.7L1058.8,535.7L1068.6,539.6L1078.6,543.7L1088.7,547.7L1099.0,551.7L1109.5,555.7L1120.2,559.7L1131.0,563.6L1142.0,567.6L1153.3,572.2L1164.8,576.9L1176.4,582.1L1188.3,587.5L1200.5,593.2L1212.8,599.1L1225.4,605.1L1238.2,611.6L1251.2,618.5L1264.5,626.0L1278.0,633.8L1291.7,641.7L1305.7,650.2L1319.9,658.6L1334.4,666.5L1349.1,674.5L1364.1,682.7L1379.4,690.8L1395.0,699.0L1411.0,706.8L1427.2,714.7L1443.8,722.8L1460.6,732.1L1477.7,742.9L1494.8,757.0L1512.0,772.5" stroke="#3a2a10" stroke-opacity="0.55" stroke-width="1" fill="none"/><path d="M1512.0,772.5L1518.8,763.7L1525.5,755.1L1532.1,746.7L1538.6,738.4L1544.9,730.2L1551.2,722.2L1557.3,713.8L1563.4,705.6L1569.4,697.5L1575.3,689.6L1581.0,681.8L1586.7,674.3L1592.1,667.5L1597.5,660.9L1602.8,654.4L1608.0,648.0L1613.1,641.7L1618.1,635.5L1623.0,629.8L1627.8,624.1L1632.6,618.5L1637.2,613.0L1641.8,607.6L1646.3,602.5L1650.6,597.9L1654.9,593.3L1659.1,588.7L1663.3,584.3L1667.3,579.9L1671.4,575.2L1675.5,570.3L1679.5,565.5L1683.4,560.7L1687.3,556.0L1691.1,551.4L1694.7,547.8L1698.1,544.8L1701.5,541.9L1704.9,539.1L1708.2,536.2L1711.4,533.5L1714.6,530.5L1717.8,527.5L1721.0,524.5L1724.1,521.6L1727.1,518.7L1730.1,515.8L1732.9,514.0L1735.6,512.5L1738.3,511.1L1740.9,509.6L1743.4,508.2L1746.0,506.8L1748.7,503.9L1751.5,500.9L1754.3,497.9L1757.0,495.0L1759.6,492.1L1762.3,489.2" stroke="#101020" stroke-opacity="0.6" stroke-width="1" fill="none"/><path d="M1064.1,375.6L1070.0,377.2L1076.0,378.9L1082.0,380.6L1088.1,382.3L1094.3,384.1L1100.5,385.8L1106.8,387.6L1113.1,389.4L1119.5,391.2L1126.0,393.1L1132.5,394.9L1139.1,396.8L1145.8,398.7L1152.5,400.6L1159.3,402.5L1166.2,404.4L1173.2,406.4L1180.2,408.4L1187.3,410.4L1194.5,412.4L1201.8,414.5L1209.1,416.6L1216.5,418.7L1224.1,420.8L1231.6,423.0L1239.3,425.1L1247.1,427.3L1254.9,429.5L1262.9,431.8L1270.9,434.1L1279.0,436.3L1287.2,438.7L1295.5,441.0L1303.9,443.4L1312.4,445.8L1321.0,448.2L1329.7,450.7L1338.5,453.2L1347.4,455.7L1356.5,458.3L1365.6,460.9L1374.8,463.5L1384.2,466.1L1393.7,468.8L1403.3,471.5L1413.0,474.3L1422.8,477.0L1432.8,479.9L1442.9,482.7L1453.1,485.6L1463.4,488.5L1473.9,491.5L1484.5,494.5L1495.3,497.5L1506.2,500.6L1517.3,503.8L1528.5,506.9L1539.8,510.1L1551.3,513.4L1563.0,516.7L1574.8,520.0L1586.8,523.4L1599.0,526.9L1611.3,530.4L1623.8,533.9L1636.5,537.5L1649.4,541.1L1662.4,544.8L1675.7,548.6L1671.2,575.5L1658.2,571.1L1645.4,566.8L1632.7,563.0L1620.2,559.3L1607.9,555.4L1595.7,551.6L1583.8,547.7L1572.0,543.8L1560.4,539.1L1549.0,534.3L1537.8,529.2L1526.8,524.1L1515.8,519.0L1505.0,514.0L1494.4,508.8L1483.8,503.6L1473.4,498.4L1463.1,493.2L1452.9,488.9L1442.7,485.0L1432.7,481.6L1422.7,478.3L1412.9,475.2L1403.2,472.1L1393.7,469.2L1384.2,466.6L1374.8,464.0L1365.6,461.6L1356.4,459.2L1347.4,456.8L1338.5,454.4L1329.7,452.0L1321.0,449.5L1312.4,447.1L1303.9,444.7L1295.5,442.3L1287.2,439.9L1279.0,437.6L1270.9,435.3L1262.9,433.2L1254.9,431.0L1247.1,428.7L1239.4,426.6L1231.7,424.7L1224.1,422.8L1216.6,421.3L1209.3,419.9L1202.0,419.0L1194.8,418.1L1187.7,417.3L1180.7,416.5L1173.7,415.5L1166.8,414.7L1160.1,414.0L1153.3,413.1L1146.7,411.8L1140.1,410.6L1133.6,410.0L1127.2,409.4L1120.8,408.4L1114.6,407.4L1108.3,406.5L1102.2,405.5L1096.1,404.3L1090.0,403.1L1084.1,402.3L1078.2,401.5L1072.3,400.2L1066.5,398.9Z" fill="#fff" fill-opacity="0.62"/><path d="M1064.1,375.6 L1675.7,548.6" stroke="#000" stroke-width="0.7" fill="none"/><defs><linearGradient id="pg" x1="0" y1="0" x2="1" y2="0"><stop offset="0" stop-color="#f4f4f4"/><stop offset="1" stop-color="#9a9a9a"/></linearGradient><radialGradient id="pr" cx="0.4" cy="0.35" r="0.7"><stop offset="0" stop-color="#fff"/><stop offset="1" stop-color="#a8a8a8"/></radialGradient></defs><rect x="1064.5" y="375.6" width="4" height="23.4" fill="url(#pg)"/><circle cx="1063.6" cy="374.6" r="5.2" fill="url(#pr)" stroke="#8a8a8a" stroke-width="0.6"/></svg>
<div style="left:943px;top:780px;width:757px;height:530px;background:#fff;border:1px solid #000;box-sizing:border-box;"></div><svg style="position:absolute;left:943px;top:780px" width="757" height="530" viewBox="943 780 757 530" shape-rendering="crispEdges"><rect x="1100.4" y="810.6" width="452.29999999999995" height="327.4" fill="#000"/><rect x="1134.8" y="851.3" width="10.3" height="24.9" fill="#000"/><rect x="1144.8" y="851.3" width="10.3" height="24.9" fill="#a87070"/><rect x="1154.8" y="851.3" width="10.3" height="24.9" fill="#c08a3a"/><rect x="1164.7" y="851.3" width="10.3" height="24.9" fill="#c08a3a"/><rect x="1174.7" y="851.3" width="10.3" height="24.9" fill="#c08a3a"/><rect x="1184.7" y="851.3" width="10.3" height="24.9" fill="#4483c9"/><rect x="1194.7" y="851.3" width="10.3" height="24.9" fill="#4887cc"/><rect x="1204.6" y="851.3" width="10.3" height="24.9" fill="#4c8bcf"/><rect x="1214.6" y="851.3" width="10.3" height="24.9" fill="#5190d4"/><rect x="1224.6" y="851.3" width="10.3" height="24.9" fill="#5896d9"/><rect x="1234.6" y="851.3" width="10.3" height="24.9" fill="#5f9cde"/><rect x="1244.5" y="851.3" width="10.3" height="24.9" fill="#64a2e2"/><rect x="1254.5" y="851.3" width="10.3" height="24.9" fill="#68a6e6"/><rect x="1264.5" y="851.3" width="10.3" height="24.9" fill="#6ca9e8"/><rect x="1274.5" y="851.3" width="10.3" height="24.9" fill="#6eabea"/><rect x="1284.5" y="851.3" width="10.3" height="24.9" fill="#6eabea"/><rect x="1294.4" y="851.3" width="10.3" height="24.9" fill="#6daae9"/><rect x="1304.4" y="851.3" width="10.3" height="24.9" fill="#6ba8e8"/><rect x="1314.4" y="851.3" width="10.3" height="24.9" fill="#6aa7e7"/><rect x="1324.4" y="851.3" width="10.3" height="24.9" fill="#68a6e6"/><rect x="1334.3" y="851.3" width="10.3" height="24.9" fill="#67a5e5"/><rect x="1344.3" y="851.3" width="10.3" height="24.9" fill="#65a3e3"/><rect x="1354.3" y="851.3" width="10.3" height="24.9" fill="#62a0e1"/><rect x="1364.3" y="851.3" width="10.3" height="24.9" fill="#5f9cde"/><rect x="1374.3" y="851.3" width="10.3" height="24.9" fill="#5b99db"/><rect x="1384.2" y="851.3" width="10.3" height="24.9" fill="#5896d9"/><rect x="1394.2" y="851.3" width="10.3" height="24.9" fill="#5492d5"/><rect x="1404.2" y="851.3" width="10.3" height="24.9" fill="#4f8ed2"/><rect x="1414.2" y="851.3" width="10.3" height="24.9" fill="#4c8bcf"/><rect x="1424.1" y="851.3" width="10.3" height="24.9" fill="#4988cd"/><rect x="1434.1" y="851.3" width="10.3" height="24.9" fill="#4686cb"/><rect x="1444.1" y="851.3" width="10.3" height="24.9" fill="#4584ca"/><rect x="1454.1" y="851.3" width="10.3" height="24.9" fill="#4382c8"/><rect x="1464.0" y="851.3" width="10.3" height="24.9" fill="#c08a3a"/><rect x="1474.0" y="851.3" width="10.3" height="24.9" fill="#652868"/><rect x="1134.8" y="875.9" width="10.3" height="24.9" fill="#a2a224"/><rect x="1144.8" y="875.9" width="10.3" height="24.9" fill="#a87070"/><rect x="1154.8" y="875.9" width="10.3" height="24.9" fill="#652868"/><rect x="1164.7" y="875.9" width="10.3" height="24.9" fill="#c08a3a"/><rect x="1174.7" y="875.9" width="10.3" height="24.9" fill="#c08a3a"/><rect x="1184.7" y="875.9" width="10.3" height="24.9" fill="#4483c9"/><rect x="1194.7" y="875.9" width="10.3" height="24.9" fill="#4887cc"/><rect x="1204.6" y="875.9" width="10.3" height="24.9" fill="#4c8bcf"/><rect x="1214.6" y="875.9" width="10.3" height="24.9" fill="#5190d4"/><rect x="1224.6" y="875.9" width="10.3" height="24.9" fill="#5896d9"/><rect x="1234.6" y="875.9" width="10.3" height="24.9" fill="#5f9cde"/><rect x="1244.5" y="875.9" width="10.3" height="24.9" fill="#64a2e2"/><rect x="1254.5" y="875.9" width="10.3" height="24.9" fill="#68a6e6"/><rect x="1264.5" y="875.9" width="10.3" height="24.9" fill="#6ca9e8"/><rect x="1274.5" y="875.9" width="10.3" height="24.9" fill="#6eabea"/><rect x="1284.5" y="875.9" width="10.3" height="24.9" fill="#6eabea"/><rect x="1294.4" y="875.9" width="10.3" height="24.9" fill="#6daae9"/><rect x="1304.4" y="875.9" width="10.3" height="24.9" fill="#6ba8e8"/><rect x="1314.4" y="875.9" width="10.3" height="24.9" fill="#6aa7e7"/><rect x="1324.4" y="875.9" width="10.3" height="24.9" fill="#68a6e6"/><rect x="1334.3" y="875.9" width="10.3" height="24.9" fill="#67a5e5"/><rect x="1344.3" y="875.9" width="10.3" height="24.9" fill="#65a3e3"/><rect x="1354.3" y="875.9" width="10.3" height="24.9" fill="#62a0e1"/><rect x="1364.3" y="875.9" width="10.3" height="24.9" fill="#5f9cde"/><rect x="1374.3" y="875.9" width="10.3" height="24.9" fill="#5b99db"/><rect x="1384.2" y="875.9" width="10.3" height="24.9" fill="#5896d9"/><rect x="1394.2" y="875.9" width="10.3" height="24.9" fill="#5492d5"/><rect x="1404.2" y="875.9" width="10.3" height="24.9" fill="#4f8ed2"/><rect x="1414.2" y="875.9" width="10.3" height="24.9" fill="#4c8bcf"/><rect x="1424.1" y="875.9" width="10.3" height="24.9" fill="#4988cd"/><rect x="1434.1" y="875.9" width="10.3" height="24.9" fill="#4686cb"/><rect x="1444.1" y="875.9" width="10.3" height="24.9" fill="#4584ca"/><rect x="1454.1" y="875.9" width="10.3" height="24.9" fill="#4382c8"/><rect x="1464.0" y="875.9" width="10.3" height="24.9" fill="#4382c8"/><rect x="1474.0" y="875.9" width="10.3" height="24.9" fill="#c08a3a"/><rect x="1134.8" y="900.4" width="10.3" height="24.9" fill="#c08a3a"/><rect x="1144.8" y="900.4" width="10.3" height="24.9" fill="#c08a3a"/><rect x="1154.8" y="900.4" width="10.3" height="24.9" fill="#c08a3a"/><rect x="1164.7" y="900.4" width="10.3" height="24.9" fill="#4a89ce"/><rect x="1174.7" y="900.4" width="10.3" height="24.9" fill="#4988cd"/><rect x="1184.7" y="900.4" width="10.3" height="24.9" fill="#4988cd"/><rect x="1194.7" y="900.4" width="10.3" height="24.9" fill="#4c8bcf"/><rect x="1204.6" y="900.4" width="10.3" height="24.9" fill="#508fd3"/><rect x="1214.6" y="900.4" width="10.3" height="24.9" fill="#5694d7"/><rect x="1224.6" y="900.4" width="10.3" height="24.9" fill="#5c9adc"/><rect x="1234.6" y="900.4" width="10.3" height="24.9" fill="#63a1e1"/><rect x="1244.5" y="900.4" width="10.3" height="24.9" fill="#68a6e6"/><rect x="1254.5" y="900.4" width="10.3" height="24.9" fill="#6daae9"/><rect x="1264.5" y="900.4" width="10.3" height="24.9" fill="#6eabea"/><rect x="1274.5" y="900.4" width="10.3" height="24.9" fill="#6eabea"/><rect x="1284.5" y="900.4" width="10.3" height="24.9" fill="#6eabea"/><rect x="1294.4" y="900.4" width="10.3" height="24.9" fill="#6eabea"/><rect x="1304.4" y="900.4" width="10.3" height="24.9" fill="#6eabea"/><rect x="1314.4" y="900.4" width="10.3" height="24.9" fill="#6eabea"/><rect x="1324.4" y="900.4" width="10.3" height="24.9" fill="#6daae9"/><rect x="1334.3" y="900.4" width="10.3" height="24.9" fill="#6ca9e8"/><rect x="1344.3" y="900.4" width="10.3" height="24.9" fill="#6aa7e7"/><rect x="1354.3" y="900.4" width="10.3" height="24.9" fill="#66a4e4"/><rect x="1364.3" y="900.4" width="10.3" height="24.9" fill="#63a1e1"/><rect x="1374.3" y="900.4" width="10.3" height="24.9" fill="#609ddf"/><rect x="1384.2" y="900.4" width="10.3" height="24.9" fill="#5c9adc"/><rect x="1394.2" y="900.4" width="10.3" height="24.9" fill="#5896d9"/><rect x="1404.2" y="900.4" width="10.3" height="24.9" fill="#5492d5"/><rect x="1414.2" y="900.4" width="10.3" height="24.9" fill="#508fd3"/><rect x="1424.1" y="900.4" width="10.3" height="24.9" fill="#4d8cd0"/><rect x="1434.1" y="900.4" width="10.3" height="24.9" fill="#4b8ace"/><rect x="1444.1" y="900.4" width="10.3" height="24.9" fill="#4988cd"/><rect x="1454.1" y="900.4" width="10.3" height="24.9" fill="#4887cc"/><rect x="1464.0" y="900.4" width="10.3" height="24.9" fill="#4887cc"/><rect x="1474.0" y="900.4" width="10.3" height="24.9" fill="#4887cc"/><rect x="1134.8" y="925.0" width="10.3" height="24.9" fill="#4382c8"/><rect x="1144.8" y="925.0" width="10.3" height="24.9" fill="#4281c8"/><rect x="1154.8" y="925.0" width="10.3" height="24.9" fill="#4180c7"/><rect x="1164.7" y="925.0" width="10.3" height="24.9" fill="#407fc6"/><rect x="1174.7" y="925.0" width="10.3" height="24.9" fill="#3f7fc5"/><rect x="1184.7" y="925.0" width="10.3" height="24.9" fill="#3f7ec5"/><rect x="1194.7" y="925.0" width="10.3" height="24.9" fill="#4281c8"/><rect x="1204.6" y="925.0" width="10.3" height="24.9" fill="#4686cb"/><rect x="1214.6" y="925.0" width="10.3" height="24.9" fill="#4c8bcf"/><rect x="1224.6" y="925.0" width="10.3" height="24.9" fill="#5291d4"/><rect x="1234.6" y="925.0" width="10.3" height="24.9" fill="#74d870"/><rect x="1244.5" y="925.0" width="10.3" height="24.9" fill="#74d870"/><rect x="1254.5" y="925.0" width="10.3" height="24.9" fill="#74d870"/><rect x="1264.5" y="925.0" width="10.3" height="24.9" fill="#74d870"/><rect x="1274.5" y="925.0" width="10.3" height="24.9" fill="#74d870"/><rect x="1284.5" y="925.0" width="10.3" height="24.9" fill="#74d870"/><rect x="1294.4" y="925.0" width="10.3" height="24.9" fill="#74d870"/><rect x="1304.4" y="925.0" width="10.3" height="24.9" fill="#74d870"/><rect x="1314.4" y="925.0" width="10.3" height="24.9" fill="#74d870"/><rect x="1324.4" y="925.0" width="10.3" height="24.9" fill="#74d870"/><rect x="1334.3" y="925.0" width="10.3" height="24.9" fill="#74d870"/><rect x="1344.3" y="925.0" width="10.3" height="24.9" fill="#74d870"/><rect x="1354.3" y="925.0" width="10.3" height="24.9" fill="#74d870"/><rect x="1364.3" y="925.0" width="10.3" height="24.9" fill="#5997da"/><rect x="1374.3" y="925.0" width="10.3" height="24.9" fill="#5694d7"/><rect x="1384.2" y="925.0" width="10.3" height="24.9" fill="#5291d4"/><rect x="1394.2" y="925.0" width="10.3" height="24.9" fill="#4e8dd1"/><rect x="1404.2" y="925.0" width="10.3" height="24.9" fill="#4a89ce"/><rect x="1414.2" y="925.0" width="10.3" height="24.9" fill="#4686cb"/><rect x="1424.1" y="925.0" width="10.3" height="24.9" fill="#4382c8"/><rect x="1434.1" y="925.0" width="10.3" height="24.9" fill="#4180c7"/><rect x="1444.1" y="925.0" width="10.3" height="24.9" fill="#3f7fc5"/><rect x="1454.1" y="925.0" width="10.3" height="24.9" fill="#3e7dc4"/><rect x="1464.0" y="925.0" width="10.3" height="24.9" fill="#c08a3a"/><rect x="1474.0" y="925.0" width="10.3" height="24.9" fill="#c08a3a"/><rect x="1134.8" y="949.6" width="10.3" height="24.9" fill="#4988cd"/><rect x="1144.8" y="949.6" width="10.3" height="24.9" fill="#4887cc"/><rect x="1154.8" y="949.6" width="10.3" height="24.9" fill="#4686cb"/><rect x="1164.7" y="949.6" width="10.3" height="24.9" fill="#4585ca"/><rect x="1174.7" y="949.6" width="10.3" height="24.9" fill="#4584ca"/><rect x="1184.7" y="949.6" width="10.3" height="24.9" fill="#4483c9"/><rect x="1194.7" y="949.6" width="10.3" height="24.9" fill="#4887cc"/><rect x="1204.6" y="949.6" width="10.3" height="24.9" fill="#4c8bcf"/><rect x="1214.6" y="949.6" width="10.3" height="24.9" fill="#5190d4"/><rect x="1224.6" y="949.6" width="10.3" height="24.9" fill="#74d870"/><rect x="1234.6" y="949.6" width="10.3" height="24.9" fill="#74d870"/><rect x="1244.5" y="949.6" width="10.3" height="24.9" fill="#74d870"/><rect x="1254.5" y="949.6" width="10.3" height="24.9" fill="#74d870"/><rect x="1264.5" y="949.6" width="10.3" height="24.9" fill="#74d870"/><rect x="1274.5" y="949.6" width="10.3" height="24.9" fill="#74d870"/><rect x="1284.5" y="949.6" width="10.3" height="24.9" fill="#74d870"/><rect x="1294.4" y="949.6" width="10.3" height="24.9" fill="#74d870"/><rect x="1304.4" y="949.6" width="10.3" height="24.9" fill="#74d870"/><rect x="1314.4" y="949.6" width="10.3" height="24.9" fill="#74d870"/><rect x="1324.4" y="949.6" width="10.3" height="24.9" fill="#74d870"/><rect x="1334.3" y="949.6" width="10.3" height="24.9" fill="#74d870"/><rect x="1344.3" y="949.6" width="10.3" height="24.9" fill="#74d870"/><rect x="1354.3" y="949.6" width="10.3" height="24.9" fill="#74d870"/><rect x="1364.3" y="949.6" width="10.3" height="24.9" fill="#5f9cde"/><rect x="1374.3" y="949.6" width="10.3" height="24.9" fill="#5b99db"/><rect x="1384.2" y="949.6" width="10.3" height="24.9" fill="#5896d9"/><rect x="1394.2" y="949.6" width="10.3" height="24.9" fill="#5492d5"/><rect x="1404.2" y="949.6" width="10.3" height="24.9" fill="#4f8ed2"/><rect x="1414.2" y="949.6" width="10.3" height="24.9" fill="#4c8bcf"/><rect x="1424.1" y="949.6" width="10.3" height="24.9" fill="#4988cd"/><rect x="1434.1" y="949.6" width="10.3" height="24.9" fill="#4686cb"/><rect x="1444.1" y="949.6" width="10.3" height="24.9" fill="#4584ca"/><rect x="1454.1" y="949.6" width="10.3" height="24.9" fill="#4382c8"/><rect x="1464.0" y="949.6" width="10.3" height="24.9" fill="#4382c8"/><rect x="1474.0" y="949.6" width="10.3" height="24.9" fill="#4382c8"/><rect x="1134.8" y="974.2" width="10.3" height="24.9" fill="#4988cd"/><rect x="1144.8" y="974.2" width="10.3" height="24.9" fill="#4887cc"/><rect x="1154.8" y="974.2" width="10.3" height="24.9" fill="#4686cb"/><rect x="1164.7" y="974.2" width="10.3" height="24.9" fill="#4585ca"/><rect x="1174.7" y="974.2" width="10.3" height="24.9" fill="#4584ca"/><rect x="1184.7" y="974.2" width="10.3" height="24.9" fill="#4483c9"/><rect x="1194.7" y="974.2" width="10.3" height="24.9" fill="#4887cc"/><rect x="1204.6" y="974.2" width="10.3" height="24.9" fill="#4c8bcf"/><rect x="1214.6" y="974.2" width="10.3" height="24.9" fill="#5190d4"/><rect x="1224.6" y="974.2" width="10.3" height="24.9" fill="#74d870"/><rect x="1234.6" y="974.2" width="10.3" height="24.9" fill="#74d870"/><rect x="1244.5" y="974.2" width="10.3" height="24.9" fill="#fa7e7e"/><rect x="1254.5" y="974.2" width="10.3" height="24.9" fill="#fa7e7e"/><rect x="1264.5" y="974.2" width="10.3" height="24.9" fill="#fa7e7e"/><rect x="1274.5" y="974.2" width="10.3" height="24.9" fill="#fa7e7e"/><rect x="1284.5" y="974.2" width="10.3" height="24.9" fill="#fa7e7e"/><rect x="1294.4" y="974.2" width="10.3" height="24.9" fill="#fa7e7e"/><rect x="1304.4" y="974.2" width="10.3" height="24.9" fill="#fa7e7e"/><rect x="1314.4" y="974.2" width="10.3" height="24.9" fill="#fa7e7e"/><rect x="1324.4" y="974.2" width="10.3" height="24.9" fill="#fa7e7e"/><rect x="1334.3" y="974.2" width="10.3" height="24.9" fill="#fa7e7e"/><rect x="1344.3" y="974.2" width="10.3" height="24.9" fill="#fa7e7e"/><rect x="1354.3" y="974.2" width="10.3" height="24.9" fill="#74d870"/><rect x="1364.3" y="974.2" width="10.3" height="24.9" fill="#74d870"/><rect x="1374.3" y="974.2" width="10.3" height="24.9" fill="#74d870"/><rect x="1384.2" y="974.2" width="10.3" height="24.9" fill="#5896d9"/><rect x="1394.2" y="974.2" width="10.3" height="24.9" fill="#5492d5"/><rect x="1404.2" y="974.2" width="10.3" height="24.9" fill="#4f8ed2"/><rect x="1414.2" y="974.2" width="10.3" height="24.9" fill="#4c8bcf"/><rect x="1424.1" y="974.2" width="10.3" height="24.9" fill="#4988cd"/><rect x="1434.1" y="974.2" width="10.3" height="24.9" fill="#4686cb"/><rect x="1444.1" y="974.2" width="10.3" height="24.9" fill="#4584ca"/><rect x="1454.1" y="974.2" width="10.3" height="24.9" fill="#4382c8"/><rect x="1464.0" y="974.2" width="10.3" height="24.9" fill="#4382c8"/><rect x="1474.0" y="974.2" width="10.3" height="24.9" fill="#c08a3a"/><rect x="1134.8" y="998.7" width="10.3" height="24.9" fill="#4b8acf"/><rect x="1144.8" y="998.7" width="10.3" height="24.9" fill="#4a89ce"/><rect x="1154.8" y="998.7" width="10.3" height="24.9" fill="#4988cd"/><rect x="1164.7" y="998.7" width="10.3" height="24.9" fill="#4887cc"/><rect x="1174.7" y="998.7" width="10.3" height="24.9" fill="#4887cc"/><rect x="1184.7" y="998.7" width="10.3" height="24.9" fill="#4786cb"/><rect x="1194.7" y="998.7" width="10.3" height="24.9" fill="#4a89ce"/><rect x="1204.6" y="998.7" width="10.3" height="24.9" fill="#4f8dd1"/><rect x="1214.6" y="998.7" width="10.3" height="24.9" fill="#5493d6"/><rect x="1224.6" y="998.7" width="10.3" height="24.9" fill="#74d870"/><rect x="1234.6" y="998.7" width="10.3" height="24.9" fill="#74d870"/><rect x="1244.5" y="998.7" width="10.3" height="24.9" fill="#74d870"/><rect x="1254.5" y="998.7" width="10.3" height="24.9" fill="#74d870"/><rect x="1264.5" y="998.7" width="10.3" height="24.9" fill="#74d870"/><rect x="1274.5" y="998.7" width="10.3" height="24.9" fill="#74d870"/><rect x="1284.5" y="998.7" width="10.3" height="24.9" fill="#74d870"/><rect x="1294.4" y="998.7" width="10.3" height="24.9" fill="#74d870"/><rect x="1304.4" y="998.7" width="10.3" height="24.9" fill="#74d870"/><rect x="1314.4" y="998.7" width="10.3" height="24.9" fill="#74d870"/><rect x="1324.4" y="998.7" width="10.3" height="24.9" fill="#74d870"/><rect x="1334.3" y="998.7" width="10.3" height="24.9" fill="#74d870"/><rect x="1344.3" y="998.7" width="10.3" height="24.9" fill="#74d870"/><rect x="1354.3" y="998.7" width="10.3" height="24.9" fill="#74d870"/><rect x="1364.3" y="998.7" width="10.3" height="24.9" fill="#74d870"/><rect x="1374.3" y="998.7" width="10.3" height="24.9" fill="#5e9cde"/><rect x="1384.2" y="998.7" width="10.3" height="24.9" fill="#5b99db"/><rect x="1394.2" y="998.7" width="10.3" height="24.9" fill="#5695d8"/><rect x="1404.2" y="998.7" width="10.3" height="24.9" fill="#5290d4"/><rect x="1414.2" y="998.7" width="10.3" height="24.9" fill="#4f8dd1"/><rect x="1424.1" y="998.7" width="10.3" height="24.9" fill="#4b8acf"/><rect x="1434.1" y="998.7" width="10.3" height="24.9" fill="#4988cd"/><rect x="1444.1" y="998.7" width="10.3" height="24.9" fill="#4887cc"/><rect x="1454.1" y="998.7" width="10.3" height="24.9" fill="#4685cb"/><rect x="1464.0" y="998.7" width="10.3" height="24.9" fill="#4685cb"/><rect x="1474.0" y="998.7" width="10.3" height="24.9" fill="#4685cb"/><rect x="1134.8" y="1023.3" width="10.3" height="24.9" fill="#4988cd"/><rect x="1144.8" y="1023.3" width="10.3" height="24.9" fill="#4887cc"/><rect x="1154.8" y="1023.3" width="10.3" height="24.9" fill="#4686cb"/><rect x="1164.7" y="1023.3" width="10.3" height="24.9" fill="#4585ca"/><rect x="1174.7" y="1023.3" width="10.3" height="24.9" fill="#4584ca"/><rect x="1184.7" y="1023.3" width="10.3" height="24.9" fill="#4483c9"/><rect x="1194.7" y="1023.3" width="10.3" height="24.9" fill="#4887cc"/><rect x="1204.6" y="1023.3" width="10.3" height="24.9" fill="#4c8bcf"/><rect x="1214.6" y="1023.3" width="10.3" height="24.9" fill="#5190d4"/><rect x="1224.6" y="1023.3" width="10.3" height="24.9" fill="#74d870"/><rect x="1234.6" y="1023.3" width="10.3" height="24.9" fill="#74d870"/><rect x="1244.5" y="1023.3" width="10.3" height="24.9" fill="#74d870"/><rect x="1254.5" y="1023.3" width="10.3" height="24.9" fill="#74d870"/><rect x="1264.5" y="1023.3" width="10.3" height="24.9" fill="#74d870"/><rect x="1274.5" y="1023.3" width="10.3" height="24.9" fill="#74d870"/><rect x="1284.5" y="1023.3" width="10.3" height="24.9" fill="#74d870"/><rect x="1294.4" y="1023.3" width="10.3" height="24.9" fill="#74d870"/><rect x="1304.4" y="1023.3" width="10.3" height="24.9" fill="#74d870"/><rect x="1314.4" y="1023.3" width="10.3" height="24.9" fill="#74d870"/><rect x="1324.4" y="1023.3" width="10.3" height="24.9" fill="#74d870"/><rect x="1334.3" y="1023.3" width="10.3" height="24.9" fill="#74d870"/><rect x="1344.3" y="1023.3" width="10.3" height="24.9" fill="#74d870"/><rect x="1354.3" y="1023.3" width="10.3" height="24.9" fill="#74d870"/><rect x="1364.3" y="1023.3" width="10.3" height="24.9" fill="#5f9cde"/><rect x="1374.3" y="1023.3" width="10.3" height="24.9" fill="#5b99db"/><rect x="1384.2" y="1023.3" width="10.3" height="24.9" fill="#5896d9"/><rect x="1394.2" y="1023.3" width="10.3" height="24.9" fill="#5492d5"/><rect x="1404.2" y="1023.3" width="10.3" height="24.9" fill="#4f8ed2"/><rect x="1414.2" y="1023.3" width="10.3" height="24.9" fill="#4c8bcf"/><rect x="1424.1" y="1023.3" width="10.3" height="24.9" fill="#4988cd"/><rect x="1434.1" y="1023.3" width="10.3" height="24.9" fill="#4686cb"/><rect x="1444.1" y="1023.3" width="10.3" height="24.9" fill="#4584ca"/><rect x="1454.1" y="1023.3" width="10.3" height="24.9" fill="#c08a3a"/><rect x="1464.0" y="1023.3" width="10.3" height="24.9" fill="#c08a3a"/><rect x="1474.0" y="1023.3" width="10.3" height="24.9" fill="#4382c8"/><rect x="1134.8" y="1047.9" width="10.3" height="24.9" fill="#c08a3a"/><rect x="1144.8" y="1047.9" width="10.3" height="24.9" fill="#4d8cd0"/><rect x="1154.8" y="1047.9" width="10.3" height="24.9" fill="#4c8bcf"/><rect x="1164.7" y="1047.9" width="10.3" height="24.9" fill="#4b8ace"/><rect x="1174.7" y="1047.9" width="10.3" height="24.9" fill="#4a89ce"/><rect x="1184.7" y="1047.9" width="10.3" height="24.9" fill="#4a89ce"/><rect x="1194.7" y="1047.9" width="10.3" height="24.9" fill="#4d8cd0"/><rect x="1204.6" y="1047.9" width="10.3" height="24.9" fill="#5190d4"/><rect x="1214.6" y="1047.9" width="10.3" height="24.9" fill="#5795d8"/><rect x="1224.6" y="1047.9" width="10.3" height="24.9" fill="#5e9bdd"/><rect x="1234.6" y="1047.9" width="10.3" height="24.9" fill="#64a2e2"/><rect x="1244.5" y="1047.9" width="10.3" height="24.9" fill="#6aa7e7"/><rect x="1254.5" y="1047.9" width="10.3" height="24.9" fill="#6eabea"/><rect x="1264.5" y="1047.9" width="10.3" height="24.9" fill="#6eabea"/><rect x="1274.5" y="1047.9" width="10.3" height="24.9" fill="#6eabea"/><rect x="1284.5" y="1047.9" width="10.3" height="24.9" fill="#6eabea"/><rect x="1294.4" y="1047.9" width="10.3" height="24.9" fill="#6eabea"/><rect x="1304.4" y="1047.9" width="10.3" height="24.9" fill="#6eabea"/><rect x="1314.4" y="1047.9" width="10.3" height="24.9" fill="#6eabea"/><rect x="1324.4" y="1047.9" width="10.3" height="24.9" fill="#6eabea"/><rect x="1334.3" y="1047.9" width="10.3" height="24.9" fill="#6daae9"/><rect x="1344.3" y="1047.9" width="10.3" height="24.9" fill="#6ba8e7"/><rect x="1354.3" y="1047.9" width="10.3" height="24.9" fill="#67a5e5"/><rect x="1364.3" y="1047.9" width="10.3" height="24.9" fill="#64a2e2"/><rect x="1374.3" y="1047.9" width="10.3" height="24.9" fill="#619fe0"/><rect x="1384.2" y="1047.9" width="10.3" height="24.9" fill="#5e9bdd"/><rect x="1394.2" y="1047.9" width="10.3" height="24.9" fill="#5997da"/><rect x="1404.2" y="1047.9" width="10.3" height="24.9" fill="#5593d6"/><rect x="1414.2" y="1047.9" width="10.3" height="24.9" fill="#5190d4"/><rect x="1424.1" y="1047.9" width="10.3" height="24.9" fill="#4e8dd1"/><rect x="1434.1" y="1047.9" width="10.3" height="24.9" fill="#c08a3a"/><rect x="1444.1" y="1047.9" width="10.3" height="24.9" fill="#c08a3a"/><rect x="1454.1" y="1047.9" width="10.3" height="24.9" fill="#652868"/><rect x="1464.0" y="1047.9" width="10.3" height="24.9" fill="#c08a3a"/><rect x="1474.0" y="1047.9" width="10.3" height="24.9" fill="#c08a3a"/><rect x="1134.8" y="1072.5" width="10.3" height="24.9" fill="#a2a224"/><rect x="1144.8" y="1072.5" width="10.3" height="24.9" fill="#652868"/><rect x="1154.8" y="1072.5" width="10.3" height="24.9" fill="#c08a3a"/><rect x="1164.7" y="1072.5" width="10.3" height="24.9" fill="#4382c8"/><rect x="1174.7" y="1072.5" width="10.3" height="24.9" fill="#4281c8"/><rect x="1184.7" y="1072.5" width="10.3" height="24.9" fill="#4181c7"/><rect x="1194.7" y="1072.5" width="10.3" height="24.9" fill="#4584ca"/><rect x="1204.6" y="1072.5" width="10.3" height="24.9" fill="#4988cd"/><rect x="1214.6" y="1072.5" width="10.3" height="24.9" fill="#4f8dd1"/><rect x="1224.6" y="1072.5" width="10.3" height="24.9" fill="#5594d7"/><rect x="1234.6" y="1072.5" width="10.3" height="24.9" fill="#5c9adc"/><rect x="1244.5" y="1072.5" width="10.3" height="24.9" fill="#619fe0"/><rect x="1254.5" y="1072.5" width="10.3" height="24.9" fill="#66a3e4"/><rect x="1264.5" y="1072.5" width="10.3" height="24.9" fill="#69a6e6"/><rect x="1274.5" y="1072.5" width="10.3" height="24.9" fill="#6ba8e8"/><rect x="1284.5" y="1072.5" width="10.3" height="24.9" fill="#6ba8e8"/><rect x="1294.4" y="1072.5" width="10.3" height="24.9" fill="#6aa7e7"/><rect x="1304.4" y="1072.5" width="10.3" height="24.9" fill="#68a6e6"/><rect x="1314.4" y="1072.5" width="10.3" height="24.9" fill="#67a4e4"/><rect x="1324.4" y="1072.5" width="10.3" height="24.9" fill="#66a3e4"/><rect x="1334.3" y="1072.5" width="10.3" height="24.9" fill="#65a2e3"/><rect x="1344.3" y="1072.5" width="10.3" height="24.9" fill="#62a0e1"/><rect x="1354.3" y="1072.5" width="10.3" height="24.9" fill="#5f9dde"/><rect x="1364.3" y="1072.5" width="10.3" height="24.9" fill="#5c9adc"/><rect x="1374.3" y="1072.5" width="10.3" height="24.9" fill="#5997d9"/><rect x="1384.2" y="1072.5" width="10.3" height="24.9" fill="#5594d7"/><rect x="1394.2" y="1072.5" width="10.3" height="24.9" fill="#518fd3"/><rect x="1404.2" y="1072.5" width="10.3" height="24.9" fill="#4c8bd0"/><rect x="1414.2" y="1072.5" width="10.3" height="24.9" fill="#4988cd"/><rect x="1424.1" y="1072.5" width="10.3" height="24.9" fill="#c08a3a"/><rect x="1434.1" y="1072.5" width="10.3" height="24.9" fill="#652868"/><rect x="1444.1" y="1072.5" width="10.3" height="24.9" fill="#a87070"/><rect x="1454.1" y="1072.5" width="10.3" height="24.9" fill="#a87070"/><rect x="1464.0" y="1072.5" width="10.3" height="24.9" fill="#a87070"/><rect x="1474.0" y="1072.5" width="10.3" height="24.9" fill="#404040"/><rect x="1134.8" y="1097.0" width="10.3" height="24.9" fill="#a2a224"/><rect x="1144.8" y="1097.0" width="10.3" height="24.9" fill="#a87070"/><rect x="1154.8" y="1097.0" width="10.3" height="24.9" fill="#c08a3a"/><rect x="1164.7" y="1097.0" width="10.3" height="24.9" fill="#407fc6"/><rect x="1174.7" y="1097.0" width="10.3" height="24.9" fill="#3f7fc5"/><rect x="1184.7" y="1097.0" width="10.3" height="24.9" fill="#3f7ec5"/><rect x="1194.7" y="1097.0" width="10.3" height="24.9" fill="#4281c8"/><rect x="1204.6" y="1097.0" width="10.3" height="24.9" fill="#4686cb"/><rect x="1214.6" y="1097.0" width="10.3" height="24.9" fill="#4c8bcf"/><rect x="1224.6" y="1097.0" width="10.3" height="24.9" fill="#5291d4"/><rect x="1234.6" y="1097.0" width="10.3" height="24.9" fill="#5997da"/><rect x="1244.5" y="1097.0" width="10.3" height="24.9" fill="#5f9cde"/><rect x="1254.5" y="1097.0" width="10.3" height="24.9" fill="#63a1e1"/><rect x="1264.5" y="1097.0" width="10.3" height="24.9" fill="#66a4e4"/><rect x="1274.5" y="1097.0" width="10.3" height="24.9" fill="#68a6e6"/><rect x="1284.5" y="1097.0" width="10.3" height="24.9" fill="#68a6e6"/><rect x="1294.4" y="1097.0" width="10.3" height="24.9" fill="#67a5e5"/><rect x="1304.4" y="1097.0" width="10.3" height="24.9" fill="#66a3e4"/><rect x="1314.4" y="1097.0" width="10.3" height="24.9" fill="#64a2e2"/><rect x="1324.4" y="1097.0" width="10.3" height="24.9" fill="#63a1e1"/><rect x="1334.3" y="1097.0" width="10.3" height="24.9" fill="#62a0e1"/><rect x="1344.3" y="1097.0" width="10.3" height="24.9" fill="#609ddf"/><rect x="1354.3" y="1097.0" width="10.3" height="24.9" fill="#5c9adc"/><rect x="1364.3" y="1097.0" width="10.3" height="24.9" fill="#5997da"/><rect x="1374.3" y="1097.0" width="10.3" height="24.9" fill="#5694d7"/><rect x="1384.2" y="1097.0" width="10.3" height="24.9" fill="#5291d4"/><rect x="1394.2" y="1097.0" width="10.3" height="24.9" fill="#4e8dd1"/><rect x="1404.2" y="1097.0" width="10.3" height="24.9" fill="#4a89ce"/><rect x="1414.2" y="1097.0" width="10.3" height="24.9" fill="#4686cb"/><rect x="1424.1" y="1097.0" width="10.3" height="24.9" fill="#c08a3a"/><rect x="1434.1" y="1097.0" width="10.3" height="24.9" fill="#652868"/><rect x="1444.1" y="1097.0" width="10.3" height="24.9" fill="#a87070"/><rect x="1454.1" y="1097.0" width="10.3" height="24.9" fill="#652868"/><rect x="1464.0" y="1097.0" width="10.3" height="24.9" fill="#652868"/><rect x="1474.0" y="1097.0" width="10.3" height="24.9" fill="#242424"/><path d="M1103.1 1138.0 V1142.0 M1103.1 808.1 V810.6 M1121.8 1138.0 V1142.0 M1121.8 808.1 V810.6 M1140.5 1138.0 V1145.0 M1140.5 805.1 V810.6 M1159.2 1138.0 V1142.0 M1159.2 808.1 V810.6 M1177.9 1138.0 V1142.0 M1177.9 808.1 V810.6 M1196.7 1138.0 V1142.0 M1196.7 808.1 V810.6 M1215.4 1138.0 V1142.0 M1215.4 808.1 V810.6 M1234.1 1138.0 V1145.0 M1234.1 805.1 V810.6 M1252.8 1138.0 V1142.0 M1252.8 808.1 V810.6 M1271.5 1138.0 V1142.0 M1271.5 808.1 V810.6 M1290.3 1138.0 V1142.0 M1290.3 808.1 V810.6 M1309.0 1138.0 V1142.0 M1309.0 808.1 V810.6 M1327.7 1138.0 V1145.0 M1327.7 805.1 V810.6 M1346.4 1138.0 V1142.0 M1346.4 808.1 V810.6 M1365.1 1138.0 V1142.0 M1365.1 808.1 V810.6 M1383.9 1138.0 V1142.0 M1383.9 808.1 V810.6 M1402.6 1138.0 V1142.0 M1402.6 808.1 V810.6 M1421.3 1138.0 V1145.0 M1421.3 805.1 V810.6 M1440.0 1138.0 V1142.0 M1440.0 808.1 V810.6 M1458.7 1138.0 V1142.0 M1458.7 808.1 V810.6 M1477.5 1138.0 V1142.0 M1477.5 808.1 V810.6 M1496.2 1138.0 V1142.0 M1496.2 808.1 V810.6 M1514.9 1138.0 V1145.0 M1514.9 805.1 V810.6 M1533.6 1138.0 V1142.0 M1533.6 808.1 V810.6 M1096.4 1137.5 H1100.4 M1552.7 1137.5 H1555.2 M1096.4 1128.1 H1100.4 M1552.7 1128.1 H1555.2 M1096.4 1118.8 H1100.4 M1552.7 1118.8 H1555.2 M1093.4 1109.4 H1100.4 M1552.7 1109.4 H1558.2 M1096.4 1100.0 H1100.4 M1552.7 1100.0 H1555.2 M1096.4 1090.7 H1100.4 M1552.7 1090.7 H1555.2 M1096.4 1081.3 H1100.4 M1552.7 1081.3 H1555.2 M1093.4 1072.0 H1100.4 M1552.7 1072.0 H1558.2 M1096.4 1062.6 H1100.4 M1552.7 1062.6 H1555.2 M1096.4 1053.2 H1100.4 M1552.7 1053.2 H1555.2 M1096.4 1043.9 H1100.4 M1552.7 1043.9 H1555.2 M1093.4 1034.5 H1100.4 M1552.7 1034.5 H1558.2 M1096.4 1025.1 H1100.4 M1552.7 1025.1 H1555.2 M1096.4 1015.8 H1100.4 M1552.7 1015.8 H1555.2 M1096.4 1006.4 H1100.4 M1552.7 1006.4 H1555.2 M1093.4 997.1 H1100.4 M1552.7 997.1 H1558.2 M1096.4 987.7 H1100.4 M1552.7 987.7 H1555.2 M1096.4 978.3 H1100.4 M1552.7 978.3 H1555.2 M1096.4 969.0 H1100.4 M1552.7 969.0 H1555.2 M1093.4 959.6 H1100.4 M1552.7 959.6 H1558.2 M1096.4 950.2 H1100.4 M1552.7 950.2 H1555.2 M1096.4 940.9 H1100.4 M1552.7 940.9 H1555.2 M1096.4 931.5 H1100.4 M1552.7 931.5 H1555.2 M1093.4 922.2 H1100.4 M1552.7 922.2 H1558.2 M1096.4 912.8 H1100.4 M1552.7 912.8 H1555.2 M1096.4 903.4 H1100.4 M1552.7 903.4 H1555.2 M1096.4 894.1 H1100.4 M1552.7 894.1 H1555.2 M1093.4 884.7 H1100.4 M1552.7 884.7 H1558.2 M1096.4 875.3 H1100.4 M1552.7 875.3 H1555.2 M1096.4 866.0 H1100.4 M1552.7 866.0 H1555.2 M1096.4 856.6 H1100.4 M1552.7 856.6 H1555.2 M1093.4 847.2 H1100.4 M1552.7 847.2 H1558.2 M1096.4 837.9 H1100.4 M1552.7 837.9 H1555.2 M1096.4 828.5 H1100.4 M1552.7 828.5 H1555.2 M1096.4 819.2 H1100.4 M1552.7 819.2 H1555.2 " stroke="#000" stroke-width="1" fill="none"/><g shape-rendering="auto"><circle cx="1108.8" cy="817" r="2.6" fill="#e8f2fa" stroke="#2a86c8" stroke-width="1"/><path d="M1110.8 819 L1114.5 823.5" stroke="#2a86c8" stroke-width="1.4"/><path d="M1103.5 824 H1108.5 M1106 821.5 V826.5" stroke="#fff" stroke-width="0.8"/></g></svg><div class="t" style="top:1101.9px;font-size:11px;line-height:15px;color:#000;left:489.5px;width:600px;text-align:right;font-family:'DejaVu Sans Condensed','Liberation Sans',sans-serif;">0</div><div class="t" style="top:1064.5px;font-size:11px;line-height:15px;color:#000;left:489.5px;width:600px;text-align:right;font-family:'DejaVu Sans Condensed','Liberation Sans',sans-serif;">20</div><div class="t" style="top:1027.0px;font-size:11px;line-height:15px;color:#000;left:489.5px;width:600px;text-align:right;font-family:'DejaVu Sans Condensed','Liberation Sans',sans-serif;">40</div><div class="t" style="top:989.6px;font-size:11px;line-height:15px;color:#000;left:489.5px;width:600px;text-align:right;font-family:'DejaVu Sans Condensed','Liberation Sans',sans-serif;">60</div><div class="t" style="top:952.1px;font-size:11px;line-height:15px;color:#000;left:489.5px;width:600px;text-align:right;font-family:'DejaVu Sans Condensed','Liberation Sans',sans-serif;">80</div><div class="t" style="top:914.7px;font-size:11px;line-height:15px;color:#000;left:489.5px;width:600px;text-align:right;font-family:'DejaVu Sans Condensed','Liberation Sans',sans-serif;">100</div><div class="t" style="top:877.2px;font-size:11px;line-height:15px;color:#000;left:489.5px;width:600px;text-align:right;font-family:'DejaVu Sans Condensed','Liberation Sans',sans-serif;">120</div><div class="t" style="top:839.8px;font-size:11px;line-height:15px;color:#000;left:489.5px;width:600px;text-align:right;font-family:'DejaVu Sans Condensed','Liberation Sans',sans-serif;">140</div><div class="t" style="top:1144.0px;font-size:11px;line-height:15px;color:#000;left:840.5px;width:600px;text-align:center;font-family:'DejaVu Sans Condensed','Liberation Sans',sans-serif;">0</div><div class="t" style="top:1144.0px;font-size:11px;line-height:15px;color:#000;left:934.0999999999999px;width:600px;text-align:center;font-family:'DejaVu Sans Condensed','Liberation Sans',sans-serif;">50</div><div class="t" style="top:1144.0px;font-size:11px;line-height:15px;color:#000;left:1027.7px;width:600px;text-align:center;font-family:'DejaVu Sans Condensed','Liberation Sans',sans-serif;">100</div><div class="t" style="top:1144.0px;font-size:11px;line-height:15px;color:#000;left:1121.3px;width:600px;text-align:center;font-family:'DejaVu Sans Condensed','Liberation Sans',sans-serif;">150</div><div class="t" style="top:1144.0px;font-size:11px;line-height:15px;color:#000;left:1505.9px;font-family:'DejaVu Sans Condensed','Liberation Sans',sans-serif;">200 mm</div><div class="t" style="top:789.0px;font-size:11px;line-height:15px;color:#000;left:1071.5px;font-family:'DejaVu Sans Condensed','Liberation Sans',sans-serif;">mm</div>
<div style="left:953.4px;top:1168.4px;width:736.6px;height:54.300000000000004px;background:#fff;"></div><div style="left:953.4px;top:1168.4px;width:736.6px;height:18.1px;background:#e9e9e9;"></div><div style="left:953.4px;top:1186.5px;width:190.0000000000001px;height:36.2px;background:#f1f1f1;"></div><div style="left:953.4px;top:1167.9px;width:736.6px;height:1px;background:#c9c9c9;"></div><div style="left:953.4px;top:1186.0px;width:736.6px;height:1px;background:#c9c9c9;"></div><div style="left:953.4px;top:1204.1000000000001px;width:736.6px;height:1px;background:#c9c9c9;"></div><div style="left:953.4px;top:1222.2px;width:736.6px;height:1px;background:#c9c9c9;"></div><div style="left:952.9px;top:1168.4px;width:1px;height:54.300000000000004px;background:#c9c9c9;"></div><div style="left:1689.5px;top:1168.4px;width:1px;height:54.300000000000004px;background:#c9c9c9;"></div><div style="left:1102.9px;top:1186.5px;width:1px;height:36.2px;background:#c9c9c9;"></div><div style="left:1142.9px;top:1186.5px;width:1px;height:36.2px;background:#c9c9c9;"></div><div style="left:1198.8px;top:1186.5px;width:1px;height:36.2px;background:#c9c9c9;"></div><div style="left:1271.3px;top:1186.5px;width:1px;height:36.2px;background:#c9c9c9;"></div><div style="left:1342.8px;top:1186.5px;width:1px;height:36.2px;background:#c9c9c9;"></div><div style="left:1408.2px;top:1186.5px;width:1px;height:36.2px;background:#c9c9c9;"></div><div style="left:1474.1px;top:1186.5px;width:1px;height:36.2px;background:#c9c9c9;"></div><div style="left:1529.9px;top:1186.5px;width:1px;height:36.2px;background:#c9c9c9;"></div><div class="t" style="top:1170.0px;font-size:11.5px;line-height:15.5px;color:#111;left:961.4px;font-family:'DejaVu Sans Condensed','Liberation Sans',sans-serif;font-weight:bold;letter-spacing:-0.45px;">Differential parameters</div><div class="t" style="top:1170.2px;font-size:11px;line-height:15px;color:#333;left:823.4000000000001px;width:600px;text-align:center;font-family:'DejaVu Sans Condensed','Liberation Sans',sans-serif;">Unit</div><div class="t" style="top:1170.2px;font-size:11px;line-height:15px;color:#333;left:870.8499999999999px;width:600px;text-align:center;font-family:'DejaVu Sans Condensed','Liberation Sans',sans-serif;">P2 - P1</div><div class="t" style="top:1170.2px;font-size:11px;line-height:15px;color:#333;left:935.05px;width:600px;text-align:center;font-family:'DejaVu Sans Condensed','Liberation Sans',sans-serif;">P3 - P2</div><div class="t" style="top:1170.2px;font-size:11px;line-height:15px;color:#333;left:1007.05px;width:600px;text-align:center;font-family:'DejaVu Sans Condensed','Liberation Sans',sans-serif;">P4 - P3</div><div class="t" style="top:1170.2px;font-size:11px;line-height:15px;color:#333;left:1075.5px;width:600px;text-align:center;font-family:'DejaVu Sans Condensed','Liberation Sans',sans-serif;">P5 - P4</div><div class="t" style="top:1170.2px;font-size:11px;line-height:15px;color:#333;left:1141.15px;width:600px;text-align:center;font-family:'DejaVu Sans Condensed','Liberation Sans',sans-serif;">P6 - P5</div><div class="t" style="top:1170.2px;font-size:11px;line-height:15px;color:#333;left:1202.0px;width:600px;text-align:center;font-family:'DejaVu Sans Condensed','Liberation Sans',sans-serif;">P7 - P6</div><div class="t" style="top:1188.3px;font-size:11px;line-height:15px;color:#333;left:961.4px;font-family:'DejaVu Sans Condensed','Liberation Sans',sans-serif;">Zmean difference</div><div class="t" style="top:1188.3px;font-size:11px;line-height:15px;color:#333;left:823.4000000000001px;width:600px;text-align:center;font-family:'DejaVu Sans Condensed','Liberation Sans',sans-serif;">µm</div><div class="t" style="top:1188.3px;font-size:11px;line-height:15px;color:#333;left:590.0px;width:600px;text-align:right;font-family:'DejaVu Sans Condensed','Liberation Sans',sans-serif;">18.23</div><div class="t" style="top:1188.3px;font-size:11px;line-height:15px;color:#333;left:662.5px;width:600px;text-align:right;font-family:'DejaVu Sans Condensed','Liberation Sans',sans-serif;">7.372</div><div class="t" style="top:1188.3px;font-size:11px;line-height:15px;color:#333;left:734.0px;width:600px;text-align:right;font-family:'DejaVu Sans Condensed','Liberation Sans',sans-serif;">15.82</div><div class="t" style="top:1188.3px;font-size:11px;line-height:15px;color:#333;left:799.4000000000001px;width:600px;text-align:right;font-family:'DejaVu Sans Condensed','Liberation Sans',sans-serif;">52.73</div><div class="t" style="top:1188.3px;font-size:11px;line-height:15px;color:#333;left:865.3px;width:600px;text-align:right;font-family:'DejaVu Sans Condensed','Liberation Sans',sans-serif;">52.19</div><div class="t" style="top:1188.3px;font-size:11px;line-height:15px;color:#333;left:921.1000000000001px;width:600px;text-align:right;font-family:'DejaVu Sans Condensed','Liberation Sans',sans-serif;">16.62</div><div class="t" style="top:1206.5px;font-size:11px;line-height:15px;color:#333;left:961.4px;font-family:'DejaVu Sans Condensed','Liberation Sans',sans-serif;">Angle difference</div><div class="t" style="top:1206.5px;font-size:11px;line-height:15px;color:#333;left:823.4000000000001px;width:600px;text-align:center;font-family:'DejaVu Sans Condensed','Liberation Sans',sans-serif;">°</div><div class="t" style="top:1206.5px;font-size:11px;line-height:15px;color:#333;left:590.0px;width:600px;text-align:right;font-family:'DejaVu Sans Condensed','Liberation Sans',sans-serif;">*****</div><div class="t" style="top:1206.5px;font-size:11px;line-height:15px;color:#333;left:662.5px;width:600px;text-align:right;font-family:'DejaVu Sans Condensed','Liberation Sans',sans-serif;">0.0009462</div><div class="t" style="top:1206.5px;font-size:11px;line-height:15px;color:#333;left:734.0px;width:600px;text-align:right;font-family:'DejaVu Sans Condensed','Liberation Sans',sans-serif;">0.0008167</div><div class="t" style="top:1206.5px;font-size:11px;line-height:15px;color:#333;left:799.4000000000001px;width:600px;text-align:right;font-family:'DejaVu Sans Condensed','Liberation Sans',sans-serif;">0.004227</div><div class="t" style="top:1206.5px;font-size:11px;line-height:15px;color:#333;left:865.3px;width:600px;text-align:right;font-family:'DejaVu Sans Condensed','Liberation Sans',sans-serif;">0.008508</div><div class="t" style="top:1206.5px;font-size:11px;line-height:15px;color:#333;left:921.1000000000001px;width:600px;text-align:right;font-family:'DejaVu Sans Condensed','Liberation Sans',sans-serif;">*****</div><div style="left:953.4px;top:1228.7px;width:736.6px;height:72.4px;background:#fff;"></div><div style="left:953.4px;top:1228.7px;width:736.6px;height:18.1px;background:#e9e9e9;"></div><div style="left:953.4px;top:1246.8px;width:190.0000000000001px;height:54.300000000000004px;background:#f1f1f1;"></div><div style="left:953.4px;top:1228.2px;width:736.6px;height:1px;background:#c9c9c9;"></div><div style="left:953.4px;top:1246.3px;width:736.6px;height:1px;background:#c9c9c9;"></div><div style="left:953.4px;top:1264.4px;width:736.6px;height:1px;background:#c9c9c9;"></div><div style="left:953.4px;top:1282.5px;width:736.6px;height:1px;background:#c9c9c9;"></div><div style="left:953.4px;top:1300.6000000000001px;width:736.6px;height:1px;background:#c9c9c9;"></div><div style="left:952.9px;top:1228.7px;width:1px;height:72.4px;background:#c9c9c9;"></div><div style="left:1689.5px;top:1228.7px;width:1px;height:72.4px;background:#c9c9c9;"></div><div style="left:1102.9px;top:1246.8px;width:1px;height:54.300000000000004px;background:#c9c9c9;"></div><div style="left:1142.9px;top:1246.8px;width:1px;height:54.300000000000004px;background:#c9c9c9;"></div><div style="left:1198.8px;top:1246.8px;width:1px;height:54.300000000000004px;background:#c9c9c9;"></div><div style="left:1271.3px;top:1246.8px;width:1px;height:54.300000000000004px;background:#c9c9c9;"></div><div style="left:1342.8px;top:1246.8px;width:1px;height:54.300000000000004px;background:#c9c9c9;"></div><div style="left:1408.2px;top:1246.8px;width:1px;height:54.300000000000004px;background:#c9c9c9;"></div><div style="left:1474.1px;top:1246.8px;width:1px;height:54.300000000000004px;background:#c9c9c9;"></div><div style="left:1529.9px;top:1246.8px;width:1px;height:54.300000000000004px;background:#c9c9c9;"></div><div style="left:1585.8px;top:1246.8px;width:1px;height:54.300000000000004px;background:#c9c9c9;"></div><div style="left:1143.9px;top:1228.2px;width:55.399999999999864px;height:2.2px;background:#f2f200;"></div><div style="left:1199.8px;top:1228.2px;width:72.0px;height:2.2px;background:#f4a0a0;"></div><div style="left:1272.3px;top:1228.2px;width:71.0px;height:2.2px;background:#5c0a80;"></div><div style="left:1343.8px;top:1228.2px;width:64.90000000000009px;height:2.2px;background:#f5a623;"></div><div style="left:1409.2px;top:1228.2px;width:65.39999999999986px;height:2.2px;background:#2080f0;"></div><div style="left:1475.1px;top:1228.2px;width:55.30000000000018px;height:2.2px;background:#22c022;"></div><div style="left:1530.9px;top:1228.2px;width:55.399999999999864px;height:2.2px;background:#e01515;"></div><div class="t" style="top:1230.3px;font-size:11.5px;line-height:15.5px;color:#111;left:961.4px;font-family:'DejaVu Sans Condensed','Liberation Sans',sans-serif;font-weight:bold;letter-spacing:-0.45px;">Plane parameters</div><div class="t" style="top:1230.5px;font-size:11px;line-height:15px;color:#333;left:823.4000000000001px;width:600px;text-align:center;font-family:'DejaVu Sans Condensed','Liberation Sans',sans-serif;">Unit</div><div class="t" style="top:1230.5px;font-size:11px;line-height:15px;color:#333;left:870.8499999999999px;width:600px;text-align:center;font-family:'DejaVu Sans Condensed','Liberation Sans',sans-serif;">Plane 1</div><div class="t" style="top:1230.5px;font-size:11px;line-height:15px;color:#333;left:935.05px;width:600px;text-align:center;font-family:'DejaVu Sans Condensed','Liberation Sans',sans-serif;">Plane 2</div><div class="t" style="top:1230.5px;font-size:11px;line-height:15px;color:#333;left:1007.05px;width:600px;text-align:center;font-family:'DejaVu Sans Condensed','Liberation Sans',sans-serif;">Plane 3</div><div class="t" style="top:1230.5px;font-size:11px;line-height:15px;color:#333;left:1075.5px;width:600px;text-align:center;font-family:'DejaVu Sans Condensed','Liberation Sans',sans-serif;">Plane 4</div><div class="t" style="top:1230.5px;font-size:11px;line-height:15px;color:#333;left:1141.15px;width:600px;text-align:center;font-family:'DejaVu Sans Condensed','Liberation Sans',sans-serif;">Plane 5</div><div class="t" style="top:1230.5px;font-size:11px;line-height:15px;color:#333;left:1202.0px;width:600px;text-align:center;font-family:'DejaVu Sans Condensed','Liberation Sans',sans-serif;">Plane 6</div><div class="t" style="top:1230.5px;font-size:11px;line-height:15px;color:#333;left:1257.85px;width:600px;text-align:center;font-family:'DejaVu Sans Condensed','Liberation Sans',sans-serif;">Plane 7</div><div class="t" style="top:1248.6px;font-size:11px;line-height:15px;color:#333;left:961.4px;font-family:'DejaVu Sans Condensed','Liberation Sans',sans-serif;">Zmin</div><div class="t" style="top:1248.6px;font-size:11px;line-height:15px;color:#333;left:823.4000000000001px;width:600px;text-align:center;font-family:'DejaVu Sans Condensed','Liberation Sans',sans-serif;">µm</div><div class="t" style="top:1248.6px;font-size:11px;line-height:15px;color:#333;left:590.0px;width:600px;text-align:right;font-family:'DejaVu Sans Condensed','Liberation Sans',sans-serif;">44.94</div><div class="t" style="top:1248.6px;font-size:11px;line-height:15px;color:#333;left:662.5px;width:600px;text-align:right;font-family:'DejaVu Sans Condensed','Liberation Sans',sans-serif;">62.22</div><div class="t" style="top:1248.6px;font-size:11px;line-height:15px;color:#333;left:734.0px;width:600px;text-align:right;font-family:'DejaVu Sans Condensed','Liberation Sans',sans-serif;">67.72</div><div class="t" style="top:1248.6px;font-size:11px;line-height:15px;color:#333;left:799.4000000000001px;width:600px;text-align:right;font-family:'DejaVu Sans Condensed','Liberation Sans',sans-serif;">78.23</div><div class="t" style="top:1248.6px;font-size:11px;line-height:15px;color:#333;left:865.3px;width:600px;text-align:right;font-family:'DejaVu Sans Condensed','Liberation Sans',sans-serif;">94.00</div><div class="t" style="top:1248.6px;font-size:11px;line-height:15px;color:#333;left:921.1000000000001px;width:600px;text-align:right;font-family:'DejaVu Sans Condensed','Liberation Sans',sans-serif;">182.9</div><div class="t" style="top:1248.6px;font-size:11px;line-height:15px;color:#333;left:977.0px;width:600px;text-align:right;font-family:'DejaVu Sans Condensed','Liberation Sans',sans-serif;">205.1</div><div class="t" style="top:1266.8px;font-size:11px;line-height:15px;color:#333;left:961.4px;font-family:'DejaVu Sans Condensed','Liberation Sans',sans-serif;">Zmean</div><div class="t" style="top:1266.8px;font-size:11px;line-height:15px;color:#333;left:823.4000000000001px;width:600px;text-align:center;font-family:'DejaVu Sans Condensed','Liberation Sans',sans-serif;">µm</div><div class="t" style="top:1266.8px;font-size:11px;line-height:15px;color:#333;left:590.0px;width:600px;text-align:right;font-family:'DejaVu Sans Condensed','Liberation Sans',sans-serif;">45.97</div><div class="t" style="top:1266.8px;font-size:11px;line-height:15px;color:#333;left:662.5px;width:600px;text-align:right;font-family:'DejaVu Sans Condensed','Liberation Sans',sans-serif;">64.20</div><div class="t" style="top:1266.8px;font-size:11px;line-height:15px;color:#333;left:734.0px;width:600px;text-align:right;font-family:'DejaVu Sans Condensed','Liberation Sans',sans-serif;">71.58</div><div class="t" style="top:1266.8px;font-size:11px;line-height:15px;color:#333;left:799.4000000000001px;width:600px;text-align:right;font-family:'DejaVu Sans Condensed','Liberation Sans',sans-serif;">87.39</div><div class="t" style="top:1266.8px;font-size:11px;line-height:15px;color:#333;left:865.3px;width:600px;text-align:right;font-family:'DejaVu Sans Condensed','Liberation Sans',sans-serif;">140.1</div><div class="t" style="top:1266.8px;font-size:11px;line-height:15px;color:#333;left:921.1000000000001px;width:600px;text-align:right;font-family:'DejaVu Sans Condensed','Liberation Sans',sans-serif;">192.3</div><div class="t" style="top:1266.8px;font-size:11px;line-height:15px;color:#333;left:977.0px;width:600px;text-align:right;font-family:'DejaVu Sans Condensed','Liberation Sans',sans-serif;">208.9</div><div class="t" style="top:1284.8px;font-size:11px;line-height:15px;color:#333;left:961.4px;font-family:'DejaVu Sans Condensed','Liberation Sans',sans-serif;">Zmax</div><div class="t" style="top:1284.8px;font-size:11px;line-height:15px;color:#333;left:823.4000000000001px;width:600px;text-align:center;font-family:'DejaVu Sans Condensed','Liberation Sans',sans-serif;">µm</div><div class="t" style="top:1284.8px;font-size:11px;line-height:15px;color:#333;left:590.0px;width:600px;text-align:right;font-family:'DejaVu Sans Condensed','Liberation Sans',sans-serif;">47.17</div><div class="t" style="top:1284.8px;font-size:11px;line-height:15px;color:#333;left:662.5px;width:600px;text-align:right;font-family:'DejaVu Sans Condensed','Liberation Sans',sans-serif;">67.72</div><div class="t" style="top:1284.8px;font-size:11px;line-height:15px;color:#333;left:734.0px;width:600px;text-align:right;font-family:'DejaVu Sans Condensed','Liberation Sans',sans-serif;">76.25</div><div class="t" style="top:1284.8px;font-size:11px;line-height:15px;color:#333;left:799.4000000000001px;width:600px;text-align:right;font-family:'DejaVu Sans Condensed','Liberation Sans',sans-serif;">94.00</div><div class="t" style="top:1284.8px;font-size:11px;line-height:15px;color:#333;left:865.3px;width:600px;text-align:right;font-family:'DejaVu Sans Condensed','Liberation Sans',sans-serif;">182.9</div><div class="t" style="top:1284.8px;font-size:11px;line-height:15px;color:#333;left:921.1000000000001px;width:600px;text-align:right;font-family:'DejaVu Sans Condensed','Liberation Sans',sans-serif;">202.5</div><div class="t" style="top:1284.8px;font-size:11px;line-height:15px;color:#333;left:977.0px;width:600px;text-align:right;font-family:'DejaVu Sans Condensed','Liberation Sans',sans-serif;">213.1</div>
<div style="left:1698px;top:194px;width:304px;height:568px;background:#fff;border:1px solid #000;box-sizing:border-box;"></div><div style="left:2000px;top:194px;width:305px;height:796px;background:#fff;border:1px solid #000;box-sizing:border-box;"></div><div class="t" style="top:196.9px;font-size:12px;line-height:16px;color:#000;left:1750px;">No.</div><div class="t" style="top:196.9px;font-size:12px;line-height:16px;color:#000;left:1781px;">X</div><div class="t" style="top:196.9px;font-size:12px;line-height:16px;color:#000;left:1854.3px;">Y</div><div class="t" style="top:196.9px;font-size:12px;line-height:16px;color:#000;left:1927.8px;">Z</div><div class="t" style="left:1676px;width:100px;text-align:right;top:214.85px;font-size:12px;line-height:17.9px;color:#000"><div style="height:17.9px">1</div><div style="height:17.9px">2</div><div style="height:17.9px">3</div><div style="height:17.9px">4</div><div style="height:17.9px">5</div><div style="height:17.9px">6</div><div style="height:17.9px">7</div><div style="height:17.9px">8</div><div style="height:17.9px">9</div><div style="height:17.9px">10</div><div style="height:17.9px">11</div><div style="height:17.9px">12</div><div style="height:17.9px">13</div><div style="height:17.9px">14</div><div style="height:17.9px">15</div><div style="height:17.9px">16</div><div style="height:17.9px">17</div><div style="height:17.9px">18</div><div style="height:17.9px">19</div><div style="height:17.9px">20</div><div style="height:17.9px">21</div><div style="height:17.9px">22</div><div style="height:17.9px">23</div><div style="height:17.9px">24</div><div style="height:17.9px">25</div><div style="height:17.9px">26</div><div style="height:17.9px">27</div><div style="height:17.9px">28</div><div style="height:17.9px">29</div><div style="height:17.9px">30</div></div><div class="t" style="left:1750.3px;width:100px;text-align:right;top:214.85px;font-size:12px;line-height:17.9px;color:#000"><div style="height:17.9px">8.00201</div><div style="height:17.9px">29.42705</div><div style="height:17.9px">50.75214</div><div style="height:17.9px">72.12704</div><div style="height:17.9px">93.50198</div><div style="height:17.9px">114.927</div><div style="height:17.9px">136.2522</div><div style="height:17.9px">157.6271</div><div style="height:17.9px">179.0021</div><div style="height:17.9px">179.0065</div><div style="height:17.9px">157.6268</div><div style="height:17.9px">136.252</div><div style="height:17.9px">114.877</div><div style="height:17.9px">93.50193</div><div style="height:17.9px">72.12694</div><div style="height:17.9px">50.80207</div><div style="height:17.9px">29.42699</div><div style="height:17.9px">8.00195</div><div style="height:17.9px">8.0062</div><div style="height:17.9px">29.37713</div><div style="height:17.9px">50.7521</div><div style="height:17.9px">72.12706</div><div style="height:17.9px">93.50216</div><div style="height:17.9px">114.8771</div><div style="height:17.9px">136.3019</div><div style="height:17.9px">157.6272</div><div style="height:17.9px">179.0517</div><div style="height:17.9px">179.0021</div><div style="height:17.9px">157.6271</div><div style="height:17.9px">136.302</div></div><div class="t" style="left:1823.4px;width:100px;text-align:right;top:214.85px;font-size:12px;line-height:17.9px;color:#000"><div style="height:17.9px">12.99951</div><div style="height:17.9px">12.9965</div><div style="height:17.9px">12.99944</div><div style="height:17.9px">12.99666</div><div style="height:17.9px">12.9994</div><div style="height:17.9px">12.99645</div><div style="height:17.9px">12.9994</div><div style="height:17.9px">12.99633</div><div style="height:17.9px">12.99941</div><div style="height:17.9px">40.74961</div><div style="height:17.9px">40.75266</div><div style="height:17.9px">40.74949</div><div style="height:17.9px">40.75271</div><div style="height:17.9px">40.74962</div><div style="height:17.9px">40.75257</div><div style="height:17.9px">40.74948</div><div style="height:17.9px">40.75263</div><div style="height:17.9px">40.7495</div><div style="height:17.9px">68.49964</div><div style="height:17.9px">68.49637</div><div style="height:17.9px">68.49941</div><div style="height:17.9px">68.49651</div><div style="height:17.9px">68.49939</div><div style="height:17.9px">68.49626</div><div style="height:17.9px">68.4994</div><div style="height:17.9px">68.49619</div><div style="height:17.9px">68.49935</div><div style="height:17.9px">96.24957</div><div style="height:17.9px">96.25287</div><div style="height:17.9px">96.24949</div></div><div class="t" style="left:1882.5px;width:100px;text-align:right;top:214.85px;font-size:12px;line-height:17.9px;color:#000"><div style="height:17.9px">0.03741</div><div style="height:17.9px">0.02842</div><div style="height:17.9px">0.03023</div><div style="height:17.9px">0.0094</div><div style="height:17.9px">0.00526</div><div style="height:17.9px">0.02265</div><div style="height:17.9px">0.01551</div><div style="height:17.9px">0.00158</div><div style="height:17.9px">-0.00608</div><div style="height:17.9px">-0.002</div><div style="height:17.9px">-0.00824</div><div style="height:17.9px">-0.01154</div><div style="height:17.9px">0.01253</div><div style="height:17.9px">0.00839</div><div style="height:17.9px">0.00141</div><div style="height:17.9px">-0.04948</div><div style="height:17.9px">0.02259</div><div style="height:17.9px">0.02483</div><div style="height:17.9px">0.02915</div><div style="height:17.9px">0.01758</div><div style="height:17.9px">-0.0033</div><div style="height:17.9px">0.0105</div><div style="height:17.9px">-0.00498</div><div style="height:17.9px">-0.01059</div><div style="height:17.9px">-0.00081</div><div style="height:17.9px">-0.0103</div><div style="height:17.9px">0.0048</div><div style="height:17.9px">-0.00014</div><div style="height:17.9px">-0.00284</div><div style="height:17.9px">-0.00991</div></div><div class="t" style="left:1978.8000000000002px;width:100px;text-align:right;top:195.19px;font-size:10.67px;line-height:18.01px;color:#000"><div style="height:18.01px">31</div><div style="height:18.01px">32</div><div style="height:18.01px">33</div><div style="height:18.01px">34</div><div style="height:18.01px">35</div><div style="height:18.01px">36</div><div style="height:18.01px">37</div><div style="height:18.01px">38</div><div style="height:18.01px">39</div><div style="height:18.01px">40</div><div style="height:18.01px">41</div><div style="height:18.01px">42</div><div style="height:18.01px">43</div><div style="height:18.01px">44</div><div style="height:18.01px">45</div><div style="height:18.01px">46</div><div style="height:18.01px">47</div><div style="height:18.01px">48</div><div style="height:18.01px">49</div><div style="height:18.01px">50</div><div style="height:18.01px">51</div><div style="height:18.01px">52</div><div style="height:18.01px">53</div><div style="height:18.01px">54</div><div style="height:18.01px">55</div><div style="height:18.01px">56</div><div style="height:18.01px">57</div><div style="height:18.01px">58</div><div style="height:18.01px">59</div><div style="height:18.01px">60</div><div style="height:18.01px">61</div><div style="height:18.01px">62</div><div style="height:18.01px">63</div><div style="height:18.01px">64</div><div style="height:18.01px">65</div><div style="height:18.01px">66</div><div style="height:18.01px">67</div><div style="height:18.01px">68</div><div style="height:18.01px">69</div><div style="height:18.01px">70</div><div style="height:18.01px">71</div><div style="height:18.01px">72</div><div style="height:18.01px">73</div></div><div class="t" style="left:2052.7px;width:100px;text-align:right;top:195.19px;font-size:10.67px;line-height:18.01px;color:#000"><div style="height:18.01px">114.877</div><div style="height:18.01px">93.50207</div><div style="height:18.01px">72.12694</div><div style="height:18.01px">50.75184</div><div style="height:18.01px">29.37696</div><div style="height:18.01px">8.00185</div><div style="height:18.01px">8.00641</div><div style="height:18.01px">29.37716</div><div style="height:18.01px">50.75194</div><div style="height:18.01px">72.12703</div><div style="height:18.01px">93.50197</div><div style="height:18.01px">114.8769</div><div style="height:18.01px">136.2521</div><div style="height:18.01px">157.6271</div><div style="height:18.01px">179.002</div><div style="height:18.01px">14.30263</div><div style="height:18.01px">172.4527</div><div style="height:18.01px">14.30269</div><div style="height:18.01px">172.403</div><div style="height:18.01px">3.0042</div><div style="height:18.01px">184.0043</div><div style="height:18.01px">3.0043</div><div style="height:18.01px">184.0044</div><div style="height:18.01px">49.9848</div><div style="height:18.01px">93.48494</div><div style="height:18.01px">136.985</div><div style="height:18.01px">49.98474</div><div style="height:18.01px">93.48496</div><div style="height:18.01px">136.985</div><div style="height:18.01px">12.72634</div><div style="height:18.01px">174.2265</div><div style="height:18.01px">12.72634</div><div style="height:18.01px">174.2266</div><div style="height:18.01px">12.72636</div><div style="height:18.01px">174.2266</div><div style="height:18.01px">12.72636</div><div style="height:18.01px">174.2266</div><div style="height:18.01px">12.72638</div><div style="height:18.01px">174.2265</div><div style="height:18.01px">13.51311</div><div style="height:18.01px">172.0231</div><div style="height:18.01px">13.46275</div><div style="height:18.01px">172.023</div></div><div class="t" style="left:2125.7px;width:100px;text-align:right;top:195.19px;font-size:10.67px;line-height:18.01px;color:#000"><div style="height:18.01px">96.25281</div><div style="height:18.01px">96.24961</div><div style="height:18.01px">96.25267</div><div style="height:18.01px">96.24949</div><div style="height:18.01px">96.25283</div><div style="height:18.01px">96.2495</div><div style="height:18.01px">123.9996</div><div style="height:18.01px">123.9961</div><div style="height:18.01px">123.9994</div><div style="height:18.01px">123.9963</div><div style="height:18.01px">123.9994</div><div style="height:18.01px">123.9961</div><div style="height:18.01px">123.9994</div><div style="height:18.01px">123.9961</div><div style="height:18.01px">123.9994</div><div style="height:18.01px">17.38268</div><div style="height:18.01px">17.38254</div><div style="height:18.01px">119.5827</div><div style="height:18.01px">119.5825</div><div style="height:18.01px">2.98273</div><div style="height:18.01px">2.98256</div><div style="height:18.01px">133.9826</div><div style="height:18.01px">133.9825</div><div style="height:18.01px">55.58886</div><div style="height:18.01px">55.58867</div><div style="height:18.01px">55.5886</div><div style="height:18.01px">81.33871</div><div style="height:18.01px">81.33865</div><div style="height:18.01px">81.33866</div><div style="height:18.01px">94.20913</div><div style="height:18.01px">94.20906</div><div style="height:18.01px">81.33927</div><div style="height:18.01px">81.33909</div><div style="height:18.01px">68.46928</div><div style="height:18.01px">68.4688</div><div style="height:18.01px">55.59916</div><div style="height:18.01px">55.59902</div><div style="height:18.01px">42.72917</div><div style="height:18.01px">42.72907</div><div style="height:18.01px">10.92276</div><div style="height:18.01px">10.92266</div><div style="height:18.01px">125.9372</div><div style="height:18.01px">125.937</div></div><div class="t" style="left:2200.5px;width:100px;text-align:right;top:195.19px;font-size:10.67px;line-height:18.01px;color:#000"><div style="height:18.01px">-0.01124</div><div style="height:18.01px">-0.01676</div><div style="height:18.01px">-0.00448</div><div style="height:18.01px">-0.02381</div><div style="height:18.01px">-0.01391</div><div style="height:18.01px">-0.00582</div><div style="height:18.01px">0.00754</div><div style="height:18.01px">-0.00651</div><div style="height:18.01px">-0.00536</div><div style="height:18.01px">-0.01932</div><div style="height:18.01px">-0.02077</div><div style="height:18.01px">-0.05541</div><div style="height:18.01px">-0.04593</div><div style="height:18.01px">-0.0076</div><div style="height:18.01px">0.01633</div><div style="height:18.01px">0.00567</div><div style="height:18.01px">-0.00034</div><div style="height:18.01px">0.01084</div><div style="height:18.01px">-0.0171</div><div style="height:18.01px">0.00042</div><div style="height:18.01px">-0.0114</div><div style="height:18.01px">0.00192</div><div style="height:18.01px">-0.01311</div><div style="height:18.01px">-0.00114</div><div style="height:18.01px">-0.03084</div><div style="height:18.01px">-0.01528</div><div style="height:18.01px">0.01853</div><div style="height:18.01px">-0.0177</div><div style="height:18.01px">-0.00966</div><div style="height:18.01px">0.01179</div><div style="height:18.01px">0.00425</div><div style="height:18.01px">-0.02044</div><div style="height:18.01px">0.00913</div><div style="height:18.01px">0.01118</div><div style="height:18.01px">0.01092</div><div style="height:18.01px">-0.01975</div><div style="height:18.01px">-0.0107</div><div style="height:18.01px">0.00341</div><div style="height:18.01px">-0.01783</div><div style="height:18.01px">0.01626</div><div style="height:18.01px">0.0111</div><div style="height:18.01px">0.00553</div><div style="height:18.01px">0.0136</div></div>
<div style="left:2319px;top:170px;width:17px;height:1202px;background:#333;"></div><div style="left:2320px;top:190px;width:14px;height:583px;background:#595959;"></div><div style="left:2320px;top:173px;width:14px;height:15px;background:#595959;"></div><div style="left:2320px;top:1356px;width:14px;height:14px;background:#595959;"></div><svg style="position:absolute;left:0;top:0" width="2559" height="1392"><polygon points="2322.5,183.25 2331.5,183.25 2327,178.75" fill="#9a9a9a"/><polygon points="2322.5,1361.25 2331.5,1361.25 2327,1365.75" fill="#9a9a9a"/></svg><div style="left:2336px;top:152px;width:4px;height:1220px;background:#363636;"></div><div style="left:2336.3px;top:152px;width:1px;height:1220px;background:#585858;"></div><div style="left:2338.8px;top:152px;width:1.2px;height:1220px;background:#585858;"></div>
<div style="left:2340px;top:152px;width:219px;height:1220px;background:#363636;"></div><div style="left:2340px;top:152px;width:1px;height:1220px;background:#555;"></div><div style="left:2341px;top:152px;width:218px;height:26px;background:#444;"></div><div class="t" style="top:155.8px;font-size:15.5px;line-height:19.5px;color:#fff;left:2345px;"><span style="letter-spacing:0.41px">Workflow</span></div><svg style="position:absolute;left:2543px;top:157px" width="7" height="13"><rect x="1.8" y="0" width="3.6" height="7" fill="#7474c6"/><rect x="2.6" y="1" width="1.2" height="5" fill="#9c9ce0"/><path d="M0 7.2 H7 M3.5 7.5 V12.5" stroke="#7474c6" stroke-width="1.3"/></svg><div style="left:2341px;top:178px;width:218px;height:1px;background:#555;"></div><svg style="position:absolute;left:2346px;top:184px" width="15" height="15"><circle cx="5.5" cy="5.5" r="4" fill="#d8dde2" stroke="#1668b4" stroke-width="1.7"/><path d="M8.5 8.5 L13.5 13.5" stroke="#1668b4" stroke-width="2.2"/></svg><div style="left:2364px;top:181px;width:78px;height:22px;background:#454545;border:1px solid #646464;box-sizing:border-box;"></div><div class="t" style="top:183.5px;font-size:13px;line-height:17px;color:#7a7a7a;left:2368px;"><span style="letter-spacing:-0.95px">Search...</span></div><svg style="position:absolute;left:0;top:0" width="2559" height="1392"><path d="M2460 190 H2452 V187 L2446 191.5 L2452 196 V193 H2460 Z" fill="#1f9bf0"/><path d="M2468 190 H2476 V187 L2482 191.5 L2476 196 V193 H2468 Z" fill="#1f9bf0"/><rect x="2488.5" y="182" width="1" height="21" fill="#5a5a5a"/><path d="M2497 187 L2502.5 191.5 L2508 187 M2497 192 L2502.5 196.5 L2508 192" stroke="#9a9a9a" stroke-width="1.8" fill="none"/><path d="M2519 191 L2524.5 186.5 L2530 191" stroke="#fff" stroke-width="1.8" fill="none"/><path d="M2519 196 L2524.5 191.5 L2530 196" stroke="#2b9cf0" stroke-width="1.8" fill="none"/><circle cx="2546" cy="193" r="4" fill="#fff"/><path d="M2543.5 192 L2546 194.5 L2548.5 192" stroke="#333" stroke-width="1" fill="none"/><path d="M2546 187 L2549 184 L2551 187.5" stroke="#86c540" stroke-width="1.5" fill="none"/></svg><div style="left:2341px;top:205px;width:218px;height:1px;background:#555;"></div><div style="left:2425px;top:209px;width:22px;height:22px;background:#4d4d4d;"></div><div style="left:2453px;top:209px;width:22px;height:22px;background:#4d4d4d;"></div><svg style="position:absolute;left:0;top:0" width="2559" height="1392"><rect x="2346.5" y="213.500" width="12" height="12" fill="#6a6a6a" stroke="#808080"/><rect x="2349" y="216" width="7" height="7" fill="none" stroke="#8a8a8a" stroke-dasharray="1.5 1"/><polygon points="2367,218.0 2373,218.0 2370,221.0" fill="#6a6a6a"/><circle cx="2383" cy="222" r="3.4" fill="none" stroke="#6e6e6e" stroke-width="2"/><circle cx="2390" cy="215.500" r="2.6" fill="none" stroke="#6e6e6e" stroke-width="1.6"/><circle cx="2391" cy="224" r="2" fill="none" stroke="#6e6e6e" stroke-width="1.4"/><rect x="2399.5" y="210" width="1" height="21" fill="#5a5a5a"/><rect x="2450" y="210" width="1" height="21" fill="#5a5a5a"/><rect x="2477.500" y="210" width="1" height="21" fill="#5a5a5a"/><rect x="2406.5" y="212" width="15.5" height="16" fill="#b8f030"/><rect x="2406.5" y="212" width="15.5" height="16" fill="none" stroke="#30d8c0" stroke-width="1"/><circle cx="2410.3" cy="215.8" r="3" fill="#ffb020"/><circle cx="2418.2" cy="215.8" r="3" fill="#ffb020"/><circle cx="2410.3" cy="224.2" r="3" fill="#ffb020"/><circle cx="2418.2" cy="224.2" r="3" fill="#ffb020"/><circle cx="2410.3" cy="215.8" r="1.8" fill="#f03018"/><circle cx="2418.2" cy="215.8" r="1.8" fill="#f03018"/><circle cx="2410.3" cy="224.2" r="1.8" fill="#f03018"/><circle cx="2418.2" cy="224.2" r="1.8" fill="#f03018"/><circle cx="2414.2" cy="220" r="2.6" fill="#20d0f0"/><circle cx="2414.2" cy="220" r="1.3" fill="#1040f0"/><rect x="2486" y="213" width="9" height="9" fill="#e84030"/><rect x="2489" y="216" width="9" height="9" fill="#30a0e8"/><rect x="2492" y="219" width="9" height="9" fill="#38c850"/><circle cx="2496.5" cy="223.500" r="2.2" fill="#ffd820"/><polygon points="2502,218.0 2508,218.0 2505,221.0" fill="#ddd"/></svg><svg style="position:absolute;left:2428.5px;top:211px" width="16" height="17"><path d="M0.5 7.5 L9 13 L15.5 6.5 V8 L9 14.6 L0.5 9 Z" fill="#5a2a06"/><path d="M0.5 7.5 L7 2.2 L15.5 6.5 L9 13 Z" fill="#c46f0c"/><ellipse cx="4.6" cy="7.2" rx="2.5" ry="1.7" fill="#ffd030"/><ellipse cx="8" cy="4.4" rx="2.4" ry="1.5" fill="#ffc21c"/><ellipse cx="8.7" cy="10" rx="2.5" ry="1.7" fill="#ffcf2c"/><ellipse cx="12" cy="6.9" rx="2.4" ry="1.6" fill="#f4a814"/><ellipse cx="8.3" cy="7.2" rx="1.3" ry="0.9" fill="#6e3206"/><ellipse cx="4.2" cy="6.7" rx="1" ry="0.6" fill="#fff0a0"/><ellipse cx="7.7" cy="4" rx="1" ry="0.6" fill="#ffe680"/></svg><svg style="position:absolute;left:2456px;top:212px" width="16" height="15"><path d="M4.6 1.6 L13.2 10.8" stroke="#8cc420" stroke-width="2.6" fill="none"/><path d="M6 0.8 Q2 3.2 0.5 8.4 L2.8 7.8 Q4.4 4.6 7.6 3.2 Z" fill="#8cc420"/><path d="M9 5.4 L3 11.4 L5.8 10.8 L10.6 7.6 Z" fill="#8cc420"/><path d="M7.8 0.4 L8.6 2.4 M10.2 2.8 L10.9 4.6" stroke="#8cc420" stroke-width="1.2"/><circle cx="14.3" cy="12" r="1.3" fill="#8cc420"/></svg><div style="left:2341px;top:232px;width:218px;height:1px;background:#555;"></div><div style="left:2341px;top:233px;width:202px;height:510px;background:#252525;"></div><div class="t" style="top:238.0px;font-size:12px;line-height:16px;color:#fff;left:2348px;font-weight:bold;">1</div><div class="t" style="top:286.1px;font-size:12px;line-height:16px;color:#fff;left:2348px;font-weight:bold;">2</div><div class="t" style="top:334.2px;font-size:12px;line-height:16px;color:#fff;left:2348px;font-weight:bold;">3</div><div class="t" style="top:358.2px;font-size:12px;line-height:16px;color:#fff;left:2348px;font-weight:bold;">4</div><div class="t" style="top:502.6px;font-size:12px;line-height:16px;color:#fff;left:2348px;font-weight:bold;">5</div><div style="left:2383.5px;top:234.5px;width:22.5px;height:22.5px;background:#6cb8ff;border-radius:2.5px;border:1px solid #3d9af2;box-sizing:border-box;"></div><svg style="position:absolute;left:2386.5px;top:238px" width="16" height="17"><path d="M0.5 7.5 L9 13 L15.5 6.5 V8 L9 14.6 L0.5 9 Z" fill="#5a2a06"/><path d="M0.5 7.5 L7 2.2 L15.5 6.5 L9 13 Z" fill="#c46f0c"/><ellipse cx="4.6" cy="7.2" rx="2.5" ry="1.7" fill="#ffd030"/><ellipse cx="8" cy="4.4" rx="2.4" ry="1.5" fill="#ffc21c"/><ellipse cx="8.7" cy="10" rx="2.5" ry="1.7" fill="#ffcf2c"/><ellipse cx="12" cy="6.9" rx="2.4" ry="1.6" fill="#f4a814"/><ellipse cx="8.3" cy="7.2" rx="1.3" ry="0.9" fill="#6e3206"/><ellipse cx="4.2" cy="6.7" rx="1" ry="0.6" fill="#fff0a0"/><ellipse cx="7.7" cy="4" rx="1" ry="0.6" fill="#ffe680"/></svg><div class="t" style="top:237.5px;font-size:12px;line-height:16px;color:#fff;left:2410px;"><span style="letter-spacing:-0.88px">TTCPT3SN001</span></div><svg style="position:absolute;left:2401px;top:261.55px" width="16" height="16"><rect x="0" y="0" width="16" height="16" rx="2" fill="#f0521a"/><rect x="0" y="0" width="16" height="7" rx="2" fill="#ff7a38"/><circle cx="6" cy="10" r="2.6" fill="none" stroke="#fff" stroke-width="1.5"/><circle cx="11.5" cy="4.8" r="1.8" fill="none" stroke="#fff" stroke-width="1.2"/></svg><div class="t" style="top:261.6px;font-size:12px;line-height:16px;color:#fff;left:2424px;"><span style="letter-spacing:-0.16px">Extract profiles</span></div><svg style="position:absolute;left:2414.5px;top:288.6px" width="16" height="10"><path d="M0.5 3 Q3 0 5.5 4 T9.5 6.5 Q12 6 15.5 1.5" fill="none" stroke="#2b9cf0" stroke-width="1.4"/></svg><div class="t" style="top:285.6px;font-size:12px;line-height:16px;color:#fff;left:2433px;"><span style="letter-spacing:-0.19px">Extracted profile 1</span></div><svg style="position:absolute;left:2401px;top:309.65px" width="16" height="16"><rect x="0" y="0" width="16" height="16" rx="2" fill="#f0521a"/><rect x="0" y="0" width="16" height="7" rx="2" fill="#ff7a38"/><circle cx="6" cy="10" r="2.6" fill="none" stroke="#fff" stroke-width="1.5"/><circle cx="11.5" cy="4.8" r="1.8" fill="none" stroke="#fff" stroke-width="1.2"/></svg><div class="t" style="top:309.6px;font-size:12px;line-height:16px;color:#fff;left:2424px;"><span style="letter-spacing:-0.03px">Remove form</span></div><svg style="position:absolute;left:2415px;top:332.7px" width="16" height="17"><path d="M0.5 7.5 L9 13 L15.5 6.5 V8 L9 14.6 L0.5 9 Z" fill="#5a2a06"/><path d="M0.5 7.5 L7 2.2 L15.5 6.5 L9 13 Z" fill="#c46f0c"/><ellipse cx="4.6" cy="7.2" rx="2.5" ry="1.7" fill="#ffd030"/><ellipse cx="8" cy="4.4" rx="2.4" ry="1.5" fill="#ffc21c"/><ellipse cx="8.7" cy="10" rx="2.5" ry="1.7" fill="#ffcf2c"/><ellipse cx="12" cy="6.9" rx="2.4" ry="1.6" fill="#f4a814"/><ellipse cx="8.3" cy="7.2" rx="1.3" ry="0.9" fill="#6e3206"/><ellipse cx="4.2" cy="6.7" rx="1" ry="0.6" fill="#fff0a0"/><ellipse cx="7.7" cy="4" rx="1" ry="0.6" fill="#ffe680"/></svg><div class="t" style="top:333.7px;font-size:12px;line-height:16px;color:#fff;left:2433px;">Surface, form remove</div><svg style="position:absolute;left:2415px;top:356.75px" width="16" height="17"><path d="M0.5 7.5 L9 13 L15.5 6.5 V8 L9 14.6 L0.5 9 Z" fill="#5a2a06"/><path d="M0.5 7.5 L7 2.2 L15.5 6.5 L9 13 Z" fill="#c46f0c"/><ellipse cx="4.6" cy="7.2" rx="2.5" ry="1.7" fill="#ffd030"/><ellipse cx="8" cy="4.4" rx="2.4" ry="1.5" fill="#ffc21c"/><ellipse cx="8.7" cy="10" rx="2.5" ry="1.7" fill="#ffcf2c"/><ellipse cx="12" cy="6.9" rx="2.4" ry="1.6" fill="#f4a814"/><ellipse cx="8.3" cy="7.2" rx="1.3" ry="0.9" fill="#6e3206"/><ellipse cx="4.2" cy="6.7" rx="1" ry="0.6" fill="#fff0a0"/><ellipse cx="7.7" cy="4" rx="1" ry="0.6" fill="#ffe680"/></svg><div class="t" style="top:357.8px;font-size:12px;line-height:16px;color:#fff;left:2433px;font-weight:bold;text-decoration:underline;letter-spacing:-0.35px;">Form alone (LSP 12)</div><svg style="position:absolute;left:2429px;top:381.8px" width="16" height="15"><path d="M4.6 1.6 L13.2 10.8" stroke="#8cc420" stroke-width="2.6" fill="none"/><path d="M6 0.8 Q2 3.2 0.5 8.4 L2.8 7.8 Q4.4 4.6 7.6 3.2 Z" fill="#8cc420"/><path d="M9 5.4 L3 11.4 L5.8 10.8 L10.6 7.6 Z" fill="#8cc420"/><path d="M7.8 0.4 L8.6 2.4 M10.2 2.8 L10.9 4.6" stroke="#8cc420" stroke-width="1.2"/><circle cx="14.3" cy="12" r="1.3" fill="#8cc420"/></svg><div class="t" style="top:381.8px;font-size:12px;line-height:16px;color:#fff;left:2448px;">[4] Pseudo-color v</div><svg style="position:absolute;left:2429px;top:405.85px" width="16" height="15"><path d="M4.6 1.6 L13.2 10.8" stroke="#8cc420" stroke-width="2.6" fill="none"/><path d="M6 0.8 Q2 3.2 0.5 8.4 L2.8 7.8 Q4.4 4.6 7.6 3.2 Z" fill="#8cc420"/><path d="M9 5.4 L3 11.4 L5.8 10.8 L10.6 7.6 Z" fill="#8cc420"/><path d="M7.8 0.4 L8.6 2.4 M10.2 2.8 L10.9 4.6" stroke="#8cc420" stroke-width="1.2"/><circle cx="14.3" cy="12" r="1.3" fill="#8cc420"/></svg><div class="t" style="top:405.9px;font-size:12px;line-height:16px;color:#fff;left:2448px;"><span style="letter-spacing:-0.17px">[5] 3D view</span></div><svg style="position:absolute;left:2429px;top:429.9px" width="16" height="15"><path d="M4.6 1.6 L13.2 10.8" stroke="#8cc420" stroke-width="2.6" fill="none"/><path d="M6 0.8 Q2 3.2 0.5 8.4 L2.8 7.8 Q4.4 4.6 7.6 3.2 Z" fill="#8cc420"/><path d="M9 5.4 L3 11.4 L5.8 10.8 L10.6 7.6 Z" fill="#8cc420"/><path d="M7.8 0.4 L8.6 2.4 M10.2 2.8 L10.9 4.6" stroke="#8cc420" stroke-width="1.2"/><circle cx="14.3" cy="12" r="1.3" fill="#8cc420"/></svg><div class="t" style="top:429.9px;font-size:12px;line-height:16px;color:#fff;left:2448px;"><span style="letter-spacing:-0.04px">[7] Step height</span></div><svg style="position:absolute;left:2429px;top:453.95000000000005px" width="16" height="15"><path d="M4.6 1.6 L13.2 10.8" stroke="#8cc420" stroke-width="2.6" fill="none"/><path d="M6 0.8 Q2 3.2 0.5 8.4 L2.8 7.8 Q4.4 4.6 7.6 3.2 Z" fill="#8cc420"/><path d="M9 5.4 L3 11.4 L5.8 10.8 L10.6 7.6 Z" fill="#8cc420"/><path d="M7.8 0.4 L8.6 2.4 M10.2 2.8 L10.9 4.6" stroke="#8cc420" stroke-width="1.2"/><circle cx="14.3" cy="12" r="1.3" fill="#8cc420"/></svg><div class="t" style="top:454.0px;font-size:12px;line-height:16px;color:#fff;left:2448px;">[8] Parameters tab</div><svg style="position:absolute;left:2431px;top:478.0px" width="16" height="16"><rect x="0" y="0" width="16" height="16" rx="2" fill="#f0521a"/><rect x="0" y="0" width="16" height="7" rx="2" fill="#ff7a38"/><circle cx="6" cy="10" r="2.6" fill="none" stroke="#fff" stroke-width="1.5"/><circle cx="11.5" cy="4.8" r="1.8" fill="none" stroke="#fff" stroke-width="1.2"/></svg><div class="t" style="top:478.0px;font-size:12px;line-height:16px;color:#fff;left:2454px;"><span style="letter-spacing:-0.16px">Extract profiles</span></div><svg style="position:absolute;left:2444.5px;top:505.05px" width="16" height="10"><path d="M0.5 3 Q3 0 5.5 4 T9.5 6.5 Q12 6 15.5 1.5" fill="none" stroke="#2b9cf0" stroke-width="1.4"/></svg><div class="t" style="top:502.1px;font-size:12px;line-height:16px;color:#fff;left:2463px;">Extracted profil</div><svg style="position:absolute;left:2459px;top:526.1px" width="16" height="15"><path d="M4.6 1.6 L13.2 10.8" stroke="#8cc420" stroke-width="2.6" fill="none"/><path d="M6 0.8 Q2 3.2 0.5 8.4 L2.8 7.8 Q4.4 4.6 7.6 3.2 Z" fill="#8cc420"/><path d="M9 5.4 L3 11.4 L5.8 10.8 L10.6 7.6 Z" fill="#8cc420"/><path d="M7.8 0.4 L8.6 2.4 M10.2 2.8 L10.9 4.6" stroke="#8cc420" stroke-width="1.2"/><circle cx="14.3" cy="12" r="1.3" fill="#8cc420"/></svg><div class="t" style="top:526.1px;font-size:12px;line-height:16px;color:#fff;left:2478.5px;">[6] Profile cu</div><svg style="position:absolute;left:0;top:0" width="2559" height="1392"><polygon points="2365.5,244.25 2374.5,244.25 2370,248.75" fill="#fff"/><path d="M2378.5 257 V316.6 H2381 M2378.5 268.6 H2381" stroke="#fff" stroke-width="1" fill="none" shape-rendering="crispEdges"/><polygon points="2381.0,268.3 2390.0,268.3 2385.5,272.8" fill="#fff"/><polygon points="2381.0,316.4 2390.0,316.4 2385.5,320.9" fill="#fff"/><path d="M2393.5 281.6 V293.6 H2403" stroke="#fff" stroke-width="1" fill="none" shape-rendering="crispEdges"/><path d="M2393.5 329.6 V364.8 H2396 M2393.5 341.7 H2403" stroke="#fff" stroke-width="1" fill="none" shape-rendering="crispEdges"/><polygon points="2396.0,364.5 2405.0,364.5 2400.5,369.0" fill="#fff"/><path d="M2408.5 377.8 V485.0 H2411 M2408.5 389.8 H2418 M2408.5 413.9 H2418 M2408.5 437.9 H2418 M2408.5 462.0 H2418" stroke="#fff" stroke-width="1" fill="none" shape-rendering="crispEdges"/><polygon points="2411.0,484.75 2420.0,484.75 2415.5,489.25" fill="#fff"/><path d="M2423.5 498.0 V509.1 H2426" stroke="#fff" stroke-width="1" fill="none" shape-rendering="crispEdges"/><polygon points="2426.0,508.8 2435.0,508.8 2430.5,513.3" fill="#fff"/><path d="M2438.5 522.0 V534.1 H2448" stroke="#fff" stroke-width="1" fill="none" shape-rendering="crispEdges"/></svg><div style="left:2543px;top:233px;width:16px;height:510px;background:#3e3e3e;"></div><div style="left:2543px;top:233px;width:16px;height:17px;background:#555;"></div><div style="left:2543px;top:726px;width:16px;height:17px;background:#555;"></div><div style="left:2544px;top:250px;width:15px;height:441px;background:#5a5a5a;"></div><div style="left:2341px;top:743px;width:202px;height:17px;background:#3e3e3e;"></div><div style="left:2341px;top:744px;width:15px;height:15px;background:#555;"></div><div style="left:2527px;top:744px;width:15px;height:15px;background:#555;"></div><div style="left:2358px;top:744px;width:146px;height:15px;background:#5a5a5a;"></div><div style="left:2543px;top:743px;width:16px;height:17px;background:#3a3a3a;"></div><svg style="position:absolute;left:0;top:0" width="2559" height="1392"><polygon points="2547,243.5 2555,243.5 2551,239.5" fill="#9a9a9a"/><polygon points="2547,732.5 2555,732.5 2551,736.5" fill="#9a9a9a"/><polygon points="2350.5,747.5 2350.5,755.5 2346.5,751.5" fill="#9a9a9a"/><polygon points="2532.5,747.5 2532.5,755.5 2536.5,751.5" fill="#9a9a9a"/></svg><div style="left:2341px;top:760px;width:218px;height:1px;background:#555;"></div><div style="left:2341px;top:762px;width:218px;height:1px;background:#555;"></div>
<div style="left:2341px;top:763px;width:218px;height:27px;background:#444;"></div><div class="t" style="top:768.0px;font-size:15.5px;line-height:19.5px;color:#fff;left:2345px;"><span style="letter-spacing:-0.10px">Result manager</span></div><svg style="position:absolute;left:2543px;top:771px" width="7" height="13"><rect x="1.8" y="0" width="3.6" height="7" fill="#7474c6"/><rect x="2.6" y="1" width="1.2" height="5" fill="#9c9ce0"/><path d="M0 7.2 H7 M3.5 7.5 V12.5" stroke="#7474c6" stroke-width="1.3"/></svg><div style="left:2341px;top:790px;width:218px;height:1px;background:#555;"></div><svg style="position:absolute;left:0;top:0" width="2559" height="1392"><rect x="2348" y="796" width="9" height="13" rx="1" fill="#38b0d8"/><rect x="2349.5" y="797.5" width="6" height="3" fill="#e8f8ff"/><path d="M2350 803 H2355 M2350 805.500 H2355 M2350 807.500 H2355" stroke="#fff" stroke-width="1" stroke-dasharray="1.3 0.7"/><path d="M2356 802.500 H2360 M2358.500 800.500 L2360.500 802.500 L2358.500 804.500" stroke="#2b8cf0" stroke-width="1" fill="none"/><polygon points="2367,801.5 2373,801.5 2370,804.5" fill="#ddd"/><path d="M2381 800 H2379 V806 H2381 M2390 800 H2392 V806 H2390 M2381.500 803 H2389.500" stroke="#e02020" stroke-width="1.2" fill="none"/><circle cx="2391.500" cy="808" r="1.8" fill="#86c540"/><rect x="2399.5" y="795" width="1" height="19" fill="#5a5a5a"/><path d="M2408.500 799 L2414 803.500 L2419.500 799 M2408.500 804 L2414 808.500 L2419.500 804" stroke="#9a9a9a" stroke-width="1.8" fill="none"/><path d="M2430.500 803 L2436 798.500 L2441.500 803" stroke="#fff" stroke-width="1.8" fill="none"/><path d="M2430.500 808 L2436 803.500 L2441.500 808" stroke="#2b9cf0" stroke-width="1.8" fill="none"/><rect x="2451" y="796" width="14" height="14" fill="#e8f0ff"/><path d="M2472.500 803.500 Q2480 797 2487.500 803.500 Q2480 810 2472.500 803.500 Z" fill="#6e6e6e"/><circle cx="2480" cy="803.500" r="2" fill="#3a3a3a"/></svg><div class="t" style="top:794.5px;font-size:14px;line-height:18px;color:#000;left:2158px;width:600px;text-align:center;font-weight:bold;">?</div><div style="left:2341px;top:817px;width:218px;height:1px;background:#555;"></div><svg style="position:absolute;left:2346px;top:824px" width="15" height="15"><circle cx="5.5" cy="5.5" r="4" fill="#d8dde2" stroke="#1668b4" stroke-width="1.7"/><path d="M8.5 8.5 L13.5 13.5" stroke="#1668b4" stroke-width="2.2"/></svg><div style="left:2364px;top:820px;width:194px;height:23px;background:#454545;border:1px solid #646464;box-sizing:border-box;"></div><div class="t" style="top:823.2px;font-size:12.5px;line-height:16.5px;color:#707070;left:2368px;"><span style="letter-spacing:-0.81px">i.e. Ra, Rz...</span></div><div style="left:2341px;top:845px;width:218px;height:1px;background:#555;"></div><div style="left:2341px;top:846px;width:202px;height:510px;background:#252525;"></div><div style="position:absolute;left:2341px;top:846px;width:202px;height:510px;overflow:hidden"><div class="t" style="top:0.3px;font-size:12px;line-height:16px;color:#fff;left:46px;"><span style="letter-spacing:-0.04px">[7] Step height</span></div><div class="t" style="top:19.3px;font-size:12px;line-height:16px;color:#fff;left:49px;"><span style="letter-spacing:-0.56px">P2 - P1</span></div><div class="t" style="top:38.3px;font-size:12px;line-height:16px;color:#fff;left:71px;"><span style="letter-spacing:-0.04px">Zmean difference</span></div><div class="t" style="top:38.3px;font-size:12px;line-height:16px;color:#fff;left:168px;"><span style="letter-spacing:-0.47px">18.23 µ</span></div><div class="t" style="top:57.3px;font-size:12px;line-height:16px;color:#fff;left:71px;"><span style="letter-spacing:0.02px">Angle difference</span></div><div class="t" style="top:57.3px;font-size:12px;line-height:16px;color:#fff;left:168px;">*****</div><div class="t" style="top:76.3px;font-size:12px;line-height:16px;color:#fff;left:49px;"><span style="letter-spacing:-0.56px">P3 - P2</span></div><div class="t" style="top:95.3px;font-size:12px;line-height:16px;color:#fff;left:71px;"><span style="letter-spacing:-0.04px">Zmean difference</span></div><div class="t" style="top:95.3px;font-size:12px;line-height:16px;color:#fff;left:168px;"><span style="letter-spacing:-0.47px">7.372 µ</span></div><div class="t" style="top:114.3px;font-size:12px;line-height:16px;color:#fff;left:71px;"><span style="letter-spacing:0.02px">Angle difference</span></div><div class="t" style="top:114.3px;font-size:12px;line-height:16px;color:#fff;left:168px;">0.00094</div><div class="t" style="top:133.3px;font-size:12px;line-height:16px;color:#fff;left:49px;"><span style="letter-spacing:-0.56px">P4 - P3</span></div><div class="t" style="top:152.3px;font-size:12px;line-height:16px;color:#fff;left:71px;"><span style="letter-spacing:-0.04px">Zmean difference</span></div><div class="t" style="top:152.3px;font-size:12px;line-height:16px;color:#fff;left:168px;"><span style="letter-spacing:-0.47px">15.82 µ</span></div><div class="t" style="top:171.3px;font-size:12px;line-height:16px;color:#fff;left:71px;"><span style="letter-spacing:0.02px">Angle difference</span></div><div class="t" style="top:171.3px;font-size:12px;line-height:16px;color:#fff;left:168px;">0.0008</div><div class="t" style="top:190.3px;font-size:12px;line-height:16px;color:#fff;left:49px;"><span style="letter-spacing:-0.56px">P5 - P4</span></div><div class="t" style="top:209.3px;font-size:12px;line-height:16px;color:#fff;left:71px;"><span style="letter-spacing:-0.04px">Zmean difference</span></div><div class="t" style="top:209.3px;font-size:12px;line-height:16px;color:#fff;left:168px;"><span style="letter-spacing:-0.47px">52.73 µ</span></div><div class="t" style="top:228.3px;font-size:12px;line-height:16px;color:#fff;left:71px;"><span style="letter-spacing:0.02px">Angle difference</span></div><div class="t" style="top:228.3px;font-size:12px;line-height:16px;color:#fff;left:168px;">0.0042</div><div class="t" style="top:247.3px;font-size:12px;line-height:16px;color:#fff;left:49px;"><span style="letter-spacing:-0.56px">P6 - P5</span></div><div class="t" style="top:266.3px;font-size:12px;line-height:16px;color:#fff;left:71px;"><span style="letter-spacing:-0.04px">Zmean difference</span></div><div class="t" style="top:266.3px;font-size:12px;line-height:16px;color:#fff;left:168px;"><span style="letter-spacing:-0.47px">52.19 µ</span></div><div class="t" style="top:285.3px;font-size:12px;line-height:16px;color:#fff;left:71px;"><span style="letter-spacing:0.02px">Angle difference</span></div><div class="t" style="top:285.3px;font-size:12px;line-height:16px;color:#fff;left:168px;">0.0085</div><div class="t" style="top:304.3px;font-size:12px;line-height:16px;color:#fff;left:49px;"><span style="letter-spacing:-0.56px">P7 - P6</span></div><div class="t" style="top:323.3px;font-size:12px;line-height:16px;color:#fff;left:71px;"><span style="letter-spacing:-0.04px">Zmean difference</span></div><div class="t" style="top:323.3px;font-size:12px;line-height:16px;color:#fff;left:168px;"><span style="letter-spacing:-0.47px">16.62 µ</span></div><div class="t" style="top:342.3px;font-size:12px;line-height:16px;color:#fff;left:71px;"><span style="letter-spacing:0.02px">Angle difference</span></div><div class="t" style="top:342.3px;font-size:12px;line-height:16px;color:#fff;left:168px;">*****</div><div class="t" style="top:361.3px;font-size:12px;line-height:16px;color:#fff;left:49px;"><span style="letter-spacing:-0.56px">Plane 1</span></div><div class="t" style="top:380.3px;font-size:12px;line-height:16px;color:#fff;left:71px;"><span style="letter-spacing:0.23px">Zmin</span></div><div class="t" style="top:380.3px;font-size:12px;line-height:16px;color:#fff;left:168px;"><span style="letter-spacing:-0.47px">44.94 µ</span></div><div class="t" style="top:399.3px;font-size:12px;line-height:16px;color:#fff;left:71px;"><span style="letter-spacing:-0.11px">Zmean</span></div><div class="t" style="top:399.3px;font-size:12px;line-height:16px;color:#fff;left:168px;"><span style="letter-spacing:-0.47px">45.97 µ</span></div><div class="t" style="top:418.3px;font-size:12px;line-height:16px;color:#fff;left:71px;"><span style="letter-spacing:-0.20px">Zmax</span></div><div class="t" style="top:418.3px;font-size:12px;line-height:16px;color:#fff;left:168px;"><span style="letter-spacing:-0.47px">47.17 µ</span></div><div class="t" style="top:437.3px;font-size:12px;line-height:16px;color:#fff;left:49px;"><span style="letter-spacing:-0.56px">Plane 2</span></div><div class="t" style="top:456.3px;font-size:12px;line-height:16px;color:#fff;left:71px;"><span style="letter-spacing:0.23px">Zmin</span></div><div class="t" style="top:456.3px;font-size:12px;line-height:16px;color:#fff;left:168px;"><span style="letter-spacing:-0.47px">62.22 µ</span></div><div class="t" style="top:475.3px;font-size:12px;line-height:16px;color:#fff;left:71px;"><span style="letter-spacing:-0.11px">Zmean</span></div><div class="t" style="top:475.3px;font-size:12px;line-height:16px;color:#fff;left:168px;"><span style="letter-spacing:-0.47px">64.20 µ</span></div><div class="t" style="top:494.3px;font-size:12px;line-height:16px;color:#fff;left:71px;"><span style="letter-spacing:-0.20px">Zmax</span></div><div class="t" style="top:494.3px;font-size:12px;line-height:16px;color:#fff;left:168px;"><span style="letter-spacing:-0.47px">67.72 µ</span></div></div><svg style="position:absolute;left:0;top:0" width="2559" height="1392"><path d="M2360.500 846 V1356 M2380.500 864 V1356" stroke="#8a8a8a" stroke-width="1" stroke-dasharray="1 1.5" fill="none"/><polygon points="2358.5,857.8 2364.5,857.8 2364.5,851.8" fill="#fff"/><path d="M2371 857.3 H2374.500 V850.8 H2379.500 V857.3 H2383" stroke="#2b9cf0" stroke-width="1.3" fill="none"/><path d="M2377 847.3 V849.3 M2377 859.3 V862.3" stroke="#ddd" stroke-width="1"/><polygon points="2379.5,876.8 2385.5,876.8 2385.5,870.8" fill="#fff"/><path d="M2400.500 883.3 V913.3 H2403" stroke="#8a8a8a" stroke-width="1" stroke-dasharray="1 1.5" fill="none"/><polygon points="2379.5,933.8 2385.5,933.8 2385.5,927.8" fill="#fff"/><path d="M2400.500 940.3 V970.3 H2403" stroke="#8a8a8a" stroke-width="1" stroke-dasharray="1 1.5" fill="none"/><polygon points="2379.5,990.8 2385.5,990.8 2385.5,984.8" fill="#fff"/><path d="M2400.500 997.3 V1027.3 H2403" stroke="#8a8a8a" stroke-width="1" stroke-dasharray="1 1.5" fill="none"/><polygon points="2379.5,1047.8 2385.5,1047.8 2385.5,1041.8" fill="#fff"/><path d="M2400.500 1054.3 V1084.3 H2403" stroke="#8a8a8a" stroke-width="1" stroke-dasharray="1 1.5" fill="none"/><polygon points="2379.5,1104.8 2385.5,1104.8 2385.5,1098.8" fill="#fff"/><path d="M2400.500 1111.3 V1141.3 H2403" stroke="#8a8a8a" stroke-width="1" stroke-dasharray="1 1.5" fill="none"/><polygon points="2379.5,1161.8 2385.5,1161.8 2385.5,1155.8" fill="#fff"/><path d="M2400.500 1168.3 V1198.3 H2403" stroke="#8a8a8a" stroke-width="1" stroke-dasharray="1 1.5" fill="none"/><polygon points="2379.5,1218.8 2385.5,1218.8 2385.5,1212.8" fill="#fff"/><path d="M2400.500 1225.3 V1274.3 H2403" stroke="#8a8a8a" stroke-width="1" stroke-dasharray="1 1.5" fill="none"/><polygon points="2379.5,1294.8 2385.5,1294.8 2385.5,1288.8" fill="#fff"/><path d="M2400.500 1301.3 V1350.3 H2403" stroke="#8a8a8a" stroke-width="1" stroke-dasharray="1 1.5" fill="none"/></svg><div style="left:2543px;top:846px;width:16px;height:510px;background:#3e3e3e;"></div><div style="left:2543px;top:846px;width:16px;height:17px;background:#555;"></div><div style="left:2543px;top:1339px;width:16px;height:17px;background:#555;"></div><div style="left:2544px;top:1152px;width:15px;height:81px;background:#5a5a5a;"></div><div style="left:2341px;top:1356px;width:202px;height:16px;background:#3e3e3e;"></div><div style="left:2341px;top:1357px;width:15px;height:15px;background:#555;"></div><div style="left:2527px;top:1357px;width:15px;height:15px;background:#555;"></div><div style="left:2358px;top:1357px;width:137px;height:15px;background:#5a5a5a;"></div><div style="left:2543px;top:1356px;width:16px;height:16px;background:#3a3a3a;"></div><svg style="position:absolute;left:0;top:0" width="2559" height="1392"><polygon points="2547,856.5 2555,856.5 2551,852.5" fill="#9a9a9a"/><polygon points="2547,1345.5 2555,1345.5 2551,1349.5" fill="#9a9a9a"/><polygon points="2350.5,1360.5 2350.5,1368.5 2346.5,1364.5" fill="#9a9a9a"/><polygon points="2532.5,1360.5 2532.5,1368.5 2536.5,1364.5" fill="#9a9a9a"/></svg>
<div style="left:0px;top:1372px;width:2559px;height:20px;background:#2d2d2d;"></div><div class="t" style="top:1374.5px;font-size:12px;line-height:16px;color:#fff;left:4px;"><span style="letter-spacing:-0.64px">Ready</span></div><div class="t" style="top:1374.5px;font-size:12px;line-height:16px;color:#fff;left:1765px;"><span style="letter-spacing:-0.40px">TTCPT3SN001 &gt; Form alone (LSP 12) ( 35 x 11 )</span></div><div class="t" style="top:1374.5px;font-size:12px;line-height:16px;color:#fff;left:2272px;"><span style="letter-spacing:-0.22px">Page 1 / 2</span></div><div class="t" style="top:1374.5px;font-size:12px;line-height:16px;color:#fff;left:2348px;"><span style="letter-spacing:-0.30px">100%</span></div><svg style="position:absolute;left:0;top:0" width="2559" height="1392"><path d="M2216.500 1377.500 H2223 L2226.500 1381 V1388.500 H2216.500 Z" fill="#fff"/><path d="M2228.500 1384 V1389 M2227 1387.500 L2228.500 1389 L2230 1387.500" stroke="#2b8cf0" stroke-width="1" fill="none"/><path d="M2240.500 1377.500 H2247 L2250.500 1381 V1388.500 H2240.500 Z" fill="#fff"/><path d="M2252.500 1384 V1389" stroke="#9a9a9a" stroke-width="1" fill="none"/><rect x="2391" y="1382" width="6" height="1.5" fill="#fff"/><rect x="2403" y="1382" width="97" height="1" fill="#fff"/><rect x="2450" y="1376.500" width="2.5" height="12" fill="#fff"/><path d="M2504 1382.700 H2512 M2508 1378.700 V1386.700" stroke="#fff" stroke-width="1.5"/><rect x="2520.500" y="1375.500" width="12" height="14" fill="#fff"/><path d="M2526.500 1376.500 L2529 1380 H2524 Z M2526.500 1388.500 L2529 1385 H2524 Z M2521 1382.500 L2524 1380.500 V1384.500 Z M2532 1382.500 L2529 1380.500 V1384.500 Z" fill="#1b75d0"/><path d="M2541.500 1376.500 H2552 L2555.500 1380 V1389.500 H2541.500 Z" fill="#fff"/><path d="M2542.500 1383 L2546 1380.500 V1385.500 Z M2554.500 1383 L2551 1380.500 V1385.500 Z" fill="#1b75d0"/></svg>
</body></html>
